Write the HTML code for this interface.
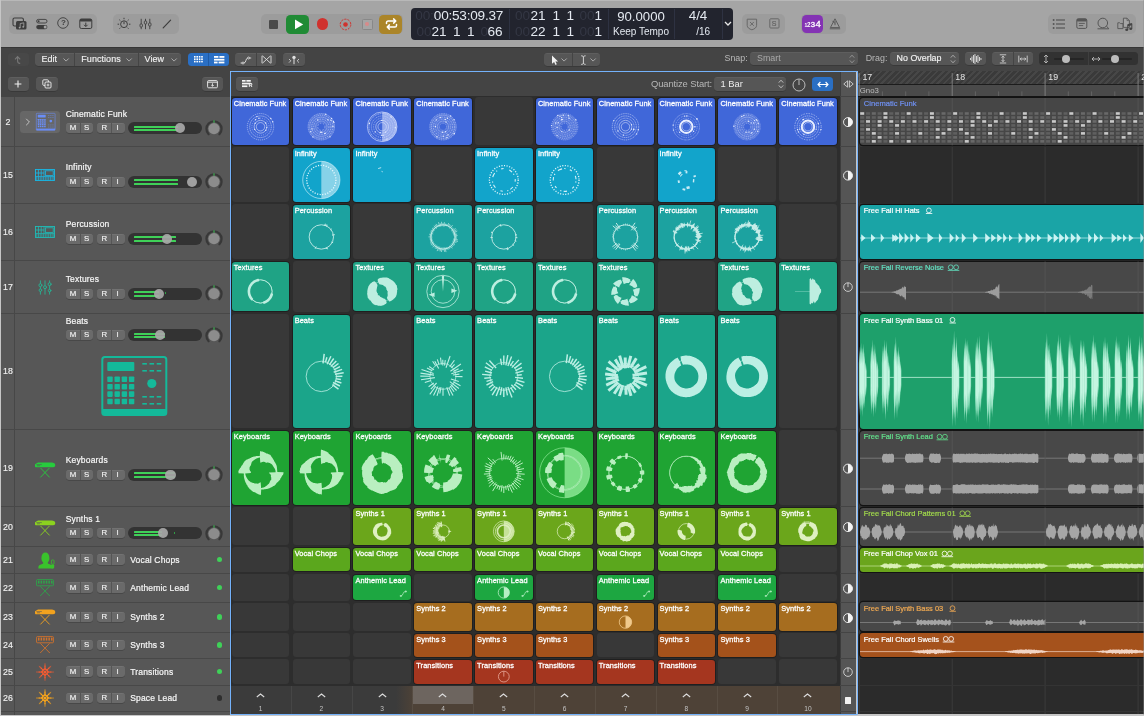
<!DOCTYPE html>
<html lang="en"><head><meta charset="utf-8"><title>Live Loops</title>
<style>
html,body{margin:0;padding:0}
body{width:1144px;height:716px;position:relative;overflow:hidden;background:#c6c6c6;font-family:"Liberation Sans",sans-serif;-webkit-font-smoothing:antialiased}
div,span.t,svg{position:absolute;box-sizing:border-box}
span.t{white-space:nowrap;line-height:1;display:block}
svg{overflow:visible}
.ms{background:#6a6a6a;border-radius:3px;box-shadow:0 0.5px 0 rgba(0,0,0,.35), inset 0 0.5px 0 rgba(255,255,255,.12)}
.cell{border-radius:3px}
.ec{border-radius:3px;background:#383838}
.tb{background:#565656;border-radius:3.5px;box-shadow:0 0.5px 0 rgba(0,0,0,.3), inset 0 0.5px 0 rgba(255,255,255,.1)}
.tg{background:rgba(0,0,0,.05);border-radius:5px}
#app{left:0;top:0;width:1144px;height:716px;will-change:transform}
</style></head><body><div id="app">

<div style="left:1px;top:0px;width:1143px;height:47px;background:#a5a5a5;"></div>
<div style="left:1px;top:0px;width:1143px;height:0.8px;background:#b8b8b8;"></div>
<div class="tg" style="left:9px;top:14px;width:88px;height:19.5px;"></div>
<div class="tg" style="left:113px;top:14px;width:66px;height:19.5px;"></div>
<div class="tg" style="left:261px;top:14px;width:142px;height:19.5px;"></div>
<div class="tg" style="left:741.5px;top:14px;width:43.5px;height:19.5px;"></div>
<div class="tg" style="left:801px;top:14px;width:45px;height:19.5px;"></div>
<div class="tg" style="left:1048px;top:14px;width:87.6px;height:19.5px;"></div>
<svg style="left:12.3px;top:17.4px;" width="16" height="14" viewBox="0 0 16 14"><rect x="1" y="1" width="10.4" height="8" rx="1.5" fill="none" stroke="#3d3d3d" stroke-width="1.1"/>
<rect x="4" y="4" width="10.5" height="8.5" rx="1.5" fill="#3d3d3d"/>
<path d="M8.2 10.6V6.6l3.6-.8v4" stroke="#a5a5a5" stroke-width=".8" fill="none"/><circle cx="7.6" cy="10.6" r=".9" fill="#a5a5a5"/><circle cx="11.2" cy="9.8" r=".9" fill="#a5a5a5"/></svg>
<svg style="left:35px;top:17.5px;" width="14" height="13" viewBox="0 0 14 13"><rect x="1.6" y="1.4" width="10.4" height="3.6" rx="1.8" fill="none" stroke="#3d3d3d" stroke-width="0.9"/><circle cx="3.6" cy="3.2" r="1" fill="#3d3d3d"/>
<rect x="1.2" y="7" width="11.2" height="4.2" rx="2.1" fill="#3d3d3d"/><circle cx="10.2" cy="9.1" r="1.5" fill="#a5a5a5"/></svg>
<svg style="left:57.4px;top:17.3px;" width="12" height="12" viewBox="0 0 12 12"><circle cx="6" cy="6" r="5.3" fill="none" stroke="#3d3d3d" stroke-width="0.9"/></svg>
<span class="t" style="top:19.43px;font-size:8px;color:#3d3d3d;font-weight:700;left:63.5px;transform:translateX(-50%);">?</span>
<svg style="left:79px;top:18px;" width="14" height="12" viewBox="0 0 14 12"><rect x="0.8" y="1" width="12" height="9.5" rx="1.5" fill="none" stroke="#3d3d3d" stroke-width="1"/><rect x="0.8" y="1" width="12" height="2.4" rx="1" fill="#3d3d3d"/>
<path d="M6.8 4.6v3.6M5 6.8l1.8 1.8 1.8-1.8" stroke="#3d3d3d" stroke-width="1" fill="none"/></svg>
<svg style="left:116.7px;top:16.9px;" width="14" height="14" viewBox="0 0 14 14"><circle cx="7" cy="7.2" r="3.4" fill="none" stroke="#3d3d3d" stroke-width="1"/><path d="M7 7.2V4.6" stroke="#3d3d3d" stroke-width="1"/>
<g stroke="#3d3d3d" stroke-width="1" stroke-linecap="round"><path d="M7 1.2v.6M2.6 3l.5.5M11.4 3l-.5.5M1 7.2h.7M12.3 7.2h.7M2.8 11.4l.4-.4M11.2 11.4l-.4-.4"/></g></svg>
<svg style="left:139px;top:18px;" width="13" height="12" viewBox="0 0 13 12"><g stroke="#3d3d3d" stroke-width="0.9" fill="#a5a5a5"><path d="M2.2 0.8v10.4M6.5 0.8v10.4M10.8 0.8v10.4"/>
<rect x="1" y="6" width="2.4" height="3" rx=".8"/><rect x="5.3" y="3" width="2.4" height="3" rx=".8"/><rect x="9.6" y="5" width="2.4" height="3" rx=".8"/></g></svg>
<svg style="left:162px;top:19px;" width="10" height="10" viewBox="0 0 10 10"><path d="M1.2 8.8L8.6 1.2" stroke="#3d3d3d" stroke-width="1.2" stroke-linecap="round"/></svg>
<div style="left:268.7px;top:19.6px;width:9.2px;height:9.2px;background:#4a4a4a;border-radius:1px;"></div>
<div style="left:286px;top:14.5px;width:23.4px;height:19px;background:#208b35;border-radius:4.5px;"></div>
<svg style="left:293.5px;top:18.5px;" width="10" height="11" viewBox="0 0 10 11"><path d="M1 0.6L9.2 5.4 1 10.2z" fill="#fff"/></svg>
<div style="left:316.6px;top:18.3px;width:11.4px;height:11.4px;background:#d0322e;border-radius:6px;"></div>
<svg style="left:338px;top:16.5px;" width="15" height="15" viewBox="0 0 15 15"><circle cx="7.5" cy="7.5" r="5.3" fill="none" stroke="#d0322e" stroke-width="1" stroke-dasharray="2.2 1.1"/><circle cx="7.5" cy="7.5" r="2.3" fill="#d0322e"/></svg>
<div style="left:362px;top:19px;width:10.5px;height:10.5px;background:#a5a5a5;border-radius:1.5px;border:0.7px solid #888;"></div>
<div style="left:365.2px;top:22.2px;width:4px;height:4px;background:#d88a8a;border-radius:2px;"></div>
<div style="left:379px;top:14.5px;width:23.4px;height:19px;background:#ab8529;border-radius:4.5px;"></div>
<svg style="left:384.5px;top:18px;" width="13" height="12" viewBox="0 0 13 12"><g stroke="#fff" stroke-width="1.5" fill="none" stroke-linecap="round" stroke-linejoin="round">
<path d="M1.5 5.6V4.6a1.6 1.6 0 0 1 1.6-1.6h7.4M8.6 0.9l2.2 2.1-2.2 2.1"/><path d="M11.5 6.4v1a1.6 1.6 0 0 1-1.6 1.6H2.5M4.4 11.1L2.2 9l2.2-2.1"/></g></svg>
<div style="left:411px;top:8px;width:322px;height:32px;background:#22242e;border-radius:4px;"></div>
<div style="left:509px;top:9px;width:0.8px;height:30px;background:#2e3242;"></div>
<div style="left:607.5px;top:9px;width:0.8px;height:30px;background:#2e3242;"></div>
<div style="left:674.3px;top:9px;width:0.8px;height:30px;background:#2e3242;"></div>
<div style="left:722px;top:9px;width:0.8px;height:30px;background:#2e3242;"></div>
<span class="t" style="top:9.29px;font-size:13.6px;color:#343744;letter-spacing:-0.2px;left:415.3px;">00:</span>
<span class="t" style="top:9.29px;font-size:13.6px;color:#e4e9f0;letter-spacing:-0.22px;left:433.8px;">00:53:09.37</span>
<span class="t" style="top:24.69px;font-size:13.6px;color:#343744;letter-spacing:-0.2px;left:416.6px;">00</span>
<span class="t" style="top:24.69px;font-size:13.6px;color:#e4e9f0;letter-spacing:-0.2px;left:431.6px;">21</span>
<span class="t" style="top:24.69px;font-size:13.6px;color:#e4e9f0;left:453px;">1</span>
<span class="t" style="top:24.69px;font-size:13.6px;color:#e4e9f0;left:467px;">1</span>
<span class="t" style="top:24.69px;font-size:13.6px;color:#343744;left:480.6px;">0</span>
<span class="t" style="top:24.69px;font-size:13.6px;color:#e4e9f0;letter-spacing:-0.2px;left:487.6px;">66</span>
<span class="t" style="top:9.29px;font-size:13.6px;color:#343744;left:515px;">00</span>
<span class="t" style="top:9.29px;font-size:13.6px;color:#e4e9f0;left:530.5px;">21</span>
<span class="t" style="top:9.29px;font-size:13.6px;color:#e4e9f0;left:552.5px;">1</span>
<span class="t" style="top:9.29px;font-size:13.6px;color:#e4e9f0;left:566.5px;">1</span>
<span class="t" style="top:9.29px;font-size:13.6px;color:#343744;left:579.5px;">00</span>
<span class="t" style="top:9.29px;font-size:13.6px;color:#e4e9f0;left:594.5px;">1</span>
<span class="t" style="top:24.69px;font-size:13.6px;color:#343744;left:515px;">00</span>
<span class="t" style="top:24.69px;font-size:13.6px;color:#e4e9f0;left:530.5px;">22</span>
<span class="t" style="top:24.69px;font-size:13.6px;color:#e4e9f0;left:552.5px;">1</span>
<span class="t" style="top:24.69px;font-size:13.6px;color:#e4e9f0;left:566.5px;">1</span>
<span class="t" style="top:24.69px;font-size:13.6px;color:#343744;left:579.5px;">00</span>
<span class="t" style="top:24.69px;font-size:13.6px;color:#e4e9f0;left:594.5px;">1</span>
<span class="t" style="top:9.63px;font-size:13.2px;color:#e4e9f0;left:641px;transform:translateX(-50%);">90.0000</span>
<span class="t" style="top:27.04px;font-size:10px;color:#e4e9f0;left:641px;transform:translateX(-50%);">Keep Tempo</span>
<span class="t" style="top:9.46px;font-size:13.4px;color:#e4e9f0;left:698px;transform:translateX(-50%);">4/4</span>
<span class="t" style="top:27.04px;font-size:10px;color:#e4e9f0;left:703.2px;transform:translateX(-50%);">/16</span>
<svg style="left:723.5px;top:21px;" width="8" height="6" viewBox="0 0 8 6"><path d="M1 1l3 3 3-3" stroke="#e8e8e8" stroke-width="1.3" fill="none"/></svg>
<svg style="left:746px;top:17.5px;" width="12" height="13" viewBox="0 0 12 13"><path d="M1.2 1.2h9.4v6.2c0 2.2-2 3.6-4.7 4.4C3.2 11 1.2 9.6 1.2 7.4z" fill="none" stroke="#636363" stroke-width="0.9"/><path d="M4 4l3.8 3.8M7.8 4L4 7.8" stroke="#636363" stroke-width="0.9"/></svg>
<svg style="left:768.5px;top:18px;" width="11" height="11" viewBox="0 0 11 11"><rect x="0.8" y="0.8" width="9.2" height="9.2" rx="0.8" fill="none" stroke="#636363" stroke-width="0.9"/></svg>
<span class="t" style="top:20.47px;font-size:7px;color:#636363;left:774.2px;transform:translateX(-50%);-webkit-text-stroke:0.2px #636363;">S</span>
<div style="left:801.8px;top:14.5px;width:21.3px;height:18.6px;background:#8433b4;border-radius:4.5px;"></div>
<span class="t" style="top:22.97px;font-size:5px;color:#fff;font-weight:700;left:804.5px;">1</span>
<span class="t" style="top:21.78px;font-size:6.4px;color:#fff;font-weight:700;left:806.9px;">2</span>
<span class="t" style="top:20.70px;font-size:7.8px;color:#fff;left:810.8px;-webkit-text-stroke:0.3px #fff;">3</span>
<span class="t" style="top:19.27px;font-size:9.6px;color:#fff;left:815.6px;-webkit-text-stroke:0.3px #fff;">4</span>
<svg style="left:828.6px;top:17.6px;" width="12" height="12" viewBox="0 0 12 12"><path d="M6 0.8L10.6 9.6H1.4z" fill="none" stroke="#555" stroke-width="0.9" stroke-linejoin="round"/><path d="M6 3v4.2M3.4 2.8l2.4 2.6" stroke="#555" stroke-width="0.9"/><path d="M0.8 10.8h10.4" stroke="#555" stroke-width="0.9"/></svg>
<svg style="left:1052px;top:18px;" width="14" height="12" viewBox="0 0 14 12"><g fill="#565656"><circle cx="1.6" cy="2" r="1"/><circle cx="1.6" cy="6" r="1"/><circle cx="1.6" cy="10" r="1"/><rect x="4" y="1.4" width="9" height="1.2"/><rect x="4" y="5.4" width="9" height="1.2"/><rect x="4" y="9.4" width="9" height="1.2"/></g></svg>
<svg style="left:1075.5px;top:18px;" width="12" height="12" viewBox="0 0 12 12"><rect x="0.8" y="0.8" width="10" height="9.6" rx="1.5" fill="none" stroke="#565656" stroke-width="1"/><rect x="0.8" y="0.8" width="10" height="2.6" rx="1" fill="#565656"/><path d="M2.8 5.4h6M2.8 7.6h4.4" stroke="#565656" stroke-width="0.9"/></svg>
<svg style="left:1096px;top:17px;" width="14" height="14" viewBox="0 0 14 14"><circle cx="6.8" cy="6" r="4.8" fill="none" stroke="#565656" stroke-width="1"/><path d="M1.5 11.8h11.3" stroke="#565656" stroke-width="1"/><path d="M10.6 9.2l2.2 2.6" stroke="#565656" stroke-width="1"/></svg>
<svg style="left:1116.5px;top:16.5px;" width="17" height="16" viewBox="0 0 17 16"><path d="M0.8 5.8h2l0.8 0.8h2.4v5H0.8z" fill="none" stroke="#565656" stroke-width="0.9"/><path d="M6.4 1.2h3.6l2.4 2.4v6.8H6.4z" fill="#a5a5a5" stroke="#565656" stroke-width="0.9"/><path d="M10 1.2v2.4h2.4" fill="none" stroke="#565656" stroke-width="0.7"/><path d="M10.8 12.6V7.6l4-1v5" stroke="#444" stroke-width="1" fill="none"/><path d="M10.8 7.4l4-1v1.8l-4 1z" fill="#444"/><ellipse cx="9.7" cy="12.7" rx="1.5" ry="1.2" fill="#444"/><ellipse cx="13.7" cy="11.7" rx="1.5" ry="1.2" fill="#444"/></svg>
<div style="left:1px;top:47px;width:1143px;height:24px;background:#444444;"></div>
<div style="left:1px;top:47px;width:1143px;height:0.8px;background:#363636;"></div>
<div style="left:7.6px;top:53px;width:21.8px;height:13.2px;background:#484848;border-radius:3.5px;"></div>
<svg style="left:13px;top:55px;" width="10" height="10" viewBox="0 0 10 10"><path d="M2 4.4L4.6 1.6l2.6 2.8M4.6 1.8v4.2c0 1.6 1 2.4 2.6 2.4" stroke="#777" stroke-width="1.1" fill="none"/></svg>
<div class="tb" style="left:35.2px;top:53px;width:146px;height:13.2px;"></div>
<div style="left:74.3px;top:53px;width:0.7px;height:13.2px;background:#444;"></div>
<div style="left:138px;top:53px;width:0.7px;height:13.2px;background:#444;"></div>
<span class="t" style="top:54.68px;font-size:9px;color:#f0f0f0;letter-spacing:0.05px;left:41.4px;-webkit-text-stroke:0.15px #f0f0f0;">Edit</span>
<svg style="left:62.5px;top:58.4px;" width="6.2" height="4" viewBox="0 0 6.2 4"><path d="M0.5 0.5l2.6 2.6 2.6-2.6" stroke="#a8a8a8" stroke-width="1" fill="none"/></svg>
<span class="t" style="top:54.68px;font-size:9px;color:#f0f0f0;letter-spacing:0.05px;left:81.3px;-webkit-text-stroke:0.15px #f0f0f0;">Functions</span>
<svg style="left:125.5px;top:58.4px;" width="6.2" height="4" viewBox="0 0 6.2 4"><path d="M0.5 0.5l2.6 2.6 2.6-2.6" stroke="#a8a8a8" stroke-width="1" fill="none"/></svg>
<span class="t" style="top:54.68px;font-size:9px;color:#f0f0f0;letter-spacing:0.05px;left:144.6px;-webkit-text-stroke:0.15px #f0f0f0;">View</span>
<svg style="left:170.5px;top:58.4px;" width="6.2" height="4" viewBox="0 0 6.2 4"><path d="M0.5 0.5l2.6 2.6 2.6-2.6" stroke="#a8a8a8" stroke-width="1" fill="none"/></svg>
<div style="left:187.5px;top:53px;width:41.5px;height:13.2px;background:#2a6fc4;border-radius:3.5px;"></div>
<div style="left:208.4px;top:53px;width:0.7px;height:13.2px;background:#1f5aa4;"></div>
<svg style="left:193.6px;top:56.3px;" width="10" height="8" viewBox="0 0 10 8"><rect x="0" y="0" width="1.6" height="1.6" fill="#fff"/><rect x="0" y="2.4" width="1.6" height="1.6" fill="#fff"/><rect x="0" y="4.8" width="1.6" height="1.6" fill="#fff"/><rect x="2.4" y="0" width="1.6" height="1.6" fill="#fff"/><rect x="2.4" y="2.4" width="1.6" height="1.6" fill="#fff"/><rect x="2.4" y="4.8" width="1.6" height="1.6" fill="#fff"/><rect x="4.8" y="0" width="1.6" height="1.6" fill="#fff"/><rect x="4.8" y="2.4" width="1.6" height="1.6" fill="#fff"/><rect x="4.8" y="4.8" width="1.6" height="1.6" fill="#fff"/><rect x="7.2" y="0" width="1.6" height="1.6" fill="#fff"/><rect x="7.2" y="2.4" width="1.6" height="1.6" fill="#fff"/><rect x="7.2" y="4.8" width="1.6" height="1.6" fill="#fff"/></svg>
<svg style="left:213.5px;top:56.2px;" width="11" height="8" viewBox="0 0 11 8"><g fill="#fff"><rect x="0" y="0" width="4.4" height="1.8"/><rect x="5.4" y="0" width="5" height="1.8"/><rect x="0" y="2.8" width="10.4" height="1.8"/><rect x="0" y="5.6" width="3.6" height="1.8"/><rect x="4.6" y="5.6" width="5.8" height="1.8"/></g></svg>
<div class="tb" style="left:235.2px;top:53px;width:40.8px;height:13.2px;"></div>
<div style="left:255.8px;top:53px;width:0.7px;height:13.2px;background:#444;"></div>
<svg style="left:239.5px;top:55px;" width="12" height="10" viewBox="0 0 12 10"><path d="M0.6 8h1.6M4 8c2.2 0 1.6-5 3.8-5M9.6 3h1.6" stroke="#e0e0e0" stroke-width="0.9" fill="none"/><circle cx="3" cy="8" r="1" fill="none" stroke="#e0e0e0" stroke-width="0.8"/><circle cx="8.6" cy="3" r="1" fill="none" stroke="#e0e0e0" stroke-width="0.8"/></svg>
<svg style="left:260.5px;top:55.4px;" width="11" height="9" viewBox="0 0 11 9"><path d="M1 0.8v7.4M10 0.8v7.4M1.4 0.8l8.2 7.4M9.6 0.8L1.4 8.2" stroke="#e0e0e0" stroke-width="0.9" fill="none"/></svg>
<div class="tb" style="left:282.7px;top:53px;width:22.3px;height:13.2px;"></div>
<svg style="left:288px;top:55px;" width="12" height="10" viewBox="0 0 12 10"><path d="M6 3.2v6" stroke="#e0e0e0" stroke-width="1"/><circle cx="6" cy="2.4" r="1.7" fill="#e0e0e0"/><path d="M1 4l1.8 1.8L1 7.6M11 4L9.2 5.8 11 7.6" stroke="#e0e0e0" stroke-width="0.8" fill="none"/></svg>
<div class="tb" style="left:543.8px;top:53px;width:56.4px;height:13.2px;"></div>
<div style="left:571.8px;top:53px;width:0.7px;height:13.2px;background:#444;"></div>
<svg style="left:550.5px;top:54.6px;" width="8" height="11" viewBox="0 0 8 11"><path d="M1 0.6v8.2l2.1-1.9 1.4 3 1.3-.6-1.4-2.9h2.7z" fill="#f2f2f2"/></svg>
<svg style="left:561px;top:58.4px;" width="6.2" height="4" viewBox="0 0 6.2 4"><path d="M0.5 0.5l2.6 2.6 2.6-2.6" stroke="#a8a8a8" stroke-width="1" fill="none"/></svg>
<svg style="left:579.5px;top:54.8px;" width="7" height="10" viewBox="0 0 7 10"><path d="M1.2 0.8c1.2 0 2 .5 2.2 1.2.2-.7 1-1.2 2.2-1.2M3.4 2v6.2M1.2 9.4c1.2 0 2-.5 2.2-1.2.2.7 1 1.2 2.2 1.2" stroke="#f2f2f2" stroke-width="0.8" fill="none"/></svg>
<svg style="left:589.5px;top:58.4px;" width="6.2" height="4" viewBox="0 0 6.2 4"><path d="M0.5 0.5l2.6 2.6 2.6-2.6" stroke="#a8a8a8" stroke-width="1" fill="none"/></svg>
<span class="t" style="top:54.07px;font-size:8.9px;color:#b8b8b8;left:724.5px;">Snap:</span>
<div class="tb" style="left:750.4px;top:52.3px;width:107.6px;height:13px;"></div>
<span class="t" style="top:54.07px;font-size:8.9px;color:#a9a9a9;left:757px;">Smart</span>
<svg style="left:849px;top:53.8px;" width="6" height="10" viewBox="0 0 6 10"><path d="M0.8 3.6L3 1.2l2.2 2.4M0.8 6.4L3 8.8l2.2-2.4" stroke="#9a9a9a" stroke-width="0.9" fill="none"/></svg>
<span class="t" style="top:54.07px;font-size:8.9px;color:#b8b8b8;left:865.7px;">Drag:</span>
<div class="tb" style="left:890.4px;top:52.3px;width:68.4px;height:13px;"></div>
<span class="t" style="top:54.07px;font-size:8.9px;color:#f2f2f2;left:896.6px;-webkit-text-stroke:0.15px #f2f2f2;">No Overlap</span>
<svg style="left:949.5px;top:53.8px;" width="6" height="10" viewBox="0 0 6 10"><path d="M0.8 3.6L3 1.2l2.2 2.4M0.8 6.4L3 8.8l2.2-2.4" stroke="#b0b0b0" stroke-width="0.9" fill="none"/></svg>
<div class="tb" style="left:965.4px;top:52.3px;width:20.4px;height:13px;"></div>
<svg style="left:969.8px;top:53.8px;" width="13" height="10" viewBox="0 0 13 10"><rect x="0" y="4" width="0.9" height="2" fill="#e0e0e0"/><rect x="1.5" y="2.5" width="0.9" height="5" fill="#e0e0e0"/><rect x="3" y="1" width="0.9" height="8" fill="#e0e0e0"/><rect x="4.5" y="0" width="0.9" height="10" fill="#e0e0e0"/><rect x="6" y="2" width="0.9" height="6" fill="#e0e0e0"/><rect x="7.5" y="1" width="0.9" height="8" fill="#e0e0e0"/><rect x="9" y="3" width="0.9" height="4" fill="#e0e0e0"/><rect x="10.5" y="4" width="0.9" height="2" fill="#e0e0e0"/></svg>
<div class="tb" style="left:992px;top:52.3px;width:41.2px;height:13px;"></div>
<div style="left:1012.6px;top:52.3px;width:0.7px;height:13px;background:#444;"></div>
<svg style="left:998.5px;top:54.2px;" width="8" height="10" viewBox="0 0 8 10"><path d="M0.8 0.8h6.4M0.8 9h6.4M4 2.2v5.4M2.6 3.6L4 2.2l1.4 1.4M2.6 6.2L4 7.6l1.4-1.4" stroke="#e0e0e0" stroke-width="0.8" fill="none"/></svg>
<svg style="left:1018px;top:54.8px;" width="10" height="8" viewBox="0 0 10 8"><path d="M0.8 0.6v6.8M9.2 0.6v6.8M2.2 4h5.6M3.6 2.6L2.2 4l1.4 1.4M6.4 2.6L7.8 4 6.4 5.4" stroke="#e0e0e0" stroke-width="0.8" fill="none"/></svg>
<div style="left:1039.4px;top:52.3px;width:98.2px;height:13px;background:#323232;border-radius:3.5px;"></div>
<div style="left:1088.4px;top:52.3px;width:0.7px;height:13px;background:#3f3f3f;"></div>
<svg style="left:1043px;top:54.2px;" width="6" height="10" viewBox="0 0 6 10"><path d="M3 1v8M1 3l2-2 2 2M1 7l2 2 2-2" stroke="#c8c8c8" stroke-width="0.8" fill="none"/></svg>
<div style="left:1053.5px;top:57.6px;width:30px;height:2.4px;background:#252525;border-radius:1.2px;"></div>
<div style="left:1061.6px;top:54.7px;width:8.2px;height:8.2px;background:#bcbcbc;border-radius:4.1px;"></div>
<svg style="left:1091px;top:55.8px;" width="10" height="6" viewBox="0 0 10 6"><path d="M1 3h8M3 1L1 3l2 2M7 1l2 2-2 2" stroke="#c8c8c8" stroke-width="0.8" fill="none"/></svg>
<div style="left:1102px;top:57.6px;width:30px;height:2.4px;background:#252525;border-radius:1.2px;"></div>
<div style="left:1110.7px;top:54.7px;width:8.2px;height:8.2px;background:#bcbcbc;border-radius:4.1px;"></div>
<div style="left:858.2px;top:71px;width:285.8px;height:643.4px;background:#2b2b2b;"></div>
<div style="left:858.2px;top:71.3px;width:285.8px;height:12.9px;background:repeating-linear-gradient(135deg,#3a3a3a 0,#3a3a3a 2.6px,#474747 2.6px,#474747 4.4px);"></div>
<div style="left:858.2px;top:84px;width:285.8px;height:1.1px;background:#1c1c1c;"></div>
<div style="left:858.2px;top:85.1px;width:285.8px;height:10.9px;background:#4a4a4a;"></div>
<div style="left:858.2px;top:95.9px;width:285.8px;height:1.6px;background:#161616;"></div>
<svg style="left:0;top:0" width="1144" height="716" viewBox="0 0 1144 716"><path d="M859.2 73v23" stroke="#8a8a8a" stroke-width="0.8"/><path d="M859.2 97.5V714" stroke="#404040" stroke-width="0.8"/><path d="M882.4 91.4v4.6" stroke="#6a6a6a" stroke-width="0.8"/><path d="M905.7 91.4v4.6" stroke="#6a6a6a" stroke-width="0.8"/><path d="M928.9 91.4v4.6" stroke="#6a6a6a" stroke-width="0.8"/><path d="M952.2 73v23" stroke="#8a8a8a" stroke-width="0.8"/><path d="M952.2 97.5V714" stroke="#404040" stroke-width="0.8"/><path d="M975.4 91.4v4.6" stroke="#6a6a6a" stroke-width="0.8"/><path d="M998.6 91.4v4.6" stroke="#6a6a6a" stroke-width="0.8"/><path d="M1021.9 91.4v4.6" stroke="#6a6a6a" stroke-width="0.8"/><path d="M1045.1 73v23" stroke="#8a8a8a" stroke-width="0.8"/><path d="M1045.1 97.5V714" stroke="#404040" stroke-width="0.8"/><path d="M1068.3 91.4v4.6" stroke="#6a6a6a" stroke-width="0.8"/><path d="M1091.6 91.4v4.6" stroke="#6a6a6a" stroke-width="0.8"/><path d="M1114.8 91.4v4.6" stroke="#6a6a6a" stroke-width="0.8"/><path d="M1138.1 73v23" stroke="#8a8a8a" stroke-width="0.8"/><path d="M1138.1 97.5V714" stroke="#404040" stroke-width="0.8"/><path d="M1161.3 91.4v4.6" stroke="#6a6a6a" stroke-width="0.8"/><path d="M1184.5 91.4v4.6" stroke="#6a6a6a" stroke-width="0.8"/><path d="M1207.8 91.4v4.6" stroke="#6a6a6a" stroke-width="0.8"/></svg>
<span class="t" style="top:72.85px;font-size:8.8px;color:#e6e6e6;left:862.4px;">17</span>
<span class="t" style="top:72.85px;font-size:8.8px;color:#e6e6e6;left:955.35px;">18</span>
<span class="t" style="top:72.85px;font-size:8.8px;color:#e6e6e6;left:1048.3px;">19</span>
<span class="t" style="top:72.85px;font-size:8.8px;color:#e6e6e6;left:1141.25px;">20</span>
<span class="t" style="top:86.60px;font-size:7.8px;color:#bdbdbd;left:859.8px;">Gno3</span>
<div style="left:858.2px;top:145.6px;width:285.8px;height:0.8px;background:#343434;"></div>
<div style="left:858.2px;top:202.6px;width:285.8px;height:0.8px;background:#343434;"></div>
<div style="left:858.2px;top:259.6px;width:285.8px;height:0.8px;background:#343434;"></div>
<div style="left:858.2px;top:312.6px;width:285.8px;height:0.8px;background:#343434;"></div>
<div style="left:858.2px;top:428.6px;width:285.8px;height:0.8px;background:#343434;"></div>
<div style="left:858.2px;top:505.6px;width:285.8px;height:0.8px;background:#343434;"></div>
<div style="left:858.2px;top:545.6px;width:285.8px;height:0.8px;background:#343434;"></div>
<div style="left:858.2px;top:572.6px;width:285.8px;height:0.8px;background:#343434;"></div>
<div style="left:858.2px;top:601.6px;width:285.8px;height:0.8px;background:#343434;"></div>
<div style="left:858.2px;top:631.6px;width:285.8px;height:0.8px;background:#343434;"></div>
<div style="left:858.2px;top:657.6px;width:285.8px;height:0.8px;background:#343434;"></div>
<div style="left:858.2px;top:684.6px;width:285.8px;height:0.8px;background:#343434;"></div>
<div style="left:858.2px;top:710.6px;width:285.8px;height:0.8px;background:#343434;"></div>
<div style="left:859.6px;top:98px;width:288.4px;height:47.4px;background:#464646;border-radius:3.2px;box-shadow:0 0 0 1.2px #131313;"></div>
<span class="t" style="top:100.37px;font-size:7.6px;color:#7091f2;left:863.8px;-webkit-text-stroke:0.2px #7091f2;">Cinematic Funk</span>
<div style="left:859.6px;top:204.6px;width:288.4px;height:54.4px;background:#1aa4a6;border-radius:3.2px;box-shadow:0 0 0 1.2px #131313;"></div>
<span class="t" style="top:207.09px;font-size:7.45px;color:#ffffff;left:863.8px;-webkit-text-stroke:0.2px #ffffff;">Free Fall Hi Hats</span>
<div style="left:859.6px;top:261.5px;width:288.4px;height:50.7px;background:#484848;border-radius:3.2px;box-shadow:0 0 0 1.2px #131313;"></div>
<span class="t" style="top:263.99px;font-size:7.45px;color:#62e2c2;left:863.8px;-webkit-text-stroke:0.2px #62e2c2;">Free Fall Reverse Noise</span>
<div style="left:859.6px;top:314.1px;width:288.4px;height:114.6px;background:#1ea06b;border-radius:3.2px;box-shadow:0 0 0 1.2px #131313;"></div>
<span class="t" style="top:316.59px;font-size:7.45px;color:#ffffff;left:863.8px;-webkit-text-stroke:0.2px #ffffff;">Free Fall Synth Bass 01</span>
<div style="left:859.6px;top:430.9px;width:288.4px;height:74.2px;background:#484848;border-radius:3.2px;box-shadow:0 0 0 1.2px #131313;"></div>
<span class="t" style="top:433.39px;font-size:7.45px;color:#62e28c;left:863.8px;-webkit-text-stroke:0.2px #62e28c;">Free Fall Synth Lead</span>
<div style="left:859.6px;top:507.5px;width:288.4px;height:38px;background:#484848;border-radius:3.2px;box-shadow:0 0 0 1.2px #131313;"></div>
<span class="t" style="top:509.99px;font-size:7.45px;color:#a2da4c;left:863.8px;-webkit-text-stroke:0.2px #a2da4c;">Free Fall Chord Patterns 01</span>
<div style="left:859.6px;top:547.8px;width:288.4px;height:24.2px;background:#6aa51c;border-radius:3.2px;box-shadow:0 0 0 1.2px #131313;"></div>
<span class="t" style="top:550.29px;font-size:7.45px;color:#ffffff;left:863.8px;-webkit-text-stroke:0.2px #ffffff;">Free Fall Chop Vox 01</span>
<div style="left:859.6px;top:602.4px;width:288.4px;height:28.5px;background:#484848;border-radius:3.2px;box-shadow:0 0 0 1.2px #131313;"></div>
<span class="t" style="top:604.89px;font-size:7.45px;color:#f2aa52;left:863.8px;-webkit-text-stroke:0.2px #f2aa52;">Free Fall Synth Bass 03</span>
<div style="left:859.6px;top:633.1px;width:288.4px;height:24.3px;background:#a5521c;border-radius:3.2px;box-shadow:0 0 0 1.2px #131313;"></div>
<span class="t" style="top:635.59px;font-size:7.45px;color:#ffffff;left:863.8px;-webkit-text-stroke:0.2px #ffffff;">Free Fall Chord Swells</span>
<svg style="left:0;top:0" width="1144" height="716" viewBox="0 0 1144 716"><rect x="860.20" y="112.20" width="4" height="2.6" fill="#c9c9c9"/><rect x="860.20" y="116.18" width="4" height="2.6" fill="#5f5f5f"/><rect x="860.20" y="120.16" width="4" height="2.6" fill="#696969"/><rect x="860.20" y="124.14" width="4" height="2.6" fill="#5f5f5f"/><rect x="860.20" y="128.12" width="4" height="2.6" fill="#696969"/><rect x="860.20" y="132.10" width="4" height="2.6" fill="#5f5f5f"/><rect x="860.20" y="136.08" width="4" height="2.6" fill="#696969"/><rect x="860.20" y="140.06" width="4" height="2.6" fill="#5f5f5f"/><rect x="866.01" y="112.20" width="4" height="2.6" fill="#5f5f5f"/><rect x="866.01" y="116.18" width="4" height="2.6" fill="#696969"/><rect x="866.01" y="120.16" width="4" height="2.6" fill="#c9c9c9"/><rect x="866.01" y="124.14" width="4" height="2.6" fill="#696969"/><rect x="866.01" y="128.12" width="4" height="2.6" fill="#c9c9c9"/><rect x="866.01" y="132.10" width="4" height="2.6" fill="#696969"/><rect x="866.01" y="136.08" width="4" height="2.6" fill="#5f5f5f"/><rect x="866.01" y="140.06" width="4" height="2.6" fill="#696969"/><rect x="871.82" y="112.20" width="4" height="2.6" fill="#696969"/><rect x="871.82" y="116.18" width="4" height="2.6" fill="#5f5f5f"/><rect x="871.82" y="120.16" width="4" height="2.6" fill="#696969"/><rect x="871.82" y="124.14" width="4" height="2.6" fill="#5f5f5f"/><rect x="871.82" y="128.12" width="4" height="2.6" fill="#696969"/><rect x="871.82" y="132.10" width="4" height="2.6" fill="#c9c9c9"/><rect x="871.82" y="136.08" width="4" height="2.6" fill="#696969"/><rect x="871.82" y="140.06" width="4" height="2.6" fill="#c9c9c9"/><rect x="877.63" y="112.20" width="4" height="2.6" fill="#5f5f5f"/><rect x="877.63" y="116.18" width="4" height="2.6" fill="#696969"/><rect x="877.63" y="120.16" width="4" height="2.6" fill="#c9c9c9"/><rect x="877.63" y="124.14" width="4" height="2.6" fill="#c9c9c9"/><rect x="877.63" y="128.12" width="4" height="2.6" fill="#5f5f5f"/><rect x="877.63" y="132.10" width="4" height="2.6" fill="#696969"/><rect x="877.63" y="136.08" width="4" height="2.6" fill="#c9c9c9"/><rect x="877.63" y="140.06" width="4" height="2.6" fill="#696969"/><rect x="883.44" y="112.20" width="4" height="2.6" fill="#c9c9c9"/><rect x="883.44" y="116.18" width="4" height="2.6" fill="#c9c9c9"/><rect x="883.44" y="120.16" width="4" height="2.6" fill="#696969"/><rect x="883.44" y="124.14" width="4" height="2.6" fill="#5f5f5f"/><rect x="883.44" y="128.12" width="4" height="2.6" fill="#696969"/><rect x="883.44" y="132.10" width="4" height="2.6" fill="#5f5f5f"/><rect x="883.44" y="136.08" width="4" height="2.6" fill="#696969"/><rect x="883.44" y="140.06" width="4" height="2.6" fill="#5f5f5f"/><rect x="889.25" y="112.20" width="4" height="2.6" fill="#5f5f5f"/><rect x="889.25" y="116.18" width="4" height="2.6" fill="#696969"/><rect x="889.25" y="120.16" width="4" height="2.6" fill="#c9c9c9"/><rect x="889.25" y="124.14" width="4" height="2.6" fill="#696969"/><rect x="889.25" y="128.12" width="4" height="2.6" fill="#5f5f5f"/><rect x="889.25" y="132.10" width="4" height="2.6" fill="#696969"/><rect x="889.25" y="136.08" width="4" height="2.6" fill="#5f5f5f"/><rect x="889.25" y="140.06" width="4" height="2.6" fill="#c9c9c9"/><rect x="895.06" y="112.20" width="4" height="2.6" fill="#696969"/><rect x="895.06" y="116.18" width="4" height="2.6" fill="#5f5f5f"/><rect x="895.06" y="120.16" width="4" height="2.6" fill="#696969"/><rect x="895.06" y="124.14" width="4" height="2.6" fill="#c9c9c9"/><rect x="895.06" y="128.12" width="4" height="2.6" fill="#696969"/><rect x="895.06" y="132.10" width="4" height="2.6" fill="#c9c9c9"/><rect x="895.06" y="136.08" width="4" height="2.6" fill="#696969"/><rect x="895.06" y="140.06" width="4" height="2.6" fill="#5f5f5f"/><rect x="900.87" y="112.20" width="4" height="2.6" fill="#5f5f5f"/><rect x="900.87" y="116.18" width="4" height="2.6" fill="#696969"/><rect x="900.87" y="120.16" width="4" height="2.6" fill="#c9c9c9"/><rect x="900.87" y="124.14" width="4" height="2.6" fill="#696969"/><rect x="900.87" y="128.12" width="4" height="2.6" fill="#5f5f5f"/><rect x="900.87" y="132.10" width="4" height="2.6" fill="#696969"/><rect x="900.87" y="136.08" width="4" height="2.6" fill="#5f5f5f"/><rect x="900.87" y="140.06" width="4" height="2.6" fill="#696969"/><rect x="906.68" y="112.20" width="4" height="2.6" fill="#c9c9c9"/><rect x="906.68" y="116.18" width="4" height="2.6" fill="#5f5f5f"/><rect x="906.68" y="120.16" width="4" height="2.6" fill="#696969"/><rect x="906.68" y="124.14" width="4" height="2.6" fill="#5f5f5f"/><rect x="906.68" y="128.12" width="4" height="2.6" fill="#696969"/><rect x="906.68" y="132.10" width="4" height="2.6" fill="#5f5f5f"/><rect x="906.68" y="136.08" width="4" height="2.6" fill="#696969"/><rect x="906.68" y="140.06" width="4" height="2.6" fill="#c9c9c9"/><rect x="912.48" y="112.20" width="4" height="2.6" fill="#5f5f5f"/><rect x="912.48" y="116.18" width="4" height="2.6" fill="#696969"/><rect x="912.48" y="120.16" width="4" height="2.6" fill="#c9c9c9"/><rect x="912.48" y="124.14" width="4" height="2.6" fill="#696969"/><rect x="912.48" y="128.12" width="4" height="2.6" fill="#5f5f5f"/><rect x="912.48" y="132.10" width="4" height="2.6" fill="#696969"/><rect x="912.48" y="136.08" width="4" height="2.6" fill="#5f5f5f"/><rect x="912.48" y="140.06" width="4" height="2.6" fill="#696969"/><rect x="918.29" y="112.20" width="4" height="2.6" fill="#696969"/><rect x="918.29" y="116.18" width="4" height="2.6" fill="#5f5f5f"/><rect x="918.29" y="120.16" width="4" height="2.6" fill="#696969"/><rect x="918.29" y="124.14" width="4" height="2.6" fill="#5f5f5f"/><rect x="918.29" y="128.12" width="4" height="2.6" fill="#696969"/><rect x="918.29" y="132.10" width="4" height="2.6" fill="#c9c9c9"/><rect x="918.29" y="136.08" width="4" height="2.6" fill="#696969"/><rect x="918.29" y="140.06" width="4" height="2.6" fill="#5f5f5f"/><rect x="924.10" y="112.20" width="4" height="2.6" fill="#5f5f5f"/><rect x="924.10" y="116.18" width="4" height="2.6" fill="#696969"/><rect x="924.10" y="120.16" width="4" height="2.6" fill="#c9c9c9"/><rect x="924.10" y="124.14" width="4" height="2.6" fill="#696969"/><rect x="924.10" y="128.12" width="4" height="2.6" fill="#5f5f5f"/><rect x="924.10" y="132.10" width="4" height="2.6" fill="#696969"/><rect x="924.10" y="136.08" width="4" height="2.6" fill="#5f5f5f"/><rect x="924.10" y="140.06" width="4" height="2.6" fill="#696969"/><rect x="929.91" y="112.20" width="4" height="2.6" fill="#c9c9c9"/><rect x="929.91" y="116.18" width="4" height="2.6" fill="#c9c9c9"/><rect x="929.91" y="120.16" width="4" height="2.6" fill="#696969"/><rect x="929.91" y="124.14" width="4" height="2.6" fill="#5f5f5f"/><rect x="929.91" y="128.12" width="4" height="2.6" fill="#696969"/><rect x="929.91" y="132.10" width="4" height="2.6" fill="#5f5f5f"/><rect x="929.91" y="136.08" width="4" height="2.6" fill="#696969"/><rect x="929.91" y="140.06" width="4" height="2.6" fill="#5f5f5f"/><rect x="935.72" y="112.20" width="4" height="2.6" fill="#5f5f5f"/><rect x="935.72" y="116.18" width="4" height="2.6" fill="#696969"/><rect x="935.72" y="120.16" width="4" height="2.6" fill="#c9c9c9"/><rect x="935.72" y="124.14" width="4" height="2.6" fill="#696969"/><rect x="935.72" y="128.12" width="4" height="2.6" fill="#c9c9c9"/><rect x="935.72" y="132.10" width="4" height="2.6" fill="#696969"/><rect x="935.72" y="136.08" width="4" height="2.6" fill="#c9c9c9"/><rect x="935.72" y="140.06" width="4" height="2.6" fill="#696969"/><rect x="941.53" y="112.20" width="4" height="2.6" fill="#696969"/><rect x="941.53" y="116.18" width="4" height="2.6" fill="#5f5f5f"/><rect x="941.53" y="120.16" width="4" height="2.6" fill="#696969"/><rect x="941.53" y="124.14" width="4" height="2.6" fill="#5f5f5f"/><rect x="941.53" y="128.12" width="4" height="2.6" fill="#696969"/><rect x="941.53" y="132.10" width="4" height="2.6" fill="#c9c9c9"/><rect x="941.53" y="136.08" width="4" height="2.6" fill="#696969"/><rect x="941.53" y="140.06" width="4" height="2.6" fill="#5f5f5f"/><rect x="947.34" y="112.20" width="4" height="2.6" fill="#5f5f5f"/><rect x="947.34" y="116.18" width="4" height="2.6" fill="#696969"/><rect x="947.34" y="120.16" width="4" height="2.6" fill="#c9c9c9"/><rect x="947.34" y="124.14" width="4" height="2.6" fill="#696969"/><rect x="947.34" y="128.12" width="4" height="2.6" fill="#c9c9c9"/><rect x="947.34" y="132.10" width="4" height="2.6" fill="#696969"/><rect x="947.34" y="136.08" width="4" height="2.6" fill="#5f5f5f"/><rect x="947.34" y="140.06" width="4" height="2.6" fill="#696969"/><rect x="953.15" y="112.20" width="4" height="2.6" fill="#c9c9c9"/><rect x="953.15" y="116.18" width="4" height="2.6" fill="#5f5f5f"/><rect x="953.15" y="120.16" width="4" height="2.6" fill="#696969"/><rect x="953.15" y="124.14" width="4" height="2.6" fill="#5f5f5f"/><rect x="953.15" y="128.12" width="4" height="2.6" fill="#696969"/><rect x="953.15" y="132.10" width="4" height="2.6" fill="#5f5f5f"/><rect x="953.15" y="136.08" width="4" height="2.6" fill="#696969"/><rect x="953.15" y="140.06" width="4" height="2.6" fill="#5f5f5f"/><rect x="958.96" y="112.20" width="4" height="2.6" fill="#5f5f5f"/><rect x="958.96" y="116.18" width="4" height="2.6" fill="#696969"/><rect x="958.96" y="120.16" width="4" height="2.6" fill="#c9c9c9"/><rect x="958.96" y="124.14" width="4" height="2.6" fill="#696969"/><rect x="958.96" y="128.12" width="4" height="2.6" fill="#c9c9c9"/><rect x="958.96" y="132.10" width="4" height="2.6" fill="#696969"/><rect x="958.96" y="136.08" width="4" height="2.6" fill="#5f5f5f"/><rect x="958.96" y="140.06" width="4" height="2.6" fill="#696969"/><rect x="964.77" y="112.20" width="4" height="2.6" fill="#696969"/><rect x="964.77" y="116.18" width="4" height="2.6" fill="#5f5f5f"/><rect x="964.77" y="120.16" width="4" height="2.6" fill="#696969"/><rect x="964.77" y="124.14" width="4" height="2.6" fill="#5f5f5f"/><rect x="964.77" y="128.12" width="4" height="2.6" fill="#696969"/><rect x="964.77" y="132.10" width="4" height="2.6" fill="#c9c9c9"/><rect x="964.77" y="136.08" width="4" height="2.6" fill="#696969"/><rect x="964.77" y="140.06" width="4" height="2.6" fill="#c9c9c9"/><rect x="970.58" y="112.20" width="4" height="2.6" fill="#5f5f5f"/><rect x="970.58" y="116.18" width="4" height="2.6" fill="#696969"/><rect x="970.58" y="120.16" width="4" height="2.6" fill="#c9c9c9"/><rect x="970.58" y="124.14" width="4" height="2.6" fill="#c9c9c9"/><rect x="970.58" y="128.12" width="4" height="2.6" fill="#5f5f5f"/><rect x="970.58" y="132.10" width="4" height="2.6" fill="#696969"/><rect x="970.58" y="136.08" width="4" height="2.6" fill="#c9c9c9"/><rect x="970.58" y="140.06" width="4" height="2.6" fill="#696969"/><rect x="976.39" y="112.20" width="4" height="2.6" fill="#c9c9c9"/><rect x="976.39" y="116.18" width="4" height="2.6" fill="#c9c9c9"/><rect x="976.39" y="120.16" width="4" height="2.6" fill="#696969"/><rect x="976.39" y="124.14" width="4" height="2.6" fill="#5f5f5f"/><rect x="976.39" y="128.12" width="4" height="2.6" fill="#696969"/><rect x="976.39" y="132.10" width="4" height="2.6" fill="#5f5f5f"/><rect x="976.39" y="136.08" width="4" height="2.6" fill="#696969"/><rect x="976.39" y="140.06" width="4" height="2.6" fill="#5f5f5f"/><rect x="982.20" y="112.20" width="4" height="2.6" fill="#5f5f5f"/><rect x="982.20" y="116.18" width="4" height="2.6" fill="#696969"/><rect x="982.20" y="120.16" width="4" height="2.6" fill="#c9c9c9"/><rect x="982.20" y="124.14" width="4" height="2.6" fill="#696969"/><rect x="982.20" y="128.12" width="4" height="2.6" fill="#5f5f5f"/><rect x="982.20" y="132.10" width="4" height="2.6" fill="#696969"/><rect x="982.20" y="136.08" width="4" height="2.6" fill="#5f5f5f"/><rect x="982.20" y="140.06" width="4" height="2.6" fill="#696969"/><rect x="988.01" y="112.20" width="4" height="2.6" fill="#696969"/><rect x="988.01" y="116.18" width="4" height="2.6" fill="#5f5f5f"/><rect x="988.01" y="120.16" width="4" height="2.6" fill="#696969"/><rect x="988.01" y="124.14" width="4" height="2.6" fill="#c9c9c9"/><rect x="988.01" y="128.12" width="4" height="2.6" fill="#696969"/><rect x="988.01" y="132.10" width="4" height="2.6" fill="#c9c9c9"/><rect x="988.01" y="136.08" width="4" height="2.6" fill="#696969"/><rect x="988.01" y="140.06" width="4" height="2.6" fill="#5f5f5f"/><rect x="993.82" y="112.20" width="4" height="2.6" fill="#5f5f5f"/><rect x="993.82" y="116.18" width="4" height="2.6" fill="#696969"/><rect x="993.82" y="120.16" width="4" height="2.6" fill="#c9c9c9"/><rect x="993.82" y="124.14" width="4" height="2.6" fill="#696969"/><rect x="993.82" y="128.12" width="4" height="2.6" fill="#5f5f5f"/><rect x="993.82" y="132.10" width="4" height="2.6" fill="#696969"/><rect x="993.82" y="136.08" width="4" height="2.6" fill="#5f5f5f"/><rect x="993.82" y="140.06" width="4" height="2.6" fill="#696969"/><rect x="999.62" y="112.20" width="4" height="2.6" fill="#c9c9c9"/><rect x="999.62" y="116.18" width="4" height="2.6" fill="#5f5f5f"/><rect x="999.62" y="120.16" width="4" height="2.6" fill="#696969"/><rect x="999.62" y="124.14" width="4" height="2.6" fill="#5f5f5f"/><rect x="999.62" y="128.12" width="4" height="2.6" fill="#696969"/><rect x="999.62" y="132.10" width="4" height="2.6" fill="#5f5f5f"/><rect x="999.62" y="136.08" width="4" height="2.6" fill="#696969"/><rect x="999.62" y="140.06" width="4" height="2.6" fill="#5f5f5f"/><rect x="1005.43" y="112.20" width="4" height="2.6" fill="#5f5f5f"/><rect x="1005.43" y="116.18" width="4" height="2.6" fill="#696969"/><rect x="1005.43" y="120.16" width="4" height="2.6" fill="#c9c9c9"/><rect x="1005.43" y="124.14" width="4" height="2.6" fill="#696969"/><rect x="1005.43" y="128.12" width="4" height="2.6" fill="#5f5f5f"/><rect x="1005.43" y="132.10" width="4" height="2.6" fill="#696969"/><rect x="1005.43" y="136.08" width="4" height="2.6" fill="#5f5f5f"/><rect x="1005.43" y="140.06" width="4" height="2.6" fill="#696969"/><rect x="1011.24" y="112.20" width="4" height="2.6" fill="#696969"/><rect x="1011.24" y="116.18" width="4" height="2.6" fill="#5f5f5f"/><rect x="1011.24" y="120.16" width="4" height="2.6" fill="#696969"/><rect x="1011.24" y="124.14" width="4" height="2.6" fill="#5f5f5f"/><rect x="1011.24" y="128.12" width="4" height="2.6" fill="#696969"/><rect x="1011.24" y="132.10" width="4" height="2.6" fill="#c9c9c9"/><rect x="1011.24" y="136.08" width="4" height="2.6" fill="#696969"/><rect x="1011.24" y="140.06" width="4" height="2.6" fill="#5f5f5f"/><rect x="1017.05" y="112.20" width="4" height="2.6" fill="#5f5f5f"/><rect x="1017.05" y="116.18" width="4" height="2.6" fill="#696969"/><rect x="1017.05" y="120.16" width="4" height="2.6" fill="#c9c9c9"/><rect x="1017.05" y="124.14" width="4" height="2.6" fill="#696969"/><rect x="1017.05" y="128.12" width="4" height="2.6" fill="#5f5f5f"/><rect x="1017.05" y="132.10" width="4" height="2.6" fill="#696969"/><rect x="1017.05" y="136.08" width="4" height="2.6" fill="#5f5f5f"/><rect x="1017.05" y="140.06" width="4" height="2.6" fill="#696969"/><rect x="1022.86" y="112.20" width="4" height="2.6" fill="#c9c9c9"/><rect x="1022.86" y="116.18" width="4" height="2.6" fill="#c9c9c9"/><rect x="1022.86" y="120.16" width="4" height="2.6" fill="#696969"/><rect x="1022.86" y="124.14" width="4" height="2.6" fill="#5f5f5f"/><rect x="1022.86" y="128.12" width="4" height="2.6" fill="#696969"/><rect x="1022.86" y="132.10" width="4" height="2.6" fill="#5f5f5f"/><rect x="1022.86" y="136.08" width="4" height="2.6" fill="#696969"/><rect x="1022.86" y="140.06" width="4" height="2.6" fill="#5f5f5f"/><rect x="1028.67" y="112.20" width="4" height="2.6" fill="#5f5f5f"/><rect x="1028.67" y="116.18" width="4" height="2.6" fill="#696969"/><rect x="1028.67" y="120.16" width="4" height="2.6" fill="#c9c9c9"/><rect x="1028.67" y="124.14" width="4" height="2.6" fill="#696969"/><rect x="1028.67" y="128.12" width="4" height="2.6" fill="#c9c9c9"/><rect x="1028.67" y="132.10" width="4" height="2.6" fill="#696969"/><rect x="1028.67" y="136.08" width="4" height="2.6" fill="#c9c9c9"/><rect x="1028.67" y="140.06" width="4" height="2.6" fill="#696969"/><rect x="1034.48" y="112.20" width="4" height="2.6" fill="#696969"/><rect x="1034.48" y="116.18" width="4" height="2.6" fill="#5f5f5f"/><rect x="1034.48" y="120.16" width="4" height="2.6" fill="#696969"/><rect x="1034.48" y="124.14" width="4" height="2.6" fill="#5f5f5f"/><rect x="1034.48" y="128.12" width="4" height="2.6" fill="#696969"/><rect x="1034.48" y="132.10" width="4" height="2.6" fill="#c9c9c9"/><rect x="1034.48" y="136.08" width="4" height="2.6" fill="#696969"/><rect x="1034.48" y="140.06" width="4" height="2.6" fill="#5f5f5f"/><rect x="1040.29" y="112.20" width="4" height="2.6" fill="#5f5f5f"/><rect x="1040.29" y="116.18" width="4" height="2.6" fill="#696969"/><rect x="1040.29" y="120.16" width="4" height="2.6" fill="#c9c9c9"/><rect x="1040.29" y="124.14" width="4" height="2.6" fill="#696969"/><rect x="1040.29" y="128.12" width="4" height="2.6" fill="#5f5f5f"/><rect x="1040.29" y="132.10" width="4" height="2.6" fill="#696969"/><rect x="1040.29" y="136.08" width="4" height="2.6" fill="#5f5f5f"/><rect x="1040.29" y="140.06" width="4" height="2.6" fill="#696969"/><rect x="1046.10" y="112.20" width="4" height="2.6" fill="#c9c9c9"/><rect x="1046.10" y="116.18" width="4" height="2.6" fill="#5f5f5f"/><rect x="1046.10" y="120.16" width="4" height="2.6" fill="#696969"/><rect x="1046.10" y="124.14" width="4" height="2.6" fill="#5f5f5f"/><rect x="1046.10" y="128.12" width="4" height="2.6" fill="#696969"/><rect x="1046.10" y="132.10" width="4" height="2.6" fill="#5f5f5f"/><rect x="1046.10" y="136.08" width="4" height="2.6" fill="#696969"/><rect x="1046.10" y="140.06" width="4" height="2.6" fill="#5f5f5f"/><rect x="1051.91" y="112.20" width="4" height="2.6" fill="#5f5f5f"/><rect x="1051.91" y="116.18" width="4" height="2.6" fill="#696969"/><rect x="1051.91" y="120.16" width="4" height="2.6" fill="#c9c9c9"/><rect x="1051.91" y="124.14" width="4" height="2.6" fill="#696969"/><rect x="1051.91" y="128.12" width="4" height="2.6" fill="#c9c9c9"/><rect x="1051.91" y="132.10" width="4" height="2.6" fill="#696969"/><rect x="1051.91" y="136.08" width="4" height="2.6" fill="#5f5f5f"/><rect x="1051.91" y="140.06" width="4" height="2.6" fill="#696969"/><rect x="1057.72" y="112.20" width="4" height="2.6" fill="#696969"/><rect x="1057.72" y="116.18" width="4" height="2.6" fill="#5f5f5f"/><rect x="1057.72" y="120.16" width="4" height="2.6" fill="#696969"/><rect x="1057.72" y="124.14" width="4" height="2.6" fill="#5f5f5f"/><rect x="1057.72" y="128.12" width="4" height="2.6" fill="#696969"/><rect x="1057.72" y="132.10" width="4" height="2.6" fill="#c9c9c9"/><rect x="1057.72" y="136.08" width="4" height="2.6" fill="#696969"/><rect x="1057.72" y="140.06" width="4" height="2.6" fill="#c9c9c9"/><rect x="1063.53" y="112.20" width="4" height="2.6" fill="#5f5f5f"/><rect x="1063.53" y="116.18" width="4" height="2.6" fill="#696969"/><rect x="1063.53" y="120.16" width="4" height="2.6" fill="#c9c9c9"/><rect x="1063.53" y="124.14" width="4" height="2.6" fill="#c9c9c9"/><rect x="1063.53" y="128.12" width="4" height="2.6" fill="#5f5f5f"/><rect x="1063.53" y="132.10" width="4" height="2.6" fill="#696969"/><rect x="1063.53" y="136.08" width="4" height="2.6" fill="#c9c9c9"/><rect x="1063.53" y="140.06" width="4" height="2.6" fill="#696969"/><rect x="1069.34" y="112.20" width="4" height="2.6" fill="#c9c9c9"/><rect x="1069.34" y="116.18" width="4" height="2.6" fill="#5f5f5f"/><rect x="1069.34" y="120.16" width="4" height="2.6" fill="#696969"/><rect x="1069.34" y="124.14" width="4" height="2.6" fill="#5f5f5f"/><rect x="1069.34" y="128.12" width="4" height="2.6" fill="#696969"/><rect x="1069.34" y="132.10" width="4" height="2.6" fill="#5f5f5f"/><rect x="1069.34" y="136.08" width="4" height="2.6" fill="#696969"/><rect x="1069.34" y="140.06" width="4" height="2.6" fill="#5f5f5f"/><rect x="1075.15" y="112.20" width="4" height="2.6" fill="#5f5f5f"/><rect x="1075.15" y="116.18" width="4" height="2.6" fill="#696969"/><rect x="1075.15" y="120.16" width="4" height="2.6" fill="#c9c9c9"/><rect x="1075.15" y="124.14" width="4" height="2.6" fill="#696969"/><rect x="1075.15" y="128.12" width="4" height="2.6" fill="#5f5f5f"/><rect x="1075.15" y="132.10" width="4" height="2.6" fill="#696969"/><rect x="1075.15" y="136.08" width="4" height="2.6" fill="#5f5f5f"/><rect x="1075.15" y="140.06" width="4" height="2.6" fill="#696969"/><rect x="1080.96" y="112.20" width="4" height="2.6" fill="#696969"/><rect x="1080.96" y="116.18" width="4" height="2.6" fill="#5f5f5f"/><rect x="1080.96" y="120.16" width="4" height="2.6" fill="#696969"/><rect x="1080.96" y="124.14" width="4" height="2.6" fill="#c9c9c9"/><rect x="1080.96" y="128.12" width="4" height="2.6" fill="#696969"/><rect x="1080.96" y="132.10" width="4" height="2.6" fill="#c9c9c9"/><rect x="1080.96" y="136.08" width="4" height="2.6" fill="#696969"/><rect x="1080.96" y="140.06" width="4" height="2.6" fill="#5f5f5f"/><rect x="1086.77" y="112.20" width="4" height="2.6" fill="#5f5f5f"/><rect x="1086.77" y="116.18" width="4" height="2.6" fill="#696969"/><rect x="1086.77" y="120.16" width="4" height="2.6" fill="#c9c9c9"/><rect x="1086.77" y="124.14" width="4" height="2.6" fill="#696969"/><rect x="1086.77" y="128.12" width="4" height="2.6" fill="#5f5f5f"/><rect x="1086.77" y="132.10" width="4" height="2.6" fill="#696969"/><rect x="1086.77" y="136.08" width="4" height="2.6" fill="#5f5f5f"/><rect x="1086.77" y="140.06" width="4" height="2.6" fill="#696969"/><rect x="1092.58" y="112.20" width="4" height="2.6" fill="#c9c9c9"/><rect x="1092.58" y="116.18" width="4" height="2.6" fill="#5f5f5f"/><rect x="1092.58" y="120.16" width="4" height="2.6" fill="#696969"/><rect x="1092.58" y="124.14" width="4" height="2.6" fill="#5f5f5f"/><rect x="1092.58" y="128.12" width="4" height="2.6" fill="#696969"/><rect x="1092.58" y="132.10" width="4" height="2.6" fill="#5f5f5f"/><rect x="1092.58" y="136.08" width="4" height="2.6" fill="#696969"/><rect x="1092.58" y="140.06" width="4" height="2.6" fill="#5f5f5f"/><rect x="1098.38" y="112.20" width="4" height="2.6" fill="#5f5f5f"/><rect x="1098.38" y="116.18" width="4" height="2.6" fill="#696969"/><rect x="1098.38" y="120.16" width="4" height="2.6" fill="#c9c9c9"/><rect x="1098.38" y="124.14" width="4" height="2.6" fill="#696969"/><rect x="1098.38" y="128.12" width="4" height="2.6" fill="#5f5f5f"/><rect x="1098.38" y="132.10" width="4" height="2.6" fill="#696969"/><rect x="1098.38" y="136.08" width="4" height="2.6" fill="#5f5f5f"/><rect x="1098.38" y="140.06" width="4" height="2.6" fill="#696969"/><rect x="1104.19" y="112.20" width="4" height="2.6" fill="#696969"/><rect x="1104.19" y="116.18" width="4" height="2.6" fill="#5f5f5f"/><rect x="1104.19" y="120.16" width="4" height="2.6" fill="#696969"/><rect x="1104.19" y="124.14" width="4" height="2.6" fill="#5f5f5f"/><rect x="1104.19" y="128.12" width="4" height="2.6" fill="#696969"/><rect x="1104.19" y="132.10" width="4" height="2.6" fill="#c9c9c9"/><rect x="1104.19" y="136.08" width="4" height="2.6" fill="#696969"/><rect x="1104.19" y="140.06" width="4" height="2.6" fill="#5f5f5f"/><rect x="1110.00" y="112.20" width="4" height="2.6" fill="#5f5f5f"/><rect x="1110.00" y="116.18" width="4" height="2.6" fill="#696969"/><rect x="1110.00" y="120.16" width="4" height="2.6" fill="#c9c9c9"/><rect x="1110.00" y="124.14" width="4" height="2.6" fill="#696969"/><rect x="1110.00" y="128.12" width="4" height="2.6" fill="#5f5f5f"/><rect x="1110.00" y="132.10" width="4" height="2.6" fill="#696969"/><rect x="1110.00" y="136.08" width="4" height="2.6" fill="#5f5f5f"/><rect x="1110.00" y="140.06" width="4" height="2.6" fill="#696969"/><rect x="1115.81" y="112.20" width="4" height="2.6" fill="#c9c9c9"/><rect x="1115.81" y="116.18" width="4" height="2.6" fill="#c9c9c9"/><rect x="1115.81" y="120.16" width="4" height="2.6" fill="#696969"/><rect x="1115.81" y="124.14" width="4" height="2.6" fill="#5f5f5f"/><rect x="1115.81" y="128.12" width="4" height="2.6" fill="#696969"/><rect x="1115.81" y="132.10" width="4" height="2.6" fill="#5f5f5f"/><rect x="1115.81" y="136.08" width="4" height="2.6" fill="#696969"/><rect x="1115.81" y="140.06" width="4" height="2.6" fill="#5f5f5f"/><rect x="1121.62" y="112.20" width="4" height="2.6" fill="#5f5f5f"/><rect x="1121.62" y="116.18" width="4" height="2.6" fill="#696969"/><rect x="1121.62" y="120.16" width="4" height="2.6" fill="#c9c9c9"/><rect x="1121.62" y="124.14" width="4" height="2.6" fill="#696969"/><rect x="1121.62" y="128.12" width="4" height="2.6" fill="#5f5f5f"/><rect x="1121.62" y="132.10" width="4" height="2.6" fill="#696969"/><rect x="1121.62" y="136.08" width="4" height="2.6" fill="#c9c9c9"/><rect x="1121.62" y="140.06" width="4" height="2.6" fill="#696969"/><rect x="1127.43" y="112.20" width="4" height="2.6" fill="#696969"/><rect x="1127.43" y="116.18" width="4" height="2.6" fill="#5f5f5f"/><rect x="1127.43" y="120.16" width="4" height="2.6" fill="#696969"/><rect x="1127.43" y="124.14" width="4" height="2.6" fill="#5f5f5f"/><rect x="1127.43" y="128.12" width="4" height="2.6" fill="#696969"/><rect x="1127.43" y="132.10" width="4" height="2.6" fill="#c9c9c9"/><rect x="1127.43" y="136.08" width="4" height="2.6" fill="#696969"/><rect x="1127.43" y="140.06" width="4" height="2.6" fill="#5f5f5f"/><rect x="1133.24" y="112.20" width="4" height="2.6" fill="#5f5f5f"/><rect x="1133.24" y="116.18" width="4" height="2.6" fill="#696969"/><rect x="1133.24" y="120.16" width="4" height="2.6" fill="#c9c9c9"/><rect x="1133.24" y="124.14" width="4" height="2.6" fill="#696969"/><rect x="1133.24" y="128.12" width="4" height="2.6" fill="#5f5f5f"/><rect x="1133.24" y="132.10" width="4" height="2.6" fill="#696969"/><rect x="1133.24" y="136.08" width="4" height="2.6" fill="#5f5f5f"/><rect x="1133.24" y="140.06" width="4" height="2.6" fill="#696969"/><rect x="1139.05" y="112.20" width="4" height="2.6" fill="#c9c9c9"/><rect x="1139.05" y="116.18" width="4" height="2.6" fill="#5f5f5f"/><rect x="1139.05" y="120.16" width="4" height="2.6" fill="#696969"/><rect x="1139.05" y="124.14" width="4" height="2.6" fill="#5f5f5f"/><rect x="1139.05" y="128.12" width="4" height="2.6" fill="#696969"/><rect x="1139.05" y="132.10" width="4" height="2.6" fill="#5f5f5f"/><rect x="1139.05" y="136.08" width="4" height="2.6" fill="#696969"/><rect x="1139.05" y="140.06" width="4" height="2.6" fill="#5f5f5f"/><path d="M860 238H1144" stroke="#c4f1f1" stroke-width="0.7"/><path d="M861.2 234.3L865.5 238L861.2 241.7Z" fill="#c9f3f3"/><path d="M871.0 234.0L875.4 238L871.0 242.0Z" fill="#c9f3f3"/><path d="M880.7 233.4L884.2 238L880.7 242.6Z" fill="#c9f3f3"/><path d="M892.2 234.2L898.3 238L892.2 241.8Z" fill="#c9f3f3"/><path d="M895.1 234.2L898.9 238L895.1 241.8Z" fill="#c9f3f3"/><path d="M899.1 232.6L903.3 238L899.1 243.4Z" fill="#c9f3f3"/><path d="M904.6 233.0L908.8 238L904.6 243.0Z" fill="#c9f3f3"/><path d="M910.3 233.4L913.9 238L910.3 242.6Z" fill="#c9f3f3"/><path d="M915.9 233.4L920.7 238L915.9 242.6Z" fill="#c9f3f3"/><path d="M927.5 233.0L933.5 238L927.5 243.0Z" fill="#c9f3f3"/><path d="M938.9 233.3L942.4 238L938.9 242.7Z" fill="#c9f3f3"/><path d="M949.6 233.1L953.9 238L949.6 242.9Z" fill="#c9f3f3"/><path d="M955.7 234.1L959.1 238L955.7 241.9Z" fill="#c9f3f3"/><path d="M961.8 232.9L966.0 238L961.8 243.1Z" fill="#c9f3f3"/><path d="M973.1 233.2L977.9 238L973.1 242.8Z" fill="#c9f3f3"/><path d="M985.2 233.2L990.1 238L985.2 242.8Z" fill="#c9f3f3"/><path d="M991.2 233.9L995.9 238L991.2 242.1Z" fill="#c9f3f3"/><path d="M997.2 233.8L1002.1 238L997.2 242.2Z" fill="#c9f3f3"/><path d="M1003.1 232.9L1006.7 238L1003.1 243.1Z" fill="#c9f3f3"/><path d="M1009.0 234.5L1012.7 238L1009.0 241.5Z" fill="#c9f3f3"/><path d="M1018.6 232.7L1022.7 238L1018.6 243.3Z" fill="#c9f3f3"/><path d="M1025.6 232.8L1030.9 238L1025.6 243.2Z" fill="#c9f3f3"/><path d="M1031.2 233.7L1035.2 238L1031.2 242.3Z" fill="#c9f3f3"/><path d="M1037.0 234.0L1041.3 238L1037.0 242.0Z" fill="#c9f3f3"/><path d="M1047.6 233.5L1052.4 238L1047.6 242.5Z" fill="#c9f3f3"/><path d="M1053.6 233.3L1058.5 238L1053.6 242.7Z" fill="#c9f3f3"/><path d="M1059.2 232.9L1064.2 238L1059.2 243.1Z" fill="#c9f3f3"/><path d="M1065.0 233.3L1068.7 238L1065.0 242.7Z" fill="#c9f3f3"/><path d="M1070.8 232.9L1075.7 238L1070.8 243.1Z" fill="#c9f3f3"/><path d="M1076.6 232.8L1080.9 238L1076.6 243.2Z" fill="#c9f3f3"/><path d="M1088.2 233.2L1091.9 238L1088.2 242.8Z" fill="#c9f3f3"/><path d="M1094.0 233.0L1098.3 238L1094.0 243.0Z" fill="#c9f3f3"/><path d="M1099.8 234.2L1103.3 238L1099.8 241.8Z" fill="#c9f3f3"/><path d="M1111.6 232.9L1116.6 238L1111.6 243.1Z" fill="#c9f3f3"/><path d="M1117.2 234.6L1121.9 238L1117.2 241.4Z" fill="#c9f3f3"/><path d="M1123.0 233.9L1126.6 238L1123.0 242.1Z" fill="#c9f3f3"/><path d="M1128.8 234.2L1133.4 238L1128.8 241.8Z" fill="#c9f3f3"/><path d="M1140.4 232.9L1143.9 238L1140.4 243.1Z" fill="#c9f3f3"/><path d="M860 292.2H1144" stroke="#8d8d8d" stroke-width="0.7"/><path d="M891.6 291.9L892.2 291.9L892.8 291.8L893.4 291.7L894.0 291.6L894.6 291.3L895.2 291.4L895.8 291.0L896.4 290.5L897.0 290.3L897.6 290.6L898.2 289.6L898.8 289.9L899.4 289.6L900.0 288.5L900.6 288.9L901.2 289.1L901.8 288.1L902.4 287.3L903.0 286.6L903.6 288.6L904.2 285.5L904.8 286.9L905.4 287.0L906.0 286.5L906.0 300.8L905.4 298.8L904.8 299.4L904.2 296.9L903.6 297.3L903.0 297.4L902.4 296.3L901.8 295.1L901.2 296.5L900.6 296.2L900.0 296.0L899.4 295.0L898.8 294.0L898.2 294.5L897.6 294.3L897.0 294.2L896.4 293.9L895.8 293.2L895.2 293.3L894.6 293.0L894.0 292.8L893.4 292.6L892.8 292.5L892.2 292.4L891.6 292.5Z" fill="#9c9c9c" opacity="1"/><path d="M985.0 291.9L985.6 291.9L986.2 291.8L986.8 291.7L987.4 291.7L988.0 291.3L988.6 291.1L989.2 291.1L989.8 291.1L990.4 290.2L991.0 290.9L991.6 289.6L992.2 290.2L992.8 290.3L993.4 289.3L994.0 289.4L994.6 289.2L995.2 288.7L995.8 287.0L996.4 287.1L997.0 285.6L997.6 287.9L998.2 285.5L998.8 284.3L999.4 284.2L999.4 299.6L998.8 298.2L998.2 298.8L997.6 297.2L997.0 298.4L996.4 296.1L995.8 296.7L995.2 295.1L994.6 295.8L994.0 295.0L993.4 295.2L992.8 294.4L992.2 294.5L991.6 294.2L991.0 294.1L990.4 293.4L989.8 293.9L989.2 293.5L988.6 292.9L988.0 292.9L987.4 292.6L986.8 292.7L986.2 292.5L985.6 292.4L985.0 292.5Z" fill="#9c9c9c" opacity="1"/><path d="M1078.0 291.9L1078.6 291.9L1079.2 291.8L1079.8 291.7L1080.4 291.6L1081.0 291.4L1081.6 291.3L1082.2 290.9L1082.8 290.5L1083.4 290.7L1084.0 290.9L1084.6 290.1L1085.2 290.0L1085.8 289.5L1086.4 289.7L1087.0 289.2L1087.6 288.5L1088.2 287.8L1088.8 286.9L1089.4 286.8L1090.0 286.3L1090.6 287.2L1091.2 284.7L1091.8 284.9L1092.4 285.6L1092.4 299.1L1091.8 299.3L1091.2 296.9L1090.6 299.2L1090.0 298.2L1089.4 298.0L1088.8 297.3L1088.2 295.5L1087.6 296.9L1087.0 294.8L1086.4 294.4L1085.8 295.0L1085.2 295.1L1084.6 294.1L1084.0 293.5L1083.4 293.6L1082.8 293.6L1082.2 293.7L1081.6 293.1L1081.0 292.8L1080.4 292.8L1079.8 292.6L1079.2 292.6L1078.6 292.4L1078.0 292.5Z" fill="#9c9c9c" opacity="0.6"/><path d="M860 377.4H1144" stroke="#c2f2dc" stroke-width="0.8"/><path d="M860.0 346.0L861.17 363.3V394.7L860.0 415.9L858.87 394.7V363.3ZM861.1 342.5L862.30 361.7V392.7L861.1 411.4L860.00 392.7V361.7ZM862.2 347.3L863.31 363.8V395.3L862.2 417.1L861.01 395.3V363.8ZM863.3 343.4L864.46 362.1V391.8L863.3 409.4L862.16 391.8V362.1ZM864.2 351.8L865.34 365.9V391.4L864.2 408.5L863.04 391.4V365.9ZM865.6 362.3L866.78 370.6V386.6L865.6 397.9L864.48 386.6V370.6ZM871.4 346.1L872.54 363.3V394.1L871.4 414.6L870.24 394.1V363.3ZM872.8 339.3L873.90 360.3V391.9L872.8 409.5L871.60 391.9V360.3ZM873.6 350.4L874.79 365.3V395.5L873.6 417.5L872.49 395.5V365.3ZM874.9 343.8L876.05 362.3V391.4L874.9 408.5L873.75 391.4V362.3ZM875.8 352.4L876.98 366.1V393.8L875.8 413.9L874.68 393.8V366.1ZM877.2 361.5L878.36 370.3V386.7L877.2 398.0L876.06 386.7V370.3ZM883.0 345.1L884.13 362.9V394.1L883.0 414.5L881.83 394.1V362.9ZM884.4 339.3L885.52 360.3V391.6L884.4 408.9L883.22 391.6V360.3ZM885.4 346.3L886.51 363.4V396.8L885.4 420.6L884.21 396.8V363.4ZM886.3 340.4L887.50 360.7V389.7L886.3 404.6L885.20 389.7V360.7ZM887.8 351.7L888.90 365.8V393.1L887.8 412.4L886.60 393.1V365.8ZM888.9 362.2L890.07 370.6V385.6L888.9 395.5L887.77 385.6V370.6ZM894.7 343.3L895.90 362.1V396.6L894.7 420.2L893.60 396.6V362.1ZM895.8 336.2L896.98 358.9V391.3L895.8 408.4L894.68 391.3V358.9ZM897.0 350.6L898.14 365.4V396.1L897.0 418.9L895.84 396.1V365.4ZM898.3 346.0L899.46 363.3V392.2L898.3 410.2L897.16 392.2V363.3ZM899.4 353.1L900.55 366.5V391.1L899.4 407.7L898.25 391.1V366.5ZM900.3 361.7L901.49 370.3V385.3L900.3 395.1L899.19 385.3V370.3ZM952.8 343.1L953.92 362.0V399.8L952.8 427.3L951.62 399.8V362.0ZM954.1 330.2L955.29 356.2V396.0L954.1 418.7L952.99 396.0V356.2ZM955.1 346.5L956.27 363.5V399.4L955.1 426.3L953.97 399.4V363.5ZM956.3 336.3L957.46 358.9V391.4L956.3 408.5L955.16 391.4V358.9ZM957.1 352.7L958.28 366.3V396.1L957.1 419.0L955.98 396.1V366.3ZM958.3 360.4L959.45 369.7V387.3L958.3 399.4L957.15 387.3V369.7ZM964.6 342.8L965.77 361.8V397.4L964.6 421.8L963.47 397.4V361.8ZM965.7 337.5L966.85 359.5V393.9L965.7 414.0L964.55 393.9V359.5ZM966.5 340.4L967.67 360.7V398.3L966.5 423.9L965.37 398.3V360.7ZM967.8 339.2L968.98 360.2V394.4L967.8 415.1L966.68 394.4V360.2ZM969.0 349.9L970.18 365.0V394.6L969.0 415.6L967.88 394.6V365.0ZM970.0 358.8L971.13 369.0V386.6L970.0 397.7L968.83 386.6V369.0ZM976.1 341.6L977.29 361.3V397.5L976.1 422.0L974.99 397.5V361.3ZM977.2 336.6L978.34 359.1V395.4L977.2 417.4L976.04 395.4V359.1ZM978.2 346.8L979.31 363.6V397.9L978.2 423.0L977.01 397.9V363.6ZM979.3 335.3L980.43 358.5V392.9L979.3 411.9L978.13 392.9V358.5ZM980.6 348.9L981.79 364.6V393.5L980.6 413.1L979.49 393.5V364.6ZM981.9 360.4L983.02 369.8V387.3L981.9 399.3L980.72 387.3V369.8ZM987.7 338.5L988.85 359.9V399.5L987.7 426.6L986.55 399.5V359.9ZM988.7 331.1L989.85 356.5V394.8L988.7 416.1L987.55 394.8V356.5ZM989.8 341.0L991.00 361.0V401.2L989.8 430.2L988.70 401.2V361.0ZM991.2 339.7L992.36 360.4V394.2L991.2 414.6L990.06 394.2V360.4ZM992.3 347.9L993.45 364.1V395.5L992.3 417.7L991.15 395.5V364.1ZM993.5 360.1L994.66 369.6V387.8L993.5 400.6L992.36 387.8V369.6ZM1045.9 341.5L1047.06 361.2V397.5L1045.9 422.1L1044.76 397.5V361.2ZM1046.9 332.7L1048.03 357.3V393.9L1046.9 414.1L1045.73 393.9V357.3ZM1048.1 344.6L1049.29 362.6V399.4L1048.1 426.3L1046.99 399.4V362.6ZM1049.1 343.1L1050.23 362.0V392.7L1049.1 411.4L1047.93 392.7V362.0ZM1050.1 352.3L1051.29 366.1V394.8L1050.1 416.1L1048.99 394.8V366.1ZM1051.2 359.4L1052.37 369.3V387.1L1051.2 398.9L1050.07 387.1V369.3ZM1057.4 340.4L1058.59 360.7V395.7L1057.4 418.1L1056.29 395.7V360.7ZM1058.3 334.0L1059.50 357.9V394.6L1058.3 415.6L1057.20 394.6V357.9ZM1059.7 342.9L1060.86 361.9V397.6L1059.7 422.2L1058.56 397.6V361.9ZM1060.6 336.4L1061.79 359.0V390.9L1060.6 407.4L1059.49 390.9V359.0ZM1061.9 351.0L1063.06 365.5V395.4L1061.9 417.4L1060.76 395.4V365.5ZM1062.9 360.1L1064.00 369.6V386.1L1062.9 396.8L1061.70 386.1V369.6ZM1069.0 340.8L1070.17 360.9V398.9L1069.0 425.2L1067.87 398.9V360.9ZM1070.0 333.7L1071.13 357.8V393.1L1070.0 412.3L1068.83 393.1V357.8ZM1071.2 341.8L1072.39 361.4V400.0L1071.2 427.7L1070.09 400.0V361.4ZM1072.2 343.7L1073.38 362.2V390.8L1072.2 407.2L1071.08 390.8V362.2ZM1073.6 354.0L1074.78 366.9V394.8L1073.6 416.1L1072.48 394.8V366.9ZM1074.8 359.7L1075.91 369.4V387.7L1074.8 400.4L1073.61 387.7V369.4ZM1080.7 339.3L1081.86 360.3V397.7L1080.7 422.4L1079.56 397.7V360.3ZM1081.8 339.4L1082.99 360.3V394.5L1081.8 415.4L1080.69 394.5V360.3ZM1083.1 345.7L1084.24 363.1V399.5L1083.1 426.4L1081.94 399.5V363.1ZM1083.9 340.1L1085.04 360.6V392.3L1083.9 410.6L1082.74 392.3V360.6ZM1085.2 352.5L1086.39 366.2V393.8L1085.2 413.8L1084.09 393.8V366.2ZM1086.1 360.5L1087.28 369.8V387.8L1086.1 400.4L1084.98 387.8V369.8ZM1092.2 340.5L1093.38 360.8V397.7L1092.2 422.5L1091.08 397.7V360.8ZM1093.3 334.2L1094.42 358.0V393.3L1093.3 412.8L1092.12 393.3V358.0ZM1094.6 341.7L1095.71 361.4V397.7L1094.6 422.6L1093.41 397.7V361.4ZM1095.7 341.2L1096.85 361.1V392.6L1095.7 411.2L1094.55 392.6V361.1ZM1096.6 351.6L1097.78 365.8V394.8L1096.6 416.1L1095.48 394.8V365.8ZM1097.8 361.3L1098.91 370.1V386.4L1097.8 397.4L1096.61 386.4V370.1ZM1103.8 340.4L1104.91 360.8V398.8L1103.8 425.0L1102.61 398.8V360.8ZM1105.0 336.3L1106.17 358.9V393.6L1105.0 413.5L1103.87 393.6V358.9ZM1106.0 342.1L1107.18 361.5V398.5L1106.0 424.2L1104.88 398.5V361.5ZM1107.3 341.6L1108.48 361.3V391.2L1107.3 408.1L1106.18 391.2V361.3ZM1108.2 352.7L1109.33 366.3V393.6L1108.2 413.5L1107.03 393.6V366.3ZM1109.5 360.4L1110.65 369.7V387.3L1109.5 399.4L1108.35 387.3V369.7ZM1115.7 339.5L1116.81 360.3V398.2L1115.7 423.7L1114.51 398.2V360.3ZM1116.8 335.5L1117.90 358.5V394.2L1116.8 414.8L1115.60 394.2V358.5ZM1117.9 342.4L1119.07 361.7V398.1L1117.9 423.3L1116.77 398.1V361.7ZM1119.0 340.5L1120.17 360.8V392.9L1119.0 412.0L1117.87 392.9V360.8ZM1119.8 351.1L1120.95 365.6V395.4L1119.8 417.3L1118.65 395.4V365.6ZM1121.1 359.5L1122.24 369.4V387.3L1121.1 399.3L1119.94 387.3V369.4ZM1126.9 344.7L1128.09 362.7V396.8L1126.9 420.5L1125.79 396.8V362.7ZM1128.4 334.5L1129.59 358.1V394.6L1128.4 415.7L1127.29 394.6V358.1ZM1129.5 345.9L1130.67 363.2V397.0L1129.5 421.0L1128.37 397.0V363.2ZM1130.5 336.9L1131.62 359.2V391.2L1130.5 408.1L1129.32 391.2V359.2ZM1131.6 352.7L1132.76 366.3V393.4L1131.6 413.0L1130.46 393.4V366.3ZM1132.6 359.4L1133.72 369.3V386.4L1132.6 397.5L1131.42 386.4V369.3ZM1138.9 344.0L1140.02 362.4V397.2L1138.9 421.4L1137.72 397.2V362.4ZM1139.7 335.1L1140.83 358.4V394.3L1139.7 415.1L1138.53 394.3V358.4ZM1141.0 346.9L1142.11 363.7V399.1L1141.0 425.7L1139.81 399.1V363.7ZM1141.9 336.7L1143.07 359.1V392.1L1141.9 410.2L1140.77 392.1V359.1ZM1143.3 352.0L1144.42 366.0V392.3L1143.3 410.5L1142.12 392.3V366.0ZM1144.2 360.0L1145.31 369.6V386.9L1144.2 398.5L1143.01 386.9V369.6Z" fill="#86dcb8" opacity="0.8"/><path d="M860.0 350.4L860.59 365.3V392.3L860.0 410.5L859.44 392.3V365.3ZM861.1 347.4L861.72 363.9V390.6L861.1 406.6L860.57 390.6V363.9ZM862.2 351.5L862.74 365.7V392.8L862.2 411.5L861.59 392.8V365.7ZM863.3 348.1L863.89 364.2V389.8L863.3 404.9L862.74 389.8V364.2ZM864.2 355.4L864.77 367.5V389.4L864.2 404.2L863.62 389.4V367.5ZM865.6 364.4L866.20 371.5V385.3L865.6 395.0L865.05 385.3V371.5ZM871.4 350.4L871.97 365.3V391.8L871.4 409.4L870.82 391.8V365.3ZM872.8 344.7L873.33 362.7V389.8L872.8 405.0L872.18 389.8V362.7ZM873.6 354.2L874.21 367.0V392.9L873.6 411.9L873.06 392.9V367.0ZM874.9 348.5L875.48 364.4V389.4L874.9 404.2L874.33 389.4V364.4ZM875.8 355.9L876.40 367.7V391.5L875.8 408.8L875.25 391.5V367.7ZM877.2 363.8L877.79 371.3V385.4L877.2 395.1L876.64 385.4V371.3ZM883.0 349.7L883.55 364.9V391.8L883.0 409.3L882.40 391.8V364.9ZM884.4 344.6L884.95 362.7V389.6L884.4 404.5L883.80 389.6V362.7ZM885.4 350.6L885.93 365.4V394.1L885.4 414.5L884.78 394.1V365.4ZM886.3 345.6L886.92 363.1V387.9L886.3 400.8L885.77 387.9V363.1ZM887.8 355.3L888.33 367.5V390.9L887.8 407.5L887.18 390.9V367.5ZM888.9 364.3L889.49 371.5V384.4L888.9 393.0L888.34 384.4V371.5ZM894.7 348.1L895.32 364.2V394.0L894.7 414.2L894.17 394.0V364.2ZM895.8 342.0L896.40 361.5V389.4L895.8 404.0L895.25 389.4V361.5ZM897.0 354.4L897.57 367.0V393.5L897.0 413.1L896.42 393.5V367.0ZM898.3 350.4L898.89 365.2V390.1L898.3 405.6L897.74 390.1V365.2ZM899.4 356.5L899.97 368.0V389.1L899.4 403.5L898.82 389.1V368.0ZM900.3 363.9L900.92 371.3V384.2L900.3 392.6L899.77 384.2V371.3ZM952.8 347.9L953.34 364.1V396.7L952.8 420.3L952.19 396.7V364.1ZM954.1 336.8L954.71 359.1V393.4L954.1 412.9L953.56 393.4V359.1ZM955.1 350.8L955.70 365.4V396.3L955.1 419.5L954.55 396.3V365.4ZM956.3 342.0L956.89 361.5V389.4L956.3 404.2L955.74 389.4V361.5ZM957.1 356.1L957.71 367.8V393.5L957.1 413.2L956.56 393.5V367.8ZM958.3 362.8L958.87 370.8V385.9L958.3 396.3L957.72 385.9V370.8ZM964.6 347.6L965.20 364.0V394.6L964.6 415.6L964.05 394.6V364.0ZM965.7 343.1L966.27 362.0V391.6L965.7 408.9L965.12 391.6V362.0ZM966.5 345.6L967.09 363.1V395.4L966.5 417.4L965.94 395.4V363.1ZM967.8 344.6L968.40 362.6V392.0L967.8 409.8L967.25 392.0V362.6ZM969.0 353.8L969.61 366.8V392.2L969.0 410.3L968.46 392.2V366.8ZM970.0 361.4L970.55 370.2V385.3L970.0 394.9L969.40 385.3V370.2ZM976.1 346.6L976.71 363.5V394.6L976.1 415.7L975.56 394.6V363.5ZM977.2 342.4L977.76 361.6V392.9L977.2 411.8L976.61 392.9V361.6ZM978.2 351.1L978.73 365.5V395.0L978.2 416.6L977.58 395.0V365.5ZM979.3 341.2L979.86 361.1V390.7L979.3 407.0L978.71 390.7V361.1ZM980.6 352.9L981.21 366.4V391.2L980.6 408.1L980.06 391.2V366.4ZM981.9 362.8L982.44 370.8V385.9L981.9 396.3L981.29 385.9V370.8ZM987.7 344.0L988.28 362.4V396.4L987.7 419.7L987.13 396.4V362.4ZM988.7 337.5L989.28 359.5V392.4L988.7 410.7L988.13 392.4V359.5ZM989.8 346.1L990.42 363.3V397.8L989.8 422.8L989.27 397.8V363.3ZM991.2 344.9L991.78 362.8V391.8L991.2 409.4L990.63 391.8V362.8ZM992.3 352.0L992.87 366.0V393.0L992.3 412.0L991.72 393.0V366.0ZM993.5 362.5L994.08 370.7V386.4L993.5 397.4L992.93 386.4V370.7ZM1045.9 346.5L1046.49 363.5V394.7L1045.9 415.8L1045.34 394.7V363.5ZM1046.9 339.0L1047.46 360.1V391.6L1046.9 408.9L1046.31 391.6V360.1ZM1048.1 349.2L1048.71 364.7V396.3L1048.1 419.5L1047.56 396.3V364.7ZM1049.1 347.9L1049.66 364.1V390.6L1049.1 406.7L1048.51 390.6V364.1ZM1050.1 355.9L1050.71 367.7V392.4L1050.1 410.7L1049.56 392.4V367.7ZM1051.2 361.9L1051.79 370.4V385.7L1051.2 395.9L1050.64 385.7V370.4ZM1057.4 345.6L1058.02 363.1V393.1L1057.4 412.4L1056.87 393.1V363.1ZM1058.3 340.1L1058.92 360.6V392.2L1058.3 410.3L1057.77 392.2V360.6ZM1059.7 347.7L1060.29 364.0V394.7L1059.7 415.9L1059.14 394.7V364.0ZM1060.6 342.2L1061.22 361.6V389.0L1060.6 403.2L1060.07 389.0V361.6ZM1061.9 354.7L1062.48 367.2V392.9L1061.9 411.8L1061.33 392.9V367.2ZM1062.9 362.5L1063.43 370.7V384.9L1062.9 394.0L1062.28 384.9V370.7ZM1069.0 345.9L1069.59 363.2V395.9L1069.0 418.5L1068.44 395.9V363.2ZM1070.0 339.9L1070.55 360.5V390.9L1070.0 407.4L1069.40 390.9V360.5ZM1071.2 346.8L1071.81 363.6V396.9L1071.2 420.7L1070.66 396.9V363.6ZM1072.2 348.4L1072.80 364.4V388.9L1072.2 403.0L1071.65 388.9V364.4ZM1073.6 357.3L1074.20 368.3V392.4L1073.6 410.7L1073.05 392.4V368.3ZM1074.8 362.2L1075.34 370.6V386.3L1074.8 397.2L1074.19 386.3V370.6ZM1080.7 344.6L1081.28 362.7V394.8L1080.7 416.1L1080.13 394.8V362.7ZM1081.8 344.7L1082.42 362.7V392.1L1081.8 410.1L1081.27 392.1V362.7ZM1083.1 350.1L1083.67 365.1V396.4L1083.1 419.6L1082.52 396.4V365.1ZM1083.9 345.3L1084.46 363.0V390.2L1083.9 405.9L1083.31 390.2V363.0ZM1085.2 356.0L1085.82 367.8V391.5L1085.2 408.7L1084.67 391.5V367.8ZM1086.1 362.9L1086.71 370.9V386.3L1086.1 397.2L1085.56 386.3V370.9ZM1092.2 345.7L1092.80 363.1V394.9L1092.2 416.2L1091.65 394.9V363.1ZM1093.3 340.2L1093.85 360.7V391.1L1093.3 407.9L1092.70 391.1V360.7ZM1094.6 346.7L1095.14 363.6V394.9L1094.6 416.2L1093.99 394.9V363.6ZM1095.7 346.3L1096.28 363.4V390.5L1095.7 406.5L1095.13 390.5V363.4ZM1096.6 355.2L1097.21 367.4V392.4L1096.6 410.7L1096.06 392.4V367.4ZM1097.8 363.5L1098.34 371.2V385.1L1097.8 394.6L1097.19 385.1V371.2ZM1103.8 345.6L1104.33 363.1V395.8L1103.8 418.3L1103.18 395.8V363.1ZM1105.0 342.0L1105.60 361.5V391.4L1105.0 408.4L1104.45 391.4V361.5ZM1106.0 347.0L1106.60 363.7V395.5L1106.0 417.6L1105.45 395.5V363.7ZM1107.3 346.6L1107.90 363.6V389.3L1107.3 403.8L1106.75 389.3V363.6ZM1108.2 356.1L1108.75 367.8V391.4L1108.2 408.4L1107.60 391.4V367.8ZM1109.5 362.8L1110.08 370.8V385.9L1109.5 396.3L1108.93 385.9V370.8ZM1115.7 344.8L1116.24 362.7V395.3L1115.7 417.2L1115.09 395.3V362.7ZM1116.8 341.3L1117.33 361.2V391.9L1116.8 409.5L1116.18 391.9V361.2ZM1117.9 347.3L1118.49 363.9V395.2L1117.9 416.9L1117.34 395.2V363.9ZM1119.0 345.7L1119.59 363.1V390.8L1119.0 407.1L1118.44 390.8V363.1ZM1119.8 354.8L1120.38 367.2V392.9L1119.8 411.7L1119.23 392.9V367.2ZM1121.1 362.0L1121.66 370.5V385.9L1121.1 396.2L1120.51 385.9V370.5ZM1126.9 349.3L1127.51 364.7V394.1L1126.9 414.5L1126.36 394.1V364.7ZM1128.4 340.5L1129.01 360.8V392.2L1128.4 410.4L1127.86 392.2V360.8ZM1129.5 350.3L1130.09 365.2V394.3L1129.5 414.9L1128.94 394.3V365.2ZM1130.5 342.6L1131.04 361.7V389.3L1130.5 403.8L1129.89 389.3V361.7ZM1131.6 356.1L1132.18 367.8V391.2L1131.6 408.0L1131.03 391.2V367.8ZM1132.6 361.9L1133.14 370.4V385.2L1132.6 394.7L1131.99 385.2V370.4ZM1138.9 348.7L1139.44 364.5V394.4L1138.9 415.2L1138.29 394.4V364.5ZM1139.7 341.0L1140.25 361.0V392.0L1139.7 409.8L1139.10 392.0V361.0ZM1141.0 351.2L1141.54 365.6V396.1L1141.0 418.9L1140.39 396.1V365.6ZM1141.9 342.4L1142.50 361.7V390.1L1141.9 405.6L1141.35 390.1V361.7ZM1143.3 355.6L1143.85 367.6V390.2L1143.3 405.9L1142.70 390.2V367.6ZM1144.2 362.4L1144.74 370.7V385.6L1144.2 395.5L1143.59 385.6V370.7Z" fill="#c4f5e1"/><path d="M860 458.2H1144" stroke="#8d8d8d" stroke-width="0.7"/><path d="M882.0 457.0L882.8 454.9L883.6 453.8L884.4 454.0L885.2 453.8L886.0 453.9L886.8 453.6L887.6 454.2L888.4 454.0L889.2 453.8L890.0 453.7L890.8 454.2L891.6 453.6L892.4 453.7L893.2 454.0L894.0 455.5L894.0 461.2L893.2 462.6L892.4 462.6L891.6 462.8L890.8 462.2L890.0 462.8L889.2 462.2L888.4 463.0L887.6 462.4L886.8 462.9L886.0 462.4L885.2 462.2L884.4 462.6L883.6 462.7L882.8 462.2L882.0 459.5Z" fill="#a4a4a4"/><path d="M905.0 456.8L905.8 454.4L906.6 453.6L907.4 453.9L908.2 454.0L909.0 453.6L909.8 453.7L910.6 453.9L911.4 454.3L912.2 453.6L913.0 453.8L913.8 453.9L914.6 453.8L915.4 454.1L916.2 453.8L917.0 453.6L917.8 454.1L918.6 453.8L919.4 453.5L920.2 453.5L921.0 454.2L921.8 454.2L922.6 454.0L923.4 456.2L923.4 460.5L922.6 462.6L921.8 462.3L921.0 462.5L920.2 462.6L919.4 462.6L918.6 462.5L917.8 462.6L917.0 462.7L916.2 462.4L915.4 463.0L914.6 462.8L913.8 462.6L913.0 462.7L912.2 462.2L911.4 462.6L910.6 462.8L909.8 462.7L909.0 462.6L908.2 462.9L907.4 462.9L906.6 462.3L905.8 461.8L905.0 459.6Z" fill="#a4a4a4"/><path d="M929.0 456.9L929.8 454.4L930.6 453.6L931.4 453.5L932.2 453.7L933.0 453.5L933.8 453.5L934.6 454.1L935.4 454.1L936.2 453.6L937.0 453.8L937.8 453.9L938.6 454.0L939.4 453.5L940.2 454.3L941.0 456.8L941.0 459.5L940.2 462.1L939.4 462.9L938.6 463.0L937.8 462.4L937.0 462.9L936.2 463.0L935.4 463.0L934.6 462.9L933.8 462.2L933.0 462.4L932.2 462.6L931.4 462.7L930.6 462.1L929.8 461.8L929.0 459.6Z" fill="#a4a4a4"/><path d="M952.0 456.8L952.8 454.5L953.6 453.4L954.4 453.7L955.2 453.9L956.0 454.1L956.8 453.6L957.6 454.0L958.4 453.6L959.2 454.2L960.0 453.4L960.8 454.1L961.6 453.7L962.4 453.7L963.2 453.9L964.0 453.5L964.8 454.2L965.6 454.2L966.4 453.6L967.2 453.8L968.0 454.0L968.8 453.5L969.6 453.4L970.4 453.9L971.2 453.8L972.0 453.4L972.8 454.1L973.6 453.8L974.4 453.5L975.2 453.4L976.0 453.5L976.8 453.8L977.6 453.4L978.4 454.1L979.2 453.8L980.0 454.2L980.8 453.9L981.6 454.0L982.4 453.8L983.2 453.9L984.0 454.0L984.8 453.8L985.6 454.3L986.4 453.7L987.2 454.2L988.0 453.7L988.8 453.8L989.6 454.1L990.4 453.6L991.2 453.5L992.0 454.2L992.8 453.6L993.6 453.8L994.4 453.8L995.2 454.1L996.0 453.9L996.8 453.8L997.6 454.3L998.4 454.1L999.2 454.1L1000.0 454.0L1000.8 454.0L1001.6 453.7L1002.4 454.2L1003.2 454.2L1004.0 454.0L1004.8 453.6L1005.6 453.5L1006.4 454.3L1007.2 454.0L1008.0 454.1L1008.8 454.2L1009.6 453.5L1010.4 454.1L1011.2 454.2L1012.0 454.0L1012.8 453.8L1013.6 453.9L1014.4 453.4L1015.2 453.7L1016.0 453.8L1016.8 453.7L1017.6 454.2L1018.4 453.8L1019.2 453.9L1020.0 453.5L1020.8 453.6L1021.6 454.1L1022.4 453.6L1023.2 454.2L1024.0 454.1L1024.8 453.7L1025.6 453.8L1026.4 453.7L1027.2 453.8L1028.0 454.0L1028.8 454.2L1029.6 453.9L1030.4 454.1L1031.2 454.2L1032.0 453.4L1032.8 453.7L1033.6 453.5L1034.4 453.6L1035.2 454.2L1036.0 454.0L1036.8 453.5L1037.6 453.9L1038.4 454.9L1038.4 461.4L1037.6 463.0L1036.8 463.0L1036.0 462.1L1035.2 462.3L1034.4 462.9L1033.6 462.9L1032.8 462.9L1032.0 462.2L1031.2 462.7L1030.4 462.6L1029.6 462.4L1028.8 462.5L1028.0 462.5L1027.2 462.9L1026.4 462.9L1025.6 462.5L1024.8 462.7L1024.0 462.3L1023.2 462.4L1022.4 462.4L1021.6 462.3L1020.8 462.6L1020.0 462.6L1019.2 462.2L1018.4 462.6L1017.6 462.2L1016.8 462.3L1016.0 462.4L1015.2 462.2L1014.4 462.5L1013.6 462.5L1012.8 462.9L1012.0 462.3L1011.2 462.3L1010.4 462.3L1009.6 462.1L1008.8 462.9L1008.0 462.9L1007.2 462.7L1006.4 462.7L1005.6 462.9L1004.8 462.3L1004.0 462.6L1003.2 462.7L1002.4 462.4L1001.6 462.8L1000.8 462.3L1000.0 462.3L999.2 463.0L998.4 462.9L997.6 462.4L996.8 462.6L996.0 462.8L995.2 462.4L994.4 462.8L993.6 462.7L992.8 462.7L992.0 462.2L991.2 462.6L990.4 462.6L989.6 462.3L988.8 462.6L988.0 462.2L987.2 463.0L986.4 462.7L985.6 462.4L984.8 462.8L984.0 462.2L983.2 462.6L982.4 462.7L981.6 462.8L980.8 462.7L980.0 462.8L979.2 462.5L978.4 462.3L977.6 462.4L976.8 462.8L976.0 462.4L975.2 462.9L974.4 462.4L973.6 462.2L972.8 462.9L972.0 462.4L971.2 462.5L970.4 462.4L969.6 462.8L968.8 462.6L968.0 462.8L967.2 462.4L966.4 462.8L965.6 462.2L964.8 462.3L964.0 462.5L963.2 462.3L962.4 462.8L961.6 462.4L960.8 462.9L960.0 462.8L959.2 462.4L958.4 462.3L957.6 462.2L956.8 462.3L956.0 462.5L955.2 462.6L954.4 462.2L953.6 462.7L952.8 461.9L952.0 459.6Z" fill="#a4a4a4"/><path d="M1068.0 456.9L1068.8 454.3L1069.6 453.4L1070.4 454.3L1071.2 453.6L1072.0 453.6L1072.8 453.6L1073.6 453.6L1074.4 453.9L1075.2 453.9L1076.0 453.5L1076.8 453.5L1077.6 453.6L1078.4 454.0L1079.2 454.1L1080.0 454.1L1080.8 454.0L1081.6 454.2L1082.4 454.1L1083.2 454.0L1084.0 454.0L1084.8 454.7L1085.6 456.9L1085.6 459.4L1084.8 461.6L1084.0 462.2L1083.2 462.9L1082.4 462.7L1081.6 462.5L1080.8 462.7L1080.0 462.9L1079.2 462.4L1078.4 462.9L1077.6 462.4L1076.8 462.6L1076.0 462.2L1075.2 462.6L1074.4 462.3L1073.6 463.0L1072.8 462.3L1072.0 462.3L1071.2 462.9L1070.4 462.6L1069.6 462.2L1068.8 461.8L1068.0 459.4Z" fill="#a4a4a4"/><path d="M1091.0 457.0L1091.8 454.3L1092.6 453.5L1093.4 454.2L1094.2 453.6L1095.0 454.1L1095.8 453.9L1096.6 453.7L1097.4 454.1L1098.2 453.9L1099.0 453.4L1099.8 453.8L1100.6 453.7L1101.4 453.5L1102.2 453.4L1103.0 454.1L1103.8 454.1L1104.6 453.7L1105.4 453.6L1106.2 454.2L1107.0 454.2L1107.8 454.2L1108.6 455.8L1108.6 460.7L1107.8 462.4L1107.0 462.8L1106.2 462.7L1105.4 462.2L1104.6 462.2L1103.8 463.0L1103.0 462.7L1102.2 462.8L1101.4 462.7L1100.6 462.4L1099.8 462.5L1099.0 462.7L1098.2 462.7L1097.4 462.3L1096.6 462.5L1095.8 462.7L1095.0 462.6L1094.2 462.7L1093.4 462.6L1092.6 462.8L1091.8 461.5L1091.0 459.5Z" fill="#a4a4a4"/><path d="M1114.0 456.9L1114.8 454.5L1115.6 454.0L1116.4 454.0L1117.2 453.5L1118.0 453.6L1118.8 453.6L1119.6 453.8L1120.4 453.9L1121.2 453.5L1122.0 454.2L1122.8 454.2L1123.6 453.6L1124.4 454.1L1125.2 453.9L1126.0 454.3L1126.8 453.7L1127.6 454.0L1128.4 453.7L1129.2 453.6L1130.0 454.1L1130.8 453.7L1131.6 454.0L1132.4 456.4L1132.4 460.1L1131.6 462.7L1130.8 462.6L1130.0 462.6L1129.2 462.6L1128.4 462.3L1127.6 462.7L1126.8 462.2L1126.0 462.8L1125.2 463.0L1124.4 462.3L1123.6 462.7L1122.8 462.1L1122.0 462.6L1121.2 462.2L1120.4 462.9L1119.6 462.2L1118.8 462.5L1118.0 462.9L1117.2 462.5L1116.4 462.9L1115.6 462.3L1114.8 461.6L1114.0 459.5Z" fill="#a4a4a4"/><path d="M1137.0 457.0L1137.8 454.3L1138.6 454.1L1139.4 453.6L1140.2 453.9L1141.0 453.5L1141.8 454.1L1142.6 453.9L1143.4 453.4L1144.2 453.4L1145.0 454.0L1145.8 454.2L1146.6 453.9L1147.4 453.9L1148.2 453.8L1149.0 454.4L1149.8 456.4L1149.8 460.2L1149.0 462.1L1148.2 462.2L1147.4 463.0L1146.6 462.3L1145.8 462.7L1145.0 462.7L1144.2 462.5L1143.4 462.2L1142.6 462.7L1141.8 462.6L1141.0 462.9L1140.2 462.4L1139.4 463.0L1138.6 462.6L1137.8 461.5L1137.0 459.4Z" fill="#a4a4a4"/><path d="M860 489H1144" stroke="#8d8d8d" stroke-width="0.7"/><path d="M882.0 487.6L882.8 485.4L883.6 484.3L884.4 484.7L885.2 485.0L886.0 484.2L886.8 484.4L887.6 484.9L888.4 484.4L889.2 484.3L890.0 484.3L890.8 485.0L891.6 485.1L892.4 484.6L893.2 485.0L894.0 486.3L894.0 491.8L893.2 493.1L892.4 493.8L891.6 493.3L890.8 493.5L890.0 493.1L889.2 493.6L888.4 493.8L887.6 493.0L886.8 493.1L886.0 493.7L885.2 493.2L884.4 493.7L883.6 493.7L882.8 492.9L882.0 490.2Z" fill="#a4a4a4"/><path d="M905.0 487.6L905.8 485.4L906.6 484.3L907.4 484.3L908.2 484.9L909.0 484.8L909.8 484.2L910.6 484.7L911.4 484.9L912.2 484.5L913.0 484.5L913.8 484.7L914.6 484.6L915.4 484.8L916.2 484.8L917.0 484.9L917.8 484.9L918.6 484.3L919.4 484.8L920.2 484.3L921.0 484.4L921.8 485.0L922.6 484.2L923.4 486.6L923.4 491.0L922.6 493.7L921.8 493.3L921.0 493.1L920.2 493.7L919.4 493.8L918.6 493.7L917.8 493.7L917.0 493.4L916.2 493.7L915.4 493.0L914.6 493.2L913.8 493.3L913.0 493.7L912.2 493.0L911.4 493.6L910.6 493.0L909.8 493.3L909.0 493.3L908.2 493.7L907.4 493.2L906.6 493.6L905.8 492.7L905.0 490.3Z" fill="#a4a4a4"/><path d="M929.0 487.7L929.8 485.1L930.6 484.6L931.4 484.9L932.2 484.9L933.0 484.9L933.8 485.0L934.6 484.8L935.4 485.0L936.2 484.3L937.0 484.6L937.8 485.1L938.6 484.6L939.4 484.9L940.2 485.2L941.0 487.6L941.0 490.3L940.2 492.9L939.4 493.7L938.6 493.8L937.8 493.2L937.0 493.7L936.2 493.7L935.4 493.1L934.6 493.4L933.8 493.8L933.0 493.7L932.2 493.7L931.4 493.7L930.6 493.4L929.8 492.7L929.0 490.3Z" fill="#a4a4a4"/><path d="M952.0 487.6L952.8 485.1L953.6 485.0L954.4 484.9L955.2 485.0L956.0 484.3L956.8 484.6L957.6 484.2L958.4 484.9L959.2 485.0L960.0 484.9L960.8 484.6L961.6 484.3L962.4 484.2L963.2 484.3L964.0 484.3L964.8 484.3L965.6 484.8L966.4 484.8L967.2 485.0L968.0 484.5L968.8 484.8L969.6 484.8L970.4 484.5L971.2 484.5L972.0 484.7L972.8 484.2L973.6 484.8L974.4 484.9L975.2 484.6L976.0 484.8L976.8 484.9L977.6 484.8L978.4 484.8L979.2 484.7L980.0 484.6L980.8 485.0L981.6 484.7L982.4 484.3L983.2 484.4L984.0 484.2L984.8 484.8L985.6 484.6L986.4 484.6L987.2 484.5L988.0 484.3L988.8 484.9L989.6 484.9L990.4 484.9L991.2 484.4L992.0 484.7L992.8 484.4L993.6 484.4L994.4 485.0L995.2 484.4L996.0 484.9L996.8 484.7L997.6 484.5L998.4 484.3L999.2 484.2L1000.0 484.4L1000.8 484.9L1001.6 484.5L1002.4 484.7L1003.2 484.3L1004.0 484.3L1004.8 484.4L1005.6 484.5L1006.4 484.7L1007.2 484.6L1008.0 485.1L1008.8 484.7L1009.6 484.8L1010.4 484.6L1011.2 484.3L1012.0 484.2L1012.8 484.8L1013.6 484.3L1014.4 484.5L1015.2 484.7L1016.0 484.3L1016.8 485.0L1017.6 485.1L1018.4 484.9L1019.2 484.9L1020.0 484.6L1020.8 485.1L1021.6 484.6L1022.4 484.5L1023.2 484.2L1024.0 484.5L1024.8 484.4L1025.6 484.4L1026.4 484.2L1027.2 484.6L1028.0 484.8L1028.8 485.0L1029.6 484.9L1030.4 484.6L1031.2 484.8L1032.0 484.7L1032.8 484.4L1033.6 485.0L1034.4 484.8L1035.2 484.6L1036.0 484.8L1036.8 484.9L1037.6 484.8L1038.4 485.6L1038.4 492.2L1037.6 493.0L1036.8 493.4L1036.0 493.5L1035.2 493.1L1034.4 493.4L1033.6 493.2L1032.8 493.0L1032.0 493.7L1031.2 493.2L1030.4 493.5L1029.6 493.0L1028.8 493.3L1028.0 493.3L1027.2 493.8L1026.4 493.8L1025.6 493.5L1024.8 493.6L1024.0 493.6L1023.2 493.5L1022.4 493.6L1021.6 493.3L1020.8 493.5L1020.0 493.2L1019.2 493.0L1018.4 493.4L1017.6 493.7L1016.8 493.3L1016.0 493.6L1015.2 493.1L1014.4 493.6L1013.6 493.0L1012.8 493.1L1012.0 493.7L1011.2 493.8L1010.4 493.5L1009.6 493.1L1008.8 493.5L1008.0 493.4L1007.2 493.8L1006.4 493.2L1005.6 493.5L1004.8 493.4L1004.0 493.5L1003.2 493.0L1002.4 493.1L1001.6 493.4L1000.8 493.0L1000.0 493.8L999.2 493.6L998.4 493.1L997.6 493.4L996.8 493.0L996.0 493.7L995.2 493.2L994.4 493.4L993.6 493.0L992.8 493.5L992.0 493.6L991.2 493.1L990.4 493.6L989.6 493.5L988.8 493.4L988.0 493.2L987.2 493.6L986.4 493.4L985.6 493.6L984.8 493.0L984.0 493.3L983.2 493.3L982.4 493.6L981.6 493.6L980.8 493.5L980.0 493.5L979.2 493.4L978.4 493.4L977.6 493.6L976.8 493.0L976.0 493.4L975.2 493.3L974.4 493.8L973.6 493.5L972.8 493.8L972.0 493.6L971.2 493.2L970.4 492.9L969.6 493.0L968.8 493.6L968.0 493.4L967.2 493.2L966.4 493.8L965.6 493.1L964.8 493.8L964.0 493.2L963.2 493.8L962.4 493.4L961.6 493.2L960.8 493.2L960.0 493.5L959.2 493.6L958.4 493.6L957.6 493.2L956.8 493.8L956.0 493.2L955.2 493.5L954.4 493.1L953.6 493.5L952.8 493.0L952.0 490.4Z" fill="#a4a4a4"/><path d="M1068.0 487.6L1068.8 485.0L1069.6 484.8L1070.4 484.5L1071.2 484.6L1072.0 484.2L1072.8 484.5L1073.6 484.3L1074.4 484.7L1075.2 484.9L1076.0 484.9L1076.8 485.0L1077.6 484.3L1078.4 484.4L1079.2 484.6L1080.0 484.5L1080.8 484.9L1081.6 484.7L1082.4 484.4L1083.2 485.0L1084.0 484.9L1084.8 485.1L1085.6 487.8L1085.6 490.4L1084.8 492.7L1084.0 493.5L1083.2 493.0L1082.4 493.7L1081.6 493.2L1080.8 493.6L1080.0 493.5L1079.2 493.8L1078.4 493.7L1077.6 493.5L1076.8 493.4L1076.0 493.0L1075.2 493.2L1074.4 493.5L1073.6 493.4L1072.8 493.2L1072.0 493.8L1071.2 493.5L1070.4 493.2L1069.6 493.4L1068.8 492.5L1068.0 490.4Z" fill="#a4a4a4"/><path d="M1091.0 487.7L1091.8 485.3L1092.6 485.0L1093.4 484.5L1094.2 484.8L1095.0 484.3L1095.8 484.7L1096.6 484.6L1097.4 484.7L1098.2 484.7L1099.0 484.9L1099.8 484.2L1100.6 484.4L1101.4 484.2L1102.2 484.8L1103.0 484.4L1103.8 484.8L1104.6 484.5L1105.4 484.8L1106.2 484.4L1107.0 484.5L1107.8 485.0L1108.6 486.4L1108.6 491.3L1107.8 493.2L1107.0 493.8L1106.2 493.4L1105.4 493.3L1104.6 493.3L1103.8 493.4L1103.0 493.3L1102.2 493.3L1101.4 493.1L1100.6 493.6L1099.8 493.7L1099.0 493.5L1098.2 493.3L1097.4 493.3L1096.6 493.3L1095.8 493.3L1095.0 493.1L1094.2 493.3L1093.4 493.2L1092.6 493.8L1091.8 492.9L1091.0 490.4Z" fill="#a4a4a4"/><path d="M1114.0 487.6L1114.8 485.3L1115.6 484.9L1116.4 484.5L1117.2 484.4L1118.0 484.9L1118.8 484.4L1119.6 484.6L1120.4 484.9L1121.2 485.0L1122.0 484.4L1122.8 484.8L1123.6 484.3L1124.4 484.2L1125.2 484.7L1126.0 484.9L1126.8 484.8L1127.6 485.0L1128.4 484.6L1129.2 484.6L1130.0 484.7L1130.8 484.7L1131.6 484.5L1132.4 487.3L1132.4 490.7L1131.6 493.4L1130.8 493.4L1130.0 493.1L1129.2 493.2L1128.4 493.0L1127.6 493.2L1126.8 493.4L1126.0 493.2L1125.2 493.3L1124.4 493.3L1123.6 493.4L1122.8 493.6L1122.0 493.7L1121.2 493.5L1120.4 493.2L1119.6 493.1L1118.8 493.8L1118.0 493.6L1117.2 493.1L1116.4 493.2L1115.6 493.5L1114.8 493.0L1114.0 490.2Z" fill="#a4a4a4"/><path d="M1137.0 487.6L1137.8 485.6L1138.6 484.5L1139.4 484.3L1140.2 484.5L1141.0 484.3L1141.8 484.3L1142.6 484.7L1143.4 484.3L1144.2 484.4L1145.0 484.9L1145.8 484.9L1146.6 484.5L1147.4 484.4L1148.2 484.9L1149.0 485.0L1149.8 487.1L1149.8 491.1L1149.0 493.2L1148.2 493.8L1147.4 493.4L1146.6 493.6L1145.8 493.6L1145.0 493.1L1144.2 493.2L1143.4 493.1L1142.6 493.5L1141.8 493.2L1141.0 493.4L1140.2 493.1L1139.4 493.1L1138.6 493.6L1137.8 492.9L1137.0 490.3Z" fill="#a4a4a4"/><path d="M860 532H1144" stroke="#8d8d8d" stroke-width="0.7"/><path d="M860.0 531.8L860.6 529.1L861.2 527.6L861.8 525.4L862.4 524.8L863.0 526.7L863.6 526.2L864.2 527.0L864.8 526.3L865.4 524.4L866.0 524.9L866.6 524.9L867.2 527.0L867.8 527.7L868.4 527.3L869.0 528.1L869.6 529.4L870.2 531.8L870.2 532.2L869.6 536.1L869.0 537.7L868.4 536.5L867.8 538.2L867.2 537.7L866.6 539.2L866.0 539.2L865.4 539.8L864.8 538.3L864.2 540.2L863.6 539.9L863.0 538.0L862.4 538.5L861.8 538.2L861.2 536.1L860.6 535.9L860.0 532.2Z" fill="#a6a6a6"/><path d="M871.6 531.8L872.2 528.1L872.8 528.0L873.4 526.7L874.0 526.4L874.6 526.8L875.2 523.7L875.8 524.4L876.4 525.2L877.0 523.9L877.6 525.8L878.2 525.8L878.8 525.1L879.4 525.6L880.0 526.0L880.6 527.7L881.2 529.5L881.8 531.8L881.8 532.2L881.2 535.1L880.6 535.5L880.0 536.6L879.4 536.9L878.8 539.4L878.2 540.7L877.6 541.0L877.0 538.3L876.4 537.6L875.8 538.3L875.2 539.5L874.6 538.9L874.0 537.4L873.4 536.9L872.8 537.0L872.2 535.0L871.6 532.2Z" fill="#a6a6a6"/><path d="M883.2 531.8L883.8 527.8L884.4 527.6L885.0 527.1L885.6 527.2L886.2 523.7L886.8 526.7L887.4 524.9L888.0 525.5L888.6 526.3L889.2 526.7L889.8 525.0L890.4 523.9L891.0 526.6L891.6 525.3L892.2 528.0L892.8 528.3L893.4 531.8L893.4 532.2L892.8 534.9L892.2 536.3L891.6 536.7L891.0 537.8L890.4 537.7L889.8 539.2L889.2 539.2L888.6 537.9L888.0 539.5L887.4 540.1L886.8 538.7L886.2 537.2L885.6 539.6L885.0 537.4L884.4 537.6L883.8 534.8L883.2 532.2Z" fill="#a6a6a6"/><path d="M894.9 531.8L895.5 527.9L896.1 528.6L896.7 528.0L897.3 527.5L897.9 524.3L898.5 526.3L899.1 523.5L899.7 525.8L900.3 522.9L900.9 523.5L901.5 526.3L902.1 525.8L902.7 526.1L903.3 525.4L903.9 527.9L904.5 527.8L905.1 531.8L905.1 532.2L904.5 534.6L903.9 536.1L903.3 535.9L902.7 536.9L902.1 539.0L901.5 539.2L900.9 539.9L900.3 540.8L899.7 539.8L899.1 538.3L898.5 540.1L897.9 538.9L897.3 538.4L896.7 536.4L896.1 537.2L895.5 535.3L894.9 532.2Z" fill="#a6a6a6"/><path d="M953.0 531.8L953.6 528.9L954.2 528.8L954.8 526.0L955.4 525.0L956.0 524.4L956.6 526.6L957.2 525.2L957.8 526.6L958.4 526.9L959.0 526.6L959.6 524.9L960.2 526.7L960.8 525.1L961.4 527.5L962.0 527.4L962.6 529.1L963.2 531.8L963.2 532.2L962.6 535.1L962.0 536.1L961.4 538.1L960.8 537.6L960.2 539.6L959.6 537.7L959.0 537.2L958.4 537.3L957.8 539.9L957.2 539.9L956.6 540.2L956.0 539.0L955.4 536.9L954.8 538.3L954.2 537.8L953.6 536.1L953.0 532.2Z" fill="#a6a6a6"/><path d="M964.6 531.8L965.2 528.0L965.8 527.4L966.4 527.2L967.0 524.6L967.6 525.3L968.2 524.6L968.8 526.8L969.4 524.8L970.0 523.7L970.6 526.5L971.2 524.9L971.8 526.6L972.4 525.6L973.0 526.7L973.6 526.8L974.2 529.0L974.8 531.8L974.8 532.2L974.2 536.2L973.6 537.2L973.0 538.0L972.4 537.6L971.8 540.0L971.2 538.3L970.6 538.4L970.0 540.5L969.4 540.6L968.8 537.4L968.2 539.3L967.6 537.6L967.0 536.5L966.4 537.8L965.8 536.6L965.2 535.2L964.6 532.2Z" fill="#a6a6a6"/><path d="M976.2 531.8L976.8 529.2L977.4 528.1L978.0 526.5L978.6 524.6L979.2 525.7L979.8 524.1L980.4 525.5L981.0 523.9L981.6 524.9L982.2 523.6L982.8 525.7L983.4 524.8L984.0 524.4L984.6 527.2L985.2 528.0L985.8 529.3L986.4 531.8L986.4 532.2L985.8 536.1L985.2 536.0L984.6 537.3L984.0 536.9L983.4 539.2L982.8 540.3L982.2 541.0L981.6 539.2L981.0 538.9L980.4 537.7L979.8 537.1L979.2 537.1L978.6 538.0L978.0 538.1L977.4 537.5L976.8 535.2L976.2 532.2Z" fill="#a6a6a6"/><path d="M987.8 531.8L988.4 527.8L989.0 526.3L989.6 526.3L990.2 527.1L990.8 526.8L991.4 525.5L992.0 526.6L992.6 525.3L993.2 526.9L993.8 523.3L994.4 526.6L995.0 526.0L995.6 524.4L996.2 525.7L996.8 526.2L997.4 529.6L998.0 531.8L998.0 532.2L997.4 535.0L996.8 536.2L996.2 537.8L995.6 538.9L995.0 536.6L994.4 537.4L993.8 540.0L993.2 539.7L992.6 540.7L992.0 538.2L991.4 537.3L990.8 536.7L990.2 536.4L989.6 538.6L989.0 536.3L988.4 535.2L987.8 532.2Z" fill="#a6a6a6"/><path d="M1045.9 531.8L1046.5 528.2L1047.1 528.5L1047.7 526.9L1048.3 524.8L1048.9 523.8L1049.5 525.0L1050.1 523.8L1050.7 523.9L1051.3 525.5L1051.9 524.6L1052.5 526.4L1053.1 525.8L1053.7 526.0L1054.3 525.4L1054.9 527.3L1055.5 528.5L1056.1 531.8L1056.1 532.2L1055.5 535.0L1054.9 536.8L1054.3 538.8L1053.7 538.7L1053.1 538.6L1052.5 538.9L1051.9 537.8L1051.3 537.4L1050.7 537.5L1050.1 537.1L1049.5 539.9L1048.9 537.9L1048.3 537.4L1047.7 536.6L1047.1 536.7L1046.5 536.1L1045.9 532.2Z" fill="#a6a6a6"/><path d="M1057.5 531.8L1058.1 529.3L1058.7 527.9L1059.3 525.8L1059.9 526.3L1060.5 525.3L1061.1 525.9L1061.7 525.2L1062.3 525.3L1062.9 526.3L1063.5 525.8L1064.1 524.6L1064.7 524.7L1065.3 527.4L1065.9 526.3L1066.5 526.5L1067.1 528.9L1067.7 531.8L1067.7 532.2L1067.1 534.4L1066.5 537.1L1065.9 536.0L1065.3 537.6L1064.7 539.6L1064.1 539.8L1063.5 539.8L1062.9 537.6L1062.3 538.8L1061.7 538.6L1061.1 539.0L1060.5 539.7L1059.9 539.1L1059.3 538.5L1058.7 537.6L1058.1 535.5L1057.5 532.2Z" fill="#a6a6a6"/><path d="M1069.1 531.8L1069.7 528.8L1070.3 526.2L1070.9 526.1L1071.5 525.3L1072.1 526.0L1072.7 526.9L1073.3 525.9L1073.9 525.1L1074.5 526.8L1075.1 523.0L1075.7 525.4L1076.3 527.0L1076.9 524.7L1077.5 527.8L1078.1 528.2L1078.7 528.1L1079.3 531.8L1079.3 532.2L1078.7 535.4L1078.1 537.3L1077.5 538.7L1076.9 539.1L1076.3 539.6L1075.7 539.8L1075.1 537.1L1074.5 538.5L1073.9 537.4L1073.3 540.1L1072.7 538.1L1072.1 538.1L1071.5 537.7L1070.9 537.6L1070.3 535.6L1069.7 534.6L1069.1 532.2Z" fill="#a6a6a6"/><path d="M1080.8 531.8L1081.4 529.6L1082.0 526.6L1082.6 527.4L1083.2 527.6L1083.8 527.3L1084.4 525.7L1085.0 523.9L1085.6 526.3L1086.2 526.8L1086.8 526.3L1087.4 523.7L1088.0 523.9L1088.6 525.5L1089.2 527.8L1089.8 526.9L1090.4 529.1L1091.0 531.8L1091.0 532.2L1090.4 534.4L1089.8 536.5L1089.2 536.6L1088.6 537.1L1088.0 540.2L1087.4 538.5L1086.8 537.6L1086.2 539.7L1085.6 538.5L1085.0 538.4L1084.4 540.0L1083.8 539.2L1083.2 536.9L1082.6 536.4L1082.0 537.8L1081.4 536.3L1080.8 532.2Z" fill="#a6a6a6"/><path d="M1092.4 531.8L1093.0 527.7L1093.6 527.4L1094.2 525.9L1094.8 525.7L1095.4 524.8L1096.0 525.7L1096.6 524.2L1097.2 523.6L1097.8 523.8L1098.4 525.7L1099.0 525.5L1099.6 526.1L1100.2 524.8L1100.8 527.1L1101.4 528.3L1102.0 527.9L1102.6 531.8L1102.6 532.2L1102.0 535.5L1101.4 537.7L1100.8 537.3L1100.2 538.4L1099.6 537.4L1099.0 537.8L1098.4 537.0L1097.8 537.4L1097.2 538.9L1096.6 537.9L1096.0 539.3L1095.4 537.9L1094.8 539.6L1094.2 537.9L1093.6 536.2L1093.0 535.0L1092.4 532.2Z" fill="#a6a6a6"/><path d="M1104.0 531.8L1104.6 528.5L1105.2 527.3L1105.8 526.6L1106.4 527.4L1107.0 524.5L1107.6 525.8L1108.2 524.8L1108.8 523.4L1109.4 524.6L1110.0 523.5L1110.6 525.4L1111.2 524.1L1111.8 527.0L1112.4 525.7L1113.0 528.1L1113.6 528.2L1114.2 531.8L1114.2 532.2L1113.6 534.8L1113.0 535.3L1112.4 536.6L1111.8 537.0L1111.2 540.1L1110.6 540.0L1110.0 540.5L1109.4 537.9L1108.8 540.9L1108.2 538.7L1107.6 538.5L1107.0 536.7L1106.4 537.1L1105.8 536.4L1105.2 536.5L1104.6 535.3L1104.0 532.2Z" fill="#a6a6a6"/><path d="M1115.6 531.8L1116.2 529.4L1116.8 528.0L1117.4 525.3L1118.0 526.2L1118.6 524.0L1119.2 526.0L1119.8 527.0L1120.4 526.4L1121.0 525.1L1121.6 525.3L1122.2 523.3L1122.8 527.4L1123.4 524.8L1124.0 526.5L1124.6 526.9L1125.2 529.6L1125.8 531.8L1125.8 532.2L1125.2 535.7L1124.6 536.1L1124.0 538.1L1123.4 539.4L1122.8 540.2L1122.2 540.3L1121.6 538.1L1121.0 541.0L1120.4 540.4L1119.8 539.1L1119.2 538.8L1118.6 538.2L1118.0 537.8L1117.4 536.9L1116.8 537.5L1116.2 534.6L1115.6 532.2Z" fill="#a6a6a6"/><path d="M1127.2 531.8L1127.8 529.6L1128.4 527.0L1129.0 526.7L1129.6 524.7L1130.2 526.1L1130.8 525.9L1131.4 526.0L1132.0 523.4L1132.6 524.2L1133.2 526.9L1133.8 524.9L1134.4 524.9L1135.0 524.7L1135.6 525.2L1136.2 527.6L1136.8 528.5L1137.4 531.8L1137.4 532.2L1136.8 534.5L1136.2 536.0L1135.6 536.3L1135.0 537.3L1134.4 537.1L1133.8 538.6L1133.2 540.9L1132.6 538.2L1132.0 538.5L1131.4 539.0L1130.8 537.1L1130.2 539.9L1129.6 538.6L1129.0 537.9L1128.4 537.0L1127.8 535.8L1127.2 532.2Z" fill="#a6a6a6"/><path d="M1138.8 531.8L1139.4 529.3L1140.0 527.7L1140.6 527.3L1141.2 526.1L1141.8 524.3L1142.4 524.1L1143.0 524.3L1143.6 524.4L1144.2 523.9L1144.8 525.2L1145.4 524.7L1146.0 527.1L1146.6 525.1L1147.2 526.0L1147.8 528.5L1148.4 529.4L1149.0 531.8L1149.0 532.2L1148.4 534.4L1147.8 537.1L1147.2 537.9L1146.6 536.5L1146.0 538.9L1145.4 538.4L1144.8 537.2L1144.2 538.4L1143.6 541.1L1143.0 539.4L1142.4 537.1L1141.8 537.4L1141.2 536.5L1140.6 538.4L1140.0 535.8L1139.4 534.9L1138.8 532.2Z" fill="#a6a6a6"/><path d="M860 566H1144" stroke="#d9f0b4" stroke-width="0.6"/><path d="M880.0 565.8L880.6 565.6L881.2 565.3L881.8 565.1L882.4 564.5L883.0 564.6L883.6 563.8L884.2 563.6L884.8 563.4L885.4 563.4L886.0 563.5L886.6 563.6L887.2 563.8L887.8 564.2L888.4 563.9L889.0 564.4L889.6 563.2L890.2 563.4L890.8 563.5L891.4 563.5L892.0 563.5L892.6 564.1L893.2 564.0L893.8 564.1L894.4 563.8L895.0 563.2L895.6 564.4L896.2 563.6L896.8 563.3L897.4 563.3L898.0 564.4L898.6 564.4L899.2 564.5L899.8 564.8L900.4 565.3L901.0 565.2L901.6 565.6L901.6 566.4L901.0 566.6L900.4 567.2L899.8 567.3L899.2 567.7L898.6 567.4L898.0 567.4L897.4 568.4L896.8 568.5L896.2 568.1L895.6 568.0L895.0 568.7L894.4 568.1L893.8 568.6L893.2 568.1L892.6 567.8L892.0 568.0L891.4 568.1L890.8 568.5L890.2 568.1L889.6 568.8L889.0 568.4L888.4 567.6L887.8 567.7L887.2 568.7L886.6 567.6L886.0 567.8L885.4 567.7L884.8 568.0L884.2 568.7L883.6 567.4L883.0 567.2L882.4 567.1L881.8 567.2L881.2 566.6L880.6 566.3L880.0 566.2Z" fill="#d9f0b4"/><path d="M906.0 565.8L906.6 565.6L907.2 565.2L907.8 564.9L908.4 564.5L909.0 564.3L909.6 564.1L910.2 564.2L910.8 563.5L911.4 563.2L912.0 563.8L912.6 563.8L913.2 564.0L913.8 563.5L914.4 563.6L915.0 564.0L915.6 564.0L916.2 563.4L916.8 564.1L917.4 563.3L918.0 564.2L918.6 564.6L919.2 564.6L919.8 564.6L920.4 564.9L921.0 565.3L921.6 565.5L921.6 566.4L921.0 566.7L920.4 567.1L919.8 567.2L919.2 567.5L918.6 568.1L918.0 567.6L917.4 567.6L916.8 567.6L916.2 567.8L915.6 568.7L915.0 568.0L914.4 568.1L913.8 568.6L913.2 568.5L912.6 568.7L912.0 567.9L911.4 568.1L910.8 567.7L910.2 568.5L909.6 568.5L909.0 567.5L908.4 567.1L907.8 567.0L907.2 566.8L906.6 566.3L906.0 566.2Z" fill="#d9f0b4"/><path d="M930.0 565.8L930.6 565.7L931.2 565.2L931.8 564.9L932.4 564.6L933.0 564.1L933.6 564.0L934.2 564.4L934.8 563.7L935.4 564.3L936.0 563.7L936.6 563.9L937.2 563.5L937.8 563.6L938.4 563.5L939.0 564.0L939.6 563.3L940.2 564.2L940.8 564.2L941.4 563.9L942.0 563.9L942.6 564.5L943.2 564.2L943.8 564.6L944.4 565.3L945.0 565.3L945.6 565.6L945.6 566.3L945.0 566.8L944.4 566.8L943.8 567.2L943.2 567.7L942.6 568.2L942.0 567.7L941.4 567.5L940.8 568.3L940.2 567.8L939.6 568.4L939.0 567.6L938.4 567.6L937.8 568.7L937.2 568.4L936.6 568.5L936.0 567.7L935.4 568.3L934.8 568.3L934.2 568.6L933.6 568.1L933.0 568.1L932.4 567.3L931.8 567.2L931.2 566.8L930.6 566.3L930.0 566.2Z" fill="#d9f0b4"/><path d="M949.0 565.8L949.6 565.7L950.2 565.5L950.8 565.2L951.4 565.0L952.0 564.3L952.6 563.9L953.2 563.3L953.8 563.5L954.4 563.5L955.0 563.2L955.6 564.1L956.2 564.2L956.8 563.3L957.4 564.2L958.0 564.3L958.6 563.3L959.2 564.4L959.8 564.2L960.4 564.0L961.0 563.3L961.6 563.8L962.2 563.6L962.8 563.6L963.4 563.3L964.0 563.3L964.6 563.7L965.2 564.1L965.8 563.9L966.4 563.2L967.0 563.9L967.6 563.9L968.2 563.3L968.8 564.1L969.4 563.6L970.0 564.3L970.6 564.4L971.2 563.6L971.8 563.2L972.4 564.4L973.0 564.1L973.6 563.9L974.2 563.8L974.8 564.4L975.4 563.6L976.0 564.5L976.6 563.8L977.2 564.0L977.8 564.0L978.4 563.4L979.0 563.3L979.6 563.2L980.2 564.1L980.8 563.9L981.4 563.8L982.0 563.7L982.6 563.2L983.2 563.9L983.8 563.5L984.4 563.9L985.0 563.9L985.6 563.6L986.2 564.0L986.8 563.9L987.4 563.9L988.0 564.2L988.6 564.0L989.2 564.4L989.8 563.8L990.4 563.7L991.0 563.6L991.6 563.6L992.2 563.4L992.8 564.4L993.4 564.3L994.0 563.3L994.6 563.6L995.2 563.2L995.8 563.6L996.4 564.2L997.0 564.2L997.6 564.1L998.2 563.5L998.8 563.9L999.4 563.5L1000.0 564.0L1000.6 564.0L1001.2 564.0L1001.8 564.2L1002.4 564.3L1003.0 563.5L1003.6 563.5L1004.2 563.4L1004.8 564.3L1005.4 563.7L1006.0 563.4L1006.6 563.7L1007.2 563.7L1007.8 563.8L1008.4 564.0L1009.0 563.7L1009.6 564.4L1010.2 564.4L1010.8 563.5L1011.4 563.3L1012.0 564.2L1012.6 564.4L1013.2 564.1L1013.8 564.4L1014.4 563.2L1015.0 564.0L1015.6 563.3L1016.2 564.0L1016.8 563.9L1017.4 563.5L1018.0 563.9L1018.6 563.3L1019.2 564.4L1019.8 563.4L1020.4 564.0L1021.0 563.7L1021.6 564.1L1022.2 564.4L1022.8 564.0L1023.4 564.3L1024.0 563.5L1024.6 563.9L1025.2 563.3L1025.8 563.9L1026.4 564.2L1027.0 564.4L1027.6 563.2L1028.2 563.5L1028.8 563.7L1029.4 564.1L1030.0 563.4L1030.6 563.4L1031.2 564.0L1031.8 564.4L1032.4 564.3L1033.0 564.1L1033.6 563.6L1034.2 564.2L1034.8 564.1L1035.4 564.3L1036.0 563.3L1036.6 563.5L1037.2 564.0L1037.8 563.6L1038.4 564.2L1039.0 563.4L1039.6 563.5L1040.2 563.2L1040.8 564.1L1041.4 563.9L1042.0 563.3L1042.6 564.2L1043.2 563.8L1043.8 563.5L1044.4 564.1L1045.0 564.7L1045.6 564.4L1046.2 564.8L1046.8 565.1L1047.4 565.6L1048.0 565.8L1048.0 566.2L1047.4 566.3L1046.8 566.6L1046.2 566.7L1045.6 566.9L1045.0 567.5L1044.4 568.0L1043.8 567.7L1043.2 568.3L1042.6 568.2L1042.0 568.8L1041.4 568.7L1040.8 568.7L1040.2 568.3L1039.6 567.6L1039.0 567.6L1038.4 567.7L1037.8 568.7L1037.2 568.1L1036.6 568.7L1036.0 568.0L1035.4 568.4L1034.8 567.9L1034.2 567.6L1033.6 567.7L1033.0 567.6L1032.4 568.1L1031.8 568.0L1031.2 567.9L1030.6 568.3L1030.0 568.6L1029.4 567.9L1028.8 567.9L1028.2 568.1L1027.6 568.8L1027.0 568.5L1026.4 568.6L1025.8 568.7L1025.2 568.4L1024.6 567.7L1024.0 568.3L1023.4 567.6L1022.8 568.2L1022.2 568.3L1021.6 568.0L1021.0 568.6L1020.4 568.2L1019.8 567.5L1019.2 568.0L1018.6 568.7L1018.0 567.7L1017.4 567.9L1016.8 568.5L1016.2 567.9L1015.6 568.2L1015.0 567.8L1014.4 567.8L1013.8 567.7L1013.2 567.8L1012.6 568.4L1012.0 568.1L1011.4 568.1L1010.8 568.2L1010.2 568.3L1009.6 568.3L1009.0 567.6L1008.4 568.0L1007.8 568.3L1007.2 568.1L1006.6 568.6L1006.0 568.5L1005.4 568.5L1004.8 568.1L1004.2 568.8L1003.6 567.6L1003.0 568.6L1002.4 568.6L1001.8 568.6L1001.2 568.2L1000.6 568.8L1000.0 568.3L999.4 568.0L998.8 567.9L998.2 568.8L997.6 567.9L997.0 568.7L996.4 567.7L995.8 568.0L995.2 567.9L994.6 567.7L994.0 567.8L993.4 568.7L992.8 568.7L992.2 568.7L991.6 567.8L991.0 567.8L990.4 567.8L989.8 567.8L989.2 568.3L988.6 568.0L988.0 567.5L987.4 568.5L986.8 568.1L986.2 568.4L985.6 568.1L985.0 567.8L984.4 568.2L983.8 567.7L983.2 568.5L982.6 567.7L982.0 567.8L981.4 568.2L980.8 568.6L980.2 567.7L979.6 567.6L979.0 567.9L978.4 568.3L977.8 567.5L977.2 568.7L976.6 568.1L976.0 568.8L975.4 568.2L974.8 567.6L974.2 567.9L973.6 568.0L973.0 568.7L972.4 568.0L971.8 567.8L971.2 567.6L970.6 567.6L970.0 568.3L969.4 568.2L968.8 568.8L968.2 567.7L967.6 568.7L967.0 567.6L966.4 568.3L965.8 567.6L965.2 568.8L964.6 568.2L964.0 568.6L963.4 567.9L962.8 568.4L962.2 568.2L961.6 568.7L961.0 568.8L960.4 568.6L959.8 568.0L959.2 568.3L958.6 567.9L958.0 567.6L957.4 568.7L956.8 567.6L956.2 568.5L955.6 567.9L955.0 567.7L954.4 568.7L953.8 568.4L953.2 568.4L952.6 567.8L952.0 567.3L951.4 566.9L950.8 566.8L950.2 566.6L949.6 566.3L949.0 566.2Z" fill="#d9f0b4"/><path d="M1066.0 565.8L1066.6 565.7L1067.2 565.5L1067.8 564.8L1068.4 564.4L1069.0 564.8L1069.6 564.1L1070.2 563.9L1070.8 563.6L1071.4 563.9L1072.0 564.3L1072.6 563.6L1073.2 563.6L1073.8 564.4L1074.4 563.5L1075.0 563.8L1075.6 564.1L1076.2 564.4L1076.8 564.2L1077.4 563.3L1078.0 563.5L1078.6 563.3L1079.2 564.4L1079.8 563.8L1080.4 564.3L1081.0 563.6L1081.6 563.7L1082.2 563.6L1082.8 564.3L1083.4 564.4L1084.0 563.7L1084.6 564.2L1085.2 563.6L1085.8 563.3L1086.4 563.6L1087.0 563.3L1087.6 563.9L1088.2 563.3L1088.8 563.7L1089.4 563.7L1090.0 564.1L1090.6 564.0L1091.2 564.7L1091.8 564.9L1092.4 565.0L1093.0 565.2L1093.6 565.6L1093.6 566.4L1093.0 566.5L1092.4 566.9L1091.8 567.0L1091.2 567.1L1090.6 568.2L1090.0 567.6L1089.4 568.6L1088.8 567.9L1088.2 568.6L1087.6 568.2L1087.0 568.0L1086.4 567.8L1085.8 567.7L1085.2 568.1L1084.6 567.8L1084.0 568.7L1083.4 568.3L1082.8 568.6L1082.2 568.4L1081.6 567.6L1081.0 568.8L1080.4 568.4L1079.8 568.5L1079.2 568.7L1078.6 568.7L1078.0 568.1L1077.4 567.7L1076.8 567.8L1076.2 568.1L1075.6 568.6L1075.0 568.5L1074.4 568.0L1073.8 568.0L1073.2 567.9L1072.6 567.9L1072.0 567.7L1071.4 568.4L1070.8 567.6L1070.2 568.5L1069.6 568.5L1069.0 567.2L1068.4 567.6L1067.8 566.9L1067.2 566.7L1066.6 566.3L1066.0 566.2Z" fill="#d9f0b4"/><path d="M1100.0 565.8L1100.6 565.6L1101.2 565.2L1101.8 565.0L1102.4 565.1L1103.0 564.6L1103.6 564.0L1104.2 564.2L1104.8 564.0L1105.4 564.0L1106.0 564.2L1106.6 563.7L1107.2 563.7L1107.8 564.3L1108.4 563.6L1109.0 563.9L1109.6 564.0L1110.2 563.7L1110.8 564.0L1111.4 563.3L1112.0 564.3L1112.6 563.8L1113.2 564.2L1113.8 563.8L1114.4 563.6L1115.0 563.6L1115.6 563.7L1116.2 563.7L1116.8 563.9L1117.4 563.3L1118.0 564.1L1118.6 563.8L1119.2 564.2L1119.8 563.8L1120.4 563.3L1121.0 563.5L1121.6 563.4L1122.2 564.1L1122.8 563.5L1123.4 564.2L1124.0 563.7L1124.6 563.8L1125.2 563.6L1125.8 563.9L1126.4 563.3L1127.0 563.5L1127.6 563.9L1128.2 564.0L1128.8 564.4L1129.4 564.3L1130.0 564.3L1130.6 564.1L1131.2 563.6L1131.8 563.5L1132.4 563.4L1133.0 564.0L1133.6 564.2L1134.2 563.9L1134.8 564.3L1135.4 563.8L1136.0 564.4L1136.6 563.9L1137.2 564.1L1137.8 563.6L1138.4 563.7L1139.0 564.0L1139.6 563.9L1140.2 563.7L1140.8 564.4L1141.4 564.4L1142.0 564.0L1142.6 563.5L1143.2 563.9L1143.8 563.4L1144.4 563.8L1145.0 563.5L1145.6 564.0L1146.2 563.6L1146.8 564.8L1147.4 565.0L1148.0 565.2L1148.6 565.0L1149.2 565.3L1149.8 565.7L1149.8 566.3L1149.2 566.6L1148.6 566.8L1148.0 567.3L1147.4 567.6L1146.8 568.0L1146.2 568.2L1145.6 568.1L1145.0 568.5L1144.4 568.1L1143.8 567.5L1143.2 568.3L1142.6 567.7L1142.0 567.9L1141.4 568.4L1140.8 567.6L1140.2 567.9L1139.6 567.7L1139.0 567.6L1138.4 567.6L1137.8 568.0L1137.2 568.5L1136.6 568.1L1136.0 568.7L1135.4 568.2L1134.8 568.2L1134.2 568.6L1133.6 567.9L1133.0 568.2L1132.4 568.2L1131.8 567.8L1131.2 568.0L1130.6 567.7L1130.0 567.7L1129.4 568.6L1128.8 567.8L1128.2 568.7L1127.6 568.4L1127.0 568.4L1126.4 568.2L1125.8 568.4L1125.2 568.1L1124.6 567.6L1124.0 568.5L1123.4 568.2L1122.8 568.6L1122.2 568.5L1121.6 568.0L1121.0 568.3L1120.4 567.8L1119.8 567.8L1119.2 567.7L1118.6 567.9L1118.0 568.7L1117.4 568.3L1116.8 568.1L1116.2 568.8L1115.6 568.1L1115.0 568.4L1114.4 567.7L1113.8 568.6L1113.2 568.0L1112.6 567.6L1112.0 568.7L1111.4 567.7L1110.8 568.1L1110.2 567.9L1109.6 568.2L1109.0 567.6L1108.4 568.6L1107.8 568.5L1107.2 568.2L1106.6 568.3L1106.0 568.7L1105.4 567.7L1104.8 568.5L1104.2 568.4L1103.6 568.0L1103.0 567.3L1102.4 567.0L1101.8 566.8L1101.2 566.5L1100.6 566.3L1100.0 566.2Z" fill="#d9f0b4"/><path d="M860 622.5H1144" stroke="#8d8d8d" stroke-width="0.7"/><path d="M893.0 622.2L893.6 621.4L894.2 620.2L894.8 620.7L895.4 620.7L896.0 621.0L896.6 620.9L897.2 620.8L897.8 620.5L898.4 620.2L899.0 620.9L899.6 620.6L900.2 621.4L900.8 620.6L900.8 624.3L900.2 624.2L899.6 624.2L899.0 624.2L898.4 624.8L897.8 624.4L897.2 624.0L896.6 623.9L896.0 624.4L895.4 624.3L894.8 625.2L894.2 625.2L893.6 623.4L893.0 622.8Z" fill="#a4a4a4"/><path d="M916.0 622.2L916.6 621.5L917.2 619.7L917.8 619.0L918.4 619.4L919.0 620.3L919.6 620.7L920.2 619.9L920.8 619.9L921.4 619.3L922.0 620.4L922.6 620.7L923.2 620.4L923.8 620.1L924.4 620.1L925.0 620.3L925.6 620.3L926.2 620.4L926.8 621.1L927.4 620.8L928.0 619.6L928.6 620.2L929.2 619.9L929.8 620.7L930.4 620.6L931.0 619.8L931.6 620.2L932.2 620.3L932.8 620.0L933.4 621.2L934.0 620.1L934.6 619.5L935.2 619.2L935.8 619.8L936.4 620.6L937.0 621.0L937.6 620.4L938.2 619.2L938.8 620.3L939.4 619.6L940.0 620.2L940.6 620.7L941.2 619.6L941.8 620.1L942.4 620.1L943.0 620.0L943.6 621.0L944.2 621.2L944.8 620.5L945.4 619.4L946.0 619.3L946.6 619.8L947.2 620.6L947.8 621.1L948.4 620.4L949.0 620.3L949.6 619.4L950.2 620.0L950.8 620.8L950.8 623.6L950.2 625.1L949.6 625.3L949.0 625.4L948.4 625.3L947.8 623.8L947.2 624.2L946.6 625.5L946.0 624.5L945.4 626.0L944.8 625.2L944.2 624.7L943.6 624.7L943.0 624.6L942.4 625.0L941.8 624.7L941.2 624.6L940.6 624.2L940.0 623.9L939.4 624.4L938.8 625.1L938.2 625.5L937.6 624.7L937.0 623.5L936.4 624.4L935.8 624.7L935.2 625.0L934.6 625.2L934.0 625.0L933.4 624.1L932.8 625.1L932.2 624.7L931.6 624.8L931.0 625.5L930.4 624.5L929.8 624.0L929.2 624.1L928.6 625.6L928.0 625.3L927.4 624.6L926.8 624.7L926.2 623.7L925.6 625.2L925.0 625.0L924.4 625.1L923.8 624.4L923.2 624.3L922.6 623.9L922.0 624.8L921.4 625.2L920.8 625.7L920.2 624.1L919.6 624.1L919.0 625.0L918.4 624.9L917.8 624.9L917.2 625.2L916.6 623.8L916.0 622.8Z" fill="#a4a4a4"/><path d="M985.0 622.2L985.6 621.8L986.2 620.2L986.8 620.4L987.4 620.2L988.0 621.3L988.6 621.0L989.2 620.9L989.8 620.8L990.4 620.0L991.0 620.7L991.6 621.0L992.2 621.5L992.8 620.7L992.8 624.1L992.2 623.9L991.6 623.9L991.0 625.0L990.4 624.6L989.8 624.4L989.2 624.4L988.6 623.7L988.0 624.0L987.4 624.6L986.8 625.1L986.2 624.9L985.6 623.5L985.0 622.8Z" fill="#a4a4a4"/><path d="M1009.0 622.2L1009.6 621.4L1010.2 619.1L1010.8 619.5L1011.4 619.3L1012.0 620.6L1012.6 621.1L1013.2 620.2L1013.8 619.5L1014.4 619.9L1015.0 619.3L1015.6 620.9L1016.2 621.2L1016.8 619.9L1017.4 619.1L1018.0 619.9L1018.6 620.4L1019.2 620.6L1019.8 620.8L1020.4 619.5L1021.0 619.3L1021.6 619.4L1022.2 620.1L1022.8 620.9L1023.4 620.2L1024.0 619.4L1024.6 619.3L1025.2 620.0L1025.8 620.8L1026.4 620.9L1027.0 620.7L1027.6 619.6L1028.2 619.8L1028.8 619.7L1029.4 619.8L1030.0 620.5L1030.6 620.0L1031.2 619.7L1031.8 618.7L1032.4 619.5L1033.0 620.9L1033.6 621.0L1034.2 620.4L1034.8 619.8L1035.4 620.3L1036.0 620.5L1036.6 621.1L1037.2 621.1L1037.8 620.1L1038.4 620.0L1039.0 619.2L1039.6 620.3L1040.2 620.3L1040.8 620.6L1041.4 619.6L1042.0 620.0L1042.6 619.0L1043.2 620.1L1043.8 621.2L1044.4 619.9L1045.0 620.0L1045.6 618.7L1045.6 625.5L1045.0 624.6L1044.4 624.9L1043.8 624.3L1043.2 624.9L1042.6 624.6L1042.0 624.7L1041.4 624.9L1040.8 624.7L1040.2 624.6L1039.6 625.2L1039.0 625.1L1038.4 625.4L1037.8 625.7L1037.2 624.5L1036.6 624.4L1036.0 625.0L1035.4 625.2L1034.8 624.7L1034.2 624.8L1033.6 624.0L1033.0 624.2L1032.4 624.5L1031.8 625.3L1031.2 624.8L1030.6 624.4L1030.0 624.5L1029.4 624.8L1028.8 625.6L1028.2 625.0L1027.6 624.5L1027.0 624.1L1026.4 623.9L1025.8 624.7L1025.2 625.1L1024.6 624.9L1024.0 625.8L1023.4 624.2L1022.8 623.7L1022.2 625.1L1021.6 626.0L1021.0 625.7L1020.4 625.1L1019.8 624.3L1019.2 624.7L1018.6 625.2L1018.0 625.9L1017.4 625.8L1016.8 624.6L1016.2 624.7L1015.6 624.8L1015.0 624.5L1014.4 625.3L1013.8 624.6L1013.2 624.3L1012.6 623.6L1012.0 624.4L1011.4 624.7L1010.8 625.2L1010.2 624.5L1009.6 623.4L1009.0 622.8Z" fill="#a4a4a4"/><path d="M1079.0 622.2L1079.6 621.7L1080.2 620.3L1080.8 620.7L1081.4 619.6L1082.0 621.2L1082.6 621.2L1083.2 621.0L1083.8 620.6L1084.4 619.5L1085.0 620.6L1085.6 621.2L1085.6 624.5L1085.0 624.6L1084.4 624.8L1083.8 624.5L1083.2 624.3L1082.6 623.6L1082.0 624.2L1081.4 625.2L1080.8 624.5L1080.2 625.2L1079.6 623.7L1079.0 622.8Z" fill="#a4a4a4"/><path d="M860 651.6H1144" stroke="#f2d4c4" stroke-width="0.7"/><path d="M910.0 651.4L910.6 651.4L911.2 651.3L911.8 651.2L912.4 651.1L913.0 650.8L913.6 650.7L914.2 650.6L914.8 650.5L915.4 650.4L916.0 650.6L916.6 650.8L917.2 650.4L917.8 650.5L918.4 650.3L919.0 650.2L919.6 650.6L920.2 650.0L920.8 650.4L921.4 650.2L922.0 649.9L922.6 650.4L923.2 649.5L923.8 649.7L924.4 650.2L925.0 650.2L925.6 649.7L926.2 649.8L926.8 649.9L927.4 649.3L928.0 649.5L928.6 650.1L929.2 649.9L929.8 649.2L930.4 649.8L931.0 649.1L931.6 649.9L932.2 650.1L932.8 649.7L933.4 649.4L934.0 649.8L934.6 649.1L935.2 649.5L935.8 649.8L936.4 649.9L937.0 649.7L937.6 649.5L938.2 649.3L938.8 649.8L939.4 649.3L940.0 649.9L940.6 649.3L941.2 650.3L941.8 649.4L942.4 649.8L943.0 650.2L943.6 650.3L944.2 650.3L944.8 650.2L945.4 649.7L946.0 649.9L946.6 650.5L947.2 650.3L947.8 650.3L948.4 650.2L949.0 650.6L949.6 650.3L950.2 650.7L950.8 650.7L951.4 650.6L952.0 650.9L952.6 650.9L953.2 651.0L953.8 650.9L954.4 651.3L955.0 651.3L955.6 651.4L955.6 651.9L955.0 651.9L954.4 652.1L953.8 652.0L953.2 652.3L952.6 652.2L952.0 652.3L951.4 652.3L950.8 652.5L950.2 652.4L949.6 653.0L949.0 652.5L948.4 652.7L947.8 652.9L947.2 652.8L946.6 652.7L946.0 652.8L945.4 653.3L944.8 653.0L944.2 653.3L943.6 652.9L943.0 653.6L942.4 653.3L941.8 652.9L941.2 653.2L940.6 653.6L940.0 653.1L939.4 653.1L938.8 653.7L938.2 653.3L937.6 653.1L937.0 654.0L936.4 654.1L935.8 654.0L935.2 654.2L934.6 653.9L934.0 653.2L933.4 653.1L932.8 653.4L932.2 653.1L931.6 653.0L931.0 653.7L930.4 653.4L929.8 653.7L929.2 653.9L928.6 653.2L928.0 654.1L927.4 653.9L926.8 653.8L926.2 653.0L925.6 653.1L925.0 653.2L924.4 653.7L923.8 653.1L923.2 653.7L922.6 653.0L922.0 653.0L921.4 652.9L920.8 652.7L920.2 653.5L919.6 653.3L919.0 653.3L918.4 652.9L917.8 652.9L917.2 652.6L916.6 652.9L916.0 652.4L915.4 652.7L914.8 652.5L914.2 652.3L913.6 652.2L913.0 652.2L912.4 652.2L911.8 652.1L911.2 651.9L910.6 651.9L910.0 651.9Z" fill="#f2d4c4"/><path d="M1005.0 651.4L1005.6 651.3L1006.2 651.3L1006.8 651.0L1007.4 651.0L1008.0 650.9L1008.6 650.7L1009.2 650.7L1009.8 650.8L1010.4 650.8L1011.0 650.7L1011.6 650.5L1012.2 650.5L1012.8 650.5L1013.4 649.8L1014.0 650.4L1014.6 649.9L1015.2 650.1L1015.8 649.9L1016.4 650.0L1017.0 649.7L1017.6 649.4L1018.2 650.2L1018.8 649.5L1019.4 649.7L1020.0 649.6L1020.6 649.5L1021.2 649.4L1021.8 649.4L1022.4 649.4L1023.0 650.1L1023.6 649.5L1024.2 650.1L1024.8 649.5L1025.4 649.4L1026.0 649.1L1026.6 649.4L1027.2 649.7L1027.8 649.8L1028.4 649.5L1029.0 649.3L1029.6 649.4L1030.2 650.2L1030.8 649.1L1031.4 649.4L1032.0 650.0L1032.6 649.7L1033.2 649.6L1033.8 650.1L1034.4 649.3L1035.0 650.3L1035.6 650.0L1036.2 649.7L1036.8 650.1L1037.4 650.0L1038.0 650.5L1038.6 649.9L1039.2 650.1L1039.8 650.4L1040.4 650.0L1041.0 650.6L1041.6 650.1L1042.2 650.3L1042.8 650.4L1043.4 650.7L1044.0 650.6L1044.6 650.9L1045.2 651.1L1045.8 651.2L1046.4 651.2L1047.0 651.2L1047.6 651.4L1047.6 651.9L1047.0 651.9L1046.4 652.0L1045.8 652.1L1045.2 652.4L1044.6 652.5L1044.0 652.7L1043.4 652.4L1042.8 652.8L1042.2 653.0L1041.6 652.6L1041.0 652.6L1040.4 652.8L1039.8 653.1L1039.2 652.8L1038.6 653.1L1038.0 653.2L1037.4 653.3L1036.8 653.0L1036.2 653.0L1035.6 653.7L1035.0 652.9L1034.4 653.7L1033.8 653.0L1033.2 653.7L1032.6 653.2L1032.0 653.6L1031.4 653.4L1030.8 654.0L1030.2 654.0L1029.6 653.5L1029.0 653.6L1028.4 653.1L1027.8 653.8L1027.2 653.1L1026.6 653.4L1026.0 653.6L1025.4 653.2L1024.8 653.7L1024.2 653.6L1023.6 653.4L1023.0 653.5L1022.4 653.8L1021.8 653.0L1021.2 653.5L1020.6 653.2L1020.0 653.4L1019.4 653.2L1018.8 653.5L1018.2 653.8L1017.6 653.0L1017.0 653.7L1016.4 652.9L1015.8 653.4L1015.2 653.0L1014.6 653.1L1014.0 652.7L1013.4 653.1L1012.8 653.1L1012.2 653.0L1011.6 652.7L1011.0 652.7L1010.4 652.9L1009.8 652.4L1009.2 652.5L1008.6 652.5L1008.0 652.4L1007.4 652.2L1006.8 652.1L1006.2 652.1L1005.6 651.9L1005.0 651.9Z" fill="#f2d4c4"/><path d="M1096.0 651.4L1096.6 651.4L1097.2 651.2L1097.8 651.1L1098.4 651.2L1099.0 651.0L1099.6 651.0L1100.2 650.8L1100.8 650.8L1101.4 650.8L1102.0 650.7L1102.6 650.3L1103.2 650.4L1103.8 650.3L1104.4 650.7L1105.0 650.7L1105.6 650.4L1106.2 650.5L1106.8 650.4L1107.4 650.4L1108.0 650.2L1108.6 649.9L1109.2 649.9L1109.8 649.6L1110.4 649.5L1111.0 649.6L1111.6 650.1L1112.2 649.4L1112.8 649.8L1113.4 649.3L1114.0 650.0L1114.6 649.6L1115.2 649.2L1115.8 650.0L1116.4 649.4L1117.0 649.5L1117.6 649.7L1118.2 649.6L1118.8 649.6L1119.4 649.7L1120.0 649.6L1120.6 650.2L1121.2 649.6L1121.8 649.1L1122.4 649.2L1123.0 650.1L1123.6 649.9L1124.2 649.1L1124.8 650.1L1125.4 649.3L1126.0 649.6L1126.6 649.3L1127.2 649.3L1127.8 649.7L1128.4 649.9L1129.0 649.6L1129.6 649.6L1130.2 650.1L1130.8 649.2L1131.4 649.3L1132.0 649.5L1132.6 649.7L1133.2 650.2L1133.8 649.8L1134.4 650.1L1135.0 650.1L1135.6 649.6L1136.2 649.7L1136.8 650.1L1137.4 650.0L1138.0 650.2L1138.6 650.5L1139.2 650.0L1139.8 650.4L1140.4 650.3L1141.0 650.2L1141.6 650.6L1142.2 650.7L1142.8 650.8L1143.4 650.5L1144.0 650.6L1144.6 650.9L1145.2 650.9L1145.8 650.9L1146.4 650.9L1147.0 651.0L1147.6 651.0L1148.2 651.1L1148.8 651.3L1149.4 651.4L1150.0 651.4L1150.0 651.9L1149.4 651.9L1148.8 652.0L1148.2 651.9L1147.6 652.1L1147.0 652.3L1146.4 652.3L1145.8 652.3L1145.2 652.6L1144.6 652.4L1144.0 652.6L1143.4 652.6L1142.8 652.9L1142.2 652.8L1141.6 653.1L1141.0 652.8L1140.4 652.8L1139.8 653.3L1139.2 652.6L1138.6 653.0L1138.0 652.7L1137.4 653.3L1136.8 652.9L1136.2 653.4L1135.6 653.4L1135.0 653.0L1134.4 653.3L1133.8 653.0L1133.2 653.1L1132.6 653.8L1132.0 653.5L1131.4 654.0L1130.8 653.1L1130.2 653.0L1129.6 653.9L1129.0 653.4L1128.4 653.8L1127.8 653.2L1127.2 653.5L1126.6 654.0L1126.0 653.3L1125.4 653.2L1124.8 653.7L1124.2 654.1L1123.6 653.2L1123.0 653.3L1122.4 653.5L1121.8 653.9L1121.2 653.3L1120.6 653.6L1120.0 653.9L1119.4 654.1L1118.8 653.4L1118.2 653.1L1117.6 653.2L1117.0 653.1L1116.4 653.6L1115.8 654.0L1115.2 653.4L1114.6 653.0L1114.0 653.0L1113.4 653.2L1112.8 653.8L1112.2 653.7L1111.6 653.2L1111.0 652.8L1110.4 653.1L1109.8 652.9L1109.2 653.0L1108.6 653.0L1108.0 653.2L1107.4 653.2L1106.8 653.2L1106.2 653.2L1105.6 652.8L1105.0 652.6L1104.4 652.5L1103.8 653.0L1103.2 652.6L1102.6 652.9L1102.0 652.5L1101.4 652.6L1100.8 652.2L1100.2 652.3L1099.6 652.5L1099.0 652.3L1098.4 652.2L1097.8 652.0L1097.2 651.9L1096.6 651.9L1096.0 651.9Z" fill="#f2d4c4"/><path d="M952.2 98V145.4" stroke="#585858" stroke-width="0.8"/><path d="M952.2 261.5V312.2" stroke="#585858" stroke-width="0.8"/><path d="M952.2 430.9V505.1" stroke="#585858" stroke-width="0.8"/><path d="M952.2 507.5V545.5" stroke="#585858" stroke-width="0.8"/><path d="M952.2 602.4V630.9" stroke="#585858" stroke-width="0.8"/><path d="M1045.1 98V145.4" stroke="#585858" stroke-width="0.8"/><path d="M1045.1 261.5V312.2" stroke="#585858" stroke-width="0.8"/><path d="M1045.1 430.9V505.1" stroke="#585858" stroke-width="0.8"/><path d="M1045.1 507.5V545.5" stroke="#585858" stroke-width="0.8"/><path d="M1045.1 602.4V630.9" stroke="#585858" stroke-width="0.8"/><path d="M1138.1 98V145.4" stroke="#585858" stroke-width="0.8"/><path d="M1138.1 261.5V312.2" stroke="#585858" stroke-width="0.8"/><path d="M1138.1 430.9V505.1" stroke="#585858" stroke-width="0.8"/><path d="M1138.1 507.5V545.5" stroke="#585858" stroke-width="0.8"/><path d="M1138.1 602.4V630.9" stroke="#585858" stroke-width="0.8"/><circle cx="928.887" cy="210.4" r="2.4" fill="none" stroke="#ffffff" stroke-width="0.8"/><path d="M925.887 213.5h6.4" stroke="#ffffff" stroke-width="0.8"/><circle cx="950.723" cy="267.3" r="2.4" fill="none" stroke="#62e2c2" stroke-width="0.8"/><path d="M947.723 270.4h11.6" stroke="#62e2c2" stroke-width="0.8"/><circle cx="956.123" cy="267.3" r="2.4" fill="none" stroke="#62e2c2" stroke-width="0.8"/><circle cx="952.504" cy="319.9" r="2.4" fill="none" stroke="#ffffff" stroke-width="0.8"/><path d="M949.504 323h6.4" stroke="#ffffff" stroke-width="0.8"/><circle cx="939.558" cy="436.7" r="2.4" fill="none" stroke="#62e28c" stroke-width="0.8"/><path d="M936.558 439.8h11.6" stroke="#62e28c" stroke-width="0.8"/><circle cx="944.958" cy="436.7" r="2.4" fill="none" stroke="#62e28c" stroke-width="0.8"/><circle cx="962.327" cy="513.3" r="2.4" fill="none" stroke="#a2da4c" stroke-width="0.8"/><path d="M959.327 516.4h11.6" stroke="#a2da4c" stroke-width="0.8"/><circle cx="967.727" cy="513.3" r="2.4" fill="none" stroke="#a2da4c" stroke-width="0.8"/><circle cx="944.528" cy="553.6" r="2.4" fill="none" stroke="#ffffff" stroke-width="0.8"/><path d="M941.528 556.7h11.6" stroke="#ffffff" stroke-width="0.8"/><circle cx="949.928" cy="553.6" r="2.4" fill="none" stroke="#ffffff" stroke-width="0.8"/><circle cx="952.504" cy="608.2" r="2.4" fill="none" stroke="#f2aa52" stroke-width="0.8"/><path d="M949.504 611.3h6.4" stroke="#f2aa52" stroke-width="0.8"/><circle cx="945.754" cy="638.9" r="2.4" fill="none" stroke="#ffffff" stroke-width="0.8"/><path d="M942.754 642h11.6" stroke="#ffffff" stroke-width="0.8"/><circle cx="951.154" cy="638.9" r="2.4" fill="none" stroke="#ffffff" stroke-width="0.8"/></svg>
<div style="left:1px;top:71px;width:229px;height:25px;background:#444444;"></div>
<div class="tb" style="left:7.6px;top:77.4px;width:21px;height:13.2px;"></div>
<svg style="left:14.4px;top:80.2px;" width="8" height="8" viewBox="0 0 8 8"><path d="M4 0.6v6.8M0.6 4h6.8" stroke="#f0f0f0" stroke-width="1.1"/></svg>
<div class="tb" style="left:36px;top:77.4px;width:21.5px;height:13.2px;"></div>
<svg style="left:41.6px;top:79px;" width="10" height="10" viewBox="0 0 10 10"><rect x="0.8" y="0.8" width="5.6" height="5.6" rx="1" fill="none" stroke="#f0f0f0" stroke-width="0.9"/><rect x="3" y="3" width="6" height="6" rx="1" fill="#5a5a5a" stroke="#f0f0f0" stroke-width="0.9"/><path d="M6 4.6v2.8M4.6 6h2.8" stroke="#f0f0f0" stroke-width="0.8"/></svg>
<div class="tb" style="left:202px;top:77.4px;width:21px;height:13.2px;"></div>
<svg style="left:207px;top:79.8px;" width="11" height="8.6" viewBox="0 0 11 8.6"><rect x="0.6" y="0.6" width="9.8" height="7.2" rx="1" fill="none" stroke="#f0f0f0" stroke-width="0.9"/><path d="M0.6 2.2h9.8" stroke="#f0f0f0" stroke-width="0.9"/><path d="M5.5 3.2v3M4.2 5l1.3 1.3L6.8 5" stroke="#f0f0f0" stroke-width="0.8" fill="none"/></svg>
<div style="left:231px;top:71px;width:609px;height:25px;background:#444444;"></div>
<div class="tb" style="left:236.3px;top:77.4px;width:21.7px;height:13.2px;"></div>
<svg style="left:241.5px;top:80px;" width="12" height="8" viewBox="0 0 12 8"><g fill="#f4f4f4"><rect x="0" y="0" width="3.6" height="1.7"/><rect x="4.4" y="0" width="4.4" height="1.7"/><rect x="0" y="2.7" width="8.8" height="1.7"/><rect x="0" y="5.4" width="5.4" height="1.7"/></g></svg>
<span class="t" style="top:82.86px;font-size:5.6px;color:#f4f4f4;font-weight:700;left:248.6px;">R</span>
<span class="t" style="top:79.44px;font-size:9.4px;color:#b8b8b8;letter-spacing:-0.1px;left:651px;">Quantize Start:</span>
<div class="tb" style="left:714.3px;top:77.4px;width:72.2px;height:13.2px;"></div>
<span class="t" style="top:79.44px;font-size:9.4px;color:#ececec;left:720.5px;">1 Bar</span>
<svg style="left:777.5px;top:79px;" width="6" height="10" viewBox="0 0 6 10"><path d="M0.8 3.6L3 1.2l2.2 2.4M0.8 6.4L3 8.8l2.2-2.4" stroke="#c8c8c8" stroke-width="0.9" fill="none"/></svg>
<svg style="left:791.5px;top:77.6px;" width="14" height="14" viewBox="0 0 14 14"><circle cx="7" cy="7" r="6" fill="none" stroke="#c8c8c8" stroke-width="0.9"/><path d="M7 7V1.4" stroke="#c8c8c8" stroke-width="0.9"/></svg>
<div style="left:812px;top:77.4px;width:21.2px;height:13.2px;background:#2a6fc4;border-radius:3.5px;"></div>
<svg style="left:817px;top:80.6px;" width="12" height="7" viewBox="0 0 12 7"><path d="M1 3.5h10M3.4 1L1 3.5 3.4 6M8.6 1L11 3.5 8.6 6" stroke="#fff" stroke-width="1.1" fill="none"/></svg>
<div style="left:1px;top:96px;width:229px;height:619px;background:#575757;"></div>
<div style="left:14px;top:96px;width:0.8px;height:619px;background:#474747;"></div>
<div style="left:1px;top:96px;width:229px;height:0.8px;background:#444;"></div>
<div style="left:1px;top:145.6px;width:229px;height:0.9px;background:#484848;"></div>
<span class="t" style="top:117.55px;font-size:8.8px;color:#f0f0f0;left:8px;transform:translateX(-50%);-webkit-text-stroke:0.15px #f0f0f0;">2</span>
<span class="t" style="top:109.70px;font-size:8.5px;color:#f6f6f6;letter-spacing:0.17px;left:65.7px;-webkit-text-stroke:0.2px #f6f6f6;">Cinematic Funk</span>
<div class="ms" style="left:66.2px;top:123px;width:27.2px;height:10.2px;"></div>
<div style="left:79.6px;top:123px;width:0.7px;height:10.2px;background:#555;"></div>
<div class="ms" style="left:97.4px;top:123px;width:27.2px;height:10.2px;"></div>
<div style="left:110.8px;top:123px;width:0.7px;height:10.2px;background:#555;"></div>
<span class="t" style="top:124.40px;font-size:7.8px;color:#f4f4f4;left:73px;transform:translateX(-50%);-webkit-text-stroke:0.15px #f4f4f4;">M</span>
<span class="t" style="top:124.40px;font-size:7.8px;color:#f4f4f4;left:86.6px;transform:translateX(-50%);-webkit-text-stroke:0.15px #f4f4f4;">S</span>
<span class="t" style="top:124.40px;font-size:7.8px;color:#f4f4f4;left:104.4px;transform:translateX(-50%);-webkit-text-stroke:0.15px #f4f4f4;">R</span>
<span class="t" style="top:124.40px;font-size:7.8px;color:#f4f4f4;left:117.7px;transform:translateX(-50%);-webkit-text-stroke:0.15px #f4f4f4;">I</span>
<div style="left:128px;top:122.3px;width:74px;height:12px;background:#333333;border-radius:6px;"></div>
<div style="left:133.8px;top:125.6px;width:44.2px;height:2px;background:#3fd158;border-radius:0.5px;"></div>
<div style="left:133.8px;top:129px;width:44.2px;height:2px;background:#3fd158;border-radius:0.5px;"></div>
<div style="left:174.8px;top:123.1px;width:10.4px;height:10.4px;background:rgba(168,168,168,.93);border-radius:5.2px;"></div>
<svg style="left:205.4px;top:118.7px;" width="18" height="18" viewBox="0 0 18 18"><path d="M3.6 15.2A7.6 7.6 0 1 1 14.4 15.2" fill="none" stroke="#383838" stroke-width="2.2" stroke-linecap="round"/><circle cx="9" cy="9.6" r="5.6" fill="#8c8c8c"/><path d="M9 1.2v2.6" stroke="#3fd158" stroke-width="0.9"/></svg>
<div style="left:1px;top:202.6px;width:229px;height:0.9px;background:#484848;"></div>
<span class="t" style="top:171.05px;font-size:8.8px;color:#f0f0f0;left:8px;transform:translateX(-50%);-webkit-text-stroke:0.15px #f0f0f0;">15</span>
<span class="t" style="top:163.20px;font-size:8.5px;color:#f6f6f6;letter-spacing:0.17px;left:65.7px;-webkit-text-stroke:0.2px #f6f6f6;">Infinity</span>
<div class="ms" style="left:66.2px;top:176.5px;width:27.2px;height:10.2px;"></div>
<div style="left:79.6px;top:176.5px;width:0.7px;height:10.2px;background:#555;"></div>
<div class="ms" style="left:97.4px;top:176.5px;width:27.2px;height:10.2px;"></div>
<div style="left:110.8px;top:176.5px;width:0.7px;height:10.2px;background:#555;"></div>
<span class="t" style="top:177.90px;font-size:7.8px;color:#f4f4f4;left:73px;transform:translateX(-50%);-webkit-text-stroke:0.15px #f4f4f4;">M</span>
<span class="t" style="top:177.90px;font-size:7.8px;color:#f4f4f4;left:86.6px;transform:translateX(-50%);-webkit-text-stroke:0.15px #f4f4f4;">S</span>
<span class="t" style="top:177.90px;font-size:7.8px;color:#f4f4f4;left:104.4px;transform:translateX(-50%);-webkit-text-stroke:0.15px #f4f4f4;">R</span>
<span class="t" style="top:177.90px;font-size:7.8px;color:#f4f4f4;left:117.7px;transform:translateX(-50%);-webkit-text-stroke:0.15px #f4f4f4;">I</span>
<div style="left:128px;top:175.8px;width:74px;height:12px;background:#333333;border-radius:6px;"></div>
<div style="left:133.8px;top:179.1px;width:44.2px;height:2px;background:#3fd158;border-radius:0.5px;"></div>
<div style="left:133.8px;top:182.5px;width:44.2px;height:2px;background:#3fd158;border-radius:0.5px;"></div>
<div style="left:186.8px;top:176.6px;width:10.4px;height:10.4px;background:rgba(168,168,168,.93);border-radius:5.2px;"></div>
<svg style="left:205.4px;top:172.2px;" width="18" height="18" viewBox="0 0 18 18"><path d="M3.6 15.2A7.6 7.6 0 1 1 14.4 15.2" fill="none" stroke="#383838" stroke-width="2.2" stroke-linecap="round"/><circle cx="9" cy="9.6" r="5.6" fill="#8c8c8c"/><path d="M9 1.2v2.6" stroke="#3fd158" stroke-width="0.9"/></svg>
<div style="left:1px;top:259.6px;width:229px;height:0.9px;background:#484848;"></div>
<span class="t" style="top:228.05px;font-size:8.8px;color:#f0f0f0;left:8px;transform:translateX(-50%);-webkit-text-stroke:0.15px #f0f0f0;">16</span>
<span class="t" style="top:220.20px;font-size:8.5px;color:#f6f6f6;letter-spacing:0.17px;left:65.7px;-webkit-text-stroke:0.2px #f6f6f6;">Percussion</span>
<div class="ms" style="left:66.2px;top:233.5px;width:27.2px;height:10.2px;"></div>
<div style="left:79.6px;top:233.5px;width:0.7px;height:10.2px;background:#555;"></div>
<div class="ms" style="left:97.4px;top:233.5px;width:27.2px;height:10.2px;"></div>
<div style="left:110.8px;top:233.5px;width:0.7px;height:10.2px;background:#555;"></div>
<span class="t" style="top:234.90px;font-size:7.8px;color:#f4f4f4;left:73px;transform:translateX(-50%);-webkit-text-stroke:0.15px #f4f4f4;">M</span>
<span class="t" style="top:234.90px;font-size:7.8px;color:#f4f4f4;left:86.6px;transform:translateX(-50%);-webkit-text-stroke:0.15px #f4f4f4;">S</span>
<span class="t" style="top:234.90px;font-size:7.8px;color:#f4f4f4;left:104.4px;transform:translateX(-50%);-webkit-text-stroke:0.15px #f4f4f4;">R</span>
<span class="t" style="top:234.90px;font-size:7.8px;color:#f4f4f4;left:117.7px;transform:translateX(-50%);-webkit-text-stroke:0.15px #f4f4f4;">I</span>
<div style="left:128px;top:232.8px;width:74px;height:12px;background:#333333;border-radius:6px;"></div>
<div style="left:133.8px;top:236.1px;width:42.2px;height:2px;background:#3fd158;border-radius:0.5px;"></div>
<div style="left:133.8px;top:239.5px;width:42.2px;height:2px;background:#3fd158;border-radius:0.5px;"></div>
<div style="left:161.8px;top:233.6px;width:10.4px;height:10.4px;background:rgba(168,168,168,.93);border-radius:5.2px;"></div>
<svg style="left:205.4px;top:229.2px;" width="18" height="18" viewBox="0 0 18 18"><path d="M3.6 15.2A7.6 7.6 0 1 1 14.4 15.2" fill="none" stroke="#383838" stroke-width="2.2" stroke-linecap="round"/><circle cx="9" cy="9.6" r="5.6" fill="#8c8c8c"/><path d="M9 1.2v2.6" stroke="#3fd158" stroke-width="0.9"/></svg>
<div style="left:1px;top:312.6px;width:229px;height:0.9px;background:#484848;"></div>
<span class="t" style="top:283.05px;font-size:8.8px;color:#f0f0f0;left:8px;transform:translateX(-50%);-webkit-text-stroke:0.15px #f0f0f0;">17</span>
<span class="t" style="top:275.20px;font-size:8.5px;color:#f6f6f6;letter-spacing:0.17px;left:65.7px;-webkit-text-stroke:0.2px #f6f6f6;">Textures</span>
<div class="ms" style="left:66.2px;top:288.5px;width:27.2px;height:10.2px;"></div>
<div style="left:79.6px;top:288.5px;width:0.7px;height:10.2px;background:#555;"></div>
<div class="ms" style="left:97.4px;top:288.5px;width:27.2px;height:10.2px;"></div>
<div style="left:110.8px;top:288.5px;width:0.7px;height:10.2px;background:#555;"></div>
<span class="t" style="top:289.90px;font-size:7.8px;color:#f4f4f4;left:73px;transform:translateX(-50%);-webkit-text-stroke:0.15px #f4f4f4;">M</span>
<span class="t" style="top:289.90px;font-size:7.8px;color:#f4f4f4;left:86.6px;transform:translateX(-50%);-webkit-text-stroke:0.15px #f4f4f4;">S</span>
<span class="t" style="top:289.90px;font-size:7.8px;color:#f4f4f4;left:104.4px;transform:translateX(-50%);-webkit-text-stroke:0.15px #f4f4f4;">R</span>
<span class="t" style="top:289.90px;font-size:7.8px;color:#f4f4f4;left:117.7px;transform:translateX(-50%);-webkit-text-stroke:0.15px #f4f4f4;">I</span>
<div style="left:128px;top:287.8px;width:74px;height:12px;background:#333333;border-radius:6px;"></div>
<div style="left:133.8px;top:291.1px;width:25.2px;height:2px;background:#3fd158;border-radius:0.5px;"></div>
<div style="left:133.8px;top:294.5px;width:25.2px;height:2px;background:#3fd158;border-radius:0.5px;"></div>
<div style="left:165.4px;top:292px;width:0.8px;height:2.4px;background:#2f9d44;"></div>
<div style="left:153.8px;top:288.6px;width:10.4px;height:10.4px;background:rgba(168,168,168,.93);border-radius:5.2px;"></div>
<svg style="left:205.4px;top:284.2px;" width="18" height="18" viewBox="0 0 18 18"><path d="M3.6 15.2A7.6 7.6 0 1 1 14.4 15.2" fill="none" stroke="#383838" stroke-width="2.2" stroke-linecap="round"/><circle cx="9" cy="9.6" r="5.6" fill="#8c8c8c"/><path d="M9 1.2v2.6" stroke="#3fd158" stroke-width="0.9"/></svg>
<div style="left:1px;top:428.6px;width:229px;height:0.9px;background:#484848;"></div>
<span class="t" style="top:367.15px;font-size:8.8px;color:#f0f0f0;left:8px;transform:translateX(-50%);-webkit-text-stroke:0.15px #f0f0f0;">18</span>
<span class="t" style="top:316.80px;font-size:8.5px;color:#f6f6f6;letter-spacing:0.17px;left:65.7px;-webkit-text-stroke:0.2px #f6f6f6;">Beats</span>
<div class="ms" style="left:66.2px;top:330px;width:27.2px;height:10.2px;"></div>
<div style="left:79.6px;top:330px;width:0.7px;height:10.2px;background:#555;"></div>
<div class="ms" style="left:97.4px;top:330px;width:27.2px;height:10.2px;"></div>
<div style="left:110.8px;top:330px;width:0.7px;height:10.2px;background:#555;"></div>
<span class="t" style="top:331.40px;font-size:7.8px;color:#f4f4f4;left:73px;transform:translateX(-50%);-webkit-text-stroke:0.15px #f4f4f4;">M</span>
<span class="t" style="top:331.40px;font-size:7.8px;color:#f4f4f4;left:86.6px;transform:translateX(-50%);-webkit-text-stroke:0.15px #f4f4f4;">S</span>
<span class="t" style="top:331.40px;font-size:7.8px;color:#f4f4f4;left:104.4px;transform:translateX(-50%);-webkit-text-stroke:0.15px #f4f4f4;">R</span>
<span class="t" style="top:331.40px;font-size:7.8px;color:#f4f4f4;left:117.7px;transform:translateX(-50%);-webkit-text-stroke:0.15px #f4f4f4;">I</span>
<div style="left:128px;top:329.3px;width:74px;height:12px;background:#333333;border-radius:6px;"></div>
<div style="left:133.8px;top:332.6px;width:31.2px;height:2px;background:#3fd158;border-radius:0.5px;"></div>
<div style="left:133.8px;top:336px;width:31.2px;height:2px;background:#3fd158;border-radius:0.5px;"></div>
<div style="left:155.1px;top:330.1px;width:10.4px;height:10.4px;background:rgba(168,168,168,.93);border-radius:5.2px;"></div>
<svg style="left:205.4px;top:325.7px;" width="18" height="18" viewBox="0 0 18 18"><path d="M3.6 15.2A7.6 7.6 0 1 1 14.4 15.2" fill="none" stroke="#383838" stroke-width="2.2" stroke-linecap="round"/><circle cx="9" cy="9.6" r="5.6" fill="#8c8c8c"/><path d="M9 1.2v2.6" stroke="#3fd158" stroke-width="0.9"/></svg>
<div style="left:1px;top:505.6px;width:229px;height:0.9px;background:#484848;"></div>
<span class="t" style="top:464.05px;font-size:8.8px;color:#f0f0f0;left:8px;transform:translateX(-50%);-webkit-text-stroke:0.15px #f0f0f0;">19</span>
<span class="t" style="top:456.20px;font-size:8.5px;color:#f6f6f6;letter-spacing:0.17px;left:65.7px;-webkit-text-stroke:0.2px #f6f6f6;">Keyboards</span>
<div class="ms" style="left:66.2px;top:469.5px;width:27.2px;height:10.2px;"></div>
<div style="left:79.6px;top:469.5px;width:0.7px;height:10.2px;background:#555;"></div>
<div class="ms" style="left:97.4px;top:469.5px;width:27.2px;height:10.2px;"></div>
<div style="left:110.8px;top:469.5px;width:0.7px;height:10.2px;background:#555;"></div>
<span class="t" style="top:470.90px;font-size:7.8px;color:#f4f4f4;left:73px;transform:translateX(-50%);-webkit-text-stroke:0.15px #f4f4f4;">M</span>
<span class="t" style="top:470.90px;font-size:7.8px;color:#f4f4f4;left:86.6px;transform:translateX(-50%);-webkit-text-stroke:0.15px #f4f4f4;">S</span>
<span class="t" style="top:470.90px;font-size:7.8px;color:#f4f4f4;left:104.4px;transform:translateX(-50%);-webkit-text-stroke:0.15px #f4f4f4;">R</span>
<span class="t" style="top:470.90px;font-size:7.8px;color:#f4f4f4;left:117.7px;transform:translateX(-50%);-webkit-text-stroke:0.15px #f4f4f4;">I</span>
<div style="left:128px;top:468.8px;width:74px;height:12px;background:#333333;border-radius:6px;"></div>
<div style="left:133.8px;top:472.1px;width:41.2px;height:2px;background:#3fd158;border-radius:0.5px;"></div>
<div style="left:133.8px;top:475.5px;width:41.2px;height:2px;background:#3fd158;border-radius:0.5px;"></div>
<div style="left:165.4px;top:469.6px;width:10.4px;height:10.4px;background:rgba(168,168,168,.93);border-radius:5.2px;"></div>
<svg style="left:205.4px;top:465.2px;" width="18" height="18" viewBox="0 0 18 18"><path d="M3.6 15.2A7.6 7.6 0 1 1 14.4 15.2" fill="none" stroke="#383838" stroke-width="2.2" stroke-linecap="round"/><circle cx="9" cy="9.6" r="5.6" fill="#8c8c8c"/><path d="M9 1.2v2.6" stroke="#3fd158" stroke-width="0.9"/></svg>
<div style="left:1px;top:545.6px;width:229px;height:0.9px;background:#484848;"></div>
<span class="t" style="top:522.55px;font-size:8.8px;color:#f0f0f0;left:8px;transform:translateX(-50%);-webkit-text-stroke:0.15px #f0f0f0;">20</span>
<span class="t" style="top:514.70px;font-size:8.5px;color:#f6f6f6;letter-spacing:0.17px;left:65.7px;-webkit-text-stroke:0.2px #f6f6f6;">Synths 1</span>
<div class="ms" style="left:66.2px;top:528px;width:27.2px;height:10.2px;"></div>
<div style="left:79.6px;top:528px;width:0.7px;height:10.2px;background:#555;"></div>
<div class="ms" style="left:97.4px;top:528px;width:27.2px;height:10.2px;"></div>
<div style="left:110.8px;top:528px;width:0.7px;height:10.2px;background:#555;"></div>
<span class="t" style="top:529.40px;font-size:7.8px;color:#f4f4f4;left:73px;transform:translateX(-50%);-webkit-text-stroke:0.15px #f4f4f4;">M</span>
<span class="t" style="top:529.40px;font-size:7.8px;color:#f4f4f4;left:86.6px;transform:translateX(-50%);-webkit-text-stroke:0.15px #f4f4f4;">S</span>
<span class="t" style="top:529.40px;font-size:7.8px;color:#f4f4f4;left:104.4px;transform:translateX(-50%);-webkit-text-stroke:0.15px #f4f4f4;">R</span>
<span class="t" style="top:529.40px;font-size:7.8px;color:#f4f4f4;left:117.7px;transform:translateX(-50%);-webkit-text-stroke:0.15px #f4f4f4;">I</span>
<div style="left:128px;top:527.3px;width:74px;height:12px;background:#333333;border-radius:6px;"></div>
<div style="left:133.8px;top:530.6px;width:28.2px;height:2px;background:#3fd158;border-radius:0.5px;"></div>
<div style="left:133.8px;top:534px;width:28.2px;height:2px;background:#3fd158;border-radius:0.5px;"></div>
<div style="left:173.5px;top:531.5px;width:0.8px;height:2.4px;background:#2f9d44;"></div>
<div style="left:158px;top:528.1px;width:10.4px;height:10.4px;background:rgba(168,168,168,.93);border-radius:5.2px;"></div>
<svg style="left:205.4px;top:523.7px;" width="18" height="18" viewBox="0 0 18 18"><path d="M3.6 15.2A7.6 7.6 0 1 1 14.4 15.2" fill="none" stroke="#383838" stroke-width="2.2" stroke-linecap="round"/><circle cx="9" cy="9.6" r="5.6" fill="#8c8c8c"/><path d="M9 1.2v2.6" stroke="#3fd158" stroke-width="0.9"/></svg>
<div style="left:1px;top:572.6px;width:229px;height:0.9px;background:#484848;"></div>
<span class="t" style="top:555.85px;font-size:8.8px;color:#f0f0f0;left:8px;transform:translateX(-50%);-webkit-text-stroke:0.15px #f0f0f0;">21</span>
<div class="ms" style="left:66.2px;top:554.4px;width:27.2px;height:10.2px;"></div>
<div style="left:79.6px;top:554.4px;width:0.7px;height:10.2px;background:#555;"></div>
<div class="ms" style="left:97.4px;top:554.4px;width:27.2px;height:10.2px;"></div>
<div style="left:110.8px;top:554.4px;width:0.7px;height:10.2px;background:#555;"></div>
<span class="t" style="top:555.80px;font-size:7.8px;color:#f4f4f4;left:73px;transform:translateX(-50%);-webkit-text-stroke:0.15px #f4f4f4;">M</span>
<span class="t" style="top:555.80px;font-size:7.8px;color:#f4f4f4;left:86.6px;transform:translateX(-50%);-webkit-text-stroke:0.15px #f4f4f4;">S</span>
<span class="t" style="top:555.80px;font-size:7.8px;color:#f4f4f4;left:104.4px;transform:translateX(-50%);-webkit-text-stroke:0.15px #f4f4f4;">R</span>
<span class="t" style="top:555.80px;font-size:7.8px;color:#f4f4f4;left:117.7px;transform:translateX(-50%);-webkit-text-stroke:0.15px #f4f4f4;">I</span>
<span class="t" style="top:555.90px;font-size:8.5px;color:#f6f6f6;letter-spacing:0.17px;left:130.2px;-webkit-text-stroke:0.2px #f6f6f6;">Vocal Chops</span>
<div style="left:216.7px;top:556.8px;width:5.4px;height:5.4px;background:#3fd158;border-radius:2.7px;"></div>
<div style="left:1px;top:601.6px;width:229px;height:0.9px;background:#484848;"></div>
<span class="t" style="top:583.85px;font-size:8.8px;color:#f0f0f0;left:8px;transform:translateX(-50%);-webkit-text-stroke:0.15px #f0f0f0;">22</span>
<div class="ms" style="left:66.2px;top:582.4px;width:27.2px;height:10.2px;"></div>
<div style="left:79.6px;top:582.4px;width:0.7px;height:10.2px;background:#555;"></div>
<div class="ms" style="left:97.4px;top:582.4px;width:27.2px;height:10.2px;"></div>
<div style="left:110.8px;top:582.4px;width:0.7px;height:10.2px;background:#555;"></div>
<span class="t" style="top:583.80px;font-size:7.8px;color:#f4f4f4;left:73px;transform:translateX(-50%);-webkit-text-stroke:0.15px #f4f4f4;">M</span>
<span class="t" style="top:583.80px;font-size:7.8px;color:#f4f4f4;left:86.6px;transform:translateX(-50%);-webkit-text-stroke:0.15px #f4f4f4;">S</span>
<span class="t" style="top:583.80px;font-size:7.8px;color:#f4f4f4;left:104.4px;transform:translateX(-50%);-webkit-text-stroke:0.15px #f4f4f4;">R</span>
<span class="t" style="top:583.80px;font-size:7.8px;color:#f4f4f4;left:117.7px;transform:translateX(-50%);-webkit-text-stroke:0.15px #f4f4f4;">I</span>
<span class="t" style="top:583.90px;font-size:8.5px;color:#f6f6f6;letter-spacing:0.17px;left:130.2px;-webkit-text-stroke:0.2px #f6f6f6;">Anthemic Lead</span>
<div style="left:216.7px;top:584.8px;width:5.4px;height:5.4px;background:#3fd158;border-radius:2.7px;"></div>
<div style="left:1px;top:631.6px;width:229px;height:0.9px;background:#484848;"></div>
<span class="t" style="top:613.35px;font-size:8.8px;color:#f0f0f0;left:8px;transform:translateX(-50%);-webkit-text-stroke:0.15px #f0f0f0;">23</span>
<div class="ms" style="left:66.2px;top:611.9px;width:27.2px;height:10.2px;"></div>
<div style="left:79.6px;top:611.9px;width:0.7px;height:10.2px;background:#555;"></div>
<div class="ms" style="left:97.4px;top:611.9px;width:27.2px;height:10.2px;"></div>
<div style="left:110.8px;top:611.9px;width:0.7px;height:10.2px;background:#555;"></div>
<span class="t" style="top:613.30px;font-size:7.8px;color:#f4f4f4;left:73px;transform:translateX(-50%);-webkit-text-stroke:0.15px #f4f4f4;">M</span>
<span class="t" style="top:613.30px;font-size:7.8px;color:#f4f4f4;left:86.6px;transform:translateX(-50%);-webkit-text-stroke:0.15px #f4f4f4;">S</span>
<span class="t" style="top:613.30px;font-size:7.8px;color:#f4f4f4;left:104.4px;transform:translateX(-50%);-webkit-text-stroke:0.15px #f4f4f4;">R</span>
<span class="t" style="top:613.30px;font-size:7.8px;color:#f4f4f4;left:117.7px;transform:translateX(-50%);-webkit-text-stroke:0.15px #f4f4f4;">I</span>
<span class="t" style="top:613.40px;font-size:8.5px;color:#f6f6f6;letter-spacing:0.17px;left:130.2px;-webkit-text-stroke:0.2px #f6f6f6;">Synths 2</span>
<div style="left:216.7px;top:614.3px;width:5.4px;height:5.4px;background:#3fd158;border-radius:2.7px;"></div>
<div style="left:1px;top:657.6px;width:229px;height:0.9px;background:#484848;"></div>
<span class="t" style="top:641.35px;font-size:8.8px;color:#f0f0f0;left:8px;transform:translateX(-50%);-webkit-text-stroke:0.15px #f0f0f0;">24</span>
<div class="ms" style="left:66.2px;top:639.9px;width:27.2px;height:10.2px;"></div>
<div style="left:79.6px;top:639.9px;width:0.7px;height:10.2px;background:#555;"></div>
<div class="ms" style="left:97.4px;top:639.9px;width:27.2px;height:10.2px;"></div>
<div style="left:110.8px;top:639.9px;width:0.7px;height:10.2px;background:#555;"></div>
<span class="t" style="top:641.30px;font-size:7.8px;color:#f4f4f4;left:73px;transform:translateX(-50%);-webkit-text-stroke:0.15px #f4f4f4;">M</span>
<span class="t" style="top:641.30px;font-size:7.8px;color:#f4f4f4;left:86.6px;transform:translateX(-50%);-webkit-text-stroke:0.15px #f4f4f4;">S</span>
<span class="t" style="top:641.30px;font-size:7.8px;color:#f4f4f4;left:104.4px;transform:translateX(-50%);-webkit-text-stroke:0.15px #f4f4f4;">R</span>
<span class="t" style="top:641.30px;font-size:7.8px;color:#f4f4f4;left:117.7px;transform:translateX(-50%);-webkit-text-stroke:0.15px #f4f4f4;">I</span>
<span class="t" style="top:641.40px;font-size:8.5px;color:#f6f6f6;letter-spacing:0.17px;left:130.2px;-webkit-text-stroke:0.2px #f6f6f6;">Synths 3</span>
<div style="left:216.7px;top:642.3px;width:5.4px;height:5.4px;background:#3fd158;border-radius:2.7px;"></div>
<div style="left:1px;top:684.6px;width:229px;height:0.9px;background:#484848;"></div>
<span class="t" style="top:667.85px;font-size:8.8px;color:#f0f0f0;left:8px;transform:translateX(-50%);-webkit-text-stroke:0.15px #f0f0f0;">25</span>
<div class="ms" style="left:66.2px;top:666.4px;width:27.2px;height:10.2px;"></div>
<div style="left:79.6px;top:666.4px;width:0.7px;height:10.2px;background:#555;"></div>
<div class="ms" style="left:97.4px;top:666.4px;width:27.2px;height:10.2px;"></div>
<div style="left:110.8px;top:666.4px;width:0.7px;height:10.2px;background:#555;"></div>
<span class="t" style="top:667.80px;font-size:7.8px;color:#f4f4f4;left:73px;transform:translateX(-50%);-webkit-text-stroke:0.15px #f4f4f4;">M</span>
<span class="t" style="top:667.80px;font-size:7.8px;color:#f4f4f4;left:86.6px;transform:translateX(-50%);-webkit-text-stroke:0.15px #f4f4f4;">S</span>
<span class="t" style="top:667.80px;font-size:7.8px;color:#f4f4f4;left:104.4px;transform:translateX(-50%);-webkit-text-stroke:0.15px #f4f4f4;">R</span>
<span class="t" style="top:667.80px;font-size:7.8px;color:#f4f4f4;left:117.7px;transform:translateX(-50%);-webkit-text-stroke:0.15px #f4f4f4;">I</span>
<span class="t" style="top:667.90px;font-size:8.5px;color:#f6f6f6;letter-spacing:0.17px;left:130.2px;-webkit-text-stroke:0.2px #f6f6f6;">Transitions</span>
<div style="left:216.7px;top:668.8px;width:5.4px;height:5.4px;background:#3fd158;border-radius:2.7px;"></div>
<div style="left:1px;top:710.6px;width:229px;height:0.9px;background:#484848;"></div>
<span class="t" style="top:694.35px;font-size:8.8px;color:#f0f0f0;left:8px;transform:translateX(-50%);-webkit-text-stroke:0.15px #f0f0f0;">26</span>
<div class="ms" style="left:66.2px;top:692.9px;width:27.2px;height:10.2px;"></div>
<div style="left:79.6px;top:692.9px;width:0.7px;height:10.2px;background:#555;"></div>
<div class="ms" style="left:97.4px;top:692.9px;width:27.2px;height:10.2px;"></div>
<div style="left:110.8px;top:692.9px;width:0.7px;height:10.2px;background:#555;"></div>
<span class="t" style="top:694.30px;font-size:7.8px;color:#f4f4f4;left:73px;transform:translateX(-50%);-webkit-text-stroke:0.15px #f4f4f4;">M</span>
<span class="t" style="top:694.30px;font-size:7.8px;color:#f4f4f4;left:86.6px;transform:translateX(-50%);-webkit-text-stroke:0.15px #f4f4f4;">S</span>
<span class="t" style="top:694.30px;font-size:7.8px;color:#f4f4f4;left:104.4px;transform:translateX(-50%);-webkit-text-stroke:0.15px #f4f4f4;">R</span>
<span class="t" style="top:694.30px;font-size:7.8px;color:#f4f4f4;left:117.7px;transform:translateX(-50%);-webkit-text-stroke:0.15px #f4f4f4;">I</span>
<span class="t" style="top:694.40px;font-size:8.5px;color:#f6f6f6;letter-spacing:0.17px;left:130.2px;-webkit-text-stroke:0.2px #f6f6f6;">Space Lead</span>
<div style="left:216.7px;top:695.3px;width:5.4px;height:5.4px;background:#2e2e2e;border-radius:2.7px;"></div>
<div style="left:20px;top:111px;width:40px;height:21.5px;background:#676767;border-radius:3.5px;"></div>
<svg style="left:24.5px;top:117.6px;" width="6" height="8" viewBox="0 0 6 8"><path d="M1.2 0.8l3.2 3.2-3.2 3.2" stroke="#c4c4c4" stroke-width="1" fill="none"/></svg>
<svg style="left:36px;top:113px;" width="19.4" height="17.6" viewBox="0 0 66 60"><rect x="1" y="1" width="64" height="58" rx="2.5" fill="none" stroke="#6a8df6" stroke-width="2"/><rect x="1" y="53" width="64" height="6" fill="#6a8df6"/><rect x="6" y="6" width="27" height="9" rx="1" fill="#6a8df6"/><rect x="6" y="20.5" width="5.4" height="5.6" rx="0.8" fill="#6a8df6"/><rect x="6" y="27.9" width="5.4" height="5.6" rx="0.8" fill="#6a8df6"/><rect x="6" y="35.3" width="5.4" height="5.6" rx="0.8" fill="#6a8df6"/><rect x="6" y="42.7" width="5.4" height="5.6" rx="0.8" fill="#6a8df6"/><rect x="13.2" y="20.5" width="5.4" height="5.6" rx="0.8" fill="#6a8df6"/><rect x="13.2" y="27.9" width="5.4" height="5.6" rx="0.8" fill="#6a8df6"/><rect x="13.2" y="35.3" width="5.4" height="5.6" rx="0.8" fill="#6a8df6"/><rect x="13.2" y="42.7" width="5.4" height="5.6" rx="0.8" fill="#6a8df6"/><rect x="20.4" y="20.5" width="5.4" height="5.6" rx="0.8" fill="#6a8df6"/><rect x="20.4" y="27.9" width="5.4" height="5.6" rx="0.8" fill="#6a8df6"/><rect x="20.4" y="35.3" width="5.4" height="5.6" rx="0.8" fill="#6a8df6"/><rect x="20.4" y="42.7" width="5.4" height="5.6" rx="0.8" fill="#6a8df6"/><rect x="27.6" y="20.5" width="5.4" height="5.6" rx="0.8" fill="#6a8df6"/><rect x="27.6" y="27.9" width="5.4" height="5.6" rx="0.8" fill="#6a8df6"/><rect x="27.6" y="35.3" width="5.4" height="5.6" rx="0.8" fill="#6a8df6"/><rect x="27.6" y="42.7" width="5.4" height="5.6" rx="0.8" fill="#6a8df6"/><rect x="41" y="7" width="4.6" height="1.6" fill="#6a8df6"/><rect x="48.2" y="7" width="4.6" height="1.6" fill="#6a8df6"/><rect x="55.4" y="7" width="4.6" height="1.6" fill="#6a8df6"/><rect x="41" y="14" width="4.6" height="1.6" fill="#6a8df6"/><rect x="48.2" y="14" width="4.6" height="1.6" fill="#6a8df6"/><rect x="55.4" y="14" width="4.6" height="1.6" fill="#6a8df6"/><rect x="41" y="40" width="4.6" height="1.6" fill="#6a8df6"/><rect x="48.2" y="40" width="4.6" height="1.6" fill="#6a8df6"/><rect x="55.4" y="40" width="4.6" height="1.6" fill="#6a8df6"/><rect x="41" y="47" width="4.6" height="1.6" fill="#6a8df6"/><rect x="48.2" y="47" width="4.6" height="1.6" fill="#6a8df6"/><rect x="55.4" y="47" width="4.6" height="1.6" fill="#6a8df6"/><circle cx="50.5" cy="27.5" r="4.6" fill="#6a8df6"/></svg>
<svg style="left:35.4px;top:169px;" width="20" height="12" viewBox="0 0 20 12"><rect x="0.5" y="0.5" width="19" height="11" fill="none" stroke="#19b9e6" stroke-width="0.9"/><path d="M0.5 4h8.5M0.5 7.6h19M3.4 0.5v7M6.2 0.5v7M9 0.5v7" stroke="#19b9e6" stroke-width="0.8"/><path d="M1.8 7.6v3.8" stroke="#19b9e6" stroke-width="0.7"/><path d="M3.5 7.6v3.8" stroke="#19b9e6" stroke-width="0.7"/><path d="M5.2 7.6v3.8" stroke="#19b9e6" stroke-width="0.7"/><path d="M6.9 7.6v3.8" stroke="#19b9e6" stroke-width="0.7"/><path d="M8.6 7.6v3.8" stroke="#19b9e6" stroke-width="0.7"/><path d="M10.3 7.6v3.8" stroke="#19b9e6" stroke-width="0.7"/><path d="M12 7.6v3.8" stroke="#19b9e6" stroke-width="0.7"/><path d="M13.7 7.6v3.8" stroke="#19b9e6" stroke-width="0.7"/><path d="M15.4 7.6v3.8" stroke="#19b9e6" stroke-width="0.7"/><path d="M17.1 7.6v3.8" stroke="#19b9e6" stroke-width="0.7"/><path d="M18.8 7.6v3.8" stroke="#19b9e6" stroke-width="0.7"/><rect x="10.4" y="1.8" width="7.8" height="4.6" fill="none" stroke="#19b9e6" stroke-width="0.8"/></svg>
<svg style="left:35.4px;top:226px;" width="20" height="12" viewBox="0 0 20 12"><rect x="0.5" y="0.5" width="19" height="11" fill="none" stroke="#1fbcb8" stroke-width="0.9"/><path d="M0.5 4h8.5M0.5 7.6h19M3.4 0.5v7M6.2 0.5v7M9 0.5v7" stroke="#1fbcb8" stroke-width="0.8"/><path d="M1.8 7.6v3.8" stroke="#1fbcb8" stroke-width="0.7"/><path d="M3.5 7.6v3.8" stroke="#1fbcb8" stroke-width="0.7"/><path d="M5.2 7.6v3.8" stroke="#1fbcb8" stroke-width="0.7"/><path d="M6.9 7.6v3.8" stroke="#1fbcb8" stroke-width="0.7"/><path d="M8.6 7.6v3.8" stroke="#1fbcb8" stroke-width="0.7"/><path d="M10.3 7.6v3.8" stroke="#1fbcb8" stroke-width="0.7"/><path d="M12 7.6v3.8" stroke="#1fbcb8" stroke-width="0.7"/><path d="M13.7 7.6v3.8" stroke="#1fbcb8" stroke-width="0.7"/><path d="M15.4 7.6v3.8" stroke="#1fbcb8" stroke-width="0.7"/><path d="M17.1 7.6v3.8" stroke="#1fbcb8" stroke-width="0.7"/><path d="M18.8 7.6v3.8" stroke="#1fbcb8" stroke-width="0.7"/><rect x="10.4" y="1.8" width="7.8" height="4.6" fill="none" stroke="#1fbcb8" stroke-width="0.8"/></svg>
<svg style="left:38.2px;top:279.6px;" width="14" height="15" viewBox="0 0 14 15"><g stroke="#27b394" stroke-width="0.9" fill="none" stroke-linecap="round"><path d="M2.4 0.8v2.6M2.4 7v1.6M2.4 11.8v2.4M7 0.8v4.6M7 9v5.2M11.6 0.8v1.6M11.6 6v3M11.6 12v2.2"/><circle cx="2.4" cy="5.2" r="1.5"/><circle cx="2.4" cy="10.2" r="1.3"/><circle cx="7" cy="7.2" r="1.5"/><circle cx="11.6" cy="4.2" r="1.5"/><circle cx="11.6" cy="10.6" r="1.3"/></g></svg>
<svg style="left:100.6px;top:356.4px;" width="66.6" height="60" viewBox="0 0 66 60"><rect x="1" y="1" width="64" height="58" rx="2.5" fill="none" stroke="#14b99a" stroke-width="2"/><rect x="1" y="53" width="64" height="6" fill="#14b99a"/><rect x="6" y="6" width="27" height="9" rx="1" fill="#14b99a"/><rect x="6" y="20.5" width="5.4" height="5.6" rx="0.8" fill="#14b99a"/><rect x="6" y="27.9" width="5.4" height="5.6" rx="0.8" fill="#14b99a"/><rect x="6" y="35.3" width="5.4" height="5.6" rx="0.8" fill="#14b99a"/><rect x="6" y="42.7" width="5.4" height="5.6" rx="0.8" fill="#14b99a"/><rect x="13.2" y="20.5" width="5.4" height="5.6" rx="0.8" fill="#14b99a"/><rect x="13.2" y="27.9" width="5.4" height="5.6" rx="0.8" fill="#14b99a"/><rect x="13.2" y="35.3" width="5.4" height="5.6" rx="0.8" fill="#14b99a"/><rect x="13.2" y="42.7" width="5.4" height="5.6" rx="0.8" fill="#14b99a"/><rect x="20.4" y="20.5" width="5.4" height="5.6" rx="0.8" fill="#14b99a"/><rect x="20.4" y="27.9" width="5.4" height="5.6" rx="0.8" fill="#14b99a"/><rect x="20.4" y="35.3" width="5.4" height="5.6" rx="0.8" fill="#14b99a"/><rect x="20.4" y="42.7" width="5.4" height="5.6" rx="0.8" fill="#14b99a"/><rect x="27.6" y="20.5" width="5.4" height="5.6" rx="0.8" fill="#14b99a"/><rect x="27.6" y="27.9" width="5.4" height="5.6" rx="0.8" fill="#14b99a"/><rect x="27.6" y="35.3" width="5.4" height="5.6" rx="0.8" fill="#14b99a"/><rect x="27.6" y="42.7" width="5.4" height="5.6" rx="0.8" fill="#14b99a"/><rect x="41" y="7" width="4.6" height="1.6" fill="#14b99a"/><rect x="48.2" y="7" width="4.6" height="1.6" fill="#14b99a"/><rect x="55.4" y="7" width="4.6" height="1.6" fill="#14b99a"/><rect x="41" y="14" width="4.6" height="1.6" fill="#14b99a"/><rect x="48.2" y="14" width="4.6" height="1.6" fill="#14b99a"/><rect x="55.4" y="14" width="4.6" height="1.6" fill="#14b99a"/><rect x="41" y="40" width="4.6" height="1.6" fill="#14b99a"/><rect x="48.2" y="40" width="4.6" height="1.6" fill="#14b99a"/><rect x="55.4" y="40" width="4.6" height="1.6" fill="#14b99a"/><rect x="41" y="47" width="4.6" height="1.6" fill="#14b99a"/><rect x="48.2" y="47" width="4.6" height="1.6" fill="#14b99a"/><rect x="55.4" y="47" width="4.6" height="1.6" fill="#14b99a"/><circle cx="50.5" cy="27.5" r="4.6" fill="#14b99a"/></svg>
<svg style="left:34.4px;top:461.8px;" width="22" height="16" viewBox="0 0 22 16"><path d="M1 2.2l3-1.6h13.6c2.2 0 3.6 1 3.6 2.2v1c0 .8-.8 1.4-2 1.4H2.2C1.4 5.2 1 4.8 1 4.2z" fill="#27cc3d"/><path d="M2.4 2.6h5.4M3 3.8h3" stroke="#565656" stroke-width="0.6"/><path d="M6.6 6l9 9.4M15.4 6l-9 9.4" stroke="#27cc3d" stroke-width="0.9"/></svg>
<svg style="left:34.4px;top:520.2px;" width="22" height="16" viewBox="0 0 22 16"><path d="M1 2.2l3-1.6h13.6c2.2 0 3.6 1 3.6 2.2v1c0 .8-.8 1.4-2 1.4H2.2C1.4 5.2 1 4.8 1 4.2z" fill="#8bd21f"/><path d="M2.4 2.6h5.4M3 3.8h3" stroke="#565656" stroke-width="0.6"/><path d="M6.6 6l9 9.4M15.4 6l-9 9.4" stroke="#8bd21f" stroke-width="0.9"/></svg>
<svg style="left:37.6px;top:552.2px;" width="17" height="17" viewBox="0 0 17 17"><path d="M3.4 6.2C3.4 2.6 5 0.6 7.4 0.6s4 2 4 5.6c0 2-.8 3.4-1.6 4.2v1.2l3.6 1.4c1 .4 1.4 1.2 1.4 2.4v1H0.4v-1c0-1.2.4-2 1.4-2.4l3.4-1.4v-1.2C4.2 9.6 3.4 8.2 3.4 6.2z" fill="#3ac22c"/><rect x="13.4" y="8" width="2.6" height="4.2" rx="0.6" fill="none" stroke="#3ac22c" stroke-width="0.8"/><rect x="13.2" y="12.4" width="3" height="4" rx="0.8" fill="#3ac22c"/></svg>
<svg style="left:34.4px;top:578.6px;" width="22" height="18" viewBox="0 0 22 18"><rect x="2.6" y="0.6" width="16.8" height="6.2" rx="0.8" fill="none" stroke="#2ea44a" stroke-width="0.9"/><rect x="4" y="1.6" width="1.5" height="3" fill="#2ea44a"/><rect x="6.6" y="1.6" width="1.5" height="3" fill="#2ea44a"/><rect x="9.2" y="1.6" width="1.5" height="3" fill="#2ea44a"/><rect x="11.8" y="1.6" width="1.5" height="3" fill="#2ea44a"/><rect x="14.4" y="1.6" width="1.5" height="3" fill="#2ea44a"/><rect x="17" y="1.6" width="1.5" height="3" fill="#2ea44a"/><path d="M6.4 7.4l9.4 9.6M15.6 7.4L6.2 17" stroke="#2ea44a" stroke-width="0.9"/></svg>
<svg style="left:34.4px;top:609.4px;" width="22" height="16" viewBox="0 0 22 16"><path d="M1 2.2l3-1.6h13.6c2.2 0 3.6 1 3.6 2.2v1c0 .8-.8 1.4-2 1.4H2.2C1.4 5.2 1 4.8 1 4.2z" fill="#f2a21e"/><path d="M2.4 2.6h5.4M3 3.8h3" stroke="#565656" stroke-width="0.6"/><path d="M6.6 6l9 9.4M15.4 6l-9 9.4" stroke="#f2a21e" stroke-width="0.9"/></svg>
<svg style="left:34.4px;top:636px;" width="22" height="18" viewBox="0 0 22 18"><rect x="2.6" y="0.6" width="16.8" height="6.2" rx="0.8" fill="none" stroke="#d0722c" stroke-width="0.9"/><rect x="4" y="1.6" width="1.5" height="3" fill="#d0722c"/><rect x="6.6" y="1.6" width="1.5" height="3" fill="#d0722c"/><rect x="9.2" y="1.6" width="1.5" height="3" fill="#d0722c"/><rect x="11.8" y="1.6" width="1.5" height="3" fill="#d0722c"/><rect x="14.4" y="1.6" width="1.5" height="3" fill="#d0722c"/><rect x="17" y="1.6" width="1.5" height="3" fill="#d0722c"/><path d="M6.4 7.4l9.4 9.6M15.6 7.4L6.2 17" stroke="#d0722c" stroke-width="0.9"/></svg>
<svg style="left:36.2px;top:662.6px;" width="18" height="18" viewBox="0 0 18 18"><circle cx="11.90" cy="9.00" r="1.15" fill="#f25c33"/><circle cx="14.10" cy="9.00" r="0.85" fill="#f25c33"/><circle cx="15.80" cy="9.00" r="0.6" fill="#f25c33"/><circle cx="17.20" cy="9.00" r="0.4" fill="#f25c33"/><path d="M11.00 9.00L17.60 9.00" stroke="#f25c33" stroke-width="0.45"/><circle cx="11.05" cy="11.05" r="1.15" fill="#f25c33"/><circle cx="12.61" cy="12.61" r="0.85" fill="#f25c33"/><circle cx="13.81" cy="13.81" r="0.6" fill="#f25c33"/><circle cx="14.80" cy="14.80" r="0.4" fill="#f25c33"/><path d="M10.41 10.41L15.08 15.08" stroke="#f25c33" stroke-width="0.45"/><circle cx="9.00" cy="11.90" r="1.15" fill="#f25c33"/><circle cx="9.00" cy="14.10" r="0.85" fill="#f25c33"/><circle cx="9.00" cy="15.80" r="0.6" fill="#f25c33"/><circle cx="9.00" cy="17.20" r="0.4" fill="#f25c33"/><path d="M9.00 11.00L9.00 17.60" stroke="#f25c33" stroke-width="0.45"/><circle cx="6.95" cy="11.05" r="1.15" fill="#f25c33"/><circle cx="5.39" cy="12.61" r="0.85" fill="#f25c33"/><circle cx="4.19" cy="13.81" r="0.6" fill="#f25c33"/><circle cx="3.20" cy="14.80" r="0.4" fill="#f25c33"/><path d="M7.59 10.41L2.92 15.08" stroke="#f25c33" stroke-width="0.45"/><circle cx="6.10" cy="9.00" r="1.15" fill="#f25c33"/><circle cx="3.90" cy="9.00" r="0.85" fill="#f25c33"/><circle cx="2.20" cy="9.00" r="0.6" fill="#f25c33"/><circle cx="0.80" cy="9.00" r="0.4" fill="#f25c33"/><path d="M7.00 9.00L0.40 9.00" stroke="#f25c33" stroke-width="0.45"/><circle cx="6.95" cy="6.95" r="1.15" fill="#f25c33"/><circle cx="5.39" cy="5.39" r="0.85" fill="#f25c33"/><circle cx="4.19" cy="4.19" r="0.6" fill="#f25c33"/><circle cx="3.20" cy="3.20" r="0.4" fill="#f25c33"/><path d="M7.59 7.59L2.92 2.92" stroke="#f25c33" stroke-width="0.45"/><circle cx="9.00" cy="6.10" r="1.15" fill="#f25c33"/><circle cx="9.00" cy="3.90" r="0.85" fill="#f25c33"/><circle cx="9.00" cy="2.20" r="0.6" fill="#f25c33"/><circle cx="9.00" cy="0.80" r="0.4" fill="#f25c33"/><path d="M9.00 7.00L9.00 0.40" stroke="#f25c33" stroke-width="0.45"/><circle cx="11.05" cy="6.95" r="1.15" fill="#f25c33"/><circle cx="12.61" cy="5.39" r="0.85" fill="#f25c33"/><circle cx="13.81" cy="4.19" r="0.6" fill="#f25c33"/><circle cx="14.80" cy="3.20" r="0.4" fill="#f25c33"/><path d="M10.41 7.59L15.08 2.92" stroke="#f25c33" stroke-width="0.45"/><circle cx="9" cy="9" r="1.6" fill="#f25c33"/></svg>
<svg style="left:36.2px;top:689px;" width="18" height="18" viewBox="0 0 18 18"><circle cx="11.90" cy="9.00" r="1.15" fill="#f9a51c"/><circle cx="14.10" cy="9.00" r="0.85" fill="#f9a51c"/><circle cx="15.80" cy="9.00" r="0.6" fill="#f9a51c"/><circle cx="17.20" cy="9.00" r="0.4" fill="#f9a51c"/><path d="M11.00 9.00L17.60 9.00" stroke="#f9a51c" stroke-width="0.45"/><circle cx="11.05" cy="11.05" r="1.15" fill="#f9a51c"/><circle cx="12.61" cy="12.61" r="0.85" fill="#f9a51c"/><circle cx="13.81" cy="13.81" r="0.6" fill="#f9a51c"/><circle cx="14.80" cy="14.80" r="0.4" fill="#f9a51c"/><path d="M10.41 10.41L15.08 15.08" stroke="#f9a51c" stroke-width="0.45"/><circle cx="9.00" cy="11.90" r="1.15" fill="#f9a51c"/><circle cx="9.00" cy="14.10" r="0.85" fill="#f9a51c"/><circle cx="9.00" cy="15.80" r="0.6" fill="#f9a51c"/><circle cx="9.00" cy="17.20" r="0.4" fill="#f9a51c"/><path d="M9.00 11.00L9.00 17.60" stroke="#f9a51c" stroke-width="0.45"/><circle cx="6.95" cy="11.05" r="1.15" fill="#f9a51c"/><circle cx="5.39" cy="12.61" r="0.85" fill="#f9a51c"/><circle cx="4.19" cy="13.81" r="0.6" fill="#f9a51c"/><circle cx="3.20" cy="14.80" r="0.4" fill="#f9a51c"/><path d="M7.59 10.41L2.92 15.08" stroke="#f9a51c" stroke-width="0.45"/><circle cx="6.10" cy="9.00" r="1.15" fill="#f9a51c"/><circle cx="3.90" cy="9.00" r="0.85" fill="#f9a51c"/><circle cx="2.20" cy="9.00" r="0.6" fill="#f9a51c"/><circle cx="0.80" cy="9.00" r="0.4" fill="#f9a51c"/><path d="M7.00 9.00L0.40 9.00" stroke="#f9a51c" stroke-width="0.45"/><circle cx="6.95" cy="6.95" r="1.15" fill="#f9a51c"/><circle cx="5.39" cy="5.39" r="0.85" fill="#f9a51c"/><circle cx="4.19" cy="4.19" r="0.6" fill="#f9a51c"/><circle cx="3.20" cy="3.20" r="0.4" fill="#f9a51c"/><path d="M7.59 7.59L2.92 2.92" stroke="#f9a51c" stroke-width="0.45"/><circle cx="9.00" cy="6.10" r="1.15" fill="#f9a51c"/><circle cx="9.00" cy="3.90" r="0.85" fill="#f9a51c"/><circle cx="9.00" cy="2.20" r="0.6" fill="#f9a51c"/><circle cx="9.00" cy="0.80" r="0.4" fill="#f9a51c"/><path d="M9.00 7.00L9.00 0.40" stroke="#f9a51c" stroke-width="0.45"/><circle cx="11.05" cy="6.95" r="1.15" fill="#f9a51c"/><circle cx="12.61" cy="5.39" r="0.85" fill="#f9a51c"/><circle cx="13.81" cy="4.19" r="0.6" fill="#f9a51c"/><circle cx="14.80" cy="3.20" r="0.4" fill="#f9a51c"/><path d="M10.41 7.59L15.08 2.92" stroke="#f9a51c" stroke-width="0.45"/><circle cx="9" cy="9" r="1.6" fill="#f9a51c"/></svg>
<div style="left:231px;top:96px;width:609px;height:590px;background:#2d2d2d;"></div>
<div class="cell" style="left:231.7px;top:98.4px;width:57.6px;height:46.7px;background:#4067d9;border-radius:3.2px;box-shadow:0 0 0 1px rgba(20,20,20,.55);"></div>
<span class="t" style="top:100.29px;font-size:7.4px;color:#ffffff;letter-spacing:0.09px;left:233.8px;-webkit-text-stroke:0.28px #ffffff;">Cinematic Funk</span>
<div class="cell" style="left:292.53px;top:98.4px;width:57.6px;height:46.7px;background:#4067d9;border-radius:3.2px;box-shadow:0 0 0 1px rgba(20,20,20,.55);"></div>
<span class="t" style="top:100.29px;font-size:7.4px;color:#ffffff;letter-spacing:0.09px;left:294.63px;-webkit-text-stroke:0.28px #ffffff;">Cinematic Funk</span>
<div class="cell" style="left:353.36px;top:98.4px;width:57.6px;height:46.7px;background:#4067d9;border-radius:3.2px;box-shadow:0 0 0 1px rgba(20,20,20,.55);"></div>
<span class="t" style="top:100.29px;font-size:7.4px;color:#ffffff;letter-spacing:0.09px;left:355.46px;-webkit-text-stroke:0.28px #ffffff;">Cinematic Funk</span>
<div class="cell" style="left:414.19px;top:98.4px;width:57.6px;height:46.7px;background:#4067d9;border-radius:3.2px;box-shadow:0 0 0 1px rgba(20,20,20,.55);"></div>
<span class="t" style="top:100.29px;font-size:7.4px;color:#ffffff;letter-spacing:0.09px;left:416.29px;-webkit-text-stroke:0.28px #ffffff;">Cinematic Funk</span>
<div class="ec" style="left:475.02px;top:96.9px;width:57.6px;height:48.5px;"></div>
<div class="cell" style="left:535.85px;top:98.4px;width:57.6px;height:46.7px;background:#4067d9;border-radius:3.2px;box-shadow:0 0 0 1px rgba(20,20,20,.55);"></div>
<span class="t" style="top:100.29px;font-size:7.4px;color:#ffffff;letter-spacing:0.09px;left:537.95px;-webkit-text-stroke:0.28px #ffffff;">Cinematic Funk</span>
<div class="cell" style="left:596.68px;top:98.4px;width:57.6px;height:46.7px;background:#4067d9;border-radius:3.2px;box-shadow:0 0 0 1px rgba(20,20,20,.55);"></div>
<span class="t" style="top:100.29px;font-size:7.4px;color:#ffffff;letter-spacing:0.09px;left:598.78px;-webkit-text-stroke:0.28px #ffffff;">Cinematic Funk</span>
<div class="cell" style="left:657.51px;top:98.4px;width:57.6px;height:46.7px;background:#4067d9;border-radius:3.2px;box-shadow:0 0 0 1px rgba(20,20,20,.55);"></div>
<span class="t" style="top:100.29px;font-size:7.4px;color:#ffffff;letter-spacing:0.09px;left:659.61px;-webkit-text-stroke:0.28px #ffffff;">Cinematic Funk</span>
<div class="cell" style="left:718.34px;top:98.4px;width:57.6px;height:46.7px;background:#4067d9;border-radius:3.2px;box-shadow:0 0 0 1px rgba(20,20,20,.55);"></div>
<span class="t" style="top:100.29px;font-size:7.4px;color:#ffffff;letter-spacing:0.09px;left:720.44px;-webkit-text-stroke:0.28px #ffffff;">Cinematic Funk</span>
<div class="cell" style="left:779.17px;top:98.4px;width:57.6px;height:46.7px;background:#4067d9;border-radius:3.2px;box-shadow:0 0 0 1px rgba(20,20,20,.55);"></div>
<span class="t" style="top:100.29px;font-size:7.4px;color:#ffffff;letter-spacing:0.09px;left:781.27px;-webkit-text-stroke:0.28px #ffffff;">Cinematic Funk</span>
<div class="ec" style="left:231.7px;top:146.9px;width:57.6px;height:55.5px;"></div>
<div class="cell" style="left:292.53px;top:148.1px;width:57.6px;height:53.7px;background:#12a4cb;border-radius:3.2px;box-shadow:0 0 0 1px rgba(20,20,20,.55);"></div>
<span class="t" style="top:149.99px;font-size:7.4px;color:#ffffff;letter-spacing:0.09px;left:294.63px;-webkit-text-stroke:0.28px #ffffff;">Infinity</span>
<div class="cell" style="left:353.36px;top:148.1px;width:57.6px;height:53.7px;background:#12a4cb;border-radius:3.2px;box-shadow:0 0 0 1px rgba(20,20,20,.55);"></div>
<span class="t" style="top:149.99px;font-size:7.4px;color:#ffffff;letter-spacing:0.09px;left:355.46px;-webkit-text-stroke:0.28px #ffffff;">Infinity</span>
<div class="ec" style="left:414.19px;top:146.9px;width:57.6px;height:55.5px;"></div>
<div class="cell" style="left:475.02px;top:148.1px;width:57.6px;height:53.7px;background:#12a4cb;border-radius:3.2px;box-shadow:0 0 0 1px rgba(20,20,20,.55);"></div>
<span class="t" style="top:149.99px;font-size:7.4px;color:#ffffff;letter-spacing:0.09px;left:477.12px;-webkit-text-stroke:0.28px #ffffff;">Infinity</span>
<div class="cell" style="left:535.85px;top:148.1px;width:57.6px;height:53.7px;background:#12a4cb;border-radius:3.2px;box-shadow:0 0 0 1px rgba(20,20,20,.55);"></div>
<span class="t" style="top:149.99px;font-size:7.4px;color:#ffffff;letter-spacing:0.09px;left:537.95px;-webkit-text-stroke:0.28px #ffffff;">Infinity</span>
<div class="ec" style="left:596.68px;top:146.9px;width:57.6px;height:55.5px;"></div>
<div class="cell" style="left:657.51px;top:148.1px;width:57.6px;height:53.7px;background:#12a4cb;border-radius:3.2px;box-shadow:0 0 0 1px rgba(20,20,20,.55);"></div>
<span class="t" style="top:149.99px;font-size:7.4px;color:#ffffff;letter-spacing:0.09px;left:659.61px;-webkit-text-stroke:0.28px #ffffff;">Infinity</span>
<div class="ec" style="left:718.34px;top:146.9px;width:57.6px;height:55.5px;"></div>
<div class="ec" style="left:779.17px;top:146.9px;width:57.6px;height:55.5px;"></div>
<div class="ec" style="left:231.7px;top:203.9px;width:57.6px;height:55.5px;"></div>
<div class="cell" style="left:292.53px;top:205px;width:57.6px;height:53.9px;background:#1ca2a0;border-radius:3.2px;box-shadow:0 0 0 1px rgba(20,20,20,.55);"></div>
<span class="t" style="top:206.89px;font-size:7.4px;color:#ffffff;letter-spacing:0.09px;left:294.63px;-webkit-text-stroke:0.28px #ffffff;">Percussion</span>
<div class="ec" style="left:353.36px;top:203.9px;width:57.6px;height:55.5px;"></div>
<div class="cell" style="left:414.19px;top:205px;width:57.6px;height:53.9px;background:#1ca2a0;border-radius:3.2px;box-shadow:0 0 0 1px rgba(20,20,20,.55);"></div>
<span class="t" style="top:206.89px;font-size:7.4px;color:#ffffff;letter-spacing:0.09px;left:416.29px;-webkit-text-stroke:0.28px #ffffff;">Percussion</span>
<div class="cell" style="left:475.02px;top:205px;width:57.6px;height:53.9px;background:#1ca2a0;border-radius:3.2px;box-shadow:0 0 0 1px rgba(20,20,20,.55);"></div>
<span class="t" style="top:206.89px;font-size:7.4px;color:#ffffff;letter-spacing:0.09px;left:477.12px;-webkit-text-stroke:0.28px #ffffff;">Percussion</span>
<div class="ec" style="left:535.85px;top:203.9px;width:57.6px;height:55.5px;"></div>
<div class="cell" style="left:596.68px;top:205px;width:57.6px;height:53.9px;background:#1ca2a0;border-radius:3.2px;box-shadow:0 0 0 1px rgba(20,20,20,.55);"></div>
<span class="t" style="top:206.89px;font-size:7.4px;color:#ffffff;letter-spacing:0.09px;left:598.78px;-webkit-text-stroke:0.28px #ffffff;">Percussion</span>
<div class="cell" style="left:657.51px;top:205px;width:57.6px;height:53.9px;background:#1ca2a0;border-radius:3.2px;box-shadow:0 0 0 1px rgba(20,20,20,.55);"></div>
<span class="t" style="top:206.89px;font-size:7.4px;color:#ffffff;letter-spacing:0.09px;left:659.61px;-webkit-text-stroke:0.28px #ffffff;">Percussion</span>
<div class="cell" style="left:718.34px;top:205px;width:57.6px;height:53.9px;background:#1ca2a0;border-radius:3.2px;box-shadow:0 0 0 1px rgba(20,20,20,.55);"></div>
<span class="t" style="top:206.89px;font-size:7.4px;color:#ffffff;letter-spacing:0.09px;left:720.44px;-webkit-text-stroke:0.28px #ffffff;">Percussion</span>
<div class="ec" style="left:779.17px;top:203.9px;width:57.6px;height:55.5px;"></div>
<div class="cell" style="left:231.7px;top:261.8px;width:57.6px;height:49.3px;background:#1fa385;border-radius:3.2px;box-shadow:0 0 0 1px rgba(20,20,20,.55);"></div>
<span class="t" style="top:263.69px;font-size:7.4px;color:#ffffff;letter-spacing:0.09px;left:233.8px;-webkit-text-stroke:0.28px #ffffff;">Textures</span>
<div class="ec" style="left:292.53px;top:260.9px;width:57.6px;height:51.5px;"></div>
<div class="cell" style="left:353.36px;top:261.8px;width:57.6px;height:49.3px;background:#1fa385;border-radius:3.2px;box-shadow:0 0 0 1px rgba(20,20,20,.55);"></div>
<span class="t" style="top:263.69px;font-size:7.4px;color:#ffffff;letter-spacing:0.09px;left:355.46px;-webkit-text-stroke:0.28px #ffffff;">Textures</span>
<div class="cell" style="left:414.19px;top:261.8px;width:57.6px;height:49.3px;background:#1fa385;border-radius:3.2px;box-shadow:0 0 0 1px rgba(20,20,20,.55);"></div>
<span class="t" style="top:263.69px;font-size:7.4px;color:#ffffff;letter-spacing:0.09px;left:416.29px;-webkit-text-stroke:0.28px #ffffff;">Textures</span>
<div class="cell" style="left:475.02px;top:261.8px;width:57.6px;height:49.3px;background:#1fa385;border-radius:3.2px;box-shadow:0 0 0 1px rgba(20,20,20,.55);"></div>
<span class="t" style="top:263.69px;font-size:7.4px;color:#ffffff;letter-spacing:0.09px;left:477.12px;-webkit-text-stroke:0.28px #ffffff;">Textures</span>
<div class="cell" style="left:535.85px;top:261.8px;width:57.6px;height:49.3px;background:#1fa385;border-radius:3.2px;box-shadow:0 0 0 1px rgba(20,20,20,.55);"></div>
<span class="t" style="top:263.69px;font-size:7.4px;color:#ffffff;letter-spacing:0.09px;left:537.95px;-webkit-text-stroke:0.28px #ffffff;">Textures</span>
<div class="cell" style="left:596.68px;top:261.8px;width:57.6px;height:49.3px;background:#1fa385;border-radius:3.2px;box-shadow:0 0 0 1px rgba(20,20,20,.55);"></div>
<span class="t" style="top:263.69px;font-size:7.4px;color:#ffffff;letter-spacing:0.09px;left:598.78px;-webkit-text-stroke:0.28px #ffffff;">Textures</span>
<div class="ec" style="left:657.51px;top:260.9px;width:57.6px;height:51.5px;"></div>
<div class="cell" style="left:718.34px;top:261.8px;width:57.6px;height:49.3px;background:#1fa385;border-radius:3.2px;box-shadow:0 0 0 1px rgba(20,20,20,.55);"></div>
<span class="t" style="top:263.69px;font-size:7.4px;color:#ffffff;letter-spacing:0.09px;left:720.44px;-webkit-text-stroke:0.28px #ffffff;">Textures</span>
<div class="cell" style="left:779.17px;top:261.8px;width:57.6px;height:49.3px;background:#1fa385;border-radius:3.2px;box-shadow:0 0 0 1px rgba(20,20,20,.55);"></div>
<span class="t" style="top:263.69px;font-size:7.4px;color:#ffffff;letter-spacing:0.09px;left:781.27px;-webkit-text-stroke:0.28px #ffffff;">Textures</span>
<div class="ec" style="left:231.7px;top:313.9px;width:57.6px;height:114.5px;"></div>
<div class="cell" style="left:292.53px;top:314.9px;width:57.6px;height:113px;background:#1ba58a;border-radius:3.2px;box-shadow:0 0 0 1px rgba(20,20,20,.55);"></div>
<span class="t" style="top:316.79px;font-size:7.4px;color:#ffffff;letter-spacing:0.09px;left:294.63px;-webkit-text-stroke:0.28px #ffffff;">Beats</span>
<div class="ec" style="left:353.36px;top:313.9px;width:57.6px;height:114.5px;"></div>
<div class="cell" style="left:414.19px;top:314.9px;width:57.6px;height:113px;background:#1ba58a;border-radius:3.2px;box-shadow:0 0 0 1px rgba(20,20,20,.55);"></div>
<span class="t" style="top:316.79px;font-size:7.4px;color:#ffffff;letter-spacing:0.09px;left:416.29px;-webkit-text-stroke:0.28px #ffffff;">Beats</span>
<div class="cell" style="left:475.02px;top:314.9px;width:57.6px;height:113px;background:#1ba58a;border-radius:3.2px;box-shadow:0 0 0 1px rgba(20,20,20,.55);"></div>
<span class="t" style="top:316.79px;font-size:7.4px;color:#ffffff;letter-spacing:0.09px;left:477.12px;-webkit-text-stroke:0.28px #ffffff;">Beats</span>
<div class="cell" style="left:535.85px;top:314.9px;width:57.6px;height:113px;background:#1ba58a;border-radius:3.2px;box-shadow:0 0 0 1px rgba(20,20,20,.55);"></div>
<span class="t" style="top:316.79px;font-size:7.4px;color:#ffffff;letter-spacing:0.09px;left:537.95px;-webkit-text-stroke:0.28px #ffffff;">Beats</span>
<div class="cell" style="left:596.68px;top:314.9px;width:57.6px;height:113px;background:#1ba58a;border-radius:3.2px;box-shadow:0 0 0 1px rgba(20,20,20,.55);"></div>
<span class="t" style="top:316.79px;font-size:7.4px;color:#ffffff;letter-spacing:0.09px;left:598.78px;-webkit-text-stroke:0.28px #ffffff;">Beats</span>
<div class="cell" style="left:657.51px;top:314.9px;width:57.6px;height:113px;background:#1ba58a;border-radius:3.2px;box-shadow:0 0 0 1px rgba(20,20,20,.55);"></div>
<span class="t" style="top:316.79px;font-size:7.4px;color:#ffffff;letter-spacing:0.09px;left:659.61px;-webkit-text-stroke:0.28px #ffffff;">Beats</span>
<div class="cell" style="left:718.34px;top:314.9px;width:57.6px;height:113px;background:#1ba58a;border-radius:3.2px;box-shadow:0 0 0 1px rgba(20,20,20,.55);"></div>
<span class="t" style="top:316.79px;font-size:7.4px;color:#ffffff;letter-spacing:0.09px;left:720.44px;-webkit-text-stroke:0.28px #ffffff;">Beats</span>
<div class="ec" style="left:779.17px;top:313.9px;width:57.6px;height:114.5px;"></div>
<div class="cell" style="left:231.7px;top:430.9px;width:57.6px;height:73.7px;background:#1fa433;border-radius:3.2px;box-shadow:0 0 0 1px rgba(20,20,20,.55);"></div>
<span class="t" style="top:432.79px;font-size:7.4px;color:#ffffff;letter-spacing:0.09px;left:233.8px;-webkit-text-stroke:0.28px #ffffff;">Keyboards</span>
<div class="cell" style="left:292.53px;top:430.9px;width:57.6px;height:73.7px;background:#1fa433;border-radius:3.2px;box-shadow:0 0 0 1px rgba(20,20,20,.55);"></div>
<span class="t" style="top:432.79px;font-size:7.4px;color:#ffffff;letter-spacing:0.09px;left:294.63px;-webkit-text-stroke:0.28px #ffffff;">Keyboards</span>
<div class="cell" style="left:353.36px;top:430.9px;width:57.6px;height:73.7px;background:#1fa433;border-radius:3.2px;box-shadow:0 0 0 1px rgba(20,20,20,.55);"></div>
<span class="t" style="top:432.79px;font-size:7.4px;color:#ffffff;letter-spacing:0.09px;left:355.46px;-webkit-text-stroke:0.28px #ffffff;">Keyboards</span>
<div class="cell" style="left:414.19px;top:430.9px;width:57.6px;height:73.7px;background:#1fa433;border-radius:3.2px;box-shadow:0 0 0 1px rgba(20,20,20,.55);"></div>
<span class="t" style="top:432.79px;font-size:7.4px;color:#ffffff;letter-spacing:0.09px;left:416.29px;-webkit-text-stroke:0.28px #ffffff;">Keyboards</span>
<div class="cell" style="left:475.02px;top:430.9px;width:57.6px;height:73.7px;background:#1fa433;border-radius:3.2px;box-shadow:0 0 0 1px rgba(20,20,20,.55);"></div>
<span class="t" style="top:432.79px;font-size:7.4px;color:#ffffff;letter-spacing:0.09px;left:477.12px;-webkit-text-stroke:0.28px #ffffff;">Keyboards</span>
<div class="cell" style="left:535.85px;top:430.9px;width:57.6px;height:73.7px;background:#1fa433;border-radius:3.2px;box-shadow:0 0 0 1px rgba(20,20,20,.55);"></div>
<span class="t" style="top:432.79px;font-size:7.4px;color:#ffffff;letter-spacing:0.09px;left:537.95px;-webkit-text-stroke:0.28px #ffffff;">Keyboards</span>
<div class="cell" style="left:596.68px;top:430.9px;width:57.6px;height:73.7px;background:#1fa433;border-radius:3.2px;box-shadow:0 0 0 1px rgba(20,20,20,.55);"></div>
<span class="t" style="top:432.79px;font-size:7.4px;color:#ffffff;letter-spacing:0.09px;left:598.78px;-webkit-text-stroke:0.28px #ffffff;">Keyboards</span>
<div class="cell" style="left:657.51px;top:430.9px;width:57.6px;height:73.7px;background:#1fa433;border-radius:3.2px;box-shadow:0 0 0 1px rgba(20,20,20,.55);"></div>
<span class="t" style="top:432.79px;font-size:7.4px;color:#ffffff;letter-spacing:0.09px;left:659.61px;-webkit-text-stroke:0.28px #ffffff;">Keyboards</span>
<div class="cell" style="left:718.34px;top:430.9px;width:57.6px;height:73.7px;background:#1fa433;border-radius:3.2px;box-shadow:0 0 0 1px rgba(20,20,20,.55);"></div>
<span class="t" style="top:432.79px;font-size:7.4px;color:#ffffff;letter-spacing:0.09px;left:720.44px;-webkit-text-stroke:0.28px #ffffff;">Keyboards</span>
<div class="ec" style="left:779.17px;top:429.9px;width:57.6px;height:75.5px;"></div>
<div class="ec" style="left:231.7px;top:506.9px;width:57.6px;height:38.5px;"></div>
<div class="ec" style="left:292.53px;top:506.9px;width:57.6px;height:38.5px;"></div>
<div class="cell" style="left:353.36px;top:508px;width:57.6px;height:36.7px;background:#6ba61b;border-radius:3.2px;box-shadow:0 0 0 1px rgba(20,20,20,.55);"></div>
<span class="t" style="top:509.89px;font-size:7.4px;color:#ffffff;letter-spacing:0.09px;left:355.46px;-webkit-text-stroke:0.28px #ffffff;">Synths 1</span>
<div class="cell" style="left:414.19px;top:508px;width:57.6px;height:36.7px;background:#6ba61b;border-radius:3.2px;box-shadow:0 0 0 1px rgba(20,20,20,.55);"></div>
<span class="t" style="top:509.89px;font-size:7.4px;color:#ffffff;letter-spacing:0.09px;left:416.29px;-webkit-text-stroke:0.28px #ffffff;">Synths 1</span>
<div class="cell" style="left:475.02px;top:508px;width:57.6px;height:36.7px;background:#6ba61b;border-radius:3.2px;box-shadow:0 0 0 1px rgba(20,20,20,.55);"></div>
<span class="t" style="top:509.89px;font-size:7.4px;color:#ffffff;letter-spacing:0.09px;left:477.12px;-webkit-text-stroke:0.28px #ffffff;">Synths 1</span>
<div class="cell" style="left:535.85px;top:508px;width:57.6px;height:36.7px;background:#6ba61b;border-radius:3.2px;box-shadow:0 0 0 1px rgba(20,20,20,.55);"></div>
<span class="t" style="top:509.89px;font-size:7.4px;color:#ffffff;letter-spacing:0.09px;left:537.95px;-webkit-text-stroke:0.28px #ffffff;">Synths 1</span>
<div class="cell" style="left:596.68px;top:508px;width:57.6px;height:36.7px;background:#6ba61b;border-radius:3.2px;box-shadow:0 0 0 1px rgba(20,20,20,.55);"></div>
<span class="t" style="top:509.89px;font-size:7.4px;color:#ffffff;letter-spacing:0.09px;left:598.78px;-webkit-text-stroke:0.28px #ffffff;">Synths 1</span>
<div class="cell" style="left:657.51px;top:508px;width:57.6px;height:36.7px;background:#6ba61b;border-radius:3.2px;box-shadow:0 0 0 1px rgba(20,20,20,.55);"></div>
<span class="t" style="top:509.89px;font-size:7.4px;color:#ffffff;letter-spacing:0.09px;left:659.61px;-webkit-text-stroke:0.28px #ffffff;">Synths 1</span>
<div class="cell" style="left:718.34px;top:508px;width:57.6px;height:36.7px;background:#6ba61b;border-radius:3.2px;box-shadow:0 0 0 1px rgba(20,20,20,.55);"></div>
<span class="t" style="top:509.89px;font-size:7.4px;color:#ffffff;letter-spacing:0.09px;left:720.44px;-webkit-text-stroke:0.28px #ffffff;">Synths 1</span>
<div class="cell" style="left:779.17px;top:508px;width:57.6px;height:36.7px;background:#6ba61b;border-radius:3.2px;box-shadow:0 0 0 1px rgba(20,20,20,.55);"></div>
<span class="t" style="top:509.89px;font-size:7.4px;color:#ffffff;letter-spacing:0.09px;left:781.27px;-webkit-text-stroke:0.28px #ffffff;">Synths 1</span>
<div class="ec" style="left:231.7px;top:546.9px;width:57.6px;height:25.5px;"></div>
<div class="cell" style="left:292.53px;top:548.1px;width:57.6px;height:23.3px;background:#5ba71d;border-radius:3.2px;box-shadow:0 0 0 1px rgba(20,20,20,.55);"></div>
<span class="t" style="top:549.99px;font-size:7.4px;color:#ffffff;letter-spacing:0.09px;left:294.63px;-webkit-text-stroke:0.28px #ffffff;">Vocal Chops</span>
<div class="cell" style="left:353.36px;top:548.1px;width:57.6px;height:23.3px;background:#5ba71d;border-radius:3.2px;box-shadow:0 0 0 1px rgba(20,20,20,.55);"></div>
<span class="t" style="top:549.99px;font-size:7.4px;color:#ffffff;letter-spacing:0.09px;left:355.46px;-webkit-text-stroke:0.28px #ffffff;">Vocal Chops</span>
<div class="cell" style="left:414.19px;top:548.1px;width:57.6px;height:23.3px;background:#5ba71d;border-radius:3.2px;box-shadow:0 0 0 1px rgba(20,20,20,.55);"></div>
<span class="t" style="top:549.99px;font-size:7.4px;color:#ffffff;letter-spacing:0.09px;left:416.29px;-webkit-text-stroke:0.28px #ffffff;">Vocal Chops</span>
<div class="cell" style="left:475.02px;top:548.1px;width:57.6px;height:23.3px;background:#5ba71d;border-radius:3.2px;box-shadow:0 0 0 1px rgba(20,20,20,.55);"></div>
<span class="t" style="top:549.99px;font-size:7.4px;color:#ffffff;letter-spacing:0.09px;left:477.12px;-webkit-text-stroke:0.28px #ffffff;">Vocal Chops</span>
<div class="cell" style="left:535.85px;top:548.1px;width:57.6px;height:23.3px;background:#5ba71d;border-radius:3.2px;box-shadow:0 0 0 1px rgba(20,20,20,.55);"></div>
<span class="t" style="top:549.99px;font-size:7.4px;color:#ffffff;letter-spacing:0.09px;left:537.95px;-webkit-text-stroke:0.28px #ffffff;">Vocal Chops</span>
<div class="cell" style="left:596.68px;top:548.1px;width:57.6px;height:23.3px;background:#5ba71d;border-radius:3.2px;box-shadow:0 0 0 1px rgba(20,20,20,.55);"></div>
<span class="t" style="top:549.99px;font-size:7.4px;color:#ffffff;letter-spacing:0.09px;left:598.78px;-webkit-text-stroke:0.28px #ffffff;">Vocal Chops</span>
<div class="cell" style="left:657.51px;top:548.1px;width:57.6px;height:23.3px;background:#5ba71d;border-radius:3.2px;box-shadow:0 0 0 1px rgba(20,20,20,.55);"></div>
<span class="t" style="top:549.99px;font-size:7.4px;color:#ffffff;letter-spacing:0.09px;left:659.61px;-webkit-text-stroke:0.28px #ffffff;">Vocal Chops</span>
<div class="cell" style="left:718.34px;top:548.1px;width:57.6px;height:23.3px;background:#5ba71d;border-radius:3.2px;box-shadow:0 0 0 1px rgba(20,20,20,.55);"></div>
<span class="t" style="top:549.99px;font-size:7.4px;color:#ffffff;letter-spacing:0.09px;left:720.44px;-webkit-text-stroke:0.28px #ffffff;">Vocal Chops</span>
<div class="ec" style="left:779.17px;top:546.9px;width:57.6px;height:25.5px;"></div>
<div class="ec" style="left:231.7px;top:573.9px;width:57.6px;height:27.5px;"></div>
<div class="ec" style="left:292.53px;top:573.9px;width:57.6px;height:27.5px;"></div>
<div class="cell" style="left:353.36px;top:574.9px;width:57.6px;height:25.2px;background:#1da741;border-radius:3.2px;box-shadow:0 0 0 1px rgba(20,20,20,.55);"></div>
<span class="t" style="top:576.79px;font-size:7.4px;color:#ffffff;letter-spacing:0.09px;left:355.46px;-webkit-text-stroke:0.28px #ffffff;">Anthemic Lead</span>
<div class="ec" style="left:414.19px;top:573.9px;width:57.6px;height:27.5px;"></div>
<div class="cell" style="left:475.02px;top:574.9px;width:57.6px;height:25.2px;background:#1da741;border-radius:3.2px;box-shadow:0 0 0 1px rgba(20,20,20,.55);"></div>
<span class="t" style="top:576.79px;font-size:7.4px;color:#ffffff;letter-spacing:0.09px;left:477.12px;-webkit-text-stroke:0.28px #ffffff;">Anthemic Lead</span>
<div class="ec" style="left:535.85px;top:573.9px;width:57.6px;height:27.5px;"></div>
<div class="cell" style="left:596.68px;top:574.9px;width:57.6px;height:25.2px;background:#1da741;border-radius:3.2px;box-shadow:0 0 0 1px rgba(20,20,20,.55);"></div>
<span class="t" style="top:576.79px;font-size:7.4px;color:#ffffff;letter-spacing:0.09px;left:598.78px;-webkit-text-stroke:0.28px #ffffff;">Anthemic Lead</span>
<div class="ec" style="left:657.51px;top:573.9px;width:57.6px;height:27.5px;"></div>
<div class="cell" style="left:718.34px;top:574.9px;width:57.6px;height:25.2px;background:#1da741;border-radius:3.2px;box-shadow:0 0 0 1px rgba(20,20,20,.55);"></div>
<span class="t" style="top:576.79px;font-size:7.4px;color:#ffffff;letter-spacing:0.09px;left:720.44px;-webkit-text-stroke:0.28px #ffffff;">Anthemic Lead</span>
<div class="ec" style="left:779.17px;top:573.9px;width:57.6px;height:27.5px;"></div>
<div class="ec" style="left:231.7px;top:602.9px;width:57.6px;height:28.5px;"></div>
<div class="ec" style="left:292.53px;top:602.9px;width:57.6px;height:28.5px;"></div>
<div class="ec" style="left:353.36px;top:602.9px;width:57.6px;height:28.5px;"></div>
<div class="cell" style="left:414.19px;top:603px;width:57.6px;height:27.7px;background:#a66d1f;border-radius:3.2px;box-shadow:0 0 0 1px rgba(20,20,20,.55);"></div>
<span class="t" style="top:604.89px;font-size:7.4px;color:#ffffff;letter-spacing:0.09px;left:416.29px;-webkit-text-stroke:0.28px #ffffff;">Synths 2</span>
<div class="cell" style="left:475.02px;top:603px;width:57.6px;height:27.7px;background:#a66d1f;border-radius:3.2px;box-shadow:0 0 0 1px rgba(20,20,20,.55);"></div>
<span class="t" style="top:604.89px;font-size:7.4px;color:#ffffff;letter-spacing:0.09px;left:477.12px;-webkit-text-stroke:0.28px #ffffff;">Synths 2</span>
<div class="cell" style="left:535.85px;top:603px;width:57.6px;height:27.7px;background:#a66d1f;border-radius:3.2px;box-shadow:0 0 0 1px rgba(20,20,20,.55);"></div>
<span class="t" style="top:604.89px;font-size:7.4px;color:#ffffff;letter-spacing:0.09px;left:537.95px;-webkit-text-stroke:0.28px #ffffff;">Synths 2</span>
<div class="cell" style="left:596.68px;top:603px;width:57.6px;height:27.7px;background:#a66d1f;border-radius:3.2px;box-shadow:0 0 0 1px rgba(20,20,20,.55);"></div>
<span class="t" style="top:604.89px;font-size:7.4px;color:#ffffff;letter-spacing:0.09px;left:598.78px;-webkit-text-stroke:0.28px #ffffff;">Synths 2</span>
<div class="cell" style="left:657.51px;top:603px;width:57.6px;height:27.7px;background:#a66d1f;border-radius:3.2px;box-shadow:0 0 0 1px rgba(20,20,20,.55);"></div>
<span class="t" style="top:604.89px;font-size:7.4px;color:#ffffff;letter-spacing:0.09px;left:659.61px;-webkit-text-stroke:0.28px #ffffff;">Synths 2</span>
<div class="cell" style="left:718.34px;top:603px;width:57.6px;height:27.7px;background:#a66d1f;border-radius:3.2px;box-shadow:0 0 0 1px rgba(20,20,20,.55);"></div>
<span class="t" style="top:604.89px;font-size:7.4px;color:#ffffff;letter-spacing:0.09px;left:720.44px;-webkit-text-stroke:0.28px #ffffff;">Synths 2</span>
<div class="cell" style="left:779.17px;top:603px;width:57.6px;height:27.7px;background:#a66d1f;border-radius:3.2px;box-shadow:0 0 0 1px rgba(20,20,20,.55);"></div>
<span class="t" style="top:604.89px;font-size:7.4px;color:#ffffff;letter-spacing:0.09px;left:781.27px;-webkit-text-stroke:0.28px #ffffff;">Synths 2</span>
<div class="ec" style="left:231.7px;top:632.9px;width:57.6px;height:24.5px;"></div>
<div class="ec" style="left:292.53px;top:632.9px;width:57.6px;height:24.5px;"></div>
<div class="ec" style="left:353.36px;top:632.9px;width:57.6px;height:24.5px;"></div>
<div class="cell" style="left:414.19px;top:634px;width:57.6px;height:22.9px;background:#a4521b;border-radius:3.2px;box-shadow:0 0 0 1px rgba(20,20,20,.55);"></div>
<span class="t" style="top:635.89px;font-size:7.4px;color:#ffffff;letter-spacing:0.09px;left:416.29px;-webkit-text-stroke:0.28px #ffffff;">Synths 3</span>
<div class="cell" style="left:475.02px;top:634px;width:57.6px;height:22.9px;background:#a4521b;border-radius:3.2px;box-shadow:0 0 0 1px rgba(20,20,20,.55);"></div>
<span class="t" style="top:635.89px;font-size:7.4px;color:#ffffff;letter-spacing:0.09px;left:477.12px;-webkit-text-stroke:0.28px #ffffff;">Synths 3</span>
<div class="cell" style="left:535.85px;top:634px;width:57.6px;height:22.9px;background:#a4521b;border-radius:3.2px;box-shadow:0 0 0 1px rgba(20,20,20,.55);"></div>
<span class="t" style="top:635.89px;font-size:7.4px;color:#ffffff;letter-spacing:0.09px;left:537.95px;-webkit-text-stroke:0.28px #ffffff;">Synths 3</span>
<div class="ec" style="left:596.68px;top:632.9px;width:57.6px;height:24.5px;"></div>
<div class="cell" style="left:657.51px;top:634px;width:57.6px;height:22.9px;background:#a4521b;border-radius:3.2px;box-shadow:0 0 0 1px rgba(20,20,20,.55);"></div>
<span class="t" style="top:635.89px;font-size:7.4px;color:#ffffff;letter-spacing:0.09px;left:659.61px;-webkit-text-stroke:0.28px #ffffff;">Synths 3</span>
<div class="cell" style="left:718.34px;top:634px;width:57.6px;height:22.9px;background:#a4521b;border-radius:3.2px;box-shadow:0 0 0 1px rgba(20,20,20,.55);"></div>
<span class="t" style="top:635.89px;font-size:7.4px;color:#ffffff;letter-spacing:0.09px;left:720.44px;-webkit-text-stroke:0.28px #ffffff;">Synths 3</span>
<div class="ec" style="left:779.17px;top:632.9px;width:57.6px;height:24.5px;"></div>
<div class="ec" style="left:231.7px;top:658.9px;width:57.6px;height:25.5px;"></div>
<div class="ec" style="left:292.53px;top:658.9px;width:57.6px;height:25.5px;"></div>
<div class="ec" style="left:353.36px;top:658.9px;width:57.6px;height:25.5px;"></div>
<div class="cell" style="left:414.19px;top:660.3px;width:57.6px;height:23.3px;background:#a5361f;border-radius:3.2px;box-shadow:0 0 0 1px rgba(20,20,20,.55);"></div>
<span class="t" style="top:662.19px;font-size:7.4px;color:#ffffff;letter-spacing:0.09px;left:416.29px;-webkit-text-stroke:0.28px #ffffff;">Transitions</span>
<div class="cell" style="left:475.02px;top:660.3px;width:57.6px;height:23.3px;background:#a5361f;border-radius:3.2px;box-shadow:0 0 0 1px rgba(20,20,20,.55);"></div>
<span class="t" style="top:662.19px;font-size:7.4px;color:#ffffff;letter-spacing:0.09px;left:477.12px;-webkit-text-stroke:0.28px #ffffff;">Transitions</span>
<div class="cell" style="left:535.85px;top:660.3px;width:57.6px;height:23.3px;background:#a5361f;border-radius:3.2px;box-shadow:0 0 0 1px rgba(20,20,20,.55);"></div>
<span class="t" style="top:662.19px;font-size:7.4px;color:#ffffff;letter-spacing:0.09px;left:537.95px;-webkit-text-stroke:0.28px #ffffff;">Transitions</span>
<div class="cell" style="left:596.68px;top:660.3px;width:57.6px;height:23.3px;background:#a5361f;border-radius:3.2px;box-shadow:0 0 0 1px rgba(20,20,20,.55);"></div>
<span class="t" style="top:662.19px;font-size:7.4px;color:#ffffff;letter-spacing:0.09px;left:598.78px;-webkit-text-stroke:0.28px #ffffff;">Transitions</span>
<div class="cell" style="left:657.51px;top:660.3px;width:57.6px;height:23.3px;background:#a5361f;border-radius:3.2px;box-shadow:0 0 0 1px rgba(20,20,20,.55);"></div>
<span class="t" style="top:662.19px;font-size:7.4px;color:#ffffff;letter-spacing:0.09px;left:659.61px;-webkit-text-stroke:0.28px #ffffff;">Transitions</span>
<div class="ec" style="left:718.34px;top:658.9px;width:57.6px;height:25.5px;"></div>
<div class="ec" style="left:779.17px;top:658.9px;width:57.6px;height:25.5px;"></div>
<svg style="left:0;top:0" width="1144" height="716" viewBox="0 0 1144 716"><circle cx="260.5" cy="126.75" r="4.2" fill="none" stroke="#d5ddf8" stroke-width="0.8" opacity="0.75"/><circle cx="260.5" cy="126.75" r="6.4" fill="none" stroke="#d5ddf8" stroke-width="0.8" opacity="0.75"/><circle cx="260.5" cy="126.75" r="8.6" fill="none" stroke="#d5ddf8" stroke-width="0.8" stroke-dasharray="0.7 1.3" opacity="0.75"/><circle cx="260.5" cy="126.75" r="10.8" fill="none" stroke="#d5ddf8" stroke-width="0.8" stroke-dasharray="1.4 0.7" opacity="0.75"/><circle cx="260.5" cy="126.75" r="13.2" fill="none" stroke="#d5ddf8" stroke-width="0.8" stroke-dasharray="1.1 0.9" opacity="0.75"/><circle cx="255.5" cy="119.8" r="0.7" fill="#e8eeff"/><circle cx="265.8" cy="130.3" r="0.7" fill="#e8eeff"/><circle cx="270.8" cy="118.5" r="0.7" fill="#e8eeff"/><circle cx="254.7" cy="129.4" r="0.7" fill="#e8eeff"/><circle cx="256.9" cy="116.6" r="0.7" fill="#e8eeff"/><circle cx="259.0" cy="118.3" r="0.7" fill="#e8eeff"/><circle cx="255.1" cy="123.3" r="0.7" fill="#e8eeff"/><circle cx="265.7" cy="123.0" r="0.7" fill="#e8eeff"/><circle cx="266.8" cy="127.6" r="0.7" fill="#e8eeff"/><circle cx="272.7" cy="121.8" r="0.7" fill="#e8eeff"/><circle cx="321.33" cy="126.75" r="3.6" fill="none" stroke="#d5ddf8" stroke-width="0.7" stroke-dasharray="1.6 1.4" opacity="0.75"/><circle cx="321.33" cy="126.75" r="5.6" fill="none" stroke="#d5ddf8" stroke-width="0.7" stroke-dasharray="0.7 0.6" opacity="0.75"/><circle cx="321.33" cy="126.75" r="7.6" fill="none" stroke="#d5ddf8" stroke-width="0.7" stroke-dasharray="1.4 1.2" opacity="0.75"/><circle cx="321.33" cy="126.75" r="9.6" fill="none" stroke="#d5ddf8" stroke-width="0.7" stroke-dasharray="1.3 0.8" opacity="0.75"/><circle cx="321.33" cy="126.75" r="11.6" fill="none" stroke="#d5ddf8" stroke-width="0.7" stroke-dasharray="1.2 1.0" opacity="0.75"/><circle cx="321.33" cy="126.75" r="13.2" fill="none" stroke="#d5ddf8" stroke-width="0.7" stroke-dasharray="1.2 0.6" opacity="0.75"/><circle cx="321.33" cy="126.75" r="8.6" fill="none" stroke="#ffffff" stroke-width="8.8" opacity="0.13"/><circle cx="310.8" cy="131.7" r="0.7" fill="#e8eeff"/><circle cx="325.7" cy="114.3" r="0.7" fill="#e8eeff"/><circle cx="333.9" cy="122.6" r="0.7" fill="#e8eeff"/><circle cx="333.5" cy="121.5" r="0.7" fill="#e8eeff"/><circle cx="320.7" cy="132.3" r="0.7" fill="#e8eeff"/><circle cx="327.9" cy="119.8" r="0.7" fill="#e8eeff"/><circle cx="312.0" cy="128.9" r="0.7" fill="#e8eeff"/><circle cx="331.0" cy="120.4" r="0.7" fill="#e8eeff"/><circle cx="331.6" cy="118.4" r="0.7" fill="#e8eeff"/><circle cx="325.2" cy="133.3" r="0.7" fill="#e8eeff"/><circle cx="321.8" cy="132.3" r="0.7" fill="#e8eeff"/><circle cx="324.7" cy="133.6" r="0.7" fill="#e8eeff"/><circle cx="330.0" cy="136.7" r="0.7" fill="#e8eeff"/><circle cx="312.9" cy="136.9" r="0.7" fill="#e8eeff"/><circle cx="317.8" cy="120.0" r="0.7" fill="#e8eeff"/><circle cx="332.9" cy="126.4" r="0.7" fill="#e8eeff"/><circle cx="382.16" cy="126.75" r="4.2" fill="none" stroke="#d5ddf8" stroke-width="0.8" opacity="0.75"/><circle cx="382.16" cy="126.75" r="6.4" fill="none" stroke="#d5ddf8" stroke-width="0.8" opacity="0.75"/><circle cx="382.16" cy="126.75" r="8.6" fill="none" stroke="#d5ddf8" stroke-width="0.8" stroke-dasharray="0.8 1.0" opacity="0.75"/><circle cx="382.16" cy="126.75" r="10.8" fill="none" stroke="#d5ddf8" stroke-width="0.8" stroke-dasharray="1.0 1.0" opacity="0.75"/><circle cx="382.16" cy="126.75" r="13.2" fill="none" stroke="#d5ddf8" stroke-width="0.8" stroke-dasharray="1.2 0.6" opacity="0.75"/><path d="M382.16 111.95A14.8 14.8 0 0 1 382.16 141.55Z" fill="#dfe6ff" opacity="0.55"/><circle cx="382.16" cy="126.75" r="14.8" fill="none" stroke="#dfe6ff" stroke-width="0.7" opacity="0.9"/><circle cx="395.3" cy="127.8" r="0.7" fill="#e8eeff"/><circle cx="381.7" cy="135.3" r="0.7" fill="#e8eeff"/><circle cx="386.9" cy="139.1" r="0.7" fill="#e8eeff"/><circle cx="369.4" cy="123.4" r="0.7" fill="#e8eeff"/><circle cx="375.3" cy="131.9" r="0.7" fill="#e8eeff"/><circle cx="383.1" cy="135.3" r="0.7" fill="#e8eeff"/><circle cx="391.1" cy="117.0" r="0.7" fill="#e8eeff"/><circle cx="381.8" cy="120.4" r="0.7" fill="#e8eeff"/><circle cx="385.6" cy="132.1" r="0.7" fill="#e8eeff"/><circle cx="380.1" cy="132.8" r="0.7" fill="#e8eeff"/><circle cx="442.99" cy="126.75" r="3.6" fill="none" stroke="#d5ddf8" stroke-width="0.7" stroke-dasharray="0.8 0.6" opacity="0.75"/><circle cx="442.99" cy="126.75" r="5.6" fill="none" stroke="#d5ddf8" stroke-width="0.7" stroke-dasharray="1.0 0.6" opacity="0.75"/><circle cx="442.99" cy="126.75" r="7.6" fill="none" stroke="#d5ddf8" stroke-width="0.7" stroke-dasharray="0.7 0.9" opacity="0.75"/><circle cx="442.99" cy="126.75" r="9.6" fill="none" stroke="#d5ddf8" stroke-width="0.7" stroke-dasharray="1.5 1.2" opacity="0.75"/><circle cx="442.99" cy="126.75" r="11.6" fill="none" stroke="#d5ddf8" stroke-width="0.7" stroke-dasharray="1.4 0.7" opacity="0.75"/><circle cx="442.99" cy="126.75" r="13.2" fill="none" stroke="#d5ddf8" stroke-width="0.7" stroke-dasharray="1.1 0.7" opacity="0.75"/><circle cx="442.99" cy="126.75" r="8.6" fill="none" stroke="#ffffff" stroke-width="8.8" opacity="0.13"/><circle cx="445.6" cy="131.7" r="0.7" fill="#e8eeff"/><circle cx="442.6" cy="132.3" r="0.7" fill="#e8eeff"/><circle cx="447.5" cy="118.3" r="0.7" fill="#e8eeff"/><circle cx="445.3" cy="119.5" r="0.7" fill="#e8eeff"/><circle cx="447.9" cy="135.0" r="0.7" fill="#e8eeff"/><circle cx="436.3" cy="119.9" r="0.7" fill="#e8eeff"/><circle cx="454.3" cy="133.6" r="0.7" fill="#e8eeff"/><circle cx="436.9" cy="136.7" r="0.7" fill="#e8eeff"/><circle cx="435.4" cy="126.5" r="0.7" fill="#e8eeff"/><circle cx="443.2" cy="136.3" r="0.7" fill="#e8eeff"/><circle cx="454.2" cy="133.8" r="0.7" fill="#e8eeff"/><circle cx="446.0" cy="122.0" r="0.7" fill="#e8eeff"/><circle cx="454.1" cy="119.6" r="0.7" fill="#e8eeff"/><circle cx="440.3" cy="117.5" r="0.7" fill="#e8eeff"/><circle cx="450.6" cy="116.0" r="0.7" fill="#e8eeff"/><circle cx="446.9" cy="137.7" r="0.7" fill="#e8eeff"/><circle cx="564.65" cy="126.75" r="3.6" fill="none" stroke="#d5ddf8" stroke-width="0.7" stroke-dasharray="1.4 1.2" opacity="0.75"/><circle cx="564.65" cy="126.75" r="5.6" fill="none" stroke="#d5ddf8" stroke-width="0.7" stroke-dasharray="1.1 0.7" opacity="0.75"/><circle cx="564.65" cy="126.75" r="7.6" fill="none" stroke="#d5ddf8" stroke-width="0.7" stroke-dasharray="0.6 1.1" opacity="0.75"/><circle cx="564.65" cy="126.75" r="9.6" fill="none" stroke="#d5ddf8" stroke-width="0.7" stroke-dasharray="1.1 1.2" opacity="0.75"/><circle cx="564.65" cy="126.75" r="11.6" fill="none" stroke="#d5ddf8" stroke-width="0.7" stroke-dasharray="1.0 1.2" opacity="0.75"/><circle cx="564.65" cy="126.75" r="13.2" fill="none" stroke="#d5ddf8" stroke-width="0.7" stroke-dasharray="0.9 1.2" opacity="0.75"/><circle cx="564.65" cy="126.75" r="8.6" fill="none" stroke="#ffffff" stroke-width="8.8" opacity="0.13"/><circle cx="563.2" cy="115.2" r="0.7" fill="#e8eeff"/><circle cx="575.8" cy="119.7" r="0.7" fill="#e8eeff"/><circle cx="561.5" cy="119.8" r="0.7" fill="#e8eeff"/><circle cx="555.8" cy="123.0" r="0.7" fill="#e8eeff"/><circle cx="557.8" cy="115.5" r="0.7" fill="#e8eeff"/><circle cx="560.1" cy="116.1" r="0.7" fill="#e8eeff"/><circle cx="561.8" cy="131.6" r="0.7" fill="#e8eeff"/><circle cx="557.1" cy="135.6" r="0.7" fill="#e8eeff"/><circle cx="568.5" cy="115.8" r="0.7" fill="#e8eeff"/><circle cx="562.3" cy="119.5" r="0.7" fill="#e8eeff"/><circle cx="561.7" cy="117.6" r="0.7" fill="#e8eeff"/><circle cx="569.2" cy="130.0" r="0.7" fill="#e8eeff"/><circle cx="558.2" cy="122.7" r="0.7" fill="#e8eeff"/><circle cx="569.1" cy="118.3" r="0.7" fill="#e8eeff"/><circle cx="557.1" cy="127.4" r="0.7" fill="#e8eeff"/><circle cx="551.5" cy="125.6" r="0.7" fill="#e8eeff"/><circle cx="625.48" cy="126.75" r="4.2" fill="none" stroke="#d5ddf8" stroke-width="0.8" opacity="0.75"/><circle cx="625.48" cy="126.75" r="6.4" fill="none" stroke="#d5ddf8" stroke-width="0.8" opacity="0.75"/><circle cx="625.48" cy="126.75" r="8.6" fill="none" stroke="#d5ddf8" stroke-width="0.8" stroke-dasharray="0.9 0.6" opacity="0.75"/><circle cx="625.48" cy="126.75" r="10.8" fill="none" stroke="#d5ddf8" stroke-width="0.8" stroke-dasharray="1.3 0.6" opacity="0.75"/><circle cx="625.48" cy="126.75" r="13.2" fill="none" stroke="#d5ddf8" stroke-width="0.8" stroke-dasharray="1.1 0.8" opacity="0.75"/><circle cx="633.5" cy="129.8" r="0.7" fill="#e8eeff"/><circle cx="638.3" cy="129.8" r="0.7" fill="#e8eeff"/><circle cx="618.0" cy="131.0" r="0.7" fill="#e8eeff"/><circle cx="636.6" cy="133.9" r="0.7" fill="#e8eeff"/><circle cx="631.4" cy="129.1" r="0.7" fill="#e8eeff"/><circle cx="631.5" cy="124.7" r="0.7" fill="#e8eeff"/><circle cx="613.8" cy="120.6" r="0.7" fill="#e8eeff"/><circle cx="633.7" cy="129.4" r="0.7" fill="#e8eeff"/><circle cx="633.7" cy="129.2" r="0.7" fill="#e8eeff"/><circle cx="623.4" cy="135.1" r="0.7" fill="#e8eeff"/><circle cx="686.31" cy="126.75" r="4.2" fill="none" stroke="#d5ddf8" stroke-width="0.8" opacity="0.75"/><circle cx="686.31" cy="126.75" r="6.4" fill="none" stroke="#d5ddf8" stroke-width="0.8" opacity="0.75"/><circle cx="686.31" cy="126.75" r="8.6" fill="none" stroke="#d5ddf8" stroke-width="0.8" stroke-dasharray="0.8 1.4" opacity="0.75"/><circle cx="686.31" cy="126.75" r="10.8" fill="none" stroke="#d5ddf8" stroke-width="0.8" stroke-dasharray="0.7 1.1" opacity="0.75"/><circle cx="686.31" cy="126.75" r="13.2" fill="none" stroke="#d5ddf8" stroke-width="0.8" stroke-dasharray="0.7 0.7" opacity="0.75"/><circle cx="686.31" cy="126.75" r="6.2" fill="none" stroke="#e8eeff" stroke-width="2.0" opacity="1"/><circle cx="694.9" cy="126.7" r="0.7" fill="#e8eeff"/><circle cx="681.1" cy="130.5" r="0.7" fill="#e8eeff"/><circle cx="673.5" cy="130.1" r="0.7" fill="#e8eeff"/><circle cx="679.7" cy="132.2" r="0.7" fill="#e8eeff"/><circle cx="696.8" cy="118.8" r="0.7" fill="#e8eeff"/><circle cx="693.6" cy="131.3" r="0.7" fill="#e8eeff"/><circle cx="686.9" cy="116.0" r="0.7" fill="#e8eeff"/><circle cx="673.2" cy="125.1" r="0.7" fill="#e8eeff"/><circle cx="697.1" cy="119.1" r="0.7" fill="#e8eeff"/><circle cx="684.7" cy="116.1" r="0.7" fill="#e8eeff"/><circle cx="747.14" cy="126.75" r="3.6" fill="none" stroke="#d5ddf8" stroke-width="0.7" stroke-dasharray="1.1 0.8" opacity="0.75"/><circle cx="747.14" cy="126.75" r="5.6" fill="none" stroke="#d5ddf8" stroke-width="0.7" stroke-dasharray="0.7 1.3" opacity="0.75"/><circle cx="747.14" cy="126.75" r="7.6" fill="none" stroke="#d5ddf8" stroke-width="0.7" stroke-dasharray="0.6 1.0" opacity="0.75"/><circle cx="747.14" cy="126.75" r="9.6" fill="none" stroke="#d5ddf8" stroke-width="0.7" stroke-dasharray="1.5 0.6" opacity="0.75"/><circle cx="747.14" cy="126.75" r="11.6" fill="none" stroke="#d5ddf8" stroke-width="0.7" stroke-dasharray="1.2 1.1" opacity="0.75"/><circle cx="747.14" cy="126.75" r="13.2" fill="none" stroke="#d5ddf8" stroke-width="0.7" stroke-dasharray="0.6 0.8" opacity="0.75"/><circle cx="747.14" cy="126.75" r="8.6" fill="none" stroke="#ffffff" stroke-width="8.8" opacity="0.13"/><circle cx="743.8" cy="115.6" r="0.7" fill="#e8eeff"/><circle cx="758.2" cy="123.2" r="0.7" fill="#e8eeff"/><circle cx="751.3" cy="133.1" r="0.7" fill="#e8eeff"/><circle cx="754.3" cy="129.2" r="0.7" fill="#e8eeff"/><circle cx="733.9" cy="126.3" r="0.7" fill="#e8eeff"/><circle cx="757.8" cy="131.2" r="0.7" fill="#e8eeff"/><circle cx="748.5" cy="121.3" r="0.7" fill="#e8eeff"/><circle cx="753.8" cy="123.0" r="0.7" fill="#e8eeff"/><circle cx="741.8" cy="116.5" r="0.7" fill="#e8eeff"/><circle cx="754.5" cy="120.6" r="0.7" fill="#e8eeff"/><circle cx="757.0" cy="120.6" r="0.7" fill="#e8eeff"/><circle cx="746.1" cy="132.2" r="0.7" fill="#e8eeff"/><circle cx="748.9" cy="132.1" r="0.7" fill="#e8eeff"/><circle cx="751.2" cy="122.9" r="0.7" fill="#e8eeff"/><circle cx="756.3" cy="119.7" r="0.7" fill="#e8eeff"/><circle cx="752.0" cy="132.6" r="0.7" fill="#e8eeff"/><circle cx="807.97" cy="126.75" r="4.2" fill="none" stroke="#d5ddf8" stroke-width="0.8" opacity="0.75"/><circle cx="807.97" cy="126.75" r="6.4" fill="none" stroke="#d5ddf8" stroke-width="0.8" opacity="0.75"/><circle cx="807.97" cy="126.75" r="8.6" fill="none" stroke="#d5ddf8" stroke-width="0.8" stroke-dasharray="1.2 0.9" opacity="0.75"/><circle cx="807.97" cy="126.75" r="10.8" fill="none" stroke="#d5ddf8" stroke-width="0.8" stroke-dasharray="1.2 0.7" opacity="0.75"/><circle cx="807.97" cy="126.75" r="13.2" fill="none" stroke="#d5ddf8" stroke-width="0.8" stroke-dasharray="1.4 1.2" opacity="0.75"/><circle cx="807.97" cy="126.75" r="6.2" fill="none" stroke="#e8eeff" stroke-width="2.0" opacity="1"/><circle cx="803.1" cy="119.7" r="0.7" fill="#e8eeff"/><circle cx="820.9" cy="129.6" r="0.7" fill="#e8eeff"/><circle cx="803.9" cy="134.3" r="0.7" fill="#e8eeff"/><circle cx="818.3" cy="123.5" r="0.7" fill="#e8eeff"/><circle cx="816.2" cy="129.1" r="0.7" fill="#e8eeff"/><circle cx="797.4" cy="118.8" r="0.7" fill="#e8eeff"/><circle cx="798.5" cy="131.9" r="0.7" fill="#e8eeff"/><circle cx="797.6" cy="129.7" r="0.7" fill="#e8eeff"/><circle cx="803.4" cy="119.4" r="0.7" fill="#e8eeff"/><circle cx="799.7" cy="129.1" r="0.7" fill="#e8eeff"/><path d="M321.33 161.35A18.6 18.6 0 0 1 321.33 198.55Z" fill="#d4f2fb" opacity="0.6"/><circle cx="321.33" cy="179.95" r="18.6" fill="none" stroke="#d4f2fb" stroke-width="0.7" opacity="0.9"/><circle cx="321.33" cy="179.95" r="14.6" fill="none" stroke="#eafaff" stroke-width="1.3" stroke-dasharray="1.1 1.5" opacity="1"/><path d="M378.16 168.55l3-.9M381.56 171.35l1.2.5" stroke="#c8ecf6" stroke-width="0.9"/><circle cx="503.82" cy="179.95" r="14.4" fill="none" stroke="#e2f6fb" stroke-width="1.3" stroke-dasharray="1.1 1.5" opacity="1"/><g transform="rotate(200 503.82 179.95)"><circle cx="503.82" cy="179.95" r="11.4" fill="none" stroke="#e2f6fb" stroke-width="1.1" stroke-dasharray="3.4 2.2 1.2 4.4 2.4 6" opacity="0.95"/></g><circle cx="564.65" cy="179.95" r="14.4" fill="none" stroke="#e2f6fb" stroke-width="1.3" stroke-dasharray="1.1 1.5" opacity="1"/><g transform="rotate(240 564.65 179.95)"><circle cx="564.65" cy="179.95" r="11.4" fill="none" stroke="#e2f6fb" stroke-width="1.1" stroke-dasharray="3.4 2.2 1.2 4.4 2.4 6" opacity="0.95"/></g><rect x="678.7" y="172.1" width="2.3" height="3.3" fill="#c8ecf6" transform="rotate(224 679.7 173.5)"/><rect x="684.7" y="168.8" width="1.0" height="2.4" fill="#c8ecf6" transform="rotate(266 685.7 170.2)"/><rect x="693.7" y="175.4" width="2.4" height="1.7" fill="#c8ecf6" transform="rotate(339 694.7 176.8)"/><rect x="677.7" y="180.1" width="1.9" height="2.6" fill="#c8ecf6" transform="rotate(169 678.7 181.5)"/><rect x="692.9" y="179.2" width="1.4" height="3.2" fill="#c8ecf6" transform="rotate(5 693.9 180.6)"/><rect x="686.0" y="171.1" width="2.3" height="1.8" fill="#c8ecf6" transform="rotate(276 687.0 172.5)"/><rect x="679.8" y="173.6" width="1.0" height="3.2" fill="#c8ecf6" transform="rotate(222 680.8 175.0)"/><rect x="687.2" y="185.9" width="2.6" height="3.2" fill="#c8ecf6" transform="rotate(75 688.2 187.3)"/><rect x="682.9" y="188.1" width="1.9" height="2.8" fill="#c8ecf6" transform="rotate(104 683.9 189.5)"/><circle cx="321.33" cy="236.95" r="12.2" fill="none" stroke="#c4ece8" stroke-width="0.9" opacity="1"/><path d="M331.3 241.9L333.1 242.8M326.3 226.7L327.3 224.8M325.5 226.0L326.1 224.3M326.0 247.6L326.6 248.9M326.6 247.3L327.6 249.3M332.0 235.1L334.8 234.7M316.3 246.5L315.1 248.8M324.6 226.0L325.3 223.7M330.3 229.9L331.7 228.9" stroke="#c4ece8" stroke-width="1.0" fill="none"/><circle cx="442.99" cy="236.95" r="12.2" fill="none" stroke="#c4ece8" stroke-width="0.9" opacity="1"/><path d="M443.0 226.3L443.0 223.1M444.0 226.6L444.4 222.2M445.2 225.9L445.7 223.6M446.3 226.2L446.9 224.0M447.4 226.4L448.7 223.1M448.3 227.0L449.8 224.2M449.1 227.8L450.7 225.4M449.8 228.6L452.6 225.2M450.9 229.0L452.3 227.6M451.0 230.4L453.5 228.4M451.7 231.1L455.6 228.5M452.3 232.0L456.4 229.8M452.7 232.9L457.3 231.0M453.0 233.9L456.2 232.9M453.3 234.9L457.1 234.1M453.9 235.9L457.5 235.5M454.0 236.9L457.1 236.9M454.4 238.1L456.9 238.3M453.3 239.0L457.9 239.9M453.2 240.0L457.9 241.5M452.7 241.0L456.4 242.5M452.4 242.0L454.9 243.3M452.4 243.3L454.9 244.9M451.4 243.8L453.6 245.6M450.7 244.7L452.8 246.7M450.0 245.5L452.3 248.3M449.1 246.0L450.5 248.2M448.3 246.9L449.5 249.1M447.2 247.2L448.2 249.6M446.1 247.2L446.9 249.7M445.1 247.8L446.0 252.1M444.0 247.2L444.5 251.8M443.0 248.4L443.0 250.3M442.0 247.3L441.5 252.0M440.8 248.1L440.1 251.4M440.0 246.9L438.9 250.5M439.0 246.6L437.1 251.1M438.1 246.1L436.5 249.0M437.1 245.8L435.2 248.7M436.5 244.9L434.4 247.4M435.5 244.4L432.6 247.3M434.7 243.8L432.4 245.6M434.0 242.9L430.9 245.1M433.7 241.9L430.6 243.6M432.7 241.2L430.0 242.3M432.8 240.0L430.0 240.9M431.9 239.2L429.8 239.6M432.3 238.0L429.7 238.3M432.2 236.9L428.5 236.9M432.1 235.9L429.8 235.6M431.7 234.7L429.2 234.2M433.2 234.0L430.4 233.1M432.7 232.7L430.5 231.8M433.5 231.9L430.8 230.4M433.9 230.9L431.9 229.5M434.9 230.3L432.1 228.0M435.1 229.1L433.6 227.6M436.5 229.0L433.9 225.8M436.9 227.9L435.0 224.9M437.7 227.1L436.0 223.9M438.8 226.9L437.9 224.7M439.9 226.8L438.5 222.2M440.9 226.5L440.3 223.4M441.9 225.8L441.5 221.8" stroke="#c4ece8" stroke-width="0.7" fill="none"/><circle cx="503.82" cy="236.95" r="12.2" fill="none" stroke="#c4ece8" stroke-width="0.9" opacity="1"/><path d="M512.5 244.3L514.1 245.6M507.5 247.4L508.2 249.6M515.5 237.6L517.4 237.7M514.8 240.7L516.4 241.2M492.8 237.4L490.5 237.5M500.9 226.5L500.2 224.2M492.9 232.8L491.0 232.1M506.9 248.0L507.5 250.1M515.1 235.1L517.0 234.8" stroke="#c4ece8" stroke-width="1.0" fill="none"/><circle cx="625.48" cy="236.95" r="12.2" fill="none" stroke="#c4ece8" stroke-width="0.9" opacity="1"/><path d="M631.5 228.1L635.1 222.8M631.3 230.3L635.0 226.1M633.6 230.0L636.8 227.2M633.6 243.2L638.3 246.9M632.9 244.4L637.4 248.9M631.7 245.2L635.8 250.6M620.0 244.0L615.6 249.7M619.1 243.3L613.9 248.5M616.8 243.5L612.4 246.8M618.2 230.5L612.8 225.8M618.5 229.0L615.4 225.5M620.1 228.8L616.2 223.0" stroke="#c4ece8" stroke-width="1.0" fill="none"/><path d="M625.5 225.6L625.5 223.4M627.3 225.5L627.6 223.6M629.0 226.0L629.6 224.3M630.6 226.9L631.3 225.6M632.2 227.7L633.0 226.6M633.6 228.8L635.1 227.4M634.7 230.3L635.7 229.5M636.0 231.6L637.3 230.9M636.5 233.4L637.4 233.1M636.6 235.2L637.9 235.0M637.1 236.9L638.5 236.9M636.8 238.7L638.3 239.0M636.7 240.6L638.3 241.1M635.8 242.2L637.0 242.8M634.8 243.7L635.9 244.5M633.7 245.2L634.7 246.2M632.3 246.3L633.3 247.7M630.6 246.9L631.2 248.2M629.1 248.0L629.5 249.2M627.2 248.1L627.5 249.7M625.5 248.5L625.5 250.5M623.6 248.7L623.5 249.7M621.8 248.2L621.3 249.8M620.2 247.4L619.5 248.6M618.6 246.4L617.9 247.4M617.0 245.4L616.5 245.9M616.3 243.6L614.9 244.6M614.9 242.3L613.7 242.9M614.1 240.6L612.9 241.0M614.3 238.7L612.7 239.0M613.8 236.9L612.0 236.9M614.0 235.1L612.2 234.8M614.5 233.4L613.0 232.9M615.3 231.8L613.4 230.8M616.2 230.2L614.9 229.3M617.2 228.7L616.1 227.6M618.8 227.8L617.6 226.1M620.4 226.9L619.5 225.2M621.9 225.9L621.6 225.0M623.6 225.4L623.4 223.9" stroke="#c4ece8" stroke-width="0.6" fill="none"/><circle cx="686.31" cy="236.95" r="12.2" fill="none" stroke="#c4ece8" stroke-width="0.9" opacity="1"/><path d="M686.3 224.3L687.0 223.5L687.9 221.7L688.4 224.0L688.9 224.6L689.7 224.3L690.4 224.4L690.8 225.1L691.8 224.7L692.6 224.7L694.3 223.2L695.0 223.6L694.2 226.1L694.6 226.7L694.8 227.5L695.6 227.7L698.3 226.2L698.9 226.7L696.7 229.4L698.8 228.8L698.1 230.2L698.3 230.9L699.7 231.0L699.3 232.0L698.9 232.9L700.8 233.1L700.0 234.0L700.4 234.7L700.8 235.4L702.4 236.1L700.8 236.9L700.8 237.7L699.6 238.3L699.1 239.0L698.7 239.6L701.6 241.1L698.8 241.0L698.3 241.6L697.9 242.1L698.0 242.9L697.5 243.4L697.2 244.0L696.9 244.7L696.2 244.9L695.8 245.5L695.6 246.2L694.7 246.3L694.5 247.1L693.7 247.1L693.4 247.8L692.8 248.2L692.3 248.7L691.6 248.9L690.9 248.9L690.2 249.0L689.6 249.3L689.2 250.7L688.5 250.8L687.6 249.5L687.1 252.8L686.3 251.0L685.5 251.8L685.0 249.9L684.3 249.8L683.7 249.2L682.8 249.9L682.3 249.4L681.4 249.7L680.8 249.3L679.3 250.8L679.7 248.3L679.4 247.5L678.8 247.3L678.4 246.8L677.6 246.6L677.0 246.3L676.9 245.4L676.2 245.2L676.0 244.4L675.8 243.8L675.0 243.5L675.0 242.7L674.8 242.1L674.4 241.5L674.3 240.9L674.0 240.3L673.8 239.6L673.7 239.0L673.5 238.3L673.6 237.6L673.7 236.9L673.8 236.3L673.8 235.6L673.6 234.9L673.8 234.3L673.7 233.6L674.1 233.0L673.0 231.8L672.7 230.9L675.0 231.2L675.5 230.7L675.5 230.0L675.4 229.0L675.5 228.2L675.6 227.3L676.9 227.5L676.3 225.9L678.4 227.2L677.7 225.1L679.2 226.0L679.0 224.2L680.6 225.7L680.2 223.3L681.2 223.5L681.7 222.7L682.7 223.5L683.6 224.3L684.0 222.2L685.0 224.2L685.7 224.4L686.3 224.3Z M686.3 225.2L685.7 225.1L685.1 225.4L684.8 227.6L683.9 225.7L683.6 226.9L683.4 228.0L682.7 227.6L682.5 228.3L680.9 226.4L681.5 228.5L680.1 227.4L680.5 229.0L678.8 227.7L680.0 229.9L678.5 229.2L678.8 230.2L678.2 230.4L677.5 230.5L676.6 230.7L676.0 231.0L675.8 231.6L677.7 233.1L676.9 233.3L675.3 233.4L675.4 234.0L674.9 234.5L674.9 235.1L674.5 235.7L674.5 236.3L674.5 236.9L674.6 237.6L674.9 238.2L674.8 238.8L675.0 239.4L675.1 240.0L675.1 240.6L675.5 241.1L675.5 241.7L675.9 242.2L676.5 242.6L676.3 243.4L676.9 243.8L677.5 244.1L677.6 244.8L678.4 244.9L678.7 245.4L678.9 246.1L679.5 246.4L679.9 246.8L680.7 246.7L682.3 244.9L681.9 246.9L682.5 247.0L682.8 247.7L683.5 247.6L683.8 248.6L684.5 248.2L685.1 248.3L685.8 246.5L686.3 247.3L686.8 245.5L687.5 248.7L687.9 247.2L688.5 247.0L689.3 248.2L689.9 248.1L690.4 247.7L690.9 247.3L691.4 247.0L692.0 246.8L692.5 246.5L693.3 246.5L693.5 245.8L694.2 245.7L694.3 244.9L695.0 244.7L695.4 244.3L695.4 243.6L695.9 243.2L696.3 242.7L696.3 242.1L697.1 241.7L697.1 241.1L697.0 240.4L694.6 239.2L697.8 239.4L697.6 238.7L697.3 238.1L696.1 237.5L696.3 236.9L694.6 236.5L696.0 235.9L696.4 235.4L696.5 234.8L695.4 234.5L696.9 233.5L696.1 233.2L695.3 233.0L696.1 232.0L695.7 231.5L694.3 231.8L695.7 230.2L692.6 231.8L692.5 231.4L694.3 229.0L694.1 228.3L693.3 228.3L692.7 228.1L690.9 229.8L690.6 229.6L691.1 227.5L690.8 226.9L690.5 226.0L689.8 226.3L689.2 226.0L688.8 225.5L688.1 225.8L687.3 227.9L686.9 226.0L686.3 225.2Z" fill="#c4ece8" fill-rule="evenodd" opacity="1"/><path d="M693.0 243.8L698.2 249.1M696.0 234.7L702.7 233.2M689.1 226.6L690.8 220.5M695.7 240.4L700.8 242.3M693.0 230.2L697.8 225.4M685.5 246.9L685.0 253.5M677.0 232.2L673.2 230.3M688.1 246.0L689.1 251.2M678.7 243.5L675.4 246.5M691.9 246.3L693.9 249.6M688.8 246.7L689.8 250.9M685.4 246.4L684.9 251.5" stroke="#c4ece8" stroke-width="0.8" fill="none"/><circle cx="747.14" cy="236.95" r="12.2" fill="none" stroke="#c4ece8" stroke-width="0.9" opacity="1"/><path d="M747.1 224.1L747.9 222.1L748.6 223.3L749.5 221.8L750.2 222.6L750.5 224.3L751.3 224.1L751.8 224.9L752.4 225.1L753.6 224.3L755.0 223.3L755.8 223.6L755.7 225.1L756.7 225.1L757.5 225.5L756.7 227.4L758.3 226.9L758.7 227.6L757.6 229.3L758.6 229.5L760.0 229.5L760.5 230.1L760.8 230.9L760.2 231.9L760.0 232.8L759.5 233.6L760.3 234.2L760.5 234.8L760.2 235.6L760.2 236.3L762.4 236.9L762.4 237.7L760.1 238.3L763.0 239.5L762.4 240.2L762.7 241.1L759.6 241.0L758.8 241.4L758.8 242.1L758.6 242.8L758.0 243.2L757.9 243.9L757.8 244.7L756.9 244.9L756.7 245.6L756.0 245.8L755.8 246.5L755.4 247.2L754.6 247.2L753.9 247.4L753.4 247.8L753.0 248.4L752.2 248.4L751.6 248.7L751.1 249.2L751.3 252.4L750.0 250.3L749.3 250.4L748.7 251.4L747.8 249.6L747.1 251.3L746.5 249.8L745.6 251.3L744.6 252.9L744.5 249.2L743.5 250.7L742.7 250.7L742.6 248.9L741.8 248.9L739.7 251.5L740.5 248.4L740.3 247.5L739.5 247.5L738.9 247.2L738.7 246.4L738.0 246.1L737.8 245.3L737.2 245.0L736.6 244.6L736.3 244.0L735.8 243.5L736.0 242.7L735.5 242.1L734.9 241.6L734.9 240.9L734.8 240.3L734.6 239.6L734.1 239.0L734.3 238.3L734.6 237.6L734.1 236.9L734.4 236.3L734.4 235.6L734.6 235.0L734.6 234.3L734.8 233.7L735.2 233.1L734.0 231.9L735.5 231.8L734.3 230.4L736.3 230.7L735.0 229.1L735.4 228.4L736.5 228.3L736.5 227.4L737.9 227.7L737.5 226.3L738.6 226.4L739.5 226.4L739.0 224.4L740.4 225.3L741.0 225.0L741.2 223.6L742.3 224.4L742.8 223.5L743.8 224.5L744.1 222.7L745.1 224.0L745.8 224.5L746.5 223.8L747.1 224.1Z M747.1 225.4L746.6 225.7L745.9 225.1L745.4 225.8L745.1 227.4L744.2 225.9L744.0 227.2L743.2 226.7L743.2 228.0L742.2 227.2L741.7 227.5L742.0 229.0L740.5 227.8L740.3 228.5L740.4 229.5L739.2 229.0L739.6 230.2L738.9 230.2L739.1 231.1L738.8 231.5L736.9 231.0L738.3 232.4L736.5 232.2L737.5 233.2L735.9 233.3L735.9 233.9L735.8 234.5L735.5 235.1L735.6 235.7L735.5 236.3L735.8 236.9L735.3 237.6L735.7 238.2L736.1 238.7L735.8 239.4L735.9 239.9L736.2 240.5L736.6 241.0L736.5 241.7L736.6 242.3L737.3 242.6L737.5 243.2L737.9 243.7L738.1 244.3L738.3 244.9L739.0 245.1L739.3 245.7L740.1 245.7L740.4 246.2L740.7 246.9L741.5 246.6L743.5 244.1L742.6 247.3L743.0 247.8L744.1 246.4L744.5 246.8L744.7 248.5L745.9 245.1L746.1 246.9L746.5 248.5L747.1 247.0L747.8 248.7L748.2 246.7L748.8 247.6L749.4 247.5L749.3 245.1L750.7 247.9L751.4 248.0L752.0 247.8L752.4 247.2L753.1 247.2L753.6 246.9L754.1 246.5L754.2 245.7L754.8 245.5L755.5 245.3L755.7 244.6L756.3 244.4L756.3 243.6L756.9 243.3L757.4 242.9L757.4 242.2L757.8 241.7L758.2 241.2L757.9 240.4L755.2 239.1L755.7 238.8L755.4 238.3L758.5 238.1L756.3 237.4L756.2 236.9L758.4 236.4L758.4 235.8L757.9 235.2L757.8 234.7L758.4 233.9L757.5 233.6L756.9 233.2L755.7 233.1L755.5 232.7L755.4 232.2L756.1 231.1L756.4 230.2L754.5 231.0L754.1 230.6L754.9 229.2L753.1 230.3L752.9 229.9L752.9 229.0L751.7 229.9L751.5 229.4L751.8 227.9L751.8 226.5L751.2 226.3L750.5 226.6L750.1 226.0L749.2 227.5L748.6 228.0L748.3 226.3L747.6 227.4L747.1 225.4Z" fill="#c4ece8" fill-rule="evenodd" opacity="1"/><path d="M753.7 229.4L756.6 225.9M756.4 232.5L760.3 230.6M752.3 246.0L754.5 249.8M738.1 231.0L734.9 229.0M749.1 226.1L749.7 222.3M746.3 227.8L745.7 221.9M754.5 230.0L759.4 225.3M737.2 240.8L732.1 242.9M758.0 235.8L763.3 235.2M748.0 227.1L748.5 220.5M756.5 237.5L762.9 238.0M757.3 238.8L761.5 239.6" stroke="#c4ece8" stroke-width="0.8" fill="none"/><circle cx="260.5" cy="291.45" r="11.6" fill="none" stroke="#bdeee0" stroke-width="0.9" opacity="1"/><path d="M260.5 279.7L261.1 279.7L261.7 279.7L262.3 279.8L263.0 279.9L263.6 280.1L264.1 280.2L264.7 280.4L265.3 280.7L265.9 280.9L266.4 281.2L266.9 281.6L267.4 281.9L267.9 282.3L268.4 282.7L268.8 283.1L269.3 283.6L269.7 284.0L270.0 284.5L270.4 285.0L270.7 285.6L271.0 286.1L271.3 286.7L271.5 287.2L271.7 287.8L271.9 288.4L272.0 289.0L272.2 289.6L272.2 290.2L272.3 290.8L272.3 291.5L272.3 292.1L272.2 292.7L272.2 293.3L273.1 294.1L273.0 294.8L272.8 295.4L272.5 296.1L272.3 296.7L272.0 297.3L271.7 297.9L271.3 298.5L270.9 299.0L270.5 299.6L270.1 300.1L269.6 300.6L269.1 301.0L268.6 301.5L268.1 301.9L267.5 302.3L266.9 302.6L266.4 302.9L265.7 303.2L265.1 303.5L264.5 303.7L263.8 303.9L263.0 303.0L262.3 303.1L261.7 303.2L261.1 303.2L260.5 303.3L259.9 303.2L259.3 303.2L258.7 303.1L258.0 303.0L257.4 302.8L256.9 302.7L256.3 302.5L255.7 302.2L255.1 302.0L254.6 301.7L254.1 301.3L253.6 301.0L253.1 300.6L252.6 300.2L251.4 300.6L250.9 300.1L250.5 299.6L250.1 299.0L249.7 298.5L249.3 297.9L249.0 297.3L248.7 296.7L248.5 296.1L248.2 295.4L248.0 294.8L247.9 294.1L247.8 293.5L247.7 292.8L247.6 292.1L247.6 291.5L247.6 290.8L247.7 290.1L247.8 289.4L247.9 288.8L248.0 288.1L248.2 287.5L248.5 286.8L248.7 286.2L249.0 285.6L249.3 285.0L249.7 284.4L250.1 283.9L250.5 283.3L250.9 282.8L251.4 282.3L251.9 281.9L252.4 281.4L252.9 281.0L253.5 280.6L254.1 280.3L254.6 280.0L255.3 279.7L255.9 279.4L256.5 279.2L257.2 279.0L257.8 278.8L258.5 278.7L259.3 279.7L259.9 279.7L260.5 279.7Z M260.5 280.1L259.9 280.1L259.3 280.1L258.9 281.3L258.4 281.4L257.8 281.5L257.3 281.7L256.8 281.8L256.3 282.0L255.8 282.3L255.3 282.5L254.9 282.8L254.4 283.1L254.0 283.4L253.6 283.8L253.2 284.2L252.8 284.6L252.5 285.0L252.2 285.4L251.9 285.8L251.6 286.3L251.3 286.8L251.1 287.3L250.9 287.8L250.7 288.3L250.6 288.8L250.4 289.3L250.3 289.8L250.3 290.4L250.2 290.9L250.2 291.5L250.2 292.0L250.3 292.5L250.3 293.1L250.4 293.6L250.6 294.1L250.7 294.6L250.9 295.1L251.1 295.6L251.3 296.1L251.6 296.6L251.9 297.1L252.2 297.5L252.5 297.9L252.8 298.3L253.2 298.7L252.9 299.9L253.3 300.3L253.8 300.7L254.3 301.0L254.8 301.3L255.3 301.6L255.9 301.9L256.4 302.1L257.0 302.3L257.5 302.5L258.1 302.6L258.7 302.7L259.3 302.8L259.9 302.8L260.5 302.9L261.1 302.8L261.7 302.8L262.3 302.7L262.9 302.6L263.2 301.4L263.7 301.2L264.2 301.1L264.7 300.9L265.2 300.6L265.6 300.4L266.1 300.1L266.6 299.8L267.0 299.5L267.4 299.1L267.8 298.7L268.2 298.3L268.5 297.9L268.8 297.5L269.1 297.1L269.4 296.6L269.7 296.1L269.9 295.6L270.1 295.1L270.3 294.6L270.4 294.1L270.6 293.6L271.8 293.2L271.8 292.6L271.9 292.0L271.9 291.5L271.9 290.9L271.8 290.3L271.8 289.7L271.7 289.1L271.5 288.5L271.3 287.9L271.1 287.4L270.9 286.8L270.7 286.3L270.4 285.8L270.1 285.2L269.7 284.7L269.4 284.3L269.0 283.8L268.6 283.4L268.1 283.0L267.7 282.6L267.2 282.2L266.7 281.9L266.2 281.6L265.7 281.3L265.1 281.0L264.6 280.8L264.0 280.6L263.5 280.4L262.9 280.3L262.3 280.2L261.7 280.1L261.1 280.1L260.5 280.1Z" fill="#bdeee0" fill-rule="evenodd" opacity="1"/><path d="M382.2 277.7L382.6 277.6L383.0 277.6L383.5 277.5L383.9 277.6L384.4 277.6L384.8 277.6L385.3 277.4L385.8 277.4L386.2 277.5L386.7 277.5L387.1 277.6L387.6 277.7L388.0 277.9L388.4 278.1L388.9 278.3L389.3 278.5L389.6 278.9L390.0 279.1L390.4 279.3L390.8 279.5L391.2 279.7L391.6 280.0L392.0 280.3L392.4 280.5L392.8 280.8L393.1 281.1L393.6 281.4L393.9 281.8L394.2 282.1L394.6 282.4L394.8 282.8L395.1 283.2L395.4 283.6L395.7 284.0L395.9 284.4L396.2 284.9L396.7 285.2L396.8 285.6L397.0 286.1L396.9 286.7L397.0 287.1L397.1 287.6L397.2 288.1L397.4 288.6L397.4 289.0L397.5 289.5L397.1 290.0L397.1 290.5L397.1 291.0L397.1 291.5L397.1 291.9L397.0 292.4L396.9 292.8L396.9 293.3L396.8 293.8L396.7 294.2L396.7 294.7L396.5 295.1L396.3 295.6L396.2 296.0L396.0 296.4L395.7 296.8L395.5 297.2L395.1 297.6L394.9 297.9L394.6 298.3L394.1 298.5L393.8 298.8L393.5 299.2L393.2 299.5L392.8 299.7L392.5 300.0L392.1 300.2L391.7 300.5L391.4 300.7L391.0 300.9L390.7 301.1L390.3 301.3L389.9 301.4L389.4 301.4L388.0 300.1L387.7 300.2L387.5 300.4L387.2 300.6L386.9 300.7L386.6 300.9L386.3 301.0L386.7 302.9L386.4 303.2L386.1 303.6L385.8 303.9L385.4 304.1L385.0 304.3L384.7 304.6L384.3 304.8L383.9 304.9L383.5 305.2L383.0 305.3L382.6 305.4L382.2 305.6L381.7 305.7L381.3 305.8L380.8 305.9L380.4 305.7L379.9 305.7L379.4 305.7L379.0 305.8L378.5 305.7L378.0 305.7L377.6 305.4L377.2 305.3L376.7 305.2L376.3 305.1L375.7 305.2L375.3 305.0L374.8 304.8L374.3 304.7L373.9 304.5L373.5 304.2L373.2 303.8L372.8 303.6L372.4 303.3L372.0 303.0L371.9 302.4L371.5 302.1L371.2 301.8L371.1 301.2L370.8 300.8L370.5 300.5L369.8 300.4L369.6 300.0L369.3 299.6L369.0 299.2L368.6 298.9L368.4 298.5L368.2 298.0L367.8 297.7L367.6 297.2L367.5 296.7L367.7 296.2L367.5 295.7L367.4 295.2L367.3 294.8L367.2 294.3L367.2 293.8L367.1 293.3L367.3 292.9L367.3 292.4L367.3 291.9L367.3 291.5L367.3 291.0L367.4 290.5L367.5 290.1L367.5 289.6L367.7 289.2L367.8 288.7L367.8 288.3L368.0 287.8L368.2 287.4L368.2 286.9L368.4 286.5L368.6 286.1L368.9 285.7L369.1 285.3L369.4 284.9L369.7 284.6L369.8 284.2L370.2 283.8L370.5 283.5L370.9 283.2L371.2 283.0L371.6 282.7L371.9 282.4L372.2 282.1L372.6 281.9L373.0 281.7L373.5 281.6L373.9 281.5L374.3 281.3L374.8 281.4L376.3 282.8L376.6 282.7L376.9 282.5L377.1 282.3L377.4 282.2L377.7 282.0L378.0 281.9L377.6 279.8L377.9 279.6L378.1 279.1L378.5 278.8L378.9 278.6L379.2 278.3L379.6 278.2L380.0 278.0L380.4 277.8L380.9 277.9L381.3 277.8L381.7 277.7L382.2 277.7Z M382.2 284.8L382.0 284.8L381.7 284.7L381.5 284.6L381.3 284.8L381.1 284.7L380.9 284.6L380.6 284.6L380.4 284.6L380.1 284.5L379.9 284.4L379.5 284.2L379.2 284.1L378.2 282.3L377.9 282.4L377.6 282.5L377.3 282.7L377.1 282.8L376.8 283.0L376.5 283.2L377.5 285.0L377.5 285.4L377.4 285.7L377.3 286.0L377.3 286.3L377.3 286.5L377.2 286.8L377.1 287.0L377.0 287.2L377.0 287.4L377.0 287.7L376.9 287.9L376.9 288.1L376.9 288.3L376.8 288.5L376.8 288.7L376.8 288.9L376.7 289.1L376.7 289.3L376.7 289.5L376.8 289.7L376.5 289.8L376.5 290.0L376.6 290.2L376.5 290.4L376.5 290.6L376.5 290.7L376.5 290.9L376.6 291.1L376.6 291.3L376.6 291.5L376.7 291.6L376.7 291.8L376.8 292.0L376.9 292.1L377.0 292.3L377.0 292.4L377.1 292.6L377.1 292.7L377.2 292.9L377.2 293.0L377.7 293.1L377.7 293.2L377.8 293.3L377.7 293.6L377.7 293.7L377.8 293.8L377.7 294.1L377.8 294.2L377.9 294.3L378.0 294.5L377.7 294.9L377.8 295.1L377.9 295.2L378.3 295.1L378.4 295.2L378.5 295.4L378.9 295.2L379.0 295.3L379.1 295.4L379.2 295.6L379.4 295.5L379.5 295.7L379.6 295.8L379.7 295.9L379.8 296.1L379.9 296.2L379.9 296.6L380.1 296.7L380.2 296.8L380.4 296.9L380.6 296.8L380.8 296.9L380.9 297.1L381.1 297.2L381.2 297.3L381.4 297.4L381.6 297.3L381.8 297.4L382.0 297.6L382.2 297.7L382.4 297.8L382.6 297.9L382.8 298.0L383.0 298.2L383.2 298.3L383.5 298.4L383.7 298.5L384.0 298.5L384.2 298.6L384.5 298.7L384.8 298.9L385.1 298.9L386.1 300.6L386.4 300.5L386.7 300.4L387.0 300.2L387.3 300.1L387.5 299.9L387.8 299.7L386.9 298.0L387.0 297.6L387.1 297.4L387.1 297.1L387.3 296.9L387.4 296.7L387.4 296.4L387.5 296.1L387.6 295.9L387.6 295.7L387.7 295.4L387.7 295.2L387.7 295.0L387.8 294.8L387.6 294.5L387.6 294.2L387.6 294.0L387.6 293.8L387.6 293.6L387.5 293.4L387.5 293.2L387.6 293.0L387.5 292.8L387.5 292.6L387.7 292.5L387.6 292.3L387.6 292.1L387.7 292.0L387.7 291.8L387.6 291.6L387.6 291.5L387.6 291.3L387.6 291.1L387.5 290.9L387.1 290.8L387.1 290.7L387.0 290.5L387.0 290.4L387.0 290.2L386.9 290.1L386.9 289.9L386.5 289.9L386.5 289.8L386.4 289.6L386.6 289.3L386.6 289.2L386.5 289.1L386.5 288.9L386.4 288.7L386.3 288.6L386.3 288.5L386.2 288.3L386.2 288.1L386.1 288.0L386.1 287.8L386.0 287.7L385.9 287.5L385.8 287.3L385.7 287.2L385.6 287.0L385.5 286.9L385.4 286.7L385.3 286.5L385.1 286.4L384.9 286.6L384.7 286.4L384.6 286.3L384.4 286.3L384.2 286.2L384.1 286.1L383.9 286.0L383.8 285.8L383.6 285.7L383.5 285.6L383.3 285.3L383.1 285.2L383.0 285.1L382.8 285.1L382.6 285.0L382.4 284.9L382.2 284.8Z" fill="#bdeee0" fill-rule="evenodd" opacity="1"/><circle cx="442.99" cy="291.45" r="16.2" fill="none" stroke="#bdeee0" stroke-width="0.8" opacity="1"/><circle cx="442.99" cy="291.45" r="11.8" fill="none" stroke="#bdeee0" stroke-width="0.8" opacity="1"/><path d="M442.99 291.45L441.79 275.85h2.4z" fill="#bdeee0"/><path d="M451.39 288.45l6 2.4-6 2.2z M434.59 292.45l-6 2.4 6 2.2z" fill="#bdeee0"/><circle cx="503.82" cy="291.45" r="11.6" fill="none" stroke="#bdeee0" stroke-width="0.9" opacity="1"/><path d="M503.8 279.7L504.4 279.7L505.1 279.7L505.7 279.8L506.3 279.9L506.9 280.1L507.5 280.2L508.0 280.4L508.6 280.7L509.2 280.9L509.7 281.2L510.2 281.6L510.8 281.9L511.2 282.3L511.7 282.7L512.2 283.1L512.6 283.6L513.0 284.0L513.4 284.5L513.7 285.0L514.0 285.6L514.3 286.1L514.6 286.7L514.8 287.2L515.0 287.8L515.2 288.4L515.4 289.0L515.5 289.6L515.6 290.2L515.6 290.8L515.6 291.5L515.6 292.1L515.6 292.7L515.5 293.3L516.4 294.1L516.3 294.8L516.1 295.4L515.9 296.1L515.6 296.7L515.3 297.3L515.0 297.9L514.6 298.5L514.3 299.0L513.8 299.6L513.4 300.1L512.9 300.6L512.5 301.0L511.9 301.5L511.4 301.9L510.8 302.3L510.3 302.6L509.7 302.9L509.1 303.2L508.4 303.5L507.8 303.7L507.2 303.9L506.3 303.0L505.7 303.1L505.1 303.2L504.4 303.2L503.8 303.3L503.2 303.2L502.6 303.2L502.0 303.1L501.4 303.0L500.8 302.8L500.2 302.7L499.6 302.5L499.0 302.2L498.5 302.0L497.9 301.7L497.4 301.3L496.9 301.0L496.4 300.6L495.9 300.2L494.7 300.6L494.2 300.1L493.8 299.6L493.4 299.0L493.0 298.5L492.6 297.9L492.3 297.3L492.0 296.7L491.8 296.1L491.6 295.4L491.4 294.8L491.2 294.1L491.1 293.5L491.0 292.8L490.9 292.1L490.9 291.5L490.9 290.8L491.0 290.1L491.1 289.4L491.2 288.8L491.4 288.1L491.6 287.5L491.8 286.8L492.0 286.2L492.3 285.6L492.6 285.0L493.0 284.4L493.4 283.9L493.8 283.3L494.2 282.8L494.7 282.3L495.2 281.9L495.7 281.4L496.2 281.0L496.8 280.6L497.4 280.3L498.0 280.0L498.6 279.7L499.2 279.4L499.8 279.2L500.5 279.0L501.1 278.8L501.8 278.7L502.6 279.7L503.2 279.7L503.8 279.7Z M503.8 280.1L503.2 280.1L502.6 280.1L502.2 281.3L501.7 281.4L501.2 281.5L500.6 281.7L500.1 281.8L499.6 282.0L499.1 282.3L498.7 282.5L498.2 282.8L497.8 283.1L497.3 283.4L496.9 283.8L496.5 284.2L496.2 284.6L495.8 285.0L495.5 285.4L495.2 285.8L494.9 286.3L494.6 286.8L494.4 287.3L494.2 287.8L494.0 288.3L493.9 288.8L493.7 289.3L493.6 289.8L493.6 290.4L493.5 290.9L493.5 291.5L493.5 292.0L493.6 292.5L493.6 293.1L493.7 293.6L493.9 294.1L494.0 294.6L494.2 295.1L494.4 295.6L494.6 296.1L494.9 296.6L495.2 297.1L495.5 297.5L495.8 297.9L496.2 298.3L496.5 298.7L496.2 299.9L496.6 300.3L497.1 300.7L497.6 301.0L498.1 301.3L498.6 301.6L499.2 301.9L499.7 302.1L500.3 302.3L500.9 302.5L501.4 302.6L502.0 302.7L502.6 302.8L503.2 302.8L503.8 302.9L504.4 302.8L505.0 302.8L505.6 302.7L506.2 302.6L506.5 301.4L507.0 301.2L507.5 301.1L508.0 300.9L508.5 300.6L509.0 300.4L509.4 300.1L509.9 299.8L510.3 299.5L510.7 299.1L511.1 298.7L511.5 298.3L511.8 297.9L512.2 297.5L512.5 297.1L512.7 296.6L513.0 296.1L513.2 295.6L513.4 295.1L513.6 294.6L513.8 294.1L513.9 293.6L515.1 293.2L515.2 292.6L515.2 292.0L515.2 291.5L515.2 290.9L515.2 290.3L515.1 289.7L515.0 289.1L514.8 288.5L514.7 287.9L514.5 287.4L514.2 286.8L514.0 286.3L513.7 285.8L513.4 285.2L513.0 284.7L512.7 284.3L512.3 283.8L511.9 283.4L511.4 283.0L511.0 282.6L510.5 282.2L510.0 281.9L509.5 281.6L509.0 281.3L508.5 281.0L507.9 280.8L507.3 280.6L506.8 280.4L506.2 280.3L505.6 280.2L505.0 280.1L504.4 280.1L503.8 280.1Z" fill="#bdeee0" fill-rule="evenodd" opacity="1"/><circle cx="564.65" cy="291.45" r="11.6" fill="none" stroke="#bdeee0" stroke-width="0.9" opacity="1"/><path d="M564.6 279.7L565.3 279.7L565.9 279.7L566.5 279.8L567.1 279.9L567.7 280.1L568.3 280.2L568.9 280.4L569.4 280.7L570.0 280.9L570.5 281.2L571.1 281.6L571.6 281.9L572.1 282.3L572.5 282.7L573.0 283.1L573.4 283.6L573.8 284.0L574.2 284.5L574.5 285.0L574.9 285.6L575.2 286.1L575.4 286.7L575.7 287.2L575.9 287.8L576.0 288.4L576.2 289.0L576.3 289.6L576.4 290.2L576.4 290.8L576.4 291.5L576.4 292.1L576.4 292.7L576.3 293.3L577.3 294.1L577.1 294.8L576.9 295.4L576.7 296.1L576.4 296.7L576.1 297.3L575.8 297.9L575.5 298.5L575.1 299.0L574.7 299.6L574.2 300.1L573.8 300.6L573.3 301.0L572.8 301.5L572.2 301.9L571.7 302.3L571.1 302.6L570.5 302.9L569.9 303.2L569.3 303.5L568.6 303.7L568.0 303.9L567.1 303.0L566.5 303.1L565.9 303.2L565.3 303.2L564.6 303.3L564.0 303.2L563.4 303.2L562.8 303.1L562.2 303.0L561.6 302.8L561.0 302.7L560.4 302.5L559.9 302.2L559.3 302.0L558.7 301.7L558.2 301.3L557.7 301.0L557.2 300.6L556.8 300.2L555.5 300.6L555.1 300.1L554.6 299.6L554.2 299.0L553.8 298.5L553.5 297.9L553.2 297.3L552.9 296.7L552.6 296.1L552.4 295.4L552.2 294.8L552.0 294.1L551.9 293.5L551.8 292.8L551.8 292.1L551.7 291.5L551.8 290.8L551.8 290.1L551.9 289.4L552.0 288.8L552.2 288.1L552.4 287.5L552.6 286.8L552.9 286.2L553.2 285.6L553.5 285.0L553.8 284.4L554.2 283.9L554.6 283.3L555.1 282.8L555.5 282.3L556.0 281.9L556.5 281.4L557.1 281.0L557.6 280.6L558.2 280.3L558.8 280.0L559.4 279.7L560.0 279.4L560.7 279.2L561.3 279.0L562.0 278.8L562.6 278.7L563.4 279.7L564.0 279.7L564.6 279.7Z M564.6 280.1L564.1 280.1L563.5 280.1L563.0 281.3L562.5 281.4L562.0 281.5L561.5 281.7L561.0 281.8L560.5 282.0L560.0 282.3L559.5 282.5L559.0 282.8L558.6 283.1L558.2 283.4L557.8 283.8L557.4 284.2L557.0 284.6L556.6 285.0L556.3 285.4L556.0 285.8L555.7 286.3L555.5 286.8L555.2 287.3L555.0 287.8L554.9 288.3L554.7 288.8L554.6 289.3L554.5 289.8L554.4 290.4L554.4 290.9L554.3 291.5L554.4 292.0L554.4 292.5L554.5 293.1L554.6 293.6L554.7 294.1L554.9 294.6L555.0 295.1L555.2 295.6L555.5 296.1L555.7 296.6L556.0 297.1L556.3 297.5L556.6 297.9L557.0 298.3L557.4 298.7L557.0 299.9L557.5 300.3L557.9 300.7L558.4 301.0L558.9 301.3L559.5 301.6L560.0 301.9L560.6 302.1L561.1 302.3L561.7 302.5L562.3 302.6L562.9 302.7L563.5 302.8L564.1 302.8L564.6 302.9L565.2 302.8L565.8 302.8L566.4 302.7L567.0 302.6L567.3 301.4L567.8 301.2L568.3 301.1L568.8 300.9L569.3 300.6L569.8 300.4L570.3 300.1L570.7 299.8L571.1 299.5L571.5 299.1L571.9 298.7L572.3 298.3L572.7 297.9L573.0 297.5L573.3 297.1L573.6 296.6L573.8 296.1L574.1 295.6L574.3 295.1L574.4 294.6L574.6 294.1L574.7 293.6L575.9 293.2L576.0 292.6L576.0 292.0L576.0 291.5L576.0 290.9L576.0 290.3L575.9 289.7L575.8 289.1L575.7 288.5L575.5 287.9L575.3 287.4L575.1 286.8L574.8 286.3L574.5 285.8L574.2 285.2L573.9 284.7L573.5 284.3L573.1 283.8L572.7 283.4L572.3 283.0L571.8 282.6L571.4 282.2L570.9 281.9L570.3 281.6L569.8 281.3L569.3 281.0L568.7 280.8L568.2 280.6L567.6 280.4L567.0 280.3L566.4 280.2L565.8 280.1L565.2 280.1L564.6 280.1Z" fill="#bdeee0" fill-rule="evenodd" opacity="1"/><path d="M625.5 277.5L625.8 277.6L626.2 277.7L626.6 277.8L626.9 277.9L627.3 278.0L627.6 278.1L627.9 278.2L628.3 278.4L628.6 278.5L628.9 278.7L629.2 278.9L629.5 279.0L629.8 279.2L630.1 279.4L630.4 279.6L630.1 281.2L630.3 281.3L630.6 281.4L630.8 281.6L631.1 281.7L633.1 279.0L633.4 279.3L633.7 279.5L633.9 279.8L634.2 280.1L634.4 280.4L634.7 280.7L634.9 281.0L635.1 281.3L635.3 281.6L635.5 281.9L635.7 282.2L635.9 282.5L636.1 282.9L636.2 283.2L636.4 283.5L636.5 283.8L636.7 284.2L636.8 284.5L636.9 284.8L637.0 285.2L637.1 285.5L637.2 285.9L637.3 286.2L637.3 286.5L636.0 287.4L636.1 287.7L636.2 288.0L636.3 288.3L636.3 288.5L639.7 288.0L639.7 288.4L639.7 288.8L639.7 289.2L639.7 289.6L639.6 290.0L639.6 290.3L639.5 290.7L639.5 291.1L639.4 291.5L639.3 291.8L639.3 292.2L639.2 292.5L639.1 292.9L638.9 293.2L638.8 293.6L638.7 293.9L638.5 294.2L638.4 294.6L638.2 294.9L638.1 295.2L637.9 295.5L637.7 295.8L637.5 296.1L637.3 296.4L635.8 296.0L635.6 296.3L635.5 296.6L635.4 296.8L635.2 297.1L637.9 299.1L637.7 299.4L637.4 299.6L637.1 299.9L636.8 300.2L636.5 300.4L636.2 300.6L635.9 300.9L635.6 301.1L635.3 301.3L635.0 301.5L634.7 301.7L634.4 301.9L634.1 302.1L633.7 302.2L633.4 302.4L633.1 302.5L632.8 302.6L632.4 302.8L632.1 302.9L631.7 303.0L631.4 303.1L631.1 303.2L630.7 303.2L630.4 303.3L629.5 302.0L629.2 302.1L629.0 302.1L628.7 302.2L628.4 302.3L628.9 305.6L628.5 305.7L628.1 305.7L627.7 305.7L627.3 305.6L627.0 305.6L626.6 305.6L626.2 305.5L625.8 305.5L625.5 305.4L625.1 305.3L624.8 305.2L624.4 305.1L624.1 305.0L623.7 304.9L623.4 304.8L623.0 304.7L622.7 304.5L622.4 304.4L622.1 304.2L621.7 304.0L621.4 303.9L621.1 303.7L620.9 303.5L620.6 303.3L620.9 301.7L620.6 301.6L620.4 301.5L620.1 301.3L619.9 301.2L617.9 303.9L617.6 303.6L617.3 303.4L617.0 303.1L616.8 302.8L616.5 302.5L616.3 302.2L616.1 301.9L615.8 301.6L615.6 301.3L615.4 301.0L615.2 300.7L615.0 300.4L614.9 300.0L614.7 299.7L614.6 299.4L614.4 299.1L614.3 298.7L614.2 298.4L614.0 298.1L613.9 297.7L613.8 297.4L613.8 297.0L613.7 296.7L613.6 296.4L615.0 295.5L614.9 295.2L614.8 294.9L614.7 294.6L614.6 294.4L611.3 294.9L611.3 294.5L611.3 294.1L611.3 293.7L611.3 293.3L611.3 292.9L611.4 292.6L611.4 292.2L611.5 291.8L611.5 291.5L611.6 291.1L611.7 290.7L611.8 290.4L611.9 290.0L612.0 289.7L612.1 289.3L612.3 289.0L612.4 288.7L612.6 288.3L612.7 288.0L612.9 287.7L613.1 287.4L613.2 287.1L613.4 286.8L613.6 286.5L615.2 286.9L615.3 286.6L615.5 286.3L615.6 286.1L615.7 285.8L613.0 283.8L613.3 283.5L613.6 283.3L613.8 283.0L614.1 282.7L614.4 282.5L614.7 282.3L615.0 282.0L615.3 281.8L615.6 281.6L615.9 281.4L616.3 281.2L616.6 281.0L616.9 280.8L617.2 280.7L617.5 280.5L617.9 280.4L618.2 280.3L618.5 280.1L618.9 280.0L619.2 279.9L619.6 279.8L619.9 279.7L620.2 279.7L620.6 279.6L621.4 280.9L621.7 280.8L622.0 280.8L622.3 280.7L622.6 280.6L622.1 277.3L622.5 277.2L622.8 277.2L623.2 277.2L623.6 277.3L624.0 277.3L624.4 277.3L624.7 277.4L625.1 277.4L625.5 277.5Z M625.5 283.4L625.3 283.5L625.1 283.5L624.9 283.6L624.7 283.7L624.5 283.8L624.3 283.9L624.1 284.0L623.9 284.1L623.8 284.3L622.7 281.1L622.4 281.1L622.2 281.2L621.9 281.3L621.6 281.4L622.0 283.0L621.8 283.1L621.6 283.3L621.4 283.5L621.2 283.7L621.1 283.8L620.9 284.0L620.8 284.2L620.6 284.4L620.5 284.6L620.4 284.8L620.2 285.0L620.1 285.2L620.0 285.4L619.9 285.6L619.8 285.8L619.7 286.0L619.6 286.2L619.5 286.4L619.4 286.6L619.4 286.8L619.3 287.0L619.3 287.2L619.2 287.4L619.2 287.6L616.2 286.1L616.0 286.3L615.9 286.6L615.8 286.8L615.7 287.1L617.0 287.9L617.0 288.2L617.0 288.4L617.0 288.7L617.0 288.9L617.0 289.2L617.0 289.4L617.0 289.7L617.1 289.9L617.1 290.1L617.1 290.4L617.2 290.6L617.2 290.8L617.3 291.0L617.3 291.2L617.4 291.5L617.5 291.7L617.6 291.9L617.7 292.1L617.8 292.3L617.9 292.5L618.0 292.6L618.1 292.8L618.2 293.0L618.3 293.2L615.1 294.2L615.2 294.5L615.3 294.8L615.3 295.0L615.4 295.3L617.0 295.0L617.2 295.1L617.3 295.3L617.5 295.5L617.7 295.7L617.9 295.8L618.0 296.0L618.2 296.2L618.4 296.3L618.6 296.4L618.8 296.6L619.0 296.7L619.2 296.8L619.4 296.9L619.6 297.0L619.8 297.1L620.0 297.2L620.2 297.3L620.4 297.4L620.6 297.5L620.8 297.6L621.0 297.6L621.2 297.7L621.4 297.7L621.6 297.8L620.1 300.8L620.4 300.9L620.6 301.0L620.9 301.2L621.1 301.3L622.0 299.9L622.2 299.9L622.5 299.9L622.7 300.0L623.0 300.0L623.2 299.9L623.4 299.9L623.7 299.9L623.9 299.9L624.2 299.8L624.4 299.8L624.6 299.8L624.8 299.7L625.1 299.6L625.3 299.6L625.5 299.5L625.7 299.4L625.9 299.4L626.1 299.3L626.3 299.2L626.5 299.1L626.7 299.0L626.9 298.9L627.0 298.8L627.2 298.6L628.3 301.8L628.5 301.8L628.8 301.7L629.1 301.6L629.3 301.5L629.0 299.9L629.2 299.8L629.4 299.6L629.5 299.4L629.7 299.2L629.9 299.1L630.0 298.9L630.2 298.7L630.3 298.5L630.5 298.3L630.6 298.1L630.7 297.9L630.9 297.7L631.0 297.5L631.1 297.3L631.2 297.1L631.3 296.9L631.4 296.7L631.4 296.5L631.5 296.3L631.6 296.1L631.6 295.9L631.7 295.7L631.7 295.5L631.8 295.3L634.8 296.8L634.9 296.6L635.1 296.3L635.2 296.1L635.3 295.8L633.9 295.0L634.0 294.7L634.0 294.5L634.0 294.2L634.0 294.0L634.0 293.7L634.0 293.5L633.9 293.2L633.9 293.0L633.9 292.8L633.8 292.5L633.8 292.3L633.7 292.1L633.7 291.9L633.6 291.7L633.5 291.5L633.5 291.2L633.4 291.0L633.3 290.8L633.2 290.6L633.1 290.4L633.0 290.3L632.9 290.1L632.8 289.9L632.7 289.7L635.9 288.7L635.8 288.4L635.7 288.1L635.6 287.9L635.5 287.6L633.9 287.9L633.8 287.8L633.6 287.6L633.4 287.4L633.3 287.2L633.1 287.1L632.9 286.9L632.7 286.7L632.5 286.6L632.4 286.5L632.2 286.3L632.0 286.2L631.8 286.1L631.6 286.0L631.4 285.9L631.2 285.8L631.0 285.7L630.8 285.6L630.6 285.5L630.4 285.4L630.2 285.3L630.0 285.3L629.8 285.2L629.6 285.2L629.3 285.1L630.9 282.1L630.6 282.0L630.4 281.9L630.1 281.7L629.9 281.6L629.0 283.0L628.7 283.0L628.5 283.0L628.2 282.9L628.0 282.9L627.8 283.0L627.5 283.0L627.3 283.0L627.0 283.0L626.8 283.1L626.6 283.1L626.4 283.1L626.1 283.2L625.9 283.3L625.7 283.3L625.5 283.4Z" fill="#bdeee0" fill-rule="evenodd" opacity="1"/><path d="M747.1 277.8L747.6 277.7L748.0 277.6L748.5 277.6L748.9 277.5L749.3 277.5L749.8 277.5L750.3 277.3L750.8 277.4L751.2 277.4L751.6 277.7L752.1 277.8L752.5 277.9L753.0 278.0L753.5 277.9L753.9 278.1L754.4 278.3L754.8 278.5L755.3 278.7L755.7 278.9L756.1 279.1L756.5 279.4L756.9 279.6L757.3 279.9L757.7 280.2L758.1 280.5L758.4 280.8L758.6 281.3L759.0 281.7L759.3 282.0L759.6 282.4L759.8 282.8L760.1 283.2L760.4 283.6L760.5 284.1L760.7 284.5L760.9 285.0L761.2 285.4L761.4 285.8L761.5 286.3L761.9 286.7L762.0 287.1L762.1 287.6L762.2 288.1L762.5 288.5L762.6 289.0L762.6 289.5L762.3 290.0L762.3 290.5L762.3 291.0L762.1 291.5L762.1 291.9L762.0 292.4L761.9 292.8L761.5 293.3L761.3 293.7L761.2 294.1L761.3 294.6L761.1 295.0L760.9 295.5L761.1 296.0L760.9 296.4L760.6 296.8L760.4 297.2L760.3 297.7L760.0 298.0L759.7 298.4L759.5 298.8L759.2 299.1L758.9 299.4L758.3 299.6L758.0 299.9L757.6 300.1L757.3 300.4L756.9 300.7L756.6 300.9L756.2 301.1L755.6 301.1L755.2 301.2L754.8 301.4L754.4 301.5L753.0 300.1L752.7 300.2L752.4 300.4L752.2 300.6L751.9 300.7L751.6 300.9L751.3 301.0L751.7 303.1L751.4 303.4L751.1 303.7L750.8 303.9L750.4 304.2L750.0 304.4L749.6 304.4L749.2 304.6L748.8 304.7L748.4 304.7L748.0 304.8L747.6 305.0L747.1 305.0L746.7 305.0L746.3 305.1L745.8 305.1L745.4 305.3L744.9 305.3L744.5 305.3L744.0 305.5L743.5 305.5L743.1 305.4L742.6 305.4L742.2 305.3L741.7 305.2L741.3 305.1L740.7 305.2L740.2 305.1L739.7 304.9L739.3 304.7L738.8 304.5L738.4 304.3L738.0 304.0L737.6 303.7L737.2 303.4L736.8 303.1L736.7 302.6L736.3 302.3L736.0 302.0L735.8 301.4L735.5 301.1L735.2 300.7L734.9 300.3L734.6 300.0L734.3 299.6L734.1 299.2L733.8 298.8L733.6 298.3L733.4 297.9L733.0 297.6L732.8 297.1L732.6 296.7L732.4 296.2L732.3 295.8L732.2 295.3L732.1 294.8L731.9 294.4L731.9 293.9L731.8 293.4L732.3 292.9L732.3 292.4L732.3 291.9L732.1 291.5L732.1 291.0L732.2 290.5L732.3 290.0L732.2 289.6L732.3 289.1L732.5 288.6L732.6 288.2L732.7 287.8L732.9 287.3L733.4 287.0L733.6 286.6L733.9 286.2L734.1 285.8L734.7 285.6L735.0 285.3L735.3 284.9L735.4 284.5L735.7 284.2L736.0 283.9L736.3 283.6L736.6 283.3L737.0 283.0L737.3 282.8L737.7 282.6L738.0 282.4L738.4 282.2L738.8 282.0L739.2 281.8L739.6 281.7L739.8 281.3L741.3 282.8L741.6 282.7L741.8 282.5L742.1 282.3L742.4 282.2L742.7 282.0L743.0 281.9L742.5 279.8L742.8 279.5L743.2 279.3L743.5 279.1L743.9 278.8L744.3 278.6L744.7 278.5L745.1 278.4L745.5 278.2L745.9 278.0L746.3 277.9L746.7 277.8L747.1 277.8Z M747.1 284.7L746.9 284.7L746.7 284.7L746.5 284.6L746.3 284.5L746.0 284.4L745.8 284.3L745.6 284.4L745.3 284.3L745.0 284.2L744.8 284.2L744.5 284.2L744.2 284.1L743.2 282.3L742.9 282.4L742.6 282.5L742.3 282.7L742.0 282.8L741.8 283.0L741.5 283.2L742.5 285.0L742.2 285.1L742.1 285.4L742.0 285.6L741.9 285.9L741.8 286.1L741.7 286.4L741.6 286.6L741.6 286.8L741.5 287.1L741.5 287.3L741.4 287.5L741.4 287.8L741.3 288.0L741.1 288.2L741.1 288.4L741.1 288.6L741.4 289.0L741.4 289.2L741.4 289.4L741.4 289.6L741.8 289.9L741.8 290.1L741.8 290.3L741.8 290.4L741.8 290.6L741.8 290.8L741.7 290.9L741.7 291.1L741.8 291.3L741.8 291.5L741.6 291.6L741.6 291.8L741.7 292.0L742.2 292.1L742.3 292.2L742.3 292.4L742.3 292.5L742.3 292.7L742.4 292.8L742.5 293.0L742.5 293.1L742.5 293.3L742.6 293.4L742.4 293.7L742.5 293.8L742.6 294.0L742.6 294.1L742.7 294.3L742.8 294.4L742.9 294.5L743.0 294.7L743.1 294.8L743.2 294.9L743.5 294.9L743.5 295.0L743.6 295.2L744.0 295.1L744.1 295.2L744.1 295.3L744.2 295.4L744.4 295.5L744.5 295.6L744.6 295.7L744.7 295.9L744.8 296.0L744.9 296.1L744.9 296.6L745.1 296.7L745.2 296.8L745.4 296.9L745.5 297.0L745.7 297.2L745.8 297.3L746.0 297.7L746.1 297.8L746.3 297.9L746.5 298.1L746.7 298.2L746.9 298.3L747.1 298.3L747.4 298.3L747.6 298.4L747.8 298.5L748.0 298.4L748.3 298.5L748.5 298.5L748.7 298.4L748.9 298.5L749.2 298.6L749.5 298.6L749.8 298.7L750.0 298.8L751.1 300.6L751.4 300.5L751.7 300.4L752.0 300.2L752.2 300.1L752.5 299.9L752.8 299.7L751.9 297.9L751.9 297.6L752.1 297.4L752.1 297.1L752.1 296.7L752.1 296.5L752.2 296.2L752.3 296.0L752.4 295.8L752.4 295.5L752.4 295.3L752.3 294.9L752.3 294.7L752.3 294.5L752.4 294.3L752.4 294.1L752.4 293.9L752.6 293.8L752.6 293.6L752.6 293.4L752.6 293.2L753.0 293.1L752.9 292.9L752.9 292.7L753.1 292.6L753.1 292.4L753.1 292.2L752.7 292.0L752.6 291.8L752.6 291.6L752.6 291.5L752.4 291.3L752.3 291.1L752.3 291.0L751.9 290.8L751.8 290.7L751.8 290.6L752.0 290.4L751.9 290.2L751.8 290.1L751.8 289.9L752.0 289.7L751.9 289.6L751.8 289.4L751.8 289.3L751.7 289.1L751.7 289.0L751.5 288.9L751.4 288.8L751.3 288.6L751.2 288.5L751.1 288.4L751.0 288.2L750.9 288.1L750.7 288.1L750.6 288.0L750.5 287.8L750.5 287.7L750.4 287.6L750.3 287.4L750.2 287.3L750.1 287.1L750.0 287.0L749.8 286.9L749.7 286.7L749.6 286.6L749.5 286.5L749.4 286.2L749.3 286.1L749.1 285.9L749.0 285.8L748.8 285.9L748.6 285.8L748.4 285.7L748.3 285.3L748.1 285.2L747.9 285.1L747.7 285.0L747.6 284.9L747.3 284.8L747.1 284.7Z" fill="#bdeee0" fill-rule="evenodd" opacity="1"/><path d="M794.97 291.45h15" stroke="#bdeee0" stroke-width="0.5" opacity="0.7"/><path d="M809.57 291.45L809.6 279.3L810.6 278.0L811.7 280.2L812.7 278.2L813.8 279.8L814.8 279.8L815.9 282.9L816.9 283.6L818.0 285.1L819.0 285.8L820.1 288.5L821.1 289.4L821.1 292.2L820.1 293.5L819.0 295.8L818.0 299.5L816.9 300.8L815.9 301.8L814.8 303.6L813.8 301.3L812.7 303.4L811.7 302.8L810.6 304.5L809.6 303.8Z" fill="#bdeee0"/><circle cx="321.33" cy="376.4" r="15.2" fill="none" stroke="#bcefe4" stroke-width="0.8" opacity="1"/><path d="M323.0 363.4L324.2 353.9M325.4 362.4L326.9 357.3M327.1 364.3L330.9 356.3M329.4 364.8L333.7 358.5M330.8 366.6L336.3 360.9M332.9 367.7L338.5 363.5M333.8 369.9L340.0 366.6M333.7 372.3L342.1 369.4M334.9 374.2L343.7 372.7M335.6 376.4L342.4 376.3M335.8 378.7L340.9 379.5M334.8 380.8L341.4 383.0M333.0 382.5L339.9 386.0M332.4 384.6L338.5 389.1" stroke="#bcefe4" stroke-width="1.5" fill="none"/><circle cx="442.99" cy="376.4" r="13" fill="none" stroke="#bcefe4" stroke-width="0.7" opacity="1"/><path d="M442.8 365.4L442.8 359.7M444.5 365.5L445.3 360.1M446.0 367.7L450.1 356.0M449.7 366.9L454.4 360.3M451.3 367.8L454.6 364.4M450.4 371.3L460.9 364.0M453.3 371.4L458.6 368.8M451.3 373.8L463.1 370.0M452.9 375.0L459.4 374.1M455.1 376.5L462.5 376.6M450.9 379.0L458.8 381.5M453.1 381.8L460.5 385.7M449.8 381.6L458.9 388.5M450.6 384.3L456.6 390.5M450.1 386.3L454.1 391.8M448.9 387.7L453.0 395.6M446.8 387.3L449.7 395.6M443.0 387.7L443.0 395.7M441.0 387.2L439.8 393.5M439.6 387.5L437.0 395.9M437.9 386.6L433.5 395.4M435.6 386.5L429.8 394.4M436.6 383.0L430.8 389.1M433.8 383.0L428.6 386.7M430.9 380.5L424.8 382.6M434.9 377.6L421.0 379.7M430.1 376.2L420.3 376.1M434.0 375.1L420.5 373.1M433.6 373.4L421.5 369.5M432.3 370.8L427.0 367.9M434.0 369.9L429.2 366.5M435.6 365.7L432.6 361.3M438.7 368.4L434.8 361.3M439.0 364.5L437.3 359.3M441.4 364.5L440.5 357.6" stroke="#bcefe4" stroke-width="1.1" fill="none"/><circle cx="503.82" cy="376.4" r="14" fill="none" stroke="#bcefe4" stroke-width="0.7" opacity="1"/><path d="M503.8 364.8L503.8 355.5M505.9 365.4L507.8 355.1M507.9 366.0L511.6 356.4M510.3 365.9L513.4 361.0M511.8 367.6L518.9 359.9M514.4 368.4L521.5 363.1M515.4 370.7L521.9 367.4M515.4 373.1L523.5 370.8M516.7 375.2L521.8 374.7M515.0 377.4L523.0 378.2M516.4 380.0L524.5 382.3M515.6 382.3L523.2 386.1M514.3 384.3L520.5 389.0M511.4 384.8L516.0 389.7M510.6 387.4L513.8 392.5M507.9 387.0L512.0 397.4M505.9 387.3L507.4 395.4M503.8 388.2L503.8 396.9M501.8 387.4L500.3 395.0M499.8 386.7L496.2 396.1M497.1 387.2L492.2 395.2M495.0 386.1L490.6 390.9M493.2 384.4L488.9 387.7M493.1 381.7L486.5 385.0M492.5 379.6L486.5 381.3M491.1 377.6L484.3 378.2M491.6 375.3L482.1 374.4M492.0 373.0L485.1 371.1M491.9 370.4L484.8 366.9M493.1 368.3L485.9 362.8M496.1 368.0L489.4 360.5M501.7 365.1L500.5 358.6" stroke="#bcefe4" stroke-width="1.4" fill="none"/><circle cx="564.65" cy="376.4" r="15.2" fill="none" stroke="#bcefe4" stroke-width="0.8" opacity="1"/><path d="M566.3 363.2L567.4 354.4M568.7 362.7L570.6 356.1M570.5 364.2L573.2 358.6M572.3 365.4L576.7 359.0M573.9 366.8L579.1 361.4M575.3 368.4L581.1 364.1M577.0 369.9L584.1 366.2M577.5 372.1L584.9 369.6M578.2 374.2L584.7 373.1M578.9 376.4L586.8 376.3M578.0 378.5L586.6 379.9M578.1 380.8L585.9 383.4M576.5 382.5L582.4 385.6M575.9 384.7L582.5 389.6" stroke="#bcefe4" stroke-width="1.5" fill="none"/><path d="M625.4 368.4L625.2 357.5M627.7 367.8L630.8 355.9M630.5 367.9L636.3 358.3M632.8 370.0L639.3 364.3M634.2 372.4L646.3 366.7M632.5 375.2L647.0 372.9M632.5 377.4L645.6 379.4M633.9 379.9L646.9 385.3M632.5 382.2L639.9 388.3M629.8 383.4L635.4 392.7M627.8 384.4L631.0 395.9M625.8 385.8L626.1 394.7M622.8 385.1L619.4 396.1M620.5 384.0L614.2 393.8M618.3 382.3L608.4 390.6M618.8 379.4L606.2 385.1M618.5 377.3L605.9 378.9M617.8 375.5L605.1 374.1M616.4 372.5L606.2 368.2M619.3 370.9L608.6 361.4M621.4 369.6L615.2 359.4M623.1 368.1L619.6 355.7" stroke="#bcefe4" stroke-width="3.0" fill="none"/><circle cx="625.48" cy="376.4" r="13" fill="none" stroke="#bcefe4" stroke-width="0.7" opacity="1"/><path d="M686.3 355.6L687.0 355.6L687.6 355.7L688.3 355.7L688.9 355.7L689.6 355.8L690.2 355.9L690.9 356.0L691.5 356.3L692.1 356.5L692.7 356.7L693.3 356.9L693.9 357.1L694.5 357.4L695.1 357.6L695.7 357.9L696.3 358.3L696.8 358.6L697.4 358.9L697.9 359.3L698.5 359.6L699.0 360.0L699.5 360.4L700.0 360.8L700.6 361.2L701.0 361.7L701.5 362.1L701.9 362.6L702.4 363.1L702.8 363.6L703.2 364.2L703.5 364.7L703.9 365.2L704.2 365.8L704.6 366.4L704.9 366.9L705.1 367.6L705.4 368.1L705.6 368.7L705.9 369.4L706.1 370.0L706.3 370.6L706.4 371.2L706.6 371.9L706.7 372.5L706.8 373.2L706.9 373.8L707.0 374.4L707.0 375.1L707.0 375.7L707.0 376.4L707.0 377.1L707.0 377.7L707.0 378.4L706.9 379.0L706.8 379.6L706.6 380.3L706.4 380.9L706.3 381.5L706.1 382.2L705.9 382.7L705.6 383.4L705.4 384.0L705.2 384.6L704.9 385.1L704.6 385.7L704.3 386.3L704.0 386.8L703.7 387.5L703.4 388.0L703.0 388.5L702.6 389.0L702.3 389.6L701.9 390.1L701.4 390.6L701.0 391.1L700.6 391.6L700.1 392.0L699.6 392.4L699.1 392.9L698.5 393.2L698.0 393.6L697.4 393.9L696.9 394.3L696.3 394.5L695.7 394.8L695.1 395.1L694.5 395.4L693.9 395.6L693.3 395.9L692.7 396.1L692.1 396.3L691.5 396.5L690.8 396.7L690.2 396.8L689.6 396.9L688.9 397.0L688.3 397.1L687.6 397.1L687.0 397.2L686.3 397.2L685.7 397.2L685.0 397.2L684.4 397.1L683.7 397.0L683.1 396.9L682.4 396.8L681.8 396.7L681.1 396.6L680.5 396.4L679.9 396.2L679.3 396.0L678.6 395.8L678.0 395.5L677.4 395.2L676.9 394.9L676.3 394.6L675.7 394.4L675.1 394.0L674.6 393.7L674.0 393.3L673.5 392.9L673.0 392.5L672.5 392.1L672.0 391.7L671.5 391.2L671.0 390.8L670.6 390.3L670.2 389.8L669.8 389.2L669.4 388.7L669.0 388.2L668.7 387.6L668.4 387.0L668.1 386.4L667.8 385.8L667.6 385.2L667.3 384.6L667.1 384.0L666.8 383.4L666.6 382.8L666.4 382.2L666.3 381.5L666.1 380.9L665.9 380.3L665.8 379.7L665.7 379.0L665.6 378.4L665.5 377.7L665.5 377.1L665.5 376.4L665.5 375.7L665.5 375.1L665.5 374.4L665.6 373.8L665.7 373.1L665.8 372.5L665.9 371.8L666.0 371.2L666.2 370.6L666.4 369.9L666.6 369.3L666.8 368.7L667.1 368.1L667.3 367.5L667.6 366.9L667.9 366.3L668.2 365.7L668.6 365.2L669.0 364.6L669.4 364.1L669.8 363.6L670.2 363.1L670.7 362.6L671.1 362.1L671.6 361.7L672.1 361.2L672.6 360.8L673.1 360.4L673.6 360.0L674.1 359.6L674.6 359.2L675.2 358.8L675.7 358.5L676.3 358.2L676.9 357.9L677.5 357.6L679.7 361.1L680.2 360.9L680.7 360.7L681.1 360.5L680.5 356.4L681.2 356.3L681.8 356.2L682.4 356.1L683.1 355.9L683.7 355.8L684.4 355.7L685.0 355.6L685.7 355.6L686.3 355.6Z M686.3 364.4L685.9 364.4L685.6 364.4L685.2 364.5L684.8 364.5L684.4 364.5L684.0 364.5L683.7 364.6L683.3 364.7L683.0 364.9L681.3 361.1L680.9 361.3L680.4 361.4L679.9 361.6L681.2 365.5L680.8 365.7L680.5 365.9L680.2 366.1L679.9 366.3L679.6 366.5L679.3 366.7L679.0 366.9L678.7 367.2L678.4 367.4L678.1 367.7L677.9 368.0L677.6 368.2L677.3 368.5L677.1 368.8L676.9 369.1L676.7 369.4L676.5 369.7L676.3 370.0L676.2 370.4L676.0 370.7L675.8 371.0L675.6 371.4L675.5 371.7L675.3 372.0L675.2 372.4L675.1 372.7L674.9 373.1L674.8 373.4L674.7 373.8L674.6 374.2L674.5 374.5L674.5 374.9L674.4 375.3L674.4 375.7L674.4 376.0L674.3 376.4L674.4 376.8L674.4 377.2L674.3 377.5L674.4 377.9L674.4 378.3L674.5 378.7L674.5 379.0L674.6 379.4L674.7 379.8L674.8 380.1L674.9 380.5L675.1 380.9L675.2 381.2L675.4 381.5L675.6 381.8L675.8 382.2L676.0 382.5L676.2 382.8L676.5 383.1L676.7 383.4L676.9 383.7L677.2 384.0L677.4 384.2L677.7 384.5L677.9 384.8L678.2 385.0L678.4 385.3L678.7 385.6L679.0 385.8L679.3 386.0L679.6 386.3L679.9 386.5L680.2 386.7L680.5 386.9L680.9 387.1L681.2 387.2L681.6 387.4L681.9 387.5L682.3 387.7L682.6 387.8L683.0 387.9L683.3 388.0L683.7 388.1L684.1 388.2L684.4 388.3L684.8 388.3L685.2 388.4L685.6 388.4L685.9 388.4L686.3 388.4L686.7 388.4L687.1 388.4L687.4 388.4L687.8 388.3L688.2 388.3L688.6 388.2L688.9 388.1L689.3 388.0L689.7 388.0L690.1 387.9L690.4 387.8L690.8 387.7L691.1 387.5L691.5 387.3L691.8 387.2L692.1 387.0L692.5 386.8L692.8 386.6L693.1 386.4L693.4 386.2L693.6 385.9L693.9 385.6L694.2 385.4L694.5 385.1L694.8 384.9L695.1 384.6L695.3 384.4L695.6 384.1L695.9 383.9L696.2 383.6L696.4 383.2L696.6 382.9L696.9 382.7L697.1 382.3L697.3 382.0L697.4 381.6L697.6 381.3L697.7 380.9L697.8 380.6L698.0 380.2L698.0 379.8L698.1 379.4L698.2 379.1L698.3 378.7L698.2 378.3L698.3 377.9L698.3 377.5L698.4 377.2L698.4 376.8L698.4 376.4L698.4 376.0L698.4 375.6L698.3 375.3L698.3 374.9L698.2 374.5L698.1 374.1L698.1 373.8L698.0 373.4L697.9 373.0L697.8 372.7L697.6 372.3L697.5 372.0L697.3 371.6L697.2 371.3L697.0 371.0L696.8 370.6L696.6 370.3L696.4 370.0L696.2 369.7L696.0 369.4L695.8 369.1L695.5 368.8L695.3 368.5L695.0 368.2L694.8 367.9L694.5 367.7L694.3 367.4L694.0 367.1L693.7 366.9L693.4 366.6L693.1 366.4L692.8 366.2L692.5 366.0L692.1 365.8L691.8 365.6L691.4 365.5L691.1 365.3L690.8 365.2L690.4 365.1L690.0 364.9L689.7 364.8L689.3 364.7L688.9 364.7L688.5 364.7L688.2 364.6L687.8 364.6L687.4 364.4L687.1 364.4L686.7 364.4L686.3 364.4Z" fill="#bcefe4" fill-rule="evenodd" opacity="1"/><path d="M747.1 355.9L747.8 355.9L748.4 355.9L749.1 355.9L749.7 355.9L750.4 356.0L751.0 356.1L751.6 356.3L752.3 356.4L752.9 356.6L753.5 356.8L754.1 357.0L754.8 357.1L755.4 357.4L756.0 357.7L756.5 357.9L757.1 358.2L757.7 358.6L758.2 358.9L758.8 359.3L759.4 359.6L759.9 360.0L760.4 360.4L760.9 360.8L761.4 361.2L761.8 361.7L762.3 362.2L762.7 362.6L763.1 363.2L763.6 363.7L763.9 364.2L764.3 364.7L764.7 365.3L765.0 365.8L765.3 366.4L765.6 367.0L765.8 367.6L766.1 368.2L766.4 368.8L766.6 369.4L766.8 370.0L767.0 370.6L767.2 371.3L767.3 371.9L767.5 372.5L767.6 373.2L767.7 373.8L767.7 374.5L767.9 375.1L767.9 375.7L767.9 376.4L767.9 377.1L767.9 377.7L767.9 378.4L767.8 379.0L767.7 379.7L767.6 380.3L767.4 380.9L767.3 381.6L767.1 382.2L766.7 382.8L766.5 383.4L766.3 384.0L766.1 384.6L765.7 385.1L765.4 385.7L765.1 386.3L764.8 386.9L764.5 387.4L764.2 388.0L763.8 388.5L763.4 389.0L763.2 389.7L762.7 390.2L762.3 390.6L761.8 391.1L761.5 391.7L761.0 392.1L760.5 392.6L760.0 393.0L759.5 393.4L758.9 393.8L758.4 394.1L757.8 394.5L757.2 394.8L756.7 395.1L756.1 395.4L755.5 395.7L754.8 395.8L754.2 396.0L753.6 396.2L753.0 396.4L752.3 396.5L751.7 396.7L751.0 396.8L750.4 396.9L749.7 396.9L749.1 397.0L748.4 397.0L747.8 397.1L747.1 397.1L746.5 397.1L745.8 397.1L745.2 397.0L744.5 397.0L743.9 397.0L743.2 396.8L742.6 396.7L742.0 396.6L741.3 396.4L740.7 396.2L740.1 396.0L739.5 395.7L738.9 395.4L738.3 395.1L737.7 394.9L737.2 394.6L736.7 394.1L736.1 393.8L735.6 393.4L735.1 393.0L734.6 392.6L734.1 392.2L733.6 391.8L733.1 391.4L732.6 390.9L732.1 390.5L731.7 390.0L731.2 389.6L730.8 389.1L730.4 388.5L730.1 388.0L729.6 387.5L729.2 387.0L728.9 386.4L728.6 385.8L728.2 385.3L728.0 384.7L727.7 384.1L727.5 383.5L727.2 382.9L727.0 382.2L726.8 381.6L726.7 381.0L726.6 380.3L726.5 379.7L726.4 379.0L726.4 378.4L726.4 377.7L726.4 377.1L726.4 376.4L726.4 375.7L726.6 375.1L726.6 374.5L726.7 373.8L726.8 373.2L726.9 372.5L727.1 371.9L727.2 371.3L727.4 370.7L727.5 370.0L727.7 369.4L728.0 368.8L728.2 368.2L728.4 367.6L728.7 367.0L729.0 366.4L729.3 365.9L729.6 365.3L729.9 364.7L730.3 364.2L730.7 363.7L731.2 363.2L731.6 362.7L732.0 362.2L732.5 361.7L733.0 361.3L733.4 360.9L733.9 360.4L734.4 360.0L735.0 359.6L735.5 359.3L736.0 358.9L736.6 358.6L737.1 358.2L737.7 357.9L738.3 357.6L740.5 361.1L741.0 360.9L741.5 360.7L742.0 360.5L741.3 356.4L742.0 356.4L742.6 356.2L743.3 356.1L743.9 356.0L744.6 356.0L745.2 355.9L745.8 355.9L746.5 355.8L747.1 355.9Z M747.1 364.1L746.8 364.2L746.4 364.2L746.0 364.2L745.6 364.3L745.2 364.4L744.9 364.5L744.5 364.6L744.1 364.7L743.8 364.9L742.2 361.1L741.7 361.3L741.2 361.4L740.7 361.6L742.0 365.6L741.7 365.7L741.4 365.9L741.0 366.0L740.7 366.2L740.3 366.4L740.0 366.6L739.7 366.8L739.4 367.1L739.1 367.3L738.9 367.6L738.6 367.9L738.3 368.1L738.1 368.4L737.8 368.7L737.7 369.0L737.4 369.3L737.2 369.7L737.0 370.0L736.7 370.2L736.5 370.6L736.4 370.9L736.2 371.3L736.0 371.6L735.8 371.9L735.7 372.3L735.6 372.6L735.4 373.0L735.3 373.4L735.2 373.7L735.1 374.1L735.1 374.5L735.1 374.9L735.0 375.3L735.0 375.6L735.1 376.0L735.1 376.4L735.1 376.8L735.1 377.2L735.3 377.5L735.3 377.9L735.4 378.3L735.4 378.6L735.6 379.0L735.7 379.3L735.8 379.7L735.9 380.1L735.9 380.4L736.1 380.8L736.2 381.1L736.4 381.5L736.4 381.8L736.6 382.2L736.8 382.5L737.0 382.8L737.1 383.2L737.3 383.5L737.5 383.8L737.8 384.1L738.0 384.5L738.2 384.8L738.5 385.1L738.8 385.3L739.0 385.6L739.3 385.9L739.6 386.1L739.9 386.4L740.3 386.5L740.6 386.7L740.9 386.9L741.3 387.0L741.7 387.2L742.0 387.3L742.3 387.5L742.7 387.6L743.1 387.7L743.4 387.8L743.8 387.9L744.2 388.0L744.5 388.1L744.9 388.2L745.3 388.2L745.6 388.3L746.0 388.4L746.4 388.4L746.8 388.5L747.1 388.5L747.5 388.5L747.9 388.5L748.3 388.5L748.7 388.4L749.0 388.3L749.4 388.2L749.8 388.1L750.1 388.0L750.5 387.9L750.8 387.8L751.2 387.6L751.5 387.5L751.8 387.2L752.2 387.1L752.5 386.9L752.8 386.8L753.1 386.6L753.5 386.4L753.8 386.2L754.1 385.9L754.4 385.7L754.7 385.5L755.0 385.3L755.2 385.0L755.6 384.9L755.9 384.6L756.1 384.3L756.4 384.1L756.8 383.9L757.0 383.6L757.2 383.3L757.4 382.9L757.7 382.6L757.9 382.3L758.1 382.0L758.2 381.6L758.3 381.2L758.5 380.9L758.6 380.5L758.7 380.2L758.7 379.8L758.8 379.4L758.9 379.0L758.9 378.7L759.0 378.3L759.0 377.9L759.1 377.5L759.1 377.2L759.1 376.8L759.1 376.4L759.1 376.0L759.1 375.6L759.2 375.3L759.1 374.9L759.1 374.5L759.0 374.1L759.0 373.8L758.9 373.4L758.8 373.0L758.7 372.6L758.5 372.3L758.4 371.9L758.3 371.6L758.1 371.2L757.9 370.9L757.7 370.6L757.5 370.3L757.3 369.9L757.1 369.6L756.9 369.3L756.6 369.0L756.4 368.7L756.1 368.5L755.9 368.2L755.6 367.9L755.4 367.6L755.1 367.4L754.8 367.1L754.5 366.9L754.2 366.7L753.9 366.4L753.6 366.2L753.3 366.0L753.0 365.8L752.6 365.6L752.3 365.5L751.9 365.3L751.6 365.2L751.3 365.0L750.9 364.9L750.5 364.7L750.2 364.6L749.8 364.5L749.4 364.5L749.0 364.4L748.7 364.3L748.3 364.2L747.9 364.2L747.5 364.2L747.1 364.1Z" fill="#bcefe4" fill-rule="evenodd" opacity="1"/><path d="M260.5 451.2L260.9 451.3L261.3 451.4L261.8 451.5L262.2 451.5L262.6 451.6L263.0 451.8L263.4 451.9L263.8 452.1L264.2 452.3L264.5 452.4L264.9 452.6L265.3 452.8L265.7 453.0L266.0 453.2L266.4 453.4L266.7 453.6L267.1 453.8L267.6 453.6L267.9 453.8L268.2 454.1L268.6 454.3L269.1 454.2L269.4 454.4L269.7 454.7L270.1 454.8L270.4 455.1L270.7 455.4L271.0 455.7L271.1 456.2L271.3 456.5L271.6 456.8L271.8 457.2L272.1 457.5L272.3 457.8L272.5 458.1L272.7 458.5L272.9 458.8L273.1 459.1L273.3 459.4L273.5 459.7L273.7 460.0L273.9 460.3L274.0 460.7L274.2 461.1L274.4 461.4L274.5 461.7L274.7 462.0L274.9 462.3L275.0 462.6L275.3 462.8L275.5 463.2L275.6 463.5L275.7 463.8L276.0 464.1L276.1 464.4L276.2 464.7L276.4 465.0L276.5 465.4L276.6 465.7L276.7 466.0L276.8 466.4L276.8 466.7L276.9 467.1L276.9 467.4L276.9 467.8L277.0 468.1L277.0 468.4L277.0 468.8L277.1 469.1L277.1 469.4L277.1 469.8L277.1 470.1L277.2 470.4L277.2 470.8L277.3 471.1L277.3 471.4L277.3 471.8L277.3 472.1L283.6 472.3L283.5 472.8L283.4 473.2L283.4 473.7L283.3 474.1L283.1 474.5L283.0 475.0L282.3 475.3L282.2 475.7L282.0 476.2L281.6 476.5L281.4 476.9L281.3 477.3L281.1 477.7L280.7 478.0L280.5 478.4L280.3 478.8L280.3 479.2L280.1 479.6L279.9 479.9L279.6 480.2L279.2 480.5L278.9 480.8L278.7 481.1L278.4 481.4L278.1 481.7L277.8 482.0L277.6 482.3L277.1 482.5L276.9 482.8L276.6 483.1L276.3 483.3L276.3 483.8L276.0 484.0L275.8 484.3L275.6 484.6L275.3 484.9L275.0 485.1L274.7 485.3L274.5 485.7L274.2 485.9L273.8 486.1L273.4 486.1L273.1 486.3L272.7 486.5L272.4 486.7L272.1 486.9L271.8 487.1L271.5 487.2L271.1 487.4L270.8 487.5L270.5 487.7L270.2 487.8L269.9 488.1L269.6 488.2L269.2 488.3L268.9 488.4L268.5 488.5L268.2 488.6L267.9 488.7L267.5 488.8L267.2 488.9L266.9 489.0L266.5 489.1L266.2 489.1L265.8 489.1L265.5 489.2L265.1 489.2L264.8 489.3L264.5 489.3L264.1 489.3L263.8 489.4L263.5 489.4L263.1 489.4L262.8 489.4L262.5 489.5L262.1 489.5L261.8 489.5L261.5 489.5L261.2 489.5L260.9 494.7L260.5 495.0L260.1 494.8L259.6 494.7L259.2 494.6L258.8 494.4L258.4 494.2L258.0 494.1L257.6 493.9L257.2 493.6L256.8 493.4L256.4 493.2L256.1 492.9L255.7 492.7L255.3 492.6L255.0 492.4L254.6 492.3L254.2 492.1L253.9 491.9L253.4 491.9L253.1 491.7L252.7 491.5L252.4 491.2L252.1 490.9L251.8 490.7L251.5 490.4L251.2 490.2L250.9 489.9L250.6 489.6L250.3 489.4L249.9 489.3L249.7 489.0L249.4 488.7L249.2 488.3L248.9 488.0L248.7 487.7L248.5 487.4L248.2 487.1L248.0 486.8L247.8 486.5L247.5 486.2L247.5 485.7L247.3 485.4L247.1 485.1L246.8 484.9L246.6 484.6L246.5 484.3L246.3 483.9L246.2 483.6L246.0 483.3L245.8 483.0L245.7 482.7L245.5 482.3L245.4 482.0L245.3 481.7L245.1 481.4L245.0 481.0L244.9 480.7L244.8 480.4L244.7 480.0L244.6 479.7L244.5 479.4L244.4 479.1L244.3 478.7L244.2 478.4L244.2 478.1L244.1 477.7L244.0 477.4L244.0 477.1L243.9 476.7L243.9 476.4L243.9 476.1L243.8 475.7L243.9 475.4L243.8 475.1L243.8 474.7L243.9 474.4L243.9 474.1L243.8 473.7L243.8 473.4L238.4 473.2L238.5 472.8L238.6 472.3L238.3 471.9L238.4 471.4L238.5 471.0L238.7 470.6L238.8 470.2L239.0 469.8L239.2 469.4L239.7 469.0L239.8 468.6L240.0 468.3L240.2 467.9L240.7 467.6L240.9 467.2L241.1 466.9L241.1 466.5L241.4 466.1L241.6 465.8L241.8 465.4L242.2 465.2L242.4 464.8L242.7 464.5L242.9 464.2L242.9 463.8L243.1 463.5L243.4 463.2L243.5 462.8L243.8 462.5L244.0 462.2L244.3 461.9L244.3 461.5L244.6 461.2L244.9 460.9L245.2 460.7L245.5 460.4L245.8 460.2L246.1 460.0L246.4 459.7L246.8 459.5L247.1 459.3L247.6 459.4L247.9 459.2L248.3 459.0L248.6 458.8L249.0 458.7L249.3 458.5L249.6 458.4L249.9 458.2L250.3 458.1L250.6 457.9L250.9 457.8L251.1 457.5L251.5 457.4L251.8 457.2L252.1 457.1L252.5 457.0L252.8 456.9L253.1 456.8L253.5 456.7L253.8 456.6L254.2 456.5L254.5 456.5L254.8 456.4L255.2 456.4L255.5 456.3L255.8 456.2L256.2 456.1L256.5 456.1L256.8 456.0L257.2 456.1L257.5 456.1L257.9 456.0L258.2 456.1L258.5 456.0L258.9 456.0L259.2 456.0L259.5 456.1L259.8 456.0L260.1 450.9L260.5 451.2Z M260.5 462.6L260.3 462.9L259.9 457.5L259.6 457.5L259.3 457.6L259.0 457.7L258.7 457.7L258.4 457.8L258.1 457.9L257.9 458.0L257.6 458.1L257.3 458.3L257.0 458.4L256.8 458.5L256.5 458.6L256.2 458.6L256.0 458.8L255.7 458.9L255.5 459.1L255.2 459.2L255.0 459.4L254.7 459.5L254.5 459.7L254.3 459.9L254.0 460.1L253.8 460.2L253.6 460.4L253.4 460.6L253.2 460.8L252.9 460.9L252.7 461.1L252.5 461.3L252.3 461.5L252.1 461.7L252.0 461.9L251.8 462.1L251.7 462.5L251.6 462.7L251.4 462.9L251.3 463.2L251.4 463.6L251.3 463.9L251.2 464.1L251.1 464.4L251.0 464.6L250.9 464.9L250.8 465.1L250.7 465.4L250.7 465.6L250.6 465.9L250.2 465.9L250.2 466.1L250.1 466.4L250.1 466.6L249.8 466.8L249.8 467.0L249.8 467.3L249.5 467.4L249.5 467.7L249.4 467.9L249.4 468.2L249.6 468.5L249.6 468.7L249.6 469.0L249.6 469.2L249.5 469.4L249.5 469.7L249.6 469.9L249.9 470.2L250.0 470.4L250.0 470.7L250.1 470.9L250.5 471.2L250.6 471.4L250.7 471.6L250.8 471.8L250.9 472.0L251.0 472.2L251.1 472.4L250.7 472.6L250.8 472.8L250.9 472.9L245.2 473.4L245.2 473.6L245.3 473.9L245.3 474.2L245.4 474.5L245.5 474.8L245.6 475.1L245.7 475.4L245.8 475.7L245.9 476.0L246.0 476.2L246.1 476.5L246.2 476.8L246.4 477.0L246.5 477.3L246.6 477.6L246.7 477.8L246.9 478.1L247.0 478.3L247.2 478.6L247.3 478.8L247.5 479.1L247.7 479.3L247.9 479.5L248.0 479.7L248.2 480.0L248.4 480.2L248.6 480.4L248.8 480.6L249.0 480.8L249.2 481.0L249.4 481.1L249.7 481.3L249.9 481.5L250.1 481.6L250.3 481.8L250.5 482.0L250.7 482.2L250.9 482.3L251.4 482.2L251.6 482.4L251.9 482.5L252.1 482.6L252.3 482.7L252.6 482.8L252.8 482.9L253.1 482.9L253.4 482.9L253.7 483.0L253.9 483.0L254.1 483.3L254.3 483.3L254.6 483.4L254.8 483.4L255.1 483.4L255.3 483.5L255.6 483.5L255.8 483.4L256.1 483.4L256.3 483.4L256.6 483.4L256.7 483.6L257.0 483.6L257.2 483.6L257.4 483.7L257.6 483.7L257.9 483.7L258.1 483.6L258.4 483.4L258.6 483.4L258.8 483.3L259.1 483.0L259.3 482.9L259.5 482.8L259.7 482.8L259.9 482.6L260.1 482.5L260.3 482.3L260.5 482.2L260.7 482.5L261.1 488.0L261.4 487.9L261.7 487.9L262.0 487.8L262.3 487.8L262.6 487.7L262.9 487.6L263.1 487.6L263.4 487.5L263.7 487.4L264.0 487.3L264.3 487.2L264.5 487.0L264.8 486.9L265.1 486.8L265.3 486.6L265.5 486.4L265.8 486.3L266.0 486.1L266.3 485.9L266.5 485.8L266.7 485.6L266.9 485.4L267.2 485.2L267.4 485.0L267.6 484.8L267.8 484.6L268.0 484.5L268.2 484.3L268.4 484.1L268.6 483.9L268.8 483.7L269.0 483.5L269.1 483.2L269.3 483.0L269.4 482.8L269.6 482.6L269.7 482.3L269.7 481.9L269.8 481.7L269.9 481.4L270.1 481.3L270.2 481.1L270.3 480.8L270.4 480.6L270.6 480.4L270.7 480.2L270.8 479.9L271.1 479.9L271.2 479.6L271.3 479.4L271.3 479.1L271.2 478.7L271.2 478.5L271.3 478.2L271.2 477.9L271.2 477.7L271.2 477.4L271.2 477.2L270.9 476.8L270.9 476.6L270.9 476.4L270.9 476.1L271.1 476.0L271.1 475.7L271.0 475.5L270.8 475.2L270.7 475.0L270.7 474.8L270.6 474.6L270.3 474.3L270.3 474.1L270.2 473.9L269.5 473.6L269.4 473.5L269.3 473.3L269.2 473.1L269.3 472.9L269.1 472.8L269.0 472.6L275.6 472.2L275.6 471.9L275.6 471.6L275.5 471.3L275.5 471.0L275.5 470.7L275.4 470.4L275.3 470.1L275.2 469.8L275.1 469.5L275.0 469.3L274.9 469.0L274.8 468.7L274.6 468.5L274.5 468.2L274.3 468.0L274.1 467.7L274.0 467.5L273.8 467.2L273.6 467.0L273.5 466.8L273.3 466.6L273.2 466.3L273.0 466.1L272.8 465.8L272.8 465.5L272.6 465.3L272.4 465.1L272.2 464.9L272.2 464.6L272.0 464.4L271.7 464.2L271.5 464.1L271.3 463.9L271.1 463.7L270.8 463.6L270.5 463.5L270.3 463.4L270.0 463.2L269.8 463.1L269.5 463.0L269.3 462.9L269.0 462.7L268.7 462.8L268.4 462.7L268.2 462.6L267.9 462.5L267.6 462.6L267.3 462.5L267.1 462.5L266.7 462.7L266.4 462.7L266.1 462.7L265.9 462.6L265.7 462.5L265.5 462.5L265.2 462.5L265.2 462.1L264.9 462.1L264.7 462.1L264.4 462.1L264.3 461.7L264.1 461.7L263.9 461.7L263.6 461.7L263.4 461.7L263.1 461.8L262.9 461.8L262.7 461.9L262.4 462.0L262.2 462.0L262.0 462.2L261.7 462.2L261.5 462.3L261.3 462.4L261.1 462.3L260.9 462.4L260.7 462.5L260.5 462.6Z" fill="#b9efc0" fill-rule="evenodd" opacity="1"/><path d="M321.3 449.6L321.8 449.8L322.2 449.9L322.7 450.1L323.1 450.3L323.5 450.5L323.9 450.6L324.4 450.8L324.8 450.8L325.2 451.0L325.6 451.2L326.0 451.4L326.4 451.6L326.8 451.8L327.2 452.0L327.6 452.2L327.9 452.4L328.3 452.6L328.5 453.4L328.8 453.6L329.2 453.9L329.5 454.1L329.7 454.5L330.1 454.7L330.4 455.0L330.7 455.3L331.0 455.5L331.3 455.8L331.6 456.1L332.0 456.1L332.3 456.4L332.5 456.7L332.9 456.8L333.1 457.2L333.4 457.5L333.6 457.8L333.7 458.3L333.9 458.6L334.1 458.9L334.3 459.2L334.5 459.6L334.7 459.9L334.9 460.2L334.9 460.7L335.1 461.0L335.3 461.3L335.5 461.6L335.7 461.9L335.9 462.2L336.0 462.5L336.2 462.8L336.3 463.1L336.5 463.5L336.6 463.8L336.7 464.1L336.8 464.5L336.9 464.8L337.0 465.2L337.1 465.5L337.2 465.8L337.3 466.2L337.3 466.5L337.4 466.8L337.5 467.2L337.7 467.4L337.7 467.8L337.8 468.1L337.8 468.4L337.9 468.8L338.0 469.1L338.0 469.4L338.1 469.8L338.1 470.1L338.1 470.4L338.1 470.8L338.1 471.1L338.1 471.4L338.1 471.8L338.1 472.1L343.6 472.3L343.5 472.8L343.4 473.2L343.6 473.6L343.5 474.1L343.3 474.5L343.2 474.9L342.5 475.3L342.4 475.7L342.2 476.1L342.0 476.4L341.8 476.8L341.6 477.2L341.4 477.6L341.4 478.0L341.2 478.4L341.0 478.7L340.8 479.1L340.6 479.4L340.4 479.8L340.1 480.1L340.0 480.5L339.8 480.8L339.5 481.1L339.3 481.5L339.1 481.8L338.8 482.1L338.5 482.4L338.5 482.8L338.3 483.1L338.0 483.4L337.7 483.7L337.4 484.0L337.1 484.2L336.8 484.5L336.5 484.7L336.2 485.0L335.9 485.2L335.6 485.4L335.2 485.6L334.9 485.8L334.6 486.0L334.3 486.3L334.0 486.5L333.7 486.7L333.4 486.8L332.9 486.8L332.6 487.0L332.3 487.2L332.0 487.4L331.7 487.6L331.3 487.7L331.0 487.9L330.7 488.0L330.3 488.1L330.0 488.2L329.7 488.4L329.4 488.6L329.1 488.7L328.7 488.8L328.4 488.9L328.0 489.0L327.7 489.0L327.4 489.1L327.0 489.1L326.7 489.2L326.3 489.2L326.0 489.2L325.6 489.3L325.3 489.3L325.0 489.4L324.6 489.3L324.3 489.3L324.0 489.4L323.6 489.4L323.3 489.4L323.0 489.4L322.6 489.4L322.3 489.4L322.0 489.4L321.8 494.4L321.3 494.4L320.9 494.3L320.5 494.2L320.1 494.1L319.6 494.3L319.2 494.2L318.8 494.0L318.4 493.9L318.0 493.7L317.6 493.5L317.2 493.3L316.8 493.4L316.4 493.2L316.1 493.0L315.7 492.8L315.4 492.4L315.0 492.2L314.7 492.0L314.3 491.9L313.9 491.7L313.6 491.5L313.3 491.2L312.9 491.0L312.6 490.8L312.3 490.5L311.9 490.3L311.6 490.1L311.3 489.8L311.1 489.5L310.8 489.2L310.5 488.9L310.2 488.7L310.1 488.3L309.8 488.0L309.6 487.7L309.3 487.4L309.0 487.1L308.8 486.8L308.6 486.5L308.4 486.2L308.2 485.9L308.0 485.5L307.8 485.2L307.5 485.0L307.3 484.7L307.2 484.4L307.0 484.0L307.0 483.6L306.8 483.3L306.7 483.0L306.4 482.7L306.2 482.4L306.1 482.1L306.0 481.7L305.9 481.4L305.8 481.1L305.7 480.7L305.6 480.4L305.5 480.1L305.4 479.7L305.3 479.4L305.2 479.1L305.1 478.7L305.0 478.4L305.0 478.1L305.0 477.7L304.9 477.4L304.9 477.0L304.7 476.7L304.7 476.4L304.7 476.1L304.6 475.7L304.7 475.4L304.7 475.1L304.6 474.7L304.7 474.4L304.6 474.1L304.6 473.7L304.6 473.4L299.8 473.2L299.9 472.8L300.0 472.3L299.4 471.9L299.5 471.5L299.6 471.0L299.8 470.6L299.8 470.2L300.0 469.8L300.1 469.4L299.9 468.9L300.1 468.5L300.3 468.1L300.5 467.8L300.7 467.4L300.9 467.0L301.2 466.6L301.0 466.1L301.2 465.8L301.5 465.4L301.7 465.1L302.2 464.8L302.4 464.5L302.7 464.2L303.0 463.8L303.5 463.7L303.7 463.4L304.0 463.1L304.5 462.9L304.7 462.6L305.0 462.3L305.3 462.0L305.4 461.7L305.7 461.4L306.0 461.1L306.4 461.0L306.7 460.7L307.0 460.5L307.3 460.3L307.5 460.0L307.8 459.8L308.1 459.6L308.4 459.4L308.8 459.2L309.1 459.0L309.4 458.8L309.6 458.4L309.9 458.3L310.3 458.1L310.7 458.1L311.0 458.0L311.3 457.8L311.7 457.7L312.0 457.5L312.3 457.4L312.7 457.3L313.0 457.1L313.4 457.2L313.7 457.1L314.1 457.0L314.4 456.8L314.7 456.7L315.0 456.6L315.4 456.6L315.7 456.5L316.0 456.5L316.4 456.4L316.7 456.2L317.0 456.2L317.3 456.1L317.7 456.1L318.0 456.1L318.3 456.0L318.7 456.0L319.0 455.9L319.3 455.9L319.7 455.9L320.0 455.9L320.3 455.9L320.7 455.9L320.9 449.9L321.3 449.6Z M321.3 464.2L321.2 464.0L320.7 457.7L320.4 457.7L320.1 457.7L319.9 457.8L319.6 457.8L319.3 457.9L319.0 457.9L318.7 458.0L318.4 458.1L318.1 458.2L317.9 458.3L317.6 458.4L317.3 458.5L317.0 458.5L316.7 458.6L316.5 458.8L316.2 459.0L316.0 459.1L315.7 459.3L315.5 459.4L315.2 459.5L315.0 459.7L314.8 459.9L314.6 460.2L314.4 460.4L314.2 460.6L314.0 460.8L313.8 461.0L313.6 461.2L313.4 461.4L313.2 461.6L313.2 462.0L313.0 462.2L312.8 462.4L312.6 462.5L312.4 462.7L312.3 462.9L312.1 463.2L312.0 463.4L311.9 463.7L311.7 463.9L311.6 464.1L311.5 464.3L311.4 464.6L311.3 464.8L311.3 465.1L311.2 465.4L311.1 465.6L310.9 465.8L310.9 466.0L310.8 466.3L310.8 466.6L310.9 466.9L310.9 467.2L310.8 467.4L311.1 467.8L311.1 468.0L311.1 468.3L311.1 468.5L311.4 468.9L311.4 469.1L311.5 469.3L311.5 469.6L311.1 469.7L311.2 469.9L311.2 470.1L311.3 470.3L311.4 470.6L311.4 470.8L311.5 471.0L311.2 471.1L311.3 471.4L311.4 471.6L311.3 471.8L311.4 472.0L311.5 472.2L311.6 472.4L311.0 472.5L311.1 472.8L311.2 472.9L306.1 473.3L306.1 473.6L306.2 473.9L306.2 474.2L306.3 474.5L306.3 474.8L306.4 475.1L306.6 475.4L306.7 475.7L306.8 475.9L306.9 476.2L306.9 476.5L307.0 476.8L307.1 477.1L307.3 477.3L307.5 477.6L307.6 477.8L307.7 478.1L307.9 478.3L308.0 478.6L308.2 478.8L308.4 479.0L308.6 479.3L308.7 479.5L308.9 479.7L309.2 479.9L309.3 480.1L309.6 480.3L309.8 480.5L309.8 480.8L310.0 481.0L310.2 481.1L310.6 481.2L310.8 481.4L311.1 481.5L311.3 481.7L311.4 481.9L311.7 482.1L311.9 482.2L312.2 482.2L312.4 482.4L312.7 482.5L312.9 482.6L313.1 482.7L313.4 482.8L313.6 482.9L313.9 483.0L314.2 483.0L314.5 483.0L314.7 483.1L315.0 483.1L315.2 483.2L315.5 483.2L315.7 483.2L315.9 483.3L316.2 483.3L316.4 483.3L316.7 483.4L316.9 483.4L317.2 483.4L317.4 483.4L317.6 483.5L317.8 483.5L318.1 483.5L318.4 483.3L318.6 483.2L318.8 483.2L319.1 483.1L319.2 483.3L319.5 483.3L319.7 483.2L319.9 483.1L320.1 483.0L320.3 482.9L320.5 482.8L320.7 483.1L320.9 483.0L321.1 482.9L321.3 482.8L321.5 482.8L321.9 488.0L322.2 488.0L322.5 487.9L322.8 487.9L323.1 487.8L323.4 487.8L323.7 487.7L324.0 487.6L324.3 487.5L324.5 487.3L324.8 487.2L325.1 487.1L325.4 487.0L325.6 486.8L325.9 486.7L326.1 486.6L326.3 486.3L326.6 486.2L326.8 486.0L327.1 485.9L327.3 485.7L327.5 485.5L327.7 485.3L328.0 485.3L328.2 485.1L328.5 484.9L328.7 484.7L328.9 484.5L329.1 484.3L329.2 484.1L329.4 483.9L329.7 483.8L329.8 483.5L330.0 483.3L330.0 482.9L330.1 482.7L330.3 482.4L330.4 482.2L330.6 482.1L330.8 481.8L330.9 481.6L330.9 481.2L331.0 481.0L331.1 480.7L331.2 480.5L331.2 480.2L331.3 480.0L331.4 479.7L331.4 479.5L331.5 479.2L331.5 479.0L331.6 478.7L331.9 478.7L331.9 478.4L331.9 478.1L332.0 477.9L332.0 477.7L332.0 477.4L332.0 477.2L332.1 477.0L332.1 476.7L332.1 476.5L332.1 476.2L332.1 476.0L332.0 475.8L332.0 475.5L332.1 475.3L332.1 475.1L332.0 474.9L332.0 474.6L331.8 474.4L331.7 474.2L331.6 474.0L331.0 473.7L330.9 473.5L330.8 473.3L330.7 473.1L331.0 472.9L330.9 472.8L330.8 472.6L336.4 472.2L336.4 471.9L336.4 471.6L336.3 471.3L336.3 471.0L336.2 470.7L336.1 470.4L336.1 470.1L336.0 469.8L335.9 469.6L335.8 469.3L335.7 469.0L335.6 468.7L335.5 468.4L335.4 468.2L335.4 467.9L335.2 467.6L335.1 467.4L334.9 467.1L334.7 466.9L334.6 466.6L334.4 466.4L334.2 466.2L334.0 466.0L333.8 465.8L333.6 465.6L333.4 465.4L333.2 465.2L333.0 465.0L332.8 464.8L332.6 464.6L332.4 464.4L332.2 464.1L332.0 464.0L331.8 463.8L331.6 463.7L331.2 463.6L330.9 463.5L330.7 463.4L330.4 463.3L330.2 463.2L329.9 463.1L329.7 463.0L329.2 463.1L329.0 463.0L328.7 463.0L328.5 462.9L328.3 462.7L328.1 462.6L327.8 462.6L327.7 462.3L327.5 462.3L327.2 462.2L327.0 462.2L326.7 462.2L326.5 462.1L326.2 462.1L325.9 462.3L325.7 462.3L325.4 462.3L325.2 462.3L324.8 462.9L324.5 462.9L324.3 463.0L324.1 463.0L323.9 463.0L323.6 463.1L323.4 463.2L323.2 463.2L323.0 463.3L322.8 463.4L322.6 463.3L322.4 463.4L322.2 463.5L322.0 463.6L321.9 463.8L321.7 464.0L321.5 464.1L321.3 464.2Z" fill="#b9efc0" fill-rule="evenodd" opacity="1"/><circle cx="382.16" cy="472.75" r="14.6" fill="none" stroke="#b9efc0" stroke-width="0.6" opacity="1"/><path d="M382.2 451.7L382.7 451.7L383.3 451.7L383.8 451.8L384.3 452.5L384.8 452.6L385.3 452.7L385.9 452.4L386.5 452.5L387.0 452.7L387.5 452.8L387.9 453.2L388.5 453.4L389.0 453.5L389.6 453.5L390.1 453.7L390.6 453.9L391.1 454.1L391.6 454.3L392.0 454.6L392.5 454.8L393.0 455.1L393.5 455.3L393.9 455.6L394.4 455.9L394.8 456.3L395.2 456.6L395.7 456.9L395.9 457.5L396.3 457.8L396.7 458.2L397.1 458.6L397.4 459.0L397.8 459.4L398.1 459.8L398.3 460.3L398.7 460.8L399.0 461.2L399.3 461.6L399.6 462.1L399.9 462.5L400.1 463.0L400.7 463.3L400.9 463.8L401.2 464.3L401.6 464.7L401.8 465.2L402.0 465.7L401.8 466.4L401.9 466.9L402.1 467.4L402.2 467.9L402.2 468.5L402.3 469.0L402.4 469.5L402.0 470.1L402.0 470.7L402.1 471.2L402.1 471.7L402.4 472.2L402.4 472.8L402.4 473.3L402.9 473.8L402.9 474.4L402.8 474.9L402.8 475.5L403.1 476.1L403.0 476.6L402.9 477.2L403.0 477.7L402.8 478.3L402.7 478.8L402.1 479.2L401.9 479.7L401.7 480.3L401.5 480.8L401.4 481.3L401.2 481.8L401.0 482.3L400.2 482.6L400.0 483.0L399.7 483.5L399.4 483.9L399.0 484.3L398.7 484.8L398.4 485.2L398.0 485.6L397.7 486.0L397.3 486.4L397.0 486.8L397.0 487.5L396.6 487.9L396.2 488.3L395.8 488.7L395.4 489.1L395.0 489.4L394.2 489.4L393.8 489.7L393.4 490.0L392.9 490.3L392.3 490.2L391.8 490.5L391.3 490.7L390.8 490.8L390.3 491.0L389.8 491.2L389.3 491.4L388.9 491.8L388.4 491.9L387.9 492.1L387.5 492.7L387.0 492.8L386.4 492.9L385.9 493.0L385.4 493.1L384.8 493.2L384.3 493.2L383.8 493.8L383.3 493.8L382.7 493.8L382.2 493.9L381.6 493.9L381.1 493.9L380.5 493.8L380.0 493.7L379.4 493.6L378.9 493.5L378.4 493.0L377.9 492.9L377.3 492.8L376.8 492.7L376.4 492.2L375.9 492.1L375.4 491.9L374.9 491.7L374.4 491.5L373.9 491.3L373.4 491.1L372.9 490.9L372.5 490.6L372.0 490.3L371.4 490.4L370.9 490.1L370.5 489.8L370.0 489.5L369.5 489.2L369.1 488.9L368.7 488.5L368.2 488.3L367.8 487.9L367.4 487.5L367.5 486.7L367.1 486.3L366.8 485.9L366.4 485.5L365.8 485.3L365.5 484.9L365.2 484.4L364.7 484.1L364.4 483.6L364.1 483.2L363.8 482.7L363.5 482.2L363.3 481.8L363.1 481.3L363.3 480.6L363.1 480.1L362.9 479.6L363.3 478.9L363.2 478.4L363.0 477.9L362.9 477.4L362.5 476.9L362.4 476.4L362.3 475.9L362.3 475.4L362.2 474.8L362.1 474.3L362.1 473.8L362.1 473.3L362.1 472.8L362.1 472.2L362.1 471.7L362.2 471.2L362.2 470.7L362.3 470.1L361.6 469.5L361.7 469.0L361.8 468.4L361.7 467.8L361.8 467.3L362.0 466.8L362.2 466.3L362.4 465.8L362.6 465.2L362.8 464.7L363.2 464.3L363.4 463.8L363.7 463.3L364.2 463.0L364.4 462.5L364.7 462.1L365.0 461.6L365.2 461.1L365.5 460.6L365.8 460.2L366.4 460.0L366.8 459.6L367.1 459.2L367.5 458.8L367.6 458.1L367.9 457.8L368.3 457.4L368.5 456.8L369.0 456.5L369.4 456.1L369.9 455.9L370.3 455.6L370.8 455.3L371.3 455.0L371.7 454.7L372.2 454.5L372.7 454.2L375.5 458.8L375.9 458.6L376.2 458.4L376.6 458.3L377.0 458.1L377.4 458.0L377.8 457.9L378.1 457.8L378.5 457.7L378.9 457.6L379.3 457.5L379.7 457.4L380.1 457.4L380.5 457.3L380.9 457.3L381.3 457.3L381.6 451.8L382.2 451.7Z M382.2 463.4L381.9 463.3L381.4 457.9L381.0 457.9L380.6 457.9L380.2 458.0L379.8 458.0L379.4 458.1L379.1 458.2L378.7 458.3L378.3 458.4L377.9 458.5L377.6 458.6L377.2 458.7L376.8 458.8L376.5 459.0L376.1 459.1L375.7 459.3L377.8 464.2L377.6 464.3L377.4 464.5L377.2 464.6L377.0 464.8L376.8 464.9L376.6 465.0L376.4 465.3L376.2 465.4L376.0 465.6L375.6 465.5L375.5 465.7L375.3 465.9L374.8 465.8L374.6 466.0L374.4 466.2L374.3 466.4L374.4 466.8L374.2 467.0L374.1 467.2L373.8 467.3L373.7 467.6L373.6 467.8L373.4 468.0L373.5 468.4L373.4 468.6L373.3 468.8L373.4 469.1L373.3 469.4L373.3 469.6L373.2 469.8L373.2 470.1L373.1 470.3L373.1 470.6L372.7 470.7L372.7 471.0L372.6 471.2L371.9 471.4L371.9 471.7L371.8 471.9L371.8 472.2L371.8 472.5L371.8 472.8L371.8 473.0L371.9 473.3L371.9 473.6L371.9 473.8L371.9 474.1L372.0 474.4L372.0 474.6L372.1 474.9L371.9 475.2L371.9 475.5L372.0 475.8L372.1 476.0L372.8 476.1L372.9 476.3L373.0 476.6L373.5 476.6L373.6 476.8L373.7 477.1L373.8 477.3L373.9 477.5L374.0 477.7L374.1 478.0L374.1 478.3L374.2 478.5L374.4 478.7L374.3 479.2L374.4 479.4L374.6 479.6L374.8 479.8L375.4 479.5L375.6 479.7L375.8 479.8L375.9 480.1L376.1 480.3L376.3 480.4L376.5 480.6L376.6 480.8L376.9 480.9L377.1 481.1L377.1 481.5L377.3 481.6L377.6 481.7L377.8 481.9L378.0 482.0L378.3 482.1L378.5 482.2L378.8 482.3L379.0 482.3L379.3 482.4L379.6 482.2L379.9 482.3L380.1 482.3L380.4 482.4L380.7 482.0L380.9 482.0L381.2 482.1L381.4 482.0L381.7 482.0L381.9 482.0L382.2 482.0L382.4 482.1L382.6 482.1L382.9 482.0L383.2 482.5L383.4 482.5L383.7 482.4L383.9 482.4L384.2 482.3L384.4 482.3L384.7 482.2L385.1 482.6L385.3 482.5L385.6 482.4L385.9 482.4L386.1 482.3L386.4 482.2L386.6 482.1L386.8 481.9L387.0 481.7L387.3 481.6L387.3 481.1L387.5 481.0L387.7 480.9L387.9 480.7L387.9 480.2L388.1 480.0L388.2 479.9L388.5 479.8L388.7 479.6L388.9 479.5L389.4 479.6L389.6 479.4L389.7 479.2L389.9 479.0L390.0 478.8L390.2 478.6L390.3 478.4L390.4 478.1L390.6 477.9L390.7 477.7L390.8 477.4L390.5 477.0L390.6 476.8L390.7 476.5L390.9 476.4L391.0 476.1L391.1 475.9L391.1 475.7L390.8 475.3L390.9 475.1L390.9 474.9L391.2 474.7L391.2 474.4L391.3 474.2L391.7 474.0L391.7 473.8L391.7 473.5L391.7 473.3L392.3 473.0L392.3 472.8L392.3 472.5L392.6 472.2L392.6 471.9L392.5 471.7L392.5 471.4L392.0 471.2L391.9 470.9L391.9 470.7L391.7 470.5L391.6 470.2L391.5 470.0L391.4 469.7L391.0 469.6L390.9 469.4L390.8 469.2L390.9 468.8L390.8 468.6L390.7 468.4L390.9 468.0L390.8 467.8L390.6 467.6L390.5 467.3L390.4 467.1L390.3 466.9L390.1 466.7L389.8 466.5L389.7 466.3L389.5 466.1L389.3 466.0L389.1 465.8L388.9 465.6L388.7 465.4L388.4 465.4L388.2 465.3L388.0 465.1L387.8 465.0L387.6 464.8L387.4 464.7L387.2 464.5L387.0 464.3L386.8 464.2L386.6 464.1L386.3 464.0L386.1 463.9L385.9 463.8L385.6 463.7L385.5 463.3L385.3 463.2L385.0 463.1L384.7 463.4L384.4 463.3L384.2 463.2L383.9 463.2L383.7 462.8L383.5 462.8L383.2 462.8L382.9 463.4L382.7 463.4L382.4 463.4L382.2 463.4Z" fill="#b9efc0" fill-rule="evenodd" opacity="1"/><circle cx="442.99" cy="472.75" r="13.4" fill="none" stroke="#b9efc0" stroke-width="0.7" opacity="1"/><path d="M443.0 457.9L443.3 457.9L443.6 457.9L443.9 457.9L444.2 457.9L444.5 457.9L444.9 458.0L445.2 458.0L445.5 458.1L445.8 458.1L446.9 454.5L447.3 454.6L447.6 454.7L448.1 454.6L448.4 454.7L448.8 454.8L449.2 455.0L449.6 455.1L449.9 455.2L450.3 455.4L449.1 459.1L449.3 459.3L449.6 459.4L449.9 459.5L450.2 459.7L450.4 459.8L450.7 460.0L451.0 460.2L451.2 460.3L451.5 460.5L454.4 457.0L454.7 457.3L455.0 457.5L455.4 457.8L455.7 458.1L456.0 458.3L456.3 458.6L456.6 458.9L456.3 459.7L456.6 459.9L456.9 460.2L457.1 460.5L457.4 460.8L457.6 461.1L457.9 461.4L458.1 461.8L458.3 462.1L458.6 462.4L458.8 462.7L459.0 463.1L455.9 465.3L456.0 465.6L456.2 465.8L456.3 466.1L456.5 466.4L456.6 466.7L456.7 467.0L456.8 467.3L457.0 467.6L457.1 467.8L460.8 467.0L461.0 467.3L461.1 467.7L461.3 468.1L461.4 468.4L461.5 468.8L461.5 469.2L461.6 469.6L461.7 470.0L461.7 470.4L461.8 470.8L461.8 471.2L457.9 471.8L457.9 472.1L457.9 472.4L457.9 472.8L457.9 473.1L457.9 473.4L457.9 473.7L462.3 474.4L462.2 474.8L462.2 475.2L462.1 475.6L462.1 476.0L462.0 476.4L461.9 476.8L461.8 477.2L461.7 477.6L461.9 478.0L461.8 478.4L461.6 478.8L461.5 479.2L461.4 479.6L461.2 480.0L461.1 480.3L460.9 480.7L460.7 481.1L460.6 481.5L460.4 481.8L460.2 482.2L460.1 482.6L459.8 483.0L459.6 483.3L459.4 483.7L459.2 484.0L458.9 484.3L458.7 484.7L458.4 485.0L458.2 485.3L457.9 485.6L457.6 485.9L457.4 486.2L457.1 486.5L456.9 486.9L456.6 487.2L456.3 487.5L456.0 487.8L455.6 488.0L455.3 488.3L455.0 488.6L454.7 488.8L454.3 489.0L454.0 489.3L453.6 489.5L453.3 489.7L452.6 489.4L452.3 489.6L451.9 489.8L451.6 490.0L451.2 490.2L450.8 490.3L450.5 490.5L450.1 490.7L449.7 490.8L449.3 490.9L448.9 491.1L448.6 491.2L448.2 491.3L447.8 491.6L447.4 491.7L447.0 491.8L446.6 491.8L446.2 491.9L445.8 492.0L445.4 492.0L445.0 492.1L444.6 492.1L444.2 492.2L443.8 492.2L443.4 492.2L443.0 487.6L442.7 487.6L442.4 487.6L442.1 487.6L441.7 487.6L441.4 487.6L441.1 487.5L440.8 487.5L440.5 487.4L440.2 487.4L439.9 487.3L439.1 489.2L438.8 489.2L438.2 489.8L437.9 489.7L437.5 489.6L437.1 489.5L436.8 489.4L436.4 489.3L436.1 489.2L435.7 489.1L435.4 488.9L435.0 488.8L434.7 488.6L434.3 488.5L434.1 488.2L433.7 488.0L433.4 487.8L433.1 487.7L432.8 487.5L432.4 487.3L432.1 487.1L431.8 486.8L433.5 484.2L433.3 484.0L433.0 483.8L432.8 483.6L432.6 483.4L432.3 483.2L432.1 482.9L431.9 482.7L431.7 482.5L431.5 482.2L429.2 483.7L429.0 483.4L428.8 483.1L428.5 482.8L428.3 482.5L428.1 482.2L427.9 481.9L426.8 482.1L426.6 481.8L426.4 481.4L426.2 481.1L426.0 480.7L425.8 480.4L425.7 480.0L425.5 479.7L425.3 479.3L425.2 479.0L425.0 478.6L424.9 478.2L424.8 477.8L424.7 477.5L424.5 477.1L428.4 475.8L428.4 475.5L428.3 475.2L428.2 474.9L428.2 474.6L428.2 474.3L428.1 474.0L428.1 473.7L428.1 473.4L428.1 473.1L424.1 472.8L424.1 472.4L424.1 472.0L424.1 471.6L424.1 471.2L424.1 470.8L424.2 470.4L424.2 470.0L424.2 469.6L424.3 469.2L424.3 468.8L424.4 468.4L424.5 468.0L424.6 467.6L424.7 467.2L424.8 466.8L424.9 466.4L425.0 466.1L425.1 465.7L425.3 465.3L425.4 464.9L425.6 464.5L429.6 466.1L429.8 465.8L429.9 465.6L430.1 465.3L430.2 465.0L430.4 464.8L430.6 464.5L430.8 464.2L430.9 464.0L431.1 463.7L431.3 463.5L428.3 460.6L428.6 460.3L428.8 460.0L429.1 459.7L429.3 459.4L429.7 459.2L430.0 458.9L430.2 458.6L430.5 458.3L430.8 458.0L431.1 457.8L431.4 457.5L431.7 457.3L432.0 457.0L432.4 456.8L432.7 456.5L433.0 456.3L433.1 455.6L433.4 455.4L433.8 455.2L434.2 455.0L436.6 459.3L436.9 459.1L437.2 459.0L437.5 458.9L437.8 458.8L438.1 458.7L438.4 458.6L438.7 458.5L439.0 458.4L439.3 458.3L439.6 458.2L438.9 453.6L440.2 458.1L440.5 458.1L440.8 458.0L441.1 458.0L441.4 457.9L441.7 457.9L442.1 457.9L442.4 457.9L442.7 457.9L443.0 457.9Z M443.0 458.4L442.7 458.5L442.4 458.5L442.1 458.5L441.8 458.5L441.5 458.5L441.2 458.6L440.9 458.6L440.6 458.7L440.3 458.7L441.0 463.4L439.7 458.8L439.4 458.9L439.1 459.0L438.9 459.1L438.6 459.1L438.3 459.2L438.0 459.3L437.7 459.5L437.4 459.6L437.2 459.7L436.9 459.8L438.8 464.4L438.7 464.4L438.5 464.5L438.3 464.6L437.8 464.2L437.6 464.3L437.5 464.4L437.3 464.5L437.1 464.6L436.9 464.7L436.7 464.8L436.5 465.0L436.4 465.1L436.2 465.2L436.0 465.3L435.9 465.5L435.8 465.7L435.6 465.8L435.5 466.0L435.3 466.1L435.2 466.3L431.8 463.9L431.6 464.1L431.4 464.3L431.2 464.6L431.1 464.8L430.9 465.1L430.8 465.3L430.6 465.6L430.5 465.9L430.3 466.1L430.2 466.4L434.0 468.5L433.9 468.7L433.8 468.9L433.7 469.1L433.6 469.3L433.5 469.4L433.4 469.6L433.3 469.8L433.3 470.0L433.2 470.2L433.2 470.4L433.1 470.6L433.0 470.8L433.0 471.1L432.9 471.3L432.9 471.5L432.8 471.7L432.8 471.9L432.7 472.1L432.7 472.3L432.7 472.5L432.7 472.8L428.7 473.0L428.7 473.3L428.7 473.6L428.7 473.9L428.8 474.2L428.8 474.5L428.8 474.8L428.9 475.1L428.9 475.4L429.0 475.7L433.0 475.1L433.0 475.3L433.1 475.5L433.1 475.7L433.2 475.9L433.2 476.2L433.3 476.4L433.3 476.6L433.4 476.8L433.5 477.0L433.5 477.2L433.6 477.4L433.7 477.6L433.8 477.8L433.9 478.0L433.1 478.7L433.2 478.9L433.4 479.2L433.5 479.4L433.6 479.6L433.7 479.8L433.9 480.0L432.0 481.9L432.2 482.1L432.4 482.3L432.6 482.5L432.8 482.8L433.0 483.0L433.2 483.2L433.4 483.4L433.6 483.6L433.9 483.8L436.0 481.5L436.2 481.7L436.4 481.9L436.6 482.0L436.7 482.2L436.9 482.3L437.1 482.4L437.3 482.6L437.6 482.6L437.8 482.7L438.0 482.9L438.2 483.0L438.4 483.1L438.6 483.2L438.8 483.3L439.0 483.4L439.2 483.5L439.5 483.6L439.7 483.7L439.9 483.8L439.9 484.6L440.2 484.7L440.0 486.7L440.3 486.8L440.6 486.8L440.9 486.9L441.2 486.9L441.5 487.0L441.8 487.0L442.1 487.0L442.4 487.0L442.7 487.0L443.0 487.1L443.2 482.5L443.4 482.5L443.6 482.5L443.8 482.5L444.0 482.5L444.2 482.4L444.4 482.4L444.6 482.4L444.8 482.3L445.0 482.3L445.2 482.3L445.4 482.2L445.7 482.3L445.9 482.3L446.1 482.2L446.3 482.1L446.5 482.1L446.6 482.0L446.8 481.9L447.0 481.8L447.2 481.7L447.4 481.6L447.6 481.6L447.8 481.5L448.0 481.4L447.8 480.8L448.0 480.6L448.2 480.5L448.3 480.4L448.5 480.3L448.6 480.2L448.8 480.1L449.0 480.0L449.1 479.8L449.3 479.7L449.4 479.6L449.5 479.4L449.8 479.4L449.9 479.2L450.0 479.1L450.2 479.0L450.3 478.8L450.4 478.6L450.6 478.5L450.7 478.3L450.8 478.2L450.9 478.0L451.0 477.8L451.1 477.7L451.2 477.5L451.4 477.4L451.5 477.2L451.6 477.0L451.7 476.8L451.7 476.7L451.8 476.5L451.9 476.3L452.0 476.1L452.0 475.9L452.1 475.7L452.2 475.5L452.2 475.3L452.5 475.2L452.6 475.0L452.6 474.8L452.7 474.6L452.7 474.4L452.7 474.2L452.8 474.0L452.8 473.8L452.8 473.6L457.3 473.6L457.3 473.3L457.3 473.0L457.3 472.8L457.3 472.5L457.3 472.2L457.3 471.9L453.3 471.9L453.2 471.7L453.2 471.5L453.2 471.2L453.2 471.0L453.1 470.8L453.1 470.6L453.0 470.4L453.0 470.2L453.0 469.9L453.0 469.7L452.9 469.5L456.5 468.0L456.4 467.8L456.3 467.5L456.2 467.2L456.1 466.9L455.9 466.7L455.8 466.4L455.7 466.1L455.5 465.9L455.4 465.6L452.0 467.3L451.9 467.1L451.7 466.9L451.6 466.8L451.5 466.6L451.4 466.4L451.2 466.2L451.1 466.1L450.9 465.9L450.8 465.7L450.6 465.6L450.5 465.4L449.8 465.8L449.7 465.6L449.5 465.5L449.4 465.3L449.2 465.2L449.1 465.1L448.9 465.0L448.7 464.8L451.2 461.0L450.9 460.8L450.7 460.7L450.4 460.5L450.1 460.4L449.9 460.2L449.6 460.1L449.3 459.9L449.1 459.8L448.8 459.7L447.0 463.2L446.8 463.1L446.6 463.0L446.4 463.0L446.2 462.9L446.0 462.8L445.8 462.8L445.6 462.6L445.4 462.5L445.2 462.5L445.7 458.7L445.4 458.7L445.1 458.6L444.8 458.6L444.5 458.5L444.2 458.5L443.9 458.5L443.6 458.5L443.3 458.5L443.0 458.4Z" fill="#b9efc0" fill-rule="evenodd" opacity="1"/><circle cx="503.82" cy="472.75" r="14.6" fill="none" stroke="#b9efc0" stroke-width="0.7" opacity="1"/><path d="M503.8 459.6L503.8 454.3M505.7 459.4L506.2 455.4M507.6 459.2L508.5 455.9M509.3 460.0L511.2 455.8M510.4 461.9L513.5 456.8M512.0 462.7L514.7 459.3M513.0 464.2L516.8 460.6M515.0 464.9L520.8 460.8M515.1 466.9L522.8 462.9M516.4 468.3L520.3 466.9M515.9 470.2L524.0 468.6M517.4 471.8L521.7 471.5M516.1 473.6L524.7 474.2M517.5 475.6L521.0 476.3M516.5 477.3L523.5 479.7M514.9 478.5L520.7 481.5M514.3 480.2L520.8 484.8M513.1 481.4L519.5 487.4M511.9 482.7L517.2 489.2M511.1 484.7L514.2 489.9M508.7 484.1L512.4 492.6M507.3 485.2L508.9 490.9M505.6 485.8L506.2 489.8M503.8 486.3L503.8 493.0M502.1 485.1L501.2 491.7M500.2 485.5L499.0 489.9M498.5 485.0L496.8 488.8M497.1 483.8L492.6 491.1M496.0 482.4L492.9 486.1M494.2 481.7L488.9 486.7M492.8 480.6L488.7 483.4M492.4 478.7L487.8 481.0M492.2 476.9L487.5 478.6M491.2 475.4L486.6 476.3M490.4 473.7L483.9 474.1M490.6 471.8L485.4 471.5M491.8 470.3L485.5 468.9M491.5 468.4L484.7 465.9M492.1 466.7L485.7 463.4M492.3 464.6L489.2 462.5M494.7 464.2L487.8 457.8M495.7 462.7L492.7 459.1M502.1 460.5L501.0 451.9" stroke="#b9efc0" stroke-width="1.0" fill="none"/><path d="M564.65 447.75A25 25 0 0 1 564.65 497.75Z" fill="#9af0a2" opacity="0.75"/><circle cx="564.65" cy="472.75" r="25" fill="none" stroke="#9af0a2" stroke-width="0.7" opacity="0.9"/><circle cx="564.65" cy="472.75" r="17.4" fill="none" stroke="#b9efc0" stroke-width="0.7" opacity="1"/><path d="M564.6 456.1L565.1 456.2L565.5 456.2L566.0 456.2L566.4 456.2L566.8 456.3L567.2 456.4L567.7 456.4L568.1 456.5L568.5 456.6L568.9 456.7L569.4 456.8L569.8 457.0L570.2 457.1L570.6 457.3L571.0 457.4L571.4 457.6L571.8 457.8L572.2 458.0L572.6 458.2L572.9 458.4L573.3 458.6L573.7 458.8L574.1 459.1L574.4 459.3L574.8 459.6L575.1 459.8L575.4 460.1L575.8 460.4L576.1 460.7L576.4 461.0L576.7 461.3L577.0 461.6L577.3 462.0L577.6 462.3L577.8 462.6L578.1 463.0L578.3 463.3L578.6 463.7L578.8 464.1L579.0 464.4L579.2 464.8L579.4 465.2L579.6 465.6L579.8 466.0L580.0 466.4L580.1 466.8L580.3 467.2L580.4 467.6L580.6 468.0L580.7 468.5L580.8 468.9L580.9 469.3L581.0 469.7L581.0 470.2L581.1 470.6L581.2 471.0L581.2 471.4L581.2 471.9L581.2 472.3L581.2 472.8L581.2 473.2L581.2 473.6L581.2 474.1L581.2 474.5L581.1 474.9L581.0 475.3L581.0 475.8L580.9 476.2L580.8 476.6L580.7 477.0L580.6 477.5L580.4 477.9L580.3 478.3L580.1 478.7L580.0 479.1L579.8 479.5L579.6 479.9L579.4 480.3L579.2 480.7L579.0 481.1L578.8 481.4L578.6 481.8L578.3 482.2L578.1 482.5L577.8 482.9L577.6 483.2L577.3 483.5L577.0 483.9L576.7 484.2L576.4 484.5L576.1 484.8L575.8 485.1L575.4 485.4L575.1 485.7L574.8 485.9L574.4 486.2L574.1 486.4L573.7 486.7L573.3 486.9L572.9 487.1L572.6 487.3L572.2 487.5L571.8 487.7L571.4 487.9L571.0 488.1L570.6 488.2L570.2 488.4L569.8 488.5L569.4 488.7L568.9 488.8L568.5 488.9L568.1 489.0L567.7 489.1L567.2 489.1L566.8 489.2L566.4 489.3L566.0 489.3L565.5 489.3L565.1 489.3L564.6 489.4L564.1 492.9L563.6 492.9L563.1 492.8L562.5 492.8L562.0 492.7L561.5 492.6L561.0 492.5L560.5 492.4L559.9 492.3L559.4 492.2L558.9 492.1L559.5 488.5L559.1 488.4L558.7 488.2L558.3 488.1L557.9 487.9L557.5 487.7L557.1 487.5L556.7 487.3L556.3 487.1L556.0 486.9L555.6 486.7L555.2 486.4L553.2 488.5L552.8 488.2L552.4 487.9L552.0 487.6L551.6 487.2L551.2 486.9L550.9 486.5L550.5 486.2L550.2 485.8L549.8 485.4L549.5 485.0L549.2 484.6L549.2 484.0L548.9 483.6L548.6 483.2L548.3 482.8L548.1 482.3L547.8 481.9L547.6 481.4L547.4 481.0L547.2 480.5L547.0 480.1L546.8 479.6L546.6 479.1L548.9 477.9L548.7 477.5L548.6 477.0L548.5 476.6L548.4 476.2L548.3 475.8L548.3 475.3L548.2 474.9L548.1 474.5L548.1 474.1L548.1 473.6L548.1 473.2L545.0 472.8L545.0 472.2L545.0 471.7L545.1 471.2L545.1 470.7L545.2 470.2L545.2 469.7L545.3 469.2L545.4 468.7L545.5 468.2L545.7 467.7L545.8 467.2L546.8 466.9L546.9 466.5L547.1 466.0L547.3 465.6L547.5 465.1L547.7 464.7L547.9 464.2L548.1 463.8L548.4 463.4L548.6 462.9L548.9 462.5L549.2 462.1L551.2 463.0L551.5 462.6L551.7 462.3L552.0 462.0L552.3 461.6L552.6 461.3L552.9 461.0L553.2 460.7L553.5 460.4L553.9 460.1L554.2 459.8L554.5 459.6L553.4 457.2L553.8 456.9L554.2 456.6L554.6 456.4L555.0 456.1L555.5 455.9L555.9 455.6L556.4 455.4L556.8 455.2L557.3 455.0L557.8 454.8L558.2 454.7L558.4 453.6L558.9 453.4L559.4 453.3L559.9 453.1L560.5 453.0L561.0 452.9L561.5 452.8L562.0 452.8L562.5 452.7L563.1 452.7L563.8 456.2L564.2 456.2L564.6 456.1Z M564.6 456.6L564.2 456.6L563.8 456.6L563.7 460.1L563.3 460.2L563.0 460.2L562.7 460.3L562.3 460.3L562.0 460.4L561.7 460.5L561.4 460.5L561.1 460.6L560.7 460.7L560.1 459.9L559.8 460.1L559.4 460.2L559.1 460.3L558.8 460.5L558.5 460.6L558.2 460.8L557.9 461.0L557.5 461.2L557.2 461.3L556.9 461.5L556.7 461.7L554.8 459.9L554.5 460.2L554.1 460.4L553.8 460.7L553.5 461.0L553.2 461.3L552.9 461.6L552.6 461.9L552.3 462.2L552.1 462.6L551.8 462.9L551.5 463.2L553.1 464.8L552.9 465.1L552.7 465.4L552.5 465.8L552.3 466.1L552.2 466.4L552.0 466.7L551.9 467.1L551.7 467.4L551.6 467.7L551.5 468.1L551.3 468.4L552.0 469.0L551.9 469.3L551.9 469.7L551.8 470.0L551.7 470.4L551.7 470.7L551.6 471.0L551.6 471.4L551.5 471.7L551.5 472.1L551.5 472.4L551.5 472.8L548.5 473.2L548.5 473.6L548.5 474.0L548.5 474.4L548.6 474.9L548.6 475.3L548.7 475.7L548.8 476.1L548.9 476.5L549.0 476.9L549.1 477.4L549.2 477.8L551.8 477.3L551.9 477.6L552.0 478.0L552.2 478.3L552.3 478.6L552.5 478.9L552.7 479.3L552.8 479.6L553.0 479.9L553.2 480.2L553.4 480.5L553.6 480.8L554.1 480.9L554.3 481.1L554.5 481.4L554.8 481.7L555.0 481.9L555.2 482.2L555.5 482.4L555.7 482.6L556.0 482.9L556.3 483.1L556.5 483.3L556.8 483.5L555.5 486.1L555.8 486.3L556.2 486.6L556.5 486.8L556.9 487.0L557.3 487.2L557.7 487.4L558.1 487.5L558.5 487.7L558.8 487.9L559.2 488.0L559.6 488.2L561.1 484.9L561.4 485.0L561.7 485.1L562.0 485.1L562.3 485.2L562.7 485.3L563.0 485.3L563.3 485.3L563.7 485.4L564.0 485.4L564.3 485.4L564.6 488.9L565.1 488.9L565.5 488.9L565.9 488.9L566.3 488.9L566.8 488.8L567.2 488.8L567.6 488.7L568.0 488.6L568.4 488.5L568.8 488.4L569.3 488.3L569.7 488.2L570.1 488.0L570.5 487.9L570.8 487.7L571.2 487.5L571.6 487.4L572.0 487.2L572.4 487.0L572.7 486.8L573.1 486.6L573.5 486.3L573.8 486.1L574.2 485.9L574.5 485.6L574.8 485.3L575.2 485.1L575.5 484.8L575.8 484.5L576.1 484.2L576.4 483.9L576.7 483.6L577.0 483.3L577.2 482.9L577.5 482.6L577.8 482.3L578.0 481.9L578.2 481.6L578.5 481.2L578.7 480.9L578.9 480.5L579.1 480.1L579.3 479.7L579.4 479.3L579.6 478.9L579.8 478.6L579.9 478.2L580.1 477.8L580.2 477.4L580.3 476.9L580.4 476.5L580.5 476.1L580.6 475.7L580.7 475.3L580.7 474.9L580.8 474.4L580.8 474.0L580.8 473.6L580.8 473.2L580.8 472.8L580.8 472.3L580.8 471.9L580.8 471.5L580.8 471.1L580.7 470.6L580.7 470.2L580.6 469.8L580.5 469.4L580.4 469.0L580.3 468.6L580.2 468.1L580.1 467.7L579.9 467.3L579.8 466.9L579.6 466.6L579.4 466.2L579.3 465.8L579.1 465.4L578.9 465.0L578.7 464.6L578.5 464.3L578.2 463.9L578.0 463.6L577.8 463.2L577.5 462.9L577.2 462.6L577.0 462.2L576.7 461.9L576.4 461.6L576.1 461.3L575.8 461.0L575.5 460.7L575.2 460.4L574.8 460.2L574.5 459.9L574.2 459.6L573.8 459.4L573.5 459.2L573.1 458.9L572.7 458.7L572.4 458.5L572.0 458.3L571.6 458.1L571.2 458.0L570.8 457.8L570.5 457.6L570.1 457.5L569.7 457.3L569.3 457.2L568.8 457.1L568.4 457.0L568.0 456.9L567.6 456.8L567.2 456.7L566.8 456.7L566.3 456.6L565.9 456.6L565.5 456.6L565.1 456.6L564.6 456.6Z" fill="#b9efc0" fill-rule="evenodd" opacity="1"/><circle cx="625.48" cy="472.75" r="16.6" fill="none" stroke="#b9efc0" stroke-width="0.7" opacity="1"/><path d="M625.5 453.3L626.0 453.3L626.4 453.3L626.9 453.3L627.4 453.3L627.8 453.4L627.9 456.1L628.3 456.2L628.7 456.3L629.1 456.3L629.5 456.4L629.9 456.5L630.3 456.7L630.7 456.8L631.1 456.9L631.4 457.0L631.8 457.2L632.2 457.3L632.6 457.5L632.9 457.7L633.3 457.9L633.6 458.1L634.0 458.3L634.3 458.5L634.7 458.7L635.0 458.9L635.4 459.2L635.7 459.4L636.0 459.7L636.3 459.9L636.6 460.2L636.9 460.4L637.2 460.7L637.5 461.0L637.8 461.3L638.1 461.6L638.3 461.9L638.6 462.2L638.8 462.5L639.1 462.9L640.1 462.6L640.4 463.0L640.6 463.4L640.8 463.7L641.0 464.1L641.2 464.5L641.4 464.9L641.6 465.2L641.8 465.6L642.0 466.0L641.2 466.8L641.3 467.2L641.5 467.6L641.6 467.9L641.7 468.3L641.8 468.7L641.9 469.1L642.0 469.5L642.0 469.9L642.1 470.3L644.1 470.5L644.2 470.9L644.2 471.4L644.3 471.8L644.3 472.3L644.3 472.8L644.3 473.2L644.3 473.7L644.2 474.1L644.2 474.6L642.2 474.8L642.1 475.2L642.0 475.6L642.0 476.0L641.9 476.4L641.8 476.8L641.7 477.2L641.6 477.6L641.5 477.9L641.3 478.3L642.9 479.3L642.7 479.8L642.5 480.2L642.3 480.6L642.1 481.0L641.9 481.4L641.7 481.8L641.5 482.2L641.3 482.6L641.0 482.9L639.3 482.3L639.1 482.6L638.8 483.0L638.6 483.3L638.3 483.6L638.1 483.9L637.8 484.2L637.5 484.5L637.2 484.8L636.9 485.1L637.7 486.5L637.3 486.8L637.0 487.1L636.6 487.4L636.3 487.6L635.9 487.9L635.6 488.1L635.2 488.4L634.8 488.6L634.4 488.8L633.3 487.6L632.9 487.8L632.6 488.0L632.2 488.2L631.8 488.3L631.4 488.5L631.1 488.6L630.7 488.7L630.3 488.8L629.9 489.0L630.1 491.5L629.7 491.6L629.2 491.7L628.7 491.8L628.3 491.9L627.8 492.0L627.3 492.0L626.9 492.1L626.4 492.1L625.9 492.1L625.5 489.6L625.1 489.5L624.7 489.5L624.3 489.5L623.9 489.5L623.5 489.4L623.1 489.4L622.7 489.3L622.3 489.2L621.9 489.2L620.9 491.1L620.5 491.0L620.1 490.9L619.6 490.8L619.2 490.6L618.8 490.5L618.3 490.3L617.9 490.1L617.5 489.9L617.1 489.7L616.7 489.5L617.3 487.4L617.0 487.2L616.6 487.0L616.3 486.8L615.9 486.6L615.6 486.3L615.3 486.1L615.0 485.8L614.6 485.6L613.4 486.4L613.1 486.1L612.8 485.8L612.4 485.5L612.1 485.2L611.8 484.8L611.6 484.5L611.3 484.2L611.0 483.8L610.7 483.5L611.7 482.3L611.4 482.0L611.2 481.6L611.0 481.3L610.8 480.9L610.6 480.6L610.4 480.2L610.2 479.8L610.1 479.5L609.9 479.1L607.2 479.7L607.1 479.2L606.9 478.8L606.8 478.3L606.6 477.9L606.5 477.4L606.4 477.0L606.3 476.5L606.2 476.0L606.2 475.6L608.8 474.8L608.8 474.4L608.7 474.0L608.7 473.6L608.7 473.2L608.7 472.8L608.7 472.3L608.7 471.9L608.7 471.5L608.8 471.1L606.1 470.4L606.2 469.9L606.2 469.5L606.3 469.0L606.4 468.5L606.5 468.1L606.7 467.6L606.8 467.2L606.9 466.7L607.1 466.3L609.8 466.8L609.9 466.4L610.1 466.0L610.2 465.7L610.4 465.3L610.6 464.9L610.8 464.6L611.0 464.2L611.2 463.9L611.4 463.5L609.3 461.6L609.6 461.2L609.9 460.8L610.2 460.5L610.5 460.1L610.8 459.8L611.1 459.4L611.5 459.1L611.8 458.7L612.1 458.4L614.3 460.2L614.6 459.9L615.0 459.7L615.3 459.4L615.6 459.2L615.9 458.9L616.3 458.7L616.6 458.5L617.0 458.3L617.3 458.1L617.1 456.8L617.5 456.6L617.9 456.4L618.3 456.2L618.7 456.1L619.1 455.9L619.5 455.8L619.9 455.6L620.3 455.5L620.8 455.4L621.5 456.4L621.9 456.3L622.3 456.3L622.7 456.2L623.1 456.1L623.5 456.1L623.9 456.0L624.3 456.0L624.7 456.0L625.1 456.0L625.5 453.3Z M625.5 459.0L625.1 456.4L624.7 456.4L624.3 456.4L623.9 456.4L623.5 456.5L623.1 456.5L622.7 456.6L622.3 456.7L621.9 456.7L621.6 456.8L621.5 458.1L621.1 458.2L620.8 458.3L620.4 458.4L620.1 458.5L619.7 458.7L619.4 458.8L619.1 459.0L618.7 459.1L618.4 459.3L617.5 458.4L617.2 458.6L616.8 458.8L616.5 459.0L616.2 459.3L615.8 459.5L615.5 459.7L615.2 460.0L614.9 460.2L614.6 460.5L616.2 462.8L616.0 463.0L615.7 463.3L615.5 463.5L615.3 463.7L615.1 464.0L614.9 464.2L614.7 464.5L614.5 464.8L614.3 465.0L611.8 463.8L611.5 464.1L611.3 464.4L611.1 464.8L611.0 465.1L610.8 465.5L610.6 465.8L610.4 466.2L610.3 466.6L610.1 466.9L612.6 468.2L612.5 468.5L612.4 468.8L612.3 469.2L612.2 469.5L612.1 469.8L612.0 470.1L612.0 470.4L611.9 470.8L611.9 471.1L609.2 471.2L609.1 471.6L609.1 472.0L609.1 472.4L609.1 472.8L609.1 473.1L609.1 473.5L609.1 473.9L609.2 474.3L609.2 474.7L611.9 474.7L612.0 475.1L612.1 475.4L612.1 475.7L612.2 476.0L612.3 476.3L612.4 476.7L612.5 477.0L612.6 477.3L612.7 477.6L610.3 478.9L610.4 479.3L610.6 479.7L610.8 480.0L611.0 480.4L611.1 480.7L611.3 481.1L611.5 481.4L611.8 481.7L612.0 482.1L613.4 481.6L613.6 481.9L613.8 482.1L614.0 482.4L614.3 482.7L614.5 483.0L614.8 483.2L615.0 483.5L615.3 483.7L615.5 484.0L614.9 485.3L615.2 485.5L615.5 485.8L615.8 486.0L616.2 486.2L616.5 486.5L616.8 486.7L617.2 486.9L617.5 487.1L618.9 485.4L619.2 485.5L619.5 485.7L619.8 485.8L620.1 486.0L620.4 486.1L620.7 486.2L621.1 486.3L621.4 486.4L621.7 486.5L622.1 486.6L621.9 488.8L622.3 488.8L622.7 488.9L623.1 489.0L623.5 489.0L623.9 489.1L624.3 489.1L624.7 489.1L625.1 489.1L625.5 489.1L625.8 486.6L626.1 486.6L626.5 486.6L626.8 486.5L627.1 486.5L627.5 486.4L627.8 486.4L628.1 486.3L628.5 486.3L628.8 486.2L629.8 488.6L630.2 488.5L630.5 488.3L630.9 488.2L631.3 488.1L631.7 487.9L632.0 487.8L632.4 487.6L632.7 487.5L633.1 487.3L632.7 485.7L633.0 485.5L633.3 485.3L633.6 485.1L633.9 484.9L634.2 484.7L634.5 484.5L634.8 484.3L635.0 484.1L635.3 483.8L636.6 484.8L636.9 484.5L637.2 484.2L637.5 483.9L637.8 483.6L638.0 483.3L638.3 483.0L638.5 482.7L638.7 482.4L639.0 482.1L637.7 480.8L637.9 480.5L638.1 480.2L638.2 479.8L638.4 479.5L638.6 479.2L638.7 478.9L638.9 478.6L639.0 478.3L639.1 477.9L641.0 478.2L641.1 477.8L641.2 477.4L641.3 477.1L641.4 476.7L641.5 476.3L641.6 475.9L641.6 475.5L641.7 475.1L641.8 474.7L639.8 474.1L639.8 473.8L639.9 473.4L639.9 473.1L639.9 472.8L639.9 472.4L639.9 472.1L639.8 471.7L639.8 471.4L639.8 471.0L641.7 470.4L641.6 470.0L641.6 469.6L641.5 469.2L641.4 468.8L641.3 468.4L641.2 468.1L641.1 467.7L641.0 467.3L640.8 466.9L639.7 466.9L639.6 466.6L639.4 466.3L639.3 465.9L639.1 465.6L638.9 465.3L638.8 464.9L638.6 464.6L638.4 464.3L638.2 464.0L638.7 463.1L638.5 462.8L638.3 462.5L638.0 462.2L637.8 461.9L637.5 461.6L637.2 461.3L636.9 461.0L636.6 460.7L636.4 460.5L636.1 460.2L635.7 460.0L635.4 459.7L635.1 459.5L634.8 459.3L634.5 459.0L634.1 458.8L633.8 458.6L633.5 458.4L633.1 458.2L632.7 458.0L632.4 457.9L632.0 457.7L631.7 457.6L631.3 457.4L630.9 457.3L630.5 457.2L630.2 457.0L629.8 456.9L629.4 456.8L629.0 456.7L628.6 456.7L628.2 456.6L627.8 456.5L627.1 459.1L626.8 459.1L626.5 459.1L626.1 459.1L625.8 459.0L625.5 459.0Z" fill="#b9efc0" fill-rule="evenodd" opacity="1"/><circle cx="686.31" cy="472.75" r="16.6" fill="none" stroke="#b9efc0" stroke-width="0.7" opacity="1"/><path d="M686.3 455.9L686.7 456.0L687.2 456.0L687.6 456.0L688.1 456.0L688.5 456.3L688.9 456.3L689.4 456.2L689.8 456.3L690.3 456.3L690.7 456.4L691.1 456.4L691.6 456.3L692.1 456.4L692.6 456.5L693.0 456.6L693.4 456.8L693.8 457.0L694.3 457.1L694.7 457.2L695.2 457.4L695.6 457.6L696.0 457.8L696.5 458.0L696.9 458.2L697.3 458.4L697.7 458.7L698.1 458.9L698.2 459.5L698.6 459.8L698.9 460.1L699.3 460.4L700.1 460.3L700.5 460.6L700.9 460.9L701.2 461.3L700.9 462.2L701.1 462.6L701.4 462.9L701.7 463.3L702.0 463.7L702.2 464.1L702.4 464.5L702.6 465.0L702.8 465.4L703.0 465.8L703.2 466.3L703.4 466.7L704.8 466.7L705.0 467.2L705.1 467.7L705.3 468.2L705.4 468.7L705.5 469.2L705.6 469.7L705.7 470.2L705.4 470.7L705.4 471.2L705.5 471.7L705.5 472.2L705.1 472.8L705.1 473.2L705.1 473.7L705.1 474.2L706.5 474.9L706.5 475.4L706.4 475.9L706.3 476.5L706.9 477.1L706.7 477.7L706.6 478.2L706.4 478.7L705.9 479.1L705.7 479.6L705.5 480.1L705.3 480.6L705.2 481.1L704.9 481.6L704.7 482.1L704.4 482.6L703.3 482.6L703.1 483.0L702.8 483.4L702.5 483.9L702.9 484.8L702.6 485.2L702.2 485.6L701.9 486.1L700.6 485.6L700.2 486.0L699.9 486.3L699.5 486.7L699.3 487.2L698.9 487.5L698.5 487.8L698.1 488.1L696.9 487.3L696.5 487.6L696.1 487.9L695.7 488.1L695.3 488.4L694.9 488.6L694.5 488.8L694.1 489.0L694.2 490.4L693.7 490.6L693.2 490.8L692.8 490.9L692.3 491.2L691.8 491.4L691.3 491.5L690.8 491.6L690.5 492.2L689.9 492.3L689.4 492.4L688.9 492.5L688.4 492.2L687.8 492.3L687.3 492.3L686.8 492.3L686.3 492.7L685.8 492.7L685.3 492.7L684.7 492.6L684.2 492.5L683.7 492.5L683.2 492.4L682.7 492.3L682.4 491.2L681.9 491.1L681.4 490.9L681.0 490.8L680.7 490.1L680.2 489.9L679.8 489.8L679.3 489.6L679.2 488.8L678.7 488.6L678.3 488.4L677.9 488.2L676.9 489.0L676.5 488.7L676.1 488.5L675.7 488.2L674.9 488.5L674.5 488.2L674.1 487.9L673.7 487.5L673.2 487.3L674.7 484.9L674.4 484.6L674.1 484.3L673.8 484.0L673.5 483.7L673.3 483.3L673.0 483.0L672.7 482.6L672.5 482.3L672.2 481.9L672.0 481.5L671.8 481.1L671.5 480.8L671.3 480.4L671.1 480.0L671.0 479.6L670.8 479.2L670.6 478.8L670.5 478.4L670.3 477.9L670.2 477.5L670.1 477.1L670.0 476.7L669.9 476.2L669.8 475.8L669.7 475.4L669.7 474.9L669.6 474.5L669.6 474.1L669.5 473.6L669.5 473.2L669.5 472.8L669.5 472.3L669.5 471.9L669.6 471.4L669.6 471.0L669.7 470.6L669.7 470.1L669.8 469.7L669.9 469.3L670.0 468.8L670.1 468.4L670.2 468.0L670.3 467.6L670.5 467.1L670.6 466.7L670.8 466.3L671.0 465.9L671.1 465.5L671.3 465.1L671.5 464.7L671.8 464.4L672.0 464.0L672.2 463.6L672.5 463.2L672.7 462.9L673.0 462.5L673.3 462.2L673.5 461.8L673.8 461.5L674.1 461.2L674.4 460.9L674.7 460.6L675.1 460.3L675.4 460.0L675.7 459.7L676.1 459.4L676.4 459.2L676.8 458.9L677.2 458.7L677.5 458.4L677.9 458.2L678.3 458.0L678.7 457.8L679.1 457.6L679.5 457.4L679.9 457.2L680.3 457.1L680.7 456.9L681.1 456.8L681.5 456.6L682.0 456.5L682.4 456.4L682.8 456.3L683.2 456.2L683.7 456.2L684.1 456.1L684.6 456.0L685.0 456.0L685.4 456.0L685.9 456.0L686.3 455.9Z M686.3 456.4L685.9 456.4L685.5 456.4L685.0 456.4L684.6 456.4L684.2 456.5L683.7 456.6L683.3 456.6L682.9 456.7L682.5 456.8L682.1 456.9L681.7 457.0L681.2 457.2L680.8 457.3L680.4 457.4L680.0 457.6L679.6 457.8L679.2 457.9L678.9 458.1L678.5 458.3L678.1 458.5L677.7 458.8L677.4 459.0L677.0 459.2L676.7 459.5L676.3 459.7L676.0 460.0L675.7 460.3L675.3 460.6L675.0 460.9L674.7 461.2L674.4 461.5L674.1 461.8L673.8 462.1L673.6 462.4L673.3 462.8L673.0 463.1L672.8 463.5L672.6 463.8L672.3 464.2L672.1 464.6L671.9 464.9L671.7 465.3L671.5 465.7L671.3 466.1L671.2 466.5L671.0 466.9L670.9 467.3L670.7 467.7L670.6 468.1L670.5 468.5L670.4 468.9L670.3 469.3L670.2 469.8L670.1 470.2L670.1 470.6L670.0 471.0L670.0 471.5L669.9 471.9L669.9 472.3L669.9 472.8L669.9 473.2L669.9 473.6L670.0 474.0L670.0 474.5L670.1 474.9L670.1 475.3L670.2 475.7L670.3 476.2L670.4 476.6L670.5 477.0L670.6 477.4L670.7 477.8L670.9 478.2L671.0 478.6L671.2 479.0L671.3 479.4L671.5 479.8L671.7 480.2L671.9 480.6L672.1 480.9L672.3 481.3L672.6 481.7L672.8 482.0L673.0 482.4L673.3 482.7L673.6 483.1L673.8 483.4L674.1 483.7L674.4 484.0L674.7 484.3L675.0 484.6L677.2 482.8L677.4 483.2L677.6 483.4L677.9 483.7L678.2 483.9L678.1 484.7L678.4 484.9L678.8 485.1L679.1 485.3L678.9 486.5L679.2 486.6L679.6 486.8L680.0 487.0L680.6 486.6L680.9 486.7L681.3 486.9L681.7 487.0L682.2 486.5L682.6 486.6L683.0 486.7L683.3 486.8L683.9 485.8L684.2 485.9L684.6 485.9L684.9 486.0L685.3 486.0L685.6 486.0L686.0 486.0L686.3 486.0L686.7 486.3L687.0 486.3L687.4 486.3L687.7 486.3L688.0 485.9L688.4 485.9L688.7 485.8L689.1 485.7L689.5 486.1L689.9 486.1L690.2 486.0L690.6 485.9L690.9 485.8L691.3 485.7L691.6 485.6L692.0 485.4L692.8 486.4L693.2 486.2L693.5 486.1L693.9 485.9L694.2 485.7L694.6 485.5L694.9 485.3L695.2 485.0L694.7 483.7L695.0 483.5L695.3 483.2L695.5 483.0L695.9 482.9L696.2 482.6L696.5 482.4L696.7 482.1L696.0 481.0L696.2 480.7L696.4 480.5L696.6 480.2L697.5 480.4L697.7 480.1L697.9 479.8L698.1 479.5L697.4 478.8L697.5 478.5L697.7 478.2L697.8 477.9L698.0 477.6L698.1 477.3L698.2 477.0L698.3 476.7L698.0 476.2L698.1 475.9L698.2 475.6L698.2 475.3L699.0 475.1L699.0 474.8L699.1 474.4L699.1 474.1L700.7 473.9L700.7 473.5L700.7 473.1L700.7 472.8L700.3 472.4L700.3 472.0L700.3 471.6L700.3 471.3L699.8 471.0L699.8 470.6L699.7 470.3L699.7 469.9L699.6 469.5L699.6 469.2L699.5 468.9L699.3 468.5L700.6 467.7L700.4 467.3L700.3 467.0L700.1 466.6L699.9 466.2L699.8 465.9L699.6 465.5L699.4 465.2L699.3 464.8L699.1 464.5L698.8 464.1L698.6 463.8L697.7 464.0L697.5 463.7L697.4 463.3L697.2 463.0L697.4 462.2L697.1 461.9L696.9 461.6L696.6 461.3L696.1 461.3L695.8 461.0L695.5 460.7L695.3 460.4L695.0 460.2L694.7 459.9L694.4 459.6L694.1 459.3L693.7 459.1L693.4 458.8L693.1 458.6L692.7 458.3L692.3 458.3L692.0 458.0L691.6 457.8L691.2 457.6L690.9 457.2L690.5 457.1L690.1 456.9L689.7 456.7L689.3 456.6L688.9 456.5L688.5 456.3L688.0 456.4L687.6 456.4L687.2 456.4L686.7 456.4L686.3 456.4Z" fill="#b9efc0" fill-rule="evenodd" opacity="1"/><path d="M747.1 453.1L747.7 453.1L748.2 453.1L748.7 453.1L749.2 453.1L749.7 453.2L750.3 452.9L750.8 453.0L751.3 453.1L751.7 453.9L752.2 454.0L752.7 454.1L753.2 454.2L753.7 454.4L754.1 454.5L754.7 454.5L755.2 454.7L755.6 454.9L756.1 455.1L756.6 455.3L755.5 458.2L755.9 458.4L756.3 458.7L756.7 458.9L758.7 456.8L759.1 457.1L759.5 457.4L760.1 457.6L760.5 458.0L760.8 458.3L761.1 458.8L761.5 459.1L761.8 459.5L762.0 460.0L762.4 460.4L762.7 460.8L763.2 461.1L763.5 461.5L763.8 461.9L763.8 462.5L764.1 463.0L764.3 463.4L764.6 463.9L764.8 464.3L765.0 464.8L764.7 465.5L764.9 465.9L765.1 466.4L765.3 466.8L765.5 467.3L765.6 467.8L765.9 468.3L766.0 468.7L766.1 469.2L766.8 469.6L766.9 470.2L766.9 470.7L767.1 471.2L767.1 471.7L767.1 472.2L766.9 472.8L766.9 473.3L766.9 473.8L766.4 474.3L766.3 474.8L766.3 475.3L766.7 475.8L766.6 476.4L766.5 476.9L766.3 477.4L766.2 477.9L766.0 478.4L766.2 478.9L766.0 479.4L765.8 479.9L765.2 480.2L765.0 480.7L764.8 481.2L764.9 481.8L764.7 482.3L764.4 482.7L764.0 483.1L763.7 483.5L763.4 483.9L763.3 484.5L763.0 484.9L762.7 485.3L762.3 485.7L761.9 486.1L761.6 486.4L761.4 487.0L761.0 487.3L760.6 487.7L760.3 488.2L759.9 488.5L759.5 488.8L759.1 489.2L758.7 489.5L758.2 489.8L757.6 489.8L757.1 490.0L756.7 490.3L755.9 490.0L755.5 490.2L755.0 490.4L754.6 490.9L754.2 491.0L753.7 491.2L753.3 491.6L752.8 491.8L752.3 491.9L751.8 492.2L751.3 492.3L750.8 492.4L750.3 492.5L749.7 492.5L749.2 492.6L748.7 492.7L748.2 492.7L747.7 492.8L747.1 493.2L746.6 493.2L746.1 493.1L745.5 493.1L745.0 493.0L744.5 492.9L744.0 492.7L743.5 492.6L742.9 492.5L742.5 492.1L742.0 491.9L741.5 491.8L741.0 491.7L740.5 491.5L740.0 491.3L739.6 491.0L739.1 490.8L738.6 490.6L738.0 490.6L737.6 490.4L737.1 490.1L737.0 489.4L736.5 489.1L736.1 488.8L735.4 488.8L735.0 488.5L734.6 488.2L734.2 487.8L733.9 487.5L733.5 487.2L732.7 487.2L732.3 486.9L731.9 486.5L731.5 486.1L731.1 485.7L730.8 485.3L730.6 484.8L730.3 484.3L730.0 483.9L730.2 483.1L729.9 482.7L729.7 482.2L729.9 481.5L729.7 481.1L729.4 480.6L729.2 480.2L729.0 479.7L728.9 479.2L728.5 478.8L728.3 478.3L728.2 477.8L728.1 477.3L728.0 476.8L727.9 476.3L727.5 475.9L727.5 475.3L727.4 474.8L727.4 474.3L727.3 473.8L727.3 473.3L726.8 472.8L726.8 472.2L726.9 471.7L727.4 471.2L727.4 470.7L727.5 470.2L727.8 469.7L727.9 469.2L728.0 468.7L728.6 468.3L728.7 467.8L728.8 467.3L728.9 466.8L729.1 466.3L729.2 465.9L729.4 465.4L729.6 464.9L729.8 464.5L729.8 463.9L730.0 463.4L730.2 463.0L730.5 462.5L730.8 462.1L731.0 461.7L731.0 461.0L731.3 460.6L731.6 460.2L731.7 459.6L732.0 459.2L732.4 458.8L732.9 458.5L733.3 458.1L733.7 457.8L734.3 457.7L734.7 457.3L735.1 457.0L735.8 457.1L736.2 456.9L736.6 456.6L736.9 456.0L737.3 455.7L737.8 455.5L738.0 454.9L738.5 454.6L739.0 454.4L739.4 454.2L739.9 454.0L740.4 453.8L740.9 453.5L741.4 453.4L741.9 453.2L742.5 453.6L743.0 453.5L743.6 453.4L744.1 453.4L744.6 453.4L745.1 453.3L745.6 453.7L746.1 453.6L746.6 453.6L747.1 453.1Z M747.1 459.6L746.8 459.1L746.4 459.1L746.1 459.1L745.8 459.6L745.4 459.6L745.1 459.7L744.8 459.9L744.4 459.9L744.1 460.0L743.9 460.6L743.6 460.7L743.2 460.8L742.9 460.8L742.6 460.9L742.3 461.0L742.0 461.1L741.7 461.3L741.4 461.4L740.9 461.2L740.6 461.4L740.3 461.5L739.8 461.4L739.5 461.6L739.2 461.8L739.2 462.5L739.0 462.7L738.7 462.9L738.7 463.4L738.4 463.6L738.2 463.8L738.1 464.2L737.9 464.4L737.6 464.6L737.2 464.7L737.0 464.9L736.8 465.2L736.2 465.2L736.0 465.5L735.8 465.8L735.6 466.1L735.5 466.4L735.3 466.7L734.9 466.9L734.7 467.2L734.6 467.5L734.4 467.9L734.3 468.2L734.2 468.5L734.0 468.9L733.9 469.2L733.8 469.6L734.2 470.0L734.2 470.3L734.1 470.7L734.3 471.1L734.2 471.4L734.2 471.7L734.7 472.1L734.7 472.4L734.7 472.8L734.2 473.1L734.2 473.4L734.2 473.8L734.3 474.1L734.3 474.4L734.3 474.8L734.1 475.2L734.2 475.5L734.3 475.8L734.4 476.2L734.5 476.5L734.6 476.8L734.5 477.2L734.6 477.6L734.8 477.9L734.9 478.2L735.0 478.5L735.2 478.8L735.8 478.9L736.0 479.2L736.1 479.5L736.8 479.5L737.0 479.7L737.2 480.0L737.5 480.2L737.7 480.4L737.9 480.7L738.0 481.0L738.2 481.2L738.4 481.5L738.2 482.1L738.5 482.4L738.7 482.6L739.0 482.8L739.3 483.0L739.6 483.2L739.6 483.7L739.9 483.9L740.2 484.1L740.8 483.8L741.1 483.9L741.4 484.1L741.5 484.5L741.8 484.7L742.2 484.8L742.5 484.8L742.8 484.9L743.1 485.0L743.5 485.1L743.8 485.2L744.1 485.3L744.5 485.1L744.8 485.2L745.2 485.2L745.5 485.1L745.8 485.1L746.2 485.1L746.5 485.1L746.8 485.1L747.1 485.1L747.5 485.5L747.8 485.5L748.1 485.5L748.5 485.5L748.8 485.5L749.1 485.4L749.5 485.4L749.8 485.3L750.1 485.2L750.5 485.3L750.8 485.2L751.1 485.1L751.5 485.2L751.9 485.1L752.2 484.9L752.6 485.1L752.9 484.9L753.3 484.8L753.3 484.0L753.6 483.9L753.9 483.7L753.9 483.2L754.2 483.0L754.5 482.8L754.8 482.7L755.0 482.5L755.3 482.3L755.6 482.2L755.9 482.0L756.1 481.7L756.5 481.6L756.7 481.4L757.0 481.1L757.1 480.8L757.3 480.5L757.5 480.3L757.9 480.1L758.1 479.8L758.3 479.6L758.2 479.2L758.4 478.9L758.6 478.6L759.1 478.5L759.3 478.1L759.4 477.8L759.1 477.3L759.2 477.0L759.3 476.7L759.7 476.5L759.8 476.1L759.9 475.8L759.9 475.5L760.0 475.1L760.0 474.8L760.5 474.5L760.6 474.2L760.6 473.8L760.1 473.4L760.2 473.1L760.2 472.8L759.9 472.4L759.9 472.1L759.9 471.7L760.0 471.4L759.9 471.1L759.9 470.7L760.5 470.3L760.4 469.9L760.3 469.6L760.3 469.2L760.2 468.9L760.1 468.5L760.1 468.1L760.0 467.8L759.9 467.5L759.2 467.4L759.1 467.1L758.9 466.8L758.8 466.4L758.6 466.1L758.4 465.8L758.0 465.7L757.8 465.4L757.6 465.2L757.6 464.7L757.4 464.4L757.2 464.2L756.8 464.0L756.6 463.8L756.3 463.6L756.0 463.4L755.8 463.2L755.5 462.9L755.4 462.6L755.1 462.4L754.8 462.2L756.2 459.6L755.9 459.3L755.5 459.1L755.1 458.9L753.3 461.3L753.0 461.2L752.8 461.0L752.5 460.8L752.1 460.7L751.9 460.3L751.6 460.2L751.2 460.1L750.9 459.9L750.6 459.8L750.3 459.7L749.8 460.3L749.5 460.2L749.1 460.2L748.8 459.8L748.5 459.7L748.2 459.7L747.8 459.6L747.5 459.6L747.1 459.6Z" fill="#b9efc0" fill-rule="evenodd" opacity="1"/><path d="M382.2 522.6L382.5 524.0L382.9 524.0L383.3 524.0L383.7 524.1L384.1 524.2L384.9 522.8L385.4 523.0L385.8 523.2L386.2 523.3L386.7 523.6L387.1 523.8L387.4 524.2L387.8 524.4L388.1 524.7L388.3 525.2L388.6 525.5L388.9 525.9L389.2 526.2L389.5 526.6L389.7 527.0L390.0 527.3L390.2 527.8L390.4 528.2L390.6 528.6L390.8 529.0L390.9 529.5L391.0 529.9L391.1 530.4L391.1 530.9L391.2 531.4L391.2 531.8L391.1 532.3L391.3 532.8L391.2 533.3L391.1 533.7L390.8 534.1L390.6 534.6L390.4 535.0L390.3 535.5L390.0 535.9L389.8 536.3L389.3 536.6L389.1 536.9L388.8 537.3L388.5 537.7L388.1 538.0L387.8 538.3L387.5 538.6L387.1 538.9L386.7 539.2L386.3 539.5L385.9 539.7L385.4 539.9L385.0 540.1L384.5 540.2L384.1 540.3L383.6 540.3L383.1 540.4L382.6 540.4L382.2 540.3L381.7 540.3L381.2 540.2L380.8 540.2L380.3 540.1L379.8 540.0L379.4 539.8L379.0 539.7L378.5 539.5L378.1 539.4L377.7 539.2L377.3 538.9L377.0 538.4L376.6 538.2L376.3 537.9L375.9 537.6L375.6 537.3L375.3 536.9L375.0 536.6L374.7 536.2L374.4 535.8L374.0 535.5L373.8 535.1L373.6 534.6L373.5 534.2L373.3 533.7L373.2 533.3L373.0 532.8L373.0 532.3L372.9 531.8L372.9 531.4L372.9 530.9L372.9 530.4L373.1 529.9L373.2 529.5L373.3 529.0L373.4 528.5L373.6 528.1L373.8 527.6L374.1 527.3L374.4 526.8L374.6 526.4L374.7 525.9L375.0 525.6L375.3 525.2L375.6 524.8L376.0 524.5L376.4 524.2L376.8 524.0L377.2 523.7L377.6 523.5L378.2 523.5L378.6 523.3L379.0 523.1L379.5 523.2L379.9 523.0L380.4 522.9L380.8 522.8L381.3 522.7L381.7 522.7L382.2 522.6Z M382.2 525.7L381.9 525.6L381.6 525.6L381.3 525.7L381.0 525.7L380.7 525.7L380.4 525.8L380.2 526.1L379.9 526.3L379.6 526.4L379.5 526.8L379.3 526.9L379.0 527.1L378.9 527.3L378.7 527.5L378.5 527.7L378.3 527.9L378.1 528.1L377.9 528.3L377.6 528.4L377.5 528.7L377.4 528.9L377.4 529.2L377.3 529.5L377.2 529.7L377.1 530.0L377.0 530.3L377.0 530.5L377.1 530.8L377.1 531.1L377.1 531.4L377.0 531.6L377.0 531.9L377.1 532.2L377.0 532.4L377.1 532.7L377.2 533.0L377.3 533.2L377.4 533.5L377.5 533.7L377.4 534.1L377.6 534.3L377.7 534.6L377.8 534.8L378.0 535.1L378.2 535.3L378.4 535.5L378.6 535.7L378.8 535.9L379.2 535.9L379.5 536.0L379.7 536.2L379.9 536.4L380.2 536.5L380.5 536.6L380.8 536.6L381.0 536.7L381.3 536.7L381.6 536.8L381.9 536.8L382.2 536.8L382.4 536.6L382.7 536.6L383.0 536.6L383.2 536.5L383.5 536.4L383.8 536.3L384.0 536.3L384.3 536.2L384.6 536.0L384.9 536.0L385.1 535.9L385.3 535.7L385.6 535.6L385.8 535.4L386.0 535.2L386.3 535.0L386.5 534.8L386.6 534.6L386.6 534.2L386.7 534.0L386.9 533.8L387.0 533.5L387.2 533.3L387.2 533.0L387.2 532.7L387.2 532.4L387.3 532.2L387.5 531.9L387.5 531.6L387.5 531.4L387.6 531.1L387.6 530.8L387.5 530.5L387.5 530.2L387.5 529.9L387.4 529.7L387.4 529.4L387.3 529.1L387.1 528.8L387.0 528.5L386.9 528.3L386.7 528.0L386.6 527.8L386.4 527.5L386.2 527.3L385.8 527.3L385.6 527.1L385.4 526.9L385.1 526.8L384.9 526.7L384.6 526.5L384.4 526.4L384.1 526.3L383.8 526.2L384.0 524.6L383.6 524.5L383.3 524.4L382.9 524.4L382.5 524.4L382.2 525.7Z" fill="#dff0c2" fill-rule="evenodd" opacity="1"/><circle cx="442.99" cy="531.35" r="6.4" fill="none" stroke="#dff0c2" stroke-width="0.7" opacity="1"/><path d="M443.9 536.2L444.9 541.5M443.4 536.8L443.6 540.3M442.7 535.9L442.5 540.7M442.1 536.5L441.2 541.7M441.5 536.2L440.2 540.5M440.9 536.0L438.8 540.9M440.4 535.6L438.2 539.4M439.9 535.3L437.6 538.3M439.8 534.6L436.7 537.8M439.5 534.1L435.5 537.3M438.5 534.1L434.8 536.4M438.9 533.2L433.4 535.8M438.8 532.7L434.6 534.0M438.6 532.2L432.8 533.3M438.3 531.7L433.2 532.0M437.8 531.1L432.9 530.8M438.3 530.5L434.3 529.8M437.8 529.8L432.9 528.3M438.4 529.3L433.8 527.3M438.9 528.9L434.8 526.5M439.3 528.5L435.2 525.3M439.4 527.8L436.2 524.6M439.7 527.2L436.8 523.6M440.1 526.6L437.5 522.4M440.7 526.4L438.7 522.0M441.7 527.2L440.2 522.7M442.0 526.2L441.1 521.5" stroke="#dff0c2" stroke-width="0.95" fill="none"/><path d="M448.39 530.15l3.2 1.2-3.2 1.4z" fill="#dff0c2"/><path d="M503.82 520.95A10.4 10.4 0 0 1 503.82 541.75Z" fill="#e4f5c4" opacity="0.75"/><circle cx="503.82" cy="531.35" r="10.4" fill="none" stroke="#e4f5c4" stroke-width="0.7" opacity="0.9"/><circle cx="503.82" cy="531.35" r="8.4" fill="none" stroke="#dff0c2" stroke-width="0.7" opacity="1"/><circle cx="503.82" cy="531.35" r="6.4" fill="none" stroke="#dff0c2" stroke-width="1.6" opacity="0.9"/><circle cx="564.65" cy="531.35" r="7.4" fill="none" stroke="#dff0c2" stroke-width="0.7" opacity="1"/><path d="M565.4 525.3L565.9 521.5M566.4 524.9L567.2 522.0M567.4 525.2L568.6 522.2M567.9 526.1L569.8 523.0M569.1 526.0L571.1 523.6M569.7 526.8L572.5 524.3M570.4 527.5L573.4 525.5M570.4 528.6L574.0 526.9M570.4 529.6L574.4 528.3M571.2 530.3L575.0 529.7M571.6 531.2L574.7 531.2M571.2 532.2L574.8 532.6M570.8 533.0L573.8 533.9M571.0 534.1L574.2 535.5M570.0 534.7L573.5 536.8M569.5 535.4L572.0 537.5M569.3 536.5L571.0 538.5M568.0 536.4L570.5 540.1M567.2 536.8L569.0 540.5" stroke="#dff0c2" stroke-width="1.0" fill="none"/><path d="M625.5 521.9L626.0 521.9L626.5 522.0L627.0 522.0L627.5 522.1L627.9 522.2L628.3 522.5L628.8 522.7L629.3 522.9L629.8 522.8L630.3 523.0L630.7 523.3L631.0 523.8L631.4 524.1L631.7 524.4L632.1 524.7L632.4 525.1L632.7 525.5L633.0 525.9L633.3 526.3L633.6 526.7L633.5 527.2L633.7 527.7L633.9 528.1L634.4 528.5L634.5 528.9L634.6 529.4L634.4 529.9L634.4 530.4L634.5 530.9L634.5 531.4L634.5 531.8L634.5 532.3L634.4 532.8L634.3 533.2L634.2 533.7L634.7 534.3L634.5 534.8L634.3 535.3L634.1 535.8L633.9 536.2L633.6 536.6L633.2 537.0L632.9 537.4L632.6 537.7L632.1 538.0L631.7 538.3L631.4 538.6L631.4 539.5L631.0 539.8L630.5 540.1L630.2 540.6L629.7 540.9L629.2 541.1L628.6 541.0L628.1 541.2L627.6 541.3L627.1 541.4L626.5 541.5L626.0 541.6L625.5 541.1L625.0 541.1L624.5 541.1L623.9 541.4L623.4 541.3L622.8 541.2L622.5 540.4L622.1 540.3L621.6 540.1L621.1 539.9L620.7 539.7L620.2 539.4L620.2 538.6L619.8 538.3L619.5 538.0L619.1 537.7L618.8 537.4L618.5 537.0L617.7 537.0L617.4 536.6L617.2 536.2L616.9 535.7L616.7 535.3L616.5 534.8L616.1 534.4L615.9 533.9L615.8 533.4L615.9 532.9L615.8 532.4L615.8 531.9L615.6 531.4L615.6 530.8L615.6 530.3L615.7 529.8L615.8 529.3L615.9 528.8L616.6 528.5L616.7 528.0L616.9 527.5L617.4 527.2L617.6 526.8L617.8 526.4L618.4 526.2L618.6 525.8L618.9 525.5L618.9 524.7L619.2 524.4L619.6 524.1L619.8 523.5L620.2 523.2L620.6 523.0L621.0 522.7L621.5 522.4L622.0 522.2L622.5 522.1L623.0 522.0L623.5 521.9L624.0 521.9L624.5 521.8L625.0 521.8L625.5 521.9Z M625.5 526.0L625.2 526.1L624.9 526.2L624.7 526.2L624.4 526.3L624.2 526.4L623.9 526.5L623.7 526.6L623.4 526.7L623.2 526.9L622.9 526.9L622.7 527.0L622.5 527.2L622.0 527.1L621.8 527.3L621.6 527.5L621.0 527.3L620.8 527.6L620.6 527.8L620.7 528.2L620.5 528.5L620.4 528.8L620.5 529.1L620.4 529.4L620.3 529.7L620.7 530.1L620.7 530.3L620.6 530.6L620.6 530.8L620.6 531.1L620.6 531.4L620.4 531.6L620.4 531.9L620.5 532.1L620.7 532.4L620.7 532.6L620.8 532.9L620.7 533.2L620.8 533.4L620.9 533.7L621.0 533.9L621.1 534.2L621.3 534.4L621.0 535.0L621.2 535.2L621.4 535.4L621.6 535.7L621.8 535.9L622.1 536.0L622.7 535.7L622.9 535.8L623.1 535.9L623.3 536.1L623.6 536.2L623.9 536.3L624.3 535.8L624.5 535.9L624.8 535.9L625.0 536.4L625.2 536.4L625.5 536.4L625.7 535.9L626.0 535.9L626.2 535.9L626.4 535.9L626.7 535.8L626.9 535.7L627.1 535.5L627.3 535.4L627.5 535.3L627.8 535.4L628.0 535.3L628.2 535.2L628.9 535.6L629.1 535.4L629.3 535.2L629.4 534.9L629.6 534.7L629.7 534.4L629.7 534.1L629.9 533.9L630.0 533.7L630.1 533.4L630.3 533.2L630.3 532.9L631.1 532.8L631.1 532.6L631.2 532.3L631.2 532.0L631.2 531.7L631.2 531.4L631.3 531.0L631.3 530.7L631.2 530.4L630.8 530.2L630.7 529.9L630.6 529.7L630.9 529.3L630.7 529.0L630.6 528.7L630.2 528.6L630.1 528.4L629.9 528.1L629.7 527.9L629.5 527.7L629.3 527.5L629.1 527.3L628.9 527.1L628.7 527.0L628.3 527.0L628.1 526.9L627.8 526.7L627.7 526.3L627.5 526.2L627.2 526.1L626.9 526.2L626.6 526.2L626.3 526.1L626.0 526.0L625.8 526.0L625.5 526.0Z" fill="#dff0c2" fill-rule="evenodd" opacity="1"/><circle cx="686.31" cy="531.35" r="7.8" fill="none" stroke="#dff0c2" stroke-width="0.7" opacity="1"/><path d="M686.3 524.8L686.7 524.8L687.0 524.8L687.3 524.8L688.1 522.7L688.6 522.8L689.0 523.0L689.5 523.1L689.9 523.3L690.3 523.5L690.7 523.7L691.1 524.0L691.5 524.2L691.8 524.5L692.2 524.8L692.5 525.1L692.8 525.5L693.1 525.8L693.4 526.2L693.7 526.6L693.9 527.0L694.2 527.4L694.3 527.8L694.5 528.2L694.7 528.6L694.8 529.1L694.9 529.5L695.0 530.0L695.1 530.4L695.1 530.9L695.1 531.4L695.1 531.8L695.1 532.3L695.0 532.7L694.9 533.2L694.8 533.6L692.6 533.4L692.5 533.7L692.3 534.0L692.2 534.3L692.0 534.6L691.8 534.9L691.6 535.2L691.4 535.5L691.2 535.8L691.0 536.0L690.7 536.3L690.5 536.5L690.2 536.7L689.9 536.9L689.6 537.1L689.3 537.2L689.0 537.4L688.7 537.5L688.3 537.6L688.0 537.7L687.7 537.8L687.3 537.9L687.0 537.9L686.7 537.9L686.3 538.0L686.0 537.9L685.6 537.9L684.9 540.0L684.5 540.0L684.0 539.9L683.6 539.7L683.2 539.6L682.7 539.4L682.3 539.2L681.9 539.0L681.5 538.7L681.1 538.5L680.8 538.2L680.4 537.9L680.1 537.6L679.8 537.2L679.5 536.9L679.2 536.5L678.9 536.1L678.7 535.8L678.5 535.3L678.3 534.9L678.1 534.5L677.9 534.1L677.8 533.6L677.7 533.2L677.6 532.7L677.6 532.3L677.5 531.8L677.5 531.4L677.5 530.9L677.6 530.4L677.6 530.0L679.9 530.0L679.9 529.6L680.0 529.3L680.1 529.0L680.3 528.7L680.4 528.4L680.6 528.1L680.8 527.8L681.0 527.5L681.2 527.2L681.4 526.9L681.6 526.7L681.9 526.4L682.2 526.2L682.4 526.0L682.7 525.8L683.0 525.6L683.3 525.5L683.6 525.3L683.9 525.2L684.3 525.1L684.6 525.0L684.9 524.9L685.3 524.8L685.6 524.8L686.0 524.8L686.3 524.8Z M686.3 524.8L686.0 524.8L685.6 524.8L685.3 524.8L684.9 524.9L684.6 525.0L684.3 525.1L683.9 525.2L683.6 525.3L683.3 525.5L683.0 525.6L682.7 525.8L682.4 526.0L682.2 526.2L681.9 526.4L681.6 526.7L681.4 526.9L681.2 527.2L681.0 527.5L680.8 527.8L680.6 528.1L680.4 528.4L680.3 528.7L680.1 529.0L680.0 529.3L679.9 529.6L679.9 530.0L682.0 530.7L681.9 530.9L681.9 531.1L681.9 531.4L681.9 531.6L681.9 531.8L682.0 532.0L682.0 532.3L682.1 532.5L682.1 532.7L682.2 532.9L682.3 533.1L682.4 533.3L682.5 533.6L682.6 533.7L682.8 533.9L682.9 534.1L683.0 534.3L683.2 534.5L683.4 534.6L683.5 534.8L683.7 534.9L683.9 535.0L684.1 535.2L684.3 535.3L684.5 535.4L684.7 535.5L685.0 535.5L685.2 535.6L685.4 535.7L685.6 535.7L685.6 537.9L686.0 537.9L686.3 538.0L686.7 537.9L687.0 537.9L687.3 537.9L687.7 537.8L688.0 537.7L688.3 537.6L688.7 537.5L689.0 537.4L689.3 537.2L689.6 537.1L689.9 536.9L690.2 536.7L690.5 536.5L690.7 536.3L691.0 536.0L691.2 535.8L691.4 535.5L691.6 535.2L691.8 534.9L692.0 534.6L692.2 534.3L692.3 534.0L692.5 533.7L692.6 533.4L690.6 532.5L690.6 532.3L690.7 532.0L690.7 531.8L690.7 531.6L690.7 531.4L690.7 531.1L690.7 530.9L690.7 530.7L690.6 530.4L690.6 530.2L690.5 530.0L690.4 529.8L690.3 529.6L690.2 529.4L690.1 529.1L690.0 529.0L689.9 528.8L689.7 528.6L689.6 528.4L689.4 528.2L689.3 528.1L689.1 527.9L688.9 527.8L688.7 527.7L688.5 527.5L688.3 527.4L688.1 527.3L687.9 527.2L687.7 527.2L687.4 527.1L687.2 527.0L687.3 524.8L687.0 524.8L686.7 524.8L686.3 524.8Z" fill="#dff0c2" fill-rule="evenodd" opacity="1"/><path d="M747.1 522.4L747.5 524.0L747.9 524.0L748.3 524.0L748.7 524.1L749.1 524.2L749.9 522.8L750.3 523.0L750.8 523.2L751.1 523.5L751.5 523.7L751.9 524.0L752.4 524.1L752.8 524.4L753.1 524.7L753.5 525.0L753.8 525.4L754.1 525.7L754.4 526.1L754.7 526.5L754.9 526.9L755.2 527.3L755.4 527.7L755.5 528.1L755.6 528.6L755.7 529.0L755.8 529.5L755.9 530.0L756.0 530.4L756.0 530.9L755.9 531.4L755.9 531.8L755.9 532.3L755.9 532.7L755.8 533.2L755.7 533.6L755.7 534.1L755.5 534.6L755.4 535.0L755.3 535.5L755.1 535.9L754.8 536.3L754.4 536.6L754.1 537.0L753.8 537.3L753.4 537.6L753.1 537.9L752.7 538.2L752.2 538.3L751.8 538.6L751.4 538.8L751.1 539.1L750.7 539.3L750.3 539.5L749.9 539.9L749.5 540.0L749.0 540.2L748.6 540.4L748.1 540.5L747.6 540.5L747.1 540.6L746.7 540.6L746.2 540.6L745.7 540.3L745.3 540.2L744.8 540.1L744.3 540.1L743.9 539.9L743.4 539.7L743.1 539.3L742.7 539.0L742.3 538.8L741.9 538.5L741.6 538.2L741.2 537.9L740.9 537.6L740.6 537.3L740.3 536.9L739.8 536.7L739.5 536.3L739.3 535.9L739.0 535.5L738.8 535.1L738.6 534.6L738.7 534.1L738.6 533.6L738.4 533.2L738.5 532.7L738.5 532.3L738.4 531.8L738.5 531.4L738.5 530.9L738.6 530.4L738.5 530.0L738.6 529.5L738.7 529.1L738.7 528.6L738.8 528.2L739.0 527.7L739.2 527.3L739.4 526.9L739.7 526.5L739.7 526.0L740.0 525.6L740.3 525.2L740.7 524.9L741.0 524.5L741.4 524.2L741.8 524.0L742.2 523.7L742.6 523.5L743.1 523.4L743.5 523.2L743.9 523.0L744.4 523.0L744.9 522.9L745.3 522.8L745.7 522.5L746.2 522.5L746.7 522.4L747.1 522.4Z M747.1 525.9L746.9 525.9L746.6 525.9L746.3 525.9L746.0 525.8L745.7 525.9L745.4 526.0L745.2 526.2L744.9 526.3L744.7 526.5L744.5 526.8L744.3 526.9L744.0 527.1L743.9 527.3L743.6 527.5L743.4 527.7L743.2 527.8L743.1 528.0L742.9 528.3L742.5 528.4L742.4 528.6L742.2 528.9L742.1 529.1L742.0 529.4L741.9 529.7L741.6 529.9L741.6 530.2L741.5 530.5L741.4 530.7L741.4 531.0L741.4 531.4L741.5 531.6L741.5 531.9L741.5 532.2L741.7 532.5L741.8 532.8L741.9 533.1L742.2 533.2L742.3 533.5L742.4 533.7L742.5 534.0L742.7 534.3L742.8 534.5L742.8 534.9L743.0 535.1L743.2 535.3L743.4 535.5L743.6 535.7L743.9 535.8L744.1 536.0L744.4 536.1L744.6 536.3L745.0 536.1L745.3 536.3L745.5 536.3L745.8 536.5L746.0 536.5L746.3 536.6L746.6 536.4L746.9 536.4L747.1 536.5L747.4 536.5L747.7 536.5L748.0 536.5L748.3 536.6L748.5 536.6L748.8 536.5L749.2 536.6L749.4 536.5L749.7 536.4L750.0 536.4L750.3 536.2L750.5 536.0L750.6 535.7L750.9 535.5L751.1 535.3L751.2 535.0L751.4 534.8L751.6 534.6L751.6 534.2L751.7 534.0L751.8 533.7L752.1 533.5L752.2 533.3L752.3 533.0L752.5 532.8L752.6 532.5L752.6 532.2L752.7 531.9L752.7 531.6L752.7 531.4L752.7 531.1L752.6 530.8L752.6 530.5L752.5 530.2L752.5 529.9L752.4 529.6L752.2 529.4L752.1 529.2L751.9 528.9L751.8 528.6L751.7 528.4L751.5 528.2L751.4 527.9L751.2 527.7L751.0 527.5L750.8 527.3L750.6 527.1L750.3 526.9L750.2 526.7L749.9 526.5L749.7 526.4L749.4 526.4L749.1 526.3L748.8 526.2L749.0 524.6L748.6 524.5L748.2 524.4L747.9 524.4L747.5 524.4L747.1 525.9Z" fill="#dff0c2" fill-rule="evenodd" opacity="1"/><path d="M808.0 523.5L808.4 523.5L808.8 523.5L809.2 523.5L810.0 521.7L810.5 521.8L811.0 522.1L811.4 522.3L811.9 522.5L812.5 522.6L812.9 522.8L813.3 523.1L813.8 523.3L814.3 523.6L814.7 523.9L815.2 524.1L815.5 524.5L815.9 524.9L816.0 525.5L816.3 526.0L816.5 526.4L816.7 526.9L816.9 527.4L817.1 527.9L817.1 528.4L817.2 528.9L817.4 529.4L817.5 529.8L817.6 530.3L817.6 530.8L817.8 531.4L817.8 531.9L817.8 532.4L818.0 532.9L817.9 533.5L817.8 534.0L817.5 534.5L817.4 535.0L817.2 535.4L816.9 535.9L816.6 536.4L816.4 536.8L815.9 537.1L815.6 537.5L815.3 537.9L815.0 538.4L814.7 538.8L814.3 539.1L813.7 539.2L813.3 539.5L812.8 539.8L812.4 540.0L811.9 540.3L811.5 540.5L811.0 540.7L810.5 540.8L810.0 540.9L809.5 541.2L809.0 541.3L808.5 541.3L808.0 541.3L807.4 541.3L806.9 541.3L806.4 541.0L805.9 540.9L805.4 540.8L804.9 540.7L804.4 540.5L804.0 540.4L803.4 540.3L803.0 540.0L802.5 539.7L801.9 539.8L801.4 539.4L801.0 539.1L800.7 538.7L800.3 538.3L799.9 537.8L800.0 537.2L799.7 536.7L799.4 536.3L799.6 535.6L799.4 535.2L799.2 534.7L799.2 534.2L799.1 533.7L799.0 533.3L798.5 532.9L798.4 532.4L798.4 531.9L798.2 531.4L798.2 530.8L798.3 530.3L798.2 529.8L798.3 529.3L798.4 528.8L798.6 528.3L798.8 527.8L799.0 527.3L799.2 526.9L799.4 526.4L799.7 526.0L799.9 525.5L800.2 525.1L800.6 524.7L801.1 524.5L801.5 524.1L801.8 523.8L802.3 523.6L802.7 523.3L803.2 523.0L803.6 522.8L804.1 522.6L804.5 522.4L804.9 522.0L805.9 523.7L806.3 523.6L806.7 523.5L807.1 523.5L807.6 523.5L808.0 523.5Z M808.0 524.1L807.6 524.1L807.2 524.1L806.8 524.1L806.5 524.2L806.1 524.3L806.3 526.2L806.0 526.1L805.7 526.3L805.4 526.4L805.2 526.5L804.9 526.7L804.7 526.8L804.5 527.1L804.3 527.3L804.1 527.5L804.1 527.8L803.9 528.0L803.7 528.3L803.5 528.4L803.3 528.7L803.2 528.9L803.1 529.2L803.0 529.4L802.9 529.7L802.8 530.0L802.8 530.2L802.7 530.5L802.6 530.8L802.5 531.1L802.5 531.4L802.4 531.6L802.4 531.9L802.5 532.2L802.1 532.6L802.2 532.9L802.3 533.2L802.6 533.4L802.7 533.7L802.8 534.0L803.4 534.0L803.5 534.2L803.7 534.5L804.2 534.4L804.3 534.6L804.5 534.8L804.8 534.9L804.9 535.1L805.1 535.2L805.1 535.7L805.4 535.8L805.6 536.0L805.8 536.2L806.1 536.3L806.3 536.4L806.6 536.6L806.9 536.6L807.1 536.7L807.4 536.6L807.7 536.6L808.0 536.6L808.2 536.6L808.5 536.5L808.8 536.5L809.1 536.6L809.4 536.6L809.6 536.5L809.9 536.4L810.2 536.3L810.4 536.2L810.7 536.1L811.0 536.0L811.2 535.8L811.3 535.4L811.5 535.2L811.7 535.0L812.0 534.9L812.1 534.7L812.3 534.5L812.3 534.2L812.5 533.9L812.6 533.7L812.7 533.4L812.8 533.2L812.9 532.9L812.8 532.7L812.9 532.4L813.0 532.1L813.3 531.9L813.3 531.6L813.3 531.4L813.5 531.1L813.5 530.8L813.5 530.5L813.5 530.2L813.4 529.9L813.3 529.6L813.1 529.4L813.0 529.1L812.8 528.9L812.6 528.7L812.4 528.5L812.3 528.2L811.9 528.2L811.7 528.0L811.5 527.8L811.5 527.5L811.3 527.3L811.0 527.1L810.9 526.9L810.6 526.7L810.4 526.6L810.2 526.3L809.9 526.2L809.7 526.1L809.4 526.2L809.1 526.1L809.1 524.1L808.7 524.1L808.4 524.1L808.0 524.1Z" fill="#dff0c2" fill-rule="evenodd" opacity="1"/><path d="M803.6 525.3L802.1 523.3M804.2 524.9L802.8 522.4M804.9 524.5L803.7 521.7M805.7 524.2L804.6 520.9M806.4 524.0L805.9 521.5M807.2 523.9L806.9 521.1M808.0 523.9L808.0 521.3M808.8 523.9L809.0 521.1" stroke="#dff0c2" stroke-width="0.6" fill="none"/><path d="M399.76 595.9h1.2c2.4 0 1.8-4.4 4.2-4.4h1.6" stroke="#a8e8b8" stroke-width="0.8" fill="none"/><circle cx="400.96" cy="595.9" r="0.9" fill="#a8e8b8"/><circle cx="405.76" cy="591.5" r="0.9" fill="#a8e8b8"/><path d="M521.42 595.9h1.2c2.4 0 1.8-4.4 4.2-4.4h1.6" stroke="#a8e8b8" stroke-width="0.8" fill="none"/><circle cx="522.62" cy="595.9" r="0.9" fill="#a8e8b8"/><circle cx="527.42" cy="591.5" r="0.9" fill="#a8e8b8"/><circle cx="503.82" cy="592.5" r="5.6" fill="none" stroke="#b6efc4" stroke-width="0.8"/><path d="M503.82 586.9A5.6 5.6 0 0 1 503.82 598.1Z" fill="#b6efc4"/><path d="M643.08 595.9h1.2c2.4 0 1.8-4.4 4.2-4.4h1.6" stroke="#a8e8b8" stroke-width="0.8" fill="none"/><circle cx="644.28" cy="595.9" r="0.9" fill="#a8e8b8"/><circle cx="649.08" cy="591.5" r="0.9" fill="#a8e8b8"/><path d="M764.74 595.9h1.2c2.4 0 1.8-4.4 4.2-4.4h1.6" stroke="#a8e8b8" stroke-width="0.8" fill="none"/><circle cx="765.94" cy="595.9" r="0.9" fill="#a8e8b8"/><circle cx="770.74" cy="591.5" r="0.9" fill="#a8e8b8"/><circle cx="625.48" cy="622.1" r="6.2" fill="none" stroke="#f0c98c" stroke-width="0.8"/><path d="M625.48 615.9A6.2 6.2 0 0 1 625.48 628.3Z" fill="#f0c98c"/><circle cx="503.82" cy="676.6" r="5.4" fill="none" stroke="#e8a89a" stroke-width="0.8"/><path d="M503.82 676.6v-5.4" stroke="#e8a89a" stroke-width="0.8"/></svg>
<div style="left:231px;top:685.6px;width:609px;height:28.6px;background:#3b3b3b;"></div>
<div style="left:396px;top:685.6px;width:444px;height:28.6px;background:linear-gradient(90deg,rgba(78,66,55,0) 0,#4e4237 18px);"></div>
<div style="left:412.8px;top:685.6px;width:60.4px;height:18.2px;background:#6d655f;"></div>
<svg style="left:256px;top:692.9px;" width="9" height="5" viewBox="0 0 9 5"><path d="M0.8 4L4.5 1l3.7 3" stroke="#dcdcdc" stroke-width="1.1" fill="none"/></svg>
<span class="t" style="top:706.21px;font-size:6.6px;color:#c4c4c4;left:260.5px;transform:translateX(-50%);">1</span>
<div style="left:290.73px;top:686px;width:0.7px;height:28px;background:rgba(255,255,255,.06);"></div>
<svg style="left:316.83px;top:692.9px;" width="9" height="5" viewBox="0 0 9 5"><path d="M0.8 4L4.5 1l3.7 3" stroke="#dcdcdc" stroke-width="1.1" fill="none"/></svg>
<span class="t" style="top:706.21px;font-size:6.6px;color:#c4c4c4;left:321.33px;transform:translateX(-50%);">2</span>
<div style="left:351.56px;top:686px;width:0.7px;height:28px;background:rgba(255,255,255,.06);"></div>
<svg style="left:377.66px;top:692.9px;" width="9" height="5" viewBox="0 0 9 5"><path d="M0.8 4L4.5 1l3.7 3" stroke="#dcdcdc" stroke-width="1.1" fill="none"/></svg>
<span class="t" style="top:706.21px;font-size:6.6px;color:#c4c4c4;left:382.16px;transform:translateX(-50%);">3</span>
<div style="left:412.39px;top:686px;width:0.7px;height:28px;background:rgba(255,255,255,.06);"></div>
<svg style="left:438.49px;top:692.9px;" width="9" height="5" viewBox="0 0 9 5"><path d="M0.8 4L4.5 1l3.7 3" stroke="#dcdcdc" stroke-width="1.1" fill="none"/></svg>
<span class="t" style="top:706.21px;font-size:6.6px;color:#c4c4c4;left:442.99px;transform:translateX(-50%);">4</span>
<div style="left:473.22px;top:686px;width:0.7px;height:28px;background:rgba(255,255,255,.06);"></div>
<svg style="left:499.32px;top:692.9px;" width="9" height="5" viewBox="0 0 9 5"><path d="M0.8 4L4.5 1l3.7 3" stroke="#dcdcdc" stroke-width="1.1" fill="none"/></svg>
<span class="t" style="top:706.21px;font-size:6.6px;color:#c4c4c4;left:503.82px;transform:translateX(-50%);">5</span>
<div style="left:534.05px;top:686px;width:0.7px;height:28px;background:rgba(255,255,255,.06);"></div>
<svg style="left:560.15px;top:692.9px;" width="9" height="5" viewBox="0 0 9 5"><path d="M0.8 4L4.5 1l3.7 3" stroke="#dcdcdc" stroke-width="1.1" fill="none"/></svg>
<span class="t" style="top:706.21px;font-size:6.6px;color:#c4c4c4;left:564.65px;transform:translateX(-50%);">6</span>
<div style="left:594.88px;top:686px;width:0.7px;height:28px;background:rgba(255,255,255,.06);"></div>
<svg style="left:620.98px;top:692.9px;" width="9" height="5" viewBox="0 0 9 5"><path d="M0.8 4L4.5 1l3.7 3" stroke="#dcdcdc" stroke-width="1.1" fill="none"/></svg>
<span class="t" style="top:706.21px;font-size:6.6px;color:#c4c4c4;left:625.48px;transform:translateX(-50%);">7</span>
<div style="left:655.71px;top:686px;width:0.7px;height:28px;background:rgba(255,255,255,.06);"></div>
<svg style="left:681.81px;top:692.9px;" width="9" height="5" viewBox="0 0 9 5"><path d="M0.8 4L4.5 1l3.7 3" stroke="#dcdcdc" stroke-width="1.1" fill="none"/></svg>
<span class="t" style="top:706.21px;font-size:6.6px;color:#c4c4c4;left:686.31px;transform:translateX(-50%);">8</span>
<div style="left:716.54px;top:686px;width:0.7px;height:28px;background:rgba(255,255,255,.06);"></div>
<svg style="left:742.64px;top:692.9px;" width="9" height="5" viewBox="0 0 9 5"><path d="M0.8 4L4.5 1l3.7 3" stroke="#dcdcdc" stroke-width="1.1" fill="none"/></svg>
<span class="t" style="top:706.21px;font-size:6.6px;color:#c4c4c4;left:747.14px;transform:translateX(-50%);">9</span>
<div style="left:777.37px;top:686px;width:0.7px;height:28px;background:rgba(255,255,255,.06);"></div>
<svg style="left:803.47px;top:692.9px;" width="9" height="5" viewBox="0 0 9 5"><path d="M0.8 4L4.5 1l3.7 3" stroke="#dcdcdc" stroke-width="1.1" fill="none"/></svg>
<span class="t" style="top:706.21px;font-size:6.6px;color:#c4c4c4;left:807.97px;transform:translateX(-50%);">10</span>
<div style="left:839.6px;top:71.6px;width:16.6px;height:642.6px;background:#555555;"></div>
<div style="left:839.6px;top:71.6px;width:0.8px;height:642.6px;background:#3c3c3c;"></div>
<div style="left:840px;top:95.6px;width:16px;height:0.8px;background:#444;"></div>
<div style="left:840px;top:145.6px;width:16px;height:0.8px;background:#444;"></div>
<div style="left:840px;top:202.6px;width:16px;height:0.8px;background:#444;"></div>
<div style="left:840px;top:259.6px;width:16px;height:0.8px;background:#444;"></div>
<div style="left:840px;top:312.6px;width:16px;height:0.8px;background:#444;"></div>
<div style="left:840px;top:428.6px;width:16px;height:0.8px;background:#444;"></div>
<div style="left:840px;top:505.6px;width:16px;height:0.8px;background:#444;"></div>
<div style="left:840px;top:545.6px;width:16px;height:0.8px;background:#444;"></div>
<div style="left:840px;top:572.6px;width:16px;height:0.8px;background:#444;"></div>
<div style="left:840px;top:601.6px;width:16px;height:0.8px;background:#444;"></div>
<div style="left:840px;top:631.6px;width:16px;height:0.8px;background:#444;"></div>
<div style="left:840px;top:657.6px;width:16px;height:0.8px;background:#444;"></div>
<div style="left:840px;top:684.6px;width:16px;height:0.8px;background:#444;"></div>
<div style="left:840px;top:710.6px;width:16px;height:0.8px;background:#444;"></div>
<svg style="left:842.6px;top:80.4px;" width="11" height="8" viewBox="0 0 11 8"><path d="M4.6 0.8v6.4L0.8 4zM6.4 0.8v6.4L10.2 4z" fill="none" stroke="#dedede" stroke-width="0.8"/></svg>
<svg style="left:0;top:0" width="1144" height="716" viewBox="0 0 1144 716"><circle cx="848" cy="122.1" r="4.5" fill="none" stroke="#f4f4f4" stroke-width="0.9"/><path d="M848 117.6A4.5 4.5 0 0 1 848 126.6Z" fill="#f4f4f4"/><circle cx="848" cy="175.6" r="4.5" fill="none" stroke="#f4f4f4" stroke-width="0.9"/><path d="M848 171.1A4.5 4.5 0 0 1 848 180.1Z" fill="#f4f4f4"/><circle cx="848" cy="468.6" r="4.5" fill="none" stroke="#f4f4f4" stroke-width="0.9"/><path d="M848 464.1A4.5 4.5 0 0 1 848 473.1Z" fill="#f4f4f4"/><circle cx="848" cy="527.1" r="4.5" fill="none" stroke="#f4f4f4" stroke-width="0.9"/><path d="M848 522.6A4.5 4.5 0 0 1 848 531.6Z" fill="#f4f4f4"/><circle cx="848" cy="588.6" r="4.5" fill="none" stroke="#f4f4f4" stroke-width="0.9"/><path d="M848 584.1A4.5 4.5 0 0 1 848 593.1Z" fill="#f4f4f4"/><circle cx="848" cy="618.1" r="4.5" fill="none" stroke="#f4f4f4" stroke-width="0.9"/><path d="M848 613.6A4.5 4.5 0 0 1 848 622.6Z" fill="#f4f4f4"/><circle cx="848" cy="287.1" r="4.3" fill="none" stroke="#e4e4e4" stroke-width="0.8"/><path d="M848 287.1v-4.3" stroke="#e4e4e4" stroke-width="0.8"/><circle cx="848" cy="672.1" r="4.3" fill="none" stroke="#e4e4e4" stroke-width="0.8"/><path d="M848 672.1v-4.3" stroke="#e4e4e4" stroke-width="0.8"/></svg>
<div style="left:844.6px;top:697px;width:6.6px;height:6.6px;background:#f2f2f2;border-radius:0.5px;"></div>
<div style="left:229.5px;top:70.7px;width:628px;height:644px;border:1.7px solid #74b2fb;border-radius:1px;pointer-events:none;"></div>
<div style="left:1143px;top:0px;width:1px;height:714.6px;background:rgba(140,140,140,.42);"></div>
</div></body></html>
